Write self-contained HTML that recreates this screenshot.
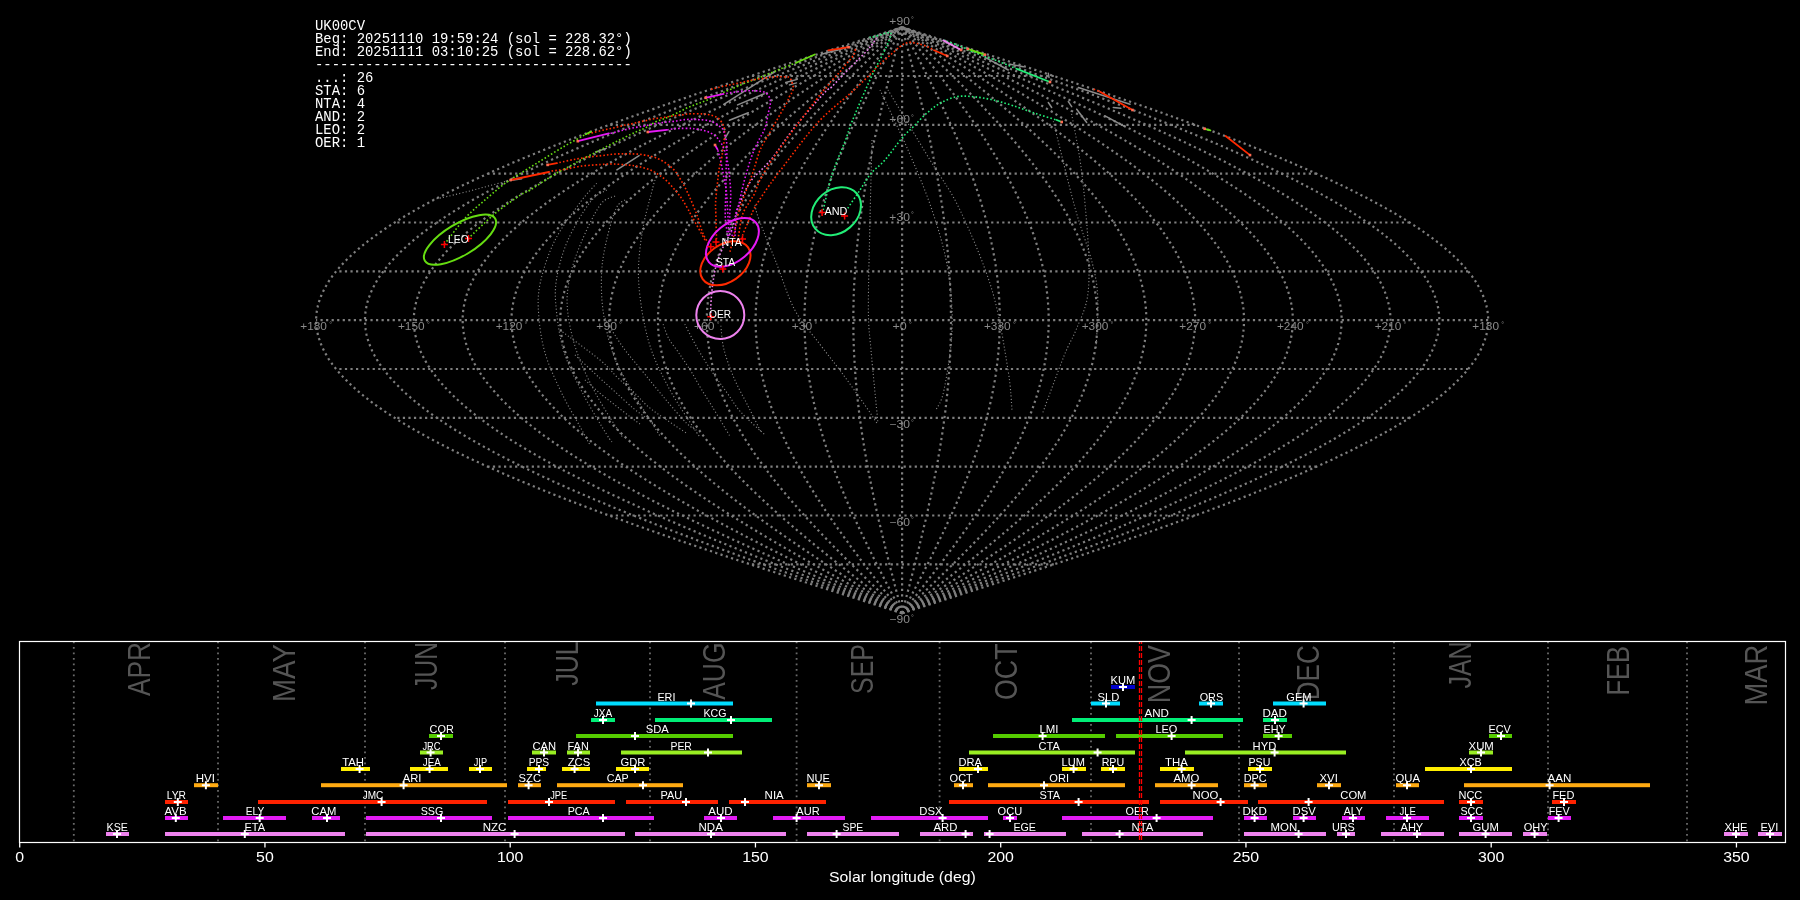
<!DOCTYPE html>
<html><head><meta charset="utf-8"><style>html,body{margin:0;padding:0;background:#000;overflow:hidden}svg{display:block;will-change:transform}</style></head>
<body><svg width="1800" height="900" viewBox="0 0 1800 900">
<rect width="1800" height="900" fill="#000"/>
<g fill="none" stroke="#7f7f7f" stroke-width="2.2" stroke-dasharray="2.2 3.35">
<path d="M902.1,613.2 L907.3,611.6 L912.4,609.9 L917.5,608.3 L922.6,606.7 L927.7,605.1 L932.8,603.4 L937.9,601.8 L943.0,600.2 L948.1,598.6 L953.2,596.9 L958.3,595.3 L963.4,593.7 L968.5,592.0 L973.6,590.4 L978.6,588.8 L983.7,587.2 L988.8,585.5 L993.8,583.9 L998.9,582.3 L1003.9,580.6 L1008.9,579.0 L1014.0,577.4 L1019.0,575.8 L1024.0,574.1 L1029.0,572.5 L1034.0,570.9 L1039.0,569.3 L1043.9,567.6 L1048.9,566.0 L1053.8,564.4 L1058.8,562.7 L1063.7,561.1 L1068.6,559.5 L1073.5,557.9 L1078.4,556.2 L1083.2,554.6 L1088.1,553.0 L1092.9,551.3 L1097.8,549.7 L1102.6,548.1 L1107.4,546.5 L1112.2,544.8 L1116.9,543.2 L1121.7,541.6 L1126.4,540.0 L1131.1,538.3 L1135.8,536.7 L1140.5,535.1 L1145.2,533.4 L1149.8,531.8 L1154.4,530.2 L1159.0,528.6 L1163.6,526.9 L1168.2,525.3 L1172.7,523.7 L1177.3,522.0 L1181.8,520.4 L1186.3,518.8 L1190.7,517.2 L1195.2,515.5 L1199.6,513.9 L1204.0,512.3 L1208.3,510.7 L1212.7,509.0 L1217.0,507.4 L1221.3,505.8 L1225.6,504.1 L1229.8,502.5 L1234.1,500.9 L1238.3,499.3 L1242.4,497.6 L1246.6,496.0 L1250.7,494.4 L1254.8,492.7 L1258.9,491.1 L1262.9,489.5 L1266.9,487.9 L1270.9,486.2 L1274.9,484.6 L1278.8,483.0 L1282.7,481.4 L1286.6,479.7 L1290.5,478.1 L1294.3,476.5 L1298.1,474.8 L1301.8,473.2 L1305.5,471.6 L1309.2,470.0 L1312.9,468.3 L1316.5,466.7 L1320.1,465.1 L1323.7,463.4 L1327.2,461.8 L1330.7,460.2 L1334.2,458.6 L1337.6,456.9 L1341.0,455.3 L1344.4,453.7 L1347.8,452.1 L1351.1,450.4 L1354.3,448.8 L1357.6,447.2 L1360.8,445.5 L1363.9,443.9 L1367.1,442.3 L1370.2,440.7 L1373.2,439.0 L1376.2,437.4 L1379.2,435.8 L1382.2,434.1 L1385.1,432.5 L1388.0,430.9 L1390.8,429.3 L1393.6,427.6 L1396.4,426.0 L1399.1,424.4 L1401.8,422.8 L1404.5,421.1 L1407.1,419.5 L1409.6,417.9 L1412.2,416.2 L1414.7,414.6 L1417.1,413.0 L1419.6,411.4 L1421.9,409.7 L1424.3,408.1 L1426.6,406.5 L1428.9,404.8 L1431.1,403.2 L1433.3,401.6 L1435.4,400.0 L1437.5,398.3 L1439.6,396.7 L1441.6,395.1 L1443.6,393.5 L1445.5,391.8 L1447.4,390.2 L1449.2,388.6 L1451.0,386.9 L1452.8,385.3 L1454.5,383.7 L1456.2,382.1 L1457.9,380.4 L1459.5,378.8 L1461.0,377.2 L1462.6,375.5 L1464.0,373.9 L1465.5,372.3 L1466.8,370.7 L1468.2,369.0 L1469.5,367.4 L1470.8,365.8 L1472.0,364.2 L1473.1,362.5 L1474.3,360.9 L1475.4,359.3 L1476.4,357.6 L1477.4,356.0 L1478.3,354.4 L1479.3,352.8 L1480.1,351.1 L1480.9,349.5 L1481.7,347.9 L1482.5,346.2 L1483.1,344.6 L1483.8,343.0 L1484.4,341.4 L1484.9,339.7 L1485.5,338.1 L1485.9,336.5 L1486.4,334.9 L1486.7,333.2 L1487.1,331.6 L1487.4,330.0 L1487.6,328.3 L1487.8,326.7 L1488.0,325.1 L1488.1,323.5 L1488.1,321.8 L1488.2,320.2 L1488.1,318.6 L1488.1,316.9 L1488.0,315.3 L1487.8,313.7 L1487.6,312.1 L1487.4,310.4 L1487.1,308.8 L1486.7,307.2 L1486.4,305.5 L1485.9,303.9 L1485.5,302.3 L1484.9,300.7 L1484.4,299.0 L1483.8,297.4 L1483.1,295.8 L1482.5,294.2 L1481.7,292.5 L1480.9,290.9 L1480.1,289.3 L1479.3,287.6 L1478.3,286.0 L1477.4,284.4 L1476.4,282.8 L1475.4,281.1 L1474.3,279.5 L1473.1,277.9 L1472.0,276.2 L1470.8,274.6 L1469.5,273.0 L1468.2,271.4 L1466.8,269.7 L1465.5,268.1 L1464.0,266.5 L1462.6,264.9 L1461.0,263.2 L1459.5,261.6 L1457.9,260.0 L1456.2,258.3 L1454.5,256.7 L1452.8,255.1 L1451.0,253.5 L1449.2,251.8 L1447.4,250.2 L1445.5,248.6 L1443.6,246.9 L1441.6,245.3 L1439.6,243.7 L1437.5,242.1 L1435.4,240.4 L1433.3,238.8 L1431.1,237.2 L1428.9,235.6 L1426.6,233.9 L1424.3,232.3 L1421.9,230.7 L1419.6,229.0 L1417.1,227.4 L1414.7,225.8 L1412.2,224.2 L1409.6,222.5 L1407.1,220.9 L1404.5,219.3 L1401.8,217.6 L1399.1,216.0 L1396.4,214.4 L1393.6,212.8 L1390.8,211.1 L1388.0,209.5 L1385.1,207.9 L1382.2,206.3 L1379.2,204.6 L1376.2,203.0 L1373.2,201.4 L1370.2,199.7 L1367.1,198.1 L1363.9,196.5 L1360.8,194.9 L1357.6,193.2 L1354.3,191.6 L1351.1,190.0 L1347.8,188.3 L1344.4,186.7 L1341.0,185.1 L1337.6,183.5 L1334.2,181.8 L1330.7,180.2 L1327.2,178.6 L1323.7,177.0 L1320.1,175.3 L1316.5,173.7 L1312.9,172.1 L1309.2,170.4 L1305.5,168.8 L1301.8,167.2 L1298.1,165.6 L1294.3,163.9 L1290.5,162.3 L1286.6,160.7 L1282.7,159.0 L1278.8,157.4 L1274.9,155.8 L1270.9,154.2 L1266.9,152.5 L1262.9,150.9 L1258.9,149.3 L1254.8,147.7 L1250.7,146.0 L1246.6,144.4 L1242.4,142.8 L1238.3,141.1 L1234.1,139.5 L1229.8,137.9 L1225.6,136.3 L1221.3,134.6 L1217.0,133.0 L1212.7,131.4 L1208.3,129.7 L1204.0,128.1 L1199.6,126.5 L1195.2,124.9 L1190.7,123.2 L1186.3,121.6 L1181.8,120.0 L1177.3,118.4 L1172.7,116.7 L1168.2,115.1 L1163.6,113.5 L1159.0,111.8 L1154.4,110.2 L1149.8,108.6 L1145.2,107.0 L1140.5,105.3 L1135.8,103.7 L1131.1,102.1 L1126.4,100.4 L1121.7,98.8 L1116.9,97.2 L1112.2,95.6 L1107.4,93.9 L1102.6,92.3 L1097.8,90.7 L1092.9,89.1 L1088.1,87.4 L1083.2,85.8 L1078.4,84.2 L1073.5,82.5 L1068.6,80.9 L1063.7,79.3 L1058.8,77.7 L1053.8,76.0 L1048.9,74.4 L1043.9,72.8 L1039.0,71.1 L1034.0,69.5 L1029.0,67.9 L1024.0,66.3 L1019.0,64.6 L1014.0,63.0 L1008.9,61.4 L1003.9,59.8 L998.9,58.1 L993.8,56.5 L988.8,54.9 L983.7,53.2 L978.6,51.6 L973.6,50.0 L968.5,48.4 L963.4,46.7 L958.3,45.1 L953.2,43.5 L948.1,41.8 L943.0,40.2 L937.9,38.6 L932.8,37.0 L927.7,35.3 L922.6,33.7 L917.5,32.1 L912.4,30.5 L907.3,28.8 L902.1,27.2"/>
<path d="M902.1,613.2 L906.8,611.6 L911.5,609.9 L916.2,608.3 L920.9,606.7 L925.6,605.1 L930.3,603.4 L934.9,601.8 L939.6,600.2 L944.3,598.6 L949.0,596.9 L953.6,595.3 L958.3,593.7 L963.0,592.0 L967.6,590.4 L972.3,588.8 L976.9,587.2 L981.5,585.5 L986.2,583.9 L990.8,582.3 L995.4,580.6 L1000.0,579.0 L1004.6,577.4 L1009.2,575.8 L1013.8,574.1 L1018.4,572.5 L1023.0,570.9 L1027.6,569.3 L1032.1,567.6 L1036.6,566.0 L1041.2,564.4 L1045.7,562.7 L1050.2,561.1 L1054.7,559.5 L1059.2,557.9 L1063.7,556.2 L1068.1,554.6 L1072.6,553.0 L1077.0,551.3 L1081.5,549.7 L1085.9,548.1 L1090.3,546.5 L1094.7,544.8 L1099.0,543.2 L1103.4,541.6 L1107.7,540.0 L1112.0,538.3 L1116.3,536.7 L1120.6,535.1 L1124.9,533.4 L1129.2,531.8 L1133.4,530.2 L1137.6,528.6 L1141.8,526.9 L1146.0,525.3 L1150.2,523.7 L1154.3,522.0 L1158.5,520.4 L1162.6,518.8 L1166.7,517.2 L1170.7,515.5 L1174.8,513.9 L1178.8,512.3 L1182.8,510.7 L1186.8,509.0 L1190.8,507.4 L1194.7,505.8 L1198.6,504.1 L1202.5,502.5 L1206.4,500.9 L1210.3,499.3 L1214.1,497.6 L1217.9,496.0 L1221.7,494.4 L1225.4,492.7 L1229.2,491.1 L1232.9,489.5 L1236.5,487.9 L1240.2,486.2 L1243.8,484.6 L1247.4,483.0 L1251.0,481.4 L1254.6,479.7 L1258.1,478.1 L1261.6,476.5 L1265.1,474.8 L1268.5,473.2 L1271.9,471.6 L1275.3,470.0 L1278.7,468.3 L1282.0,466.7 L1285.3,465.1 L1288.6,463.4 L1291.8,461.8 L1295.0,460.2 L1298.2,458.6 L1301.3,456.9 L1304.5,455.3 L1307.6,453.7 L1310.6,452.1 L1313.6,450.4 L1316.6,448.8 L1319.6,447.2 L1322.5,445.5 L1325.4,443.9 L1328.3,442.3 L1331.2,440.7 L1334.0,439.0 L1336.7,437.4 L1339.5,435.8 L1342.2,434.1 L1344.8,432.5 L1347.5,430.9 L1350.1,429.3 L1352.7,427.6 L1355.2,426.0 L1357.7,424.4 L1360.2,422.8 L1362.6,421.1 L1365.0,419.5 L1367.4,417.9 L1369.7,416.2 L1372.0,414.6 L1374.2,413.0 L1376.4,411.4 L1378.6,409.7 L1380.8,408.1 L1382.9,406.5 L1385.0,404.8 L1387.0,403.2 L1389.0,401.6 L1391.0,400.0 L1392.9,398.3 L1394.8,396.7 L1396.6,395.1 L1398.4,393.5 L1400.2,391.8 L1401.9,390.2 L1403.6,388.6 L1405.3,386.9 L1406.9,385.3 L1408.5,383.7 L1410.1,382.1 L1411.6,380.4 L1413.0,378.8 L1414.5,377.2 L1415.9,375.5 L1417.2,373.9 L1418.5,372.3 L1419.8,370.7 L1421.0,369.0 L1422.2,367.4 L1423.4,365.8 L1424.5,364.2 L1425.6,362.5 L1426.6,360.9 L1427.6,359.3 L1428.5,357.6 L1429.5,356.0 L1430.3,354.4 L1431.2,352.8 L1432.0,351.1 L1432.7,349.5 L1433.4,347.9 L1434.1,346.2 L1434.7,344.6 L1435.3,343.0 L1435.9,341.4 L1436.4,339.7 L1436.9,338.1 L1437.3,336.5 L1437.7,334.9 L1438.0,333.2 L1438.3,331.6 L1438.6,330.0 L1438.8,328.3 L1439.0,326.7 L1439.1,325.1 L1439.2,323.5 L1439.3,321.8 L1439.3,320.2 L1439.3,318.6 L1439.2,316.9 L1439.1,315.3 L1439.0,313.7 L1438.8,312.1 L1438.6,310.4 L1438.3,308.8 L1438.0,307.2 L1437.7,305.5 L1437.3,303.9 L1436.9,302.3 L1436.4,300.7 L1435.9,299.0 L1435.3,297.4 L1434.7,295.8 L1434.1,294.2 L1433.4,292.5 L1432.7,290.9 L1432.0,289.3 L1431.2,287.6 L1430.3,286.0 L1429.5,284.4 L1428.5,282.8 L1427.6,281.1 L1426.6,279.5 L1425.6,277.9 L1424.5,276.2 L1423.4,274.6 L1422.2,273.0 L1421.0,271.4 L1419.8,269.7 L1418.5,268.1 L1417.2,266.5 L1415.9,264.9 L1414.5,263.2 L1413.0,261.6 L1411.6,260.0 L1410.1,258.3 L1408.5,256.7 L1406.9,255.1 L1405.3,253.5 L1403.6,251.8 L1401.9,250.2 L1400.2,248.6 L1398.4,246.9 L1396.6,245.3 L1394.8,243.7 L1392.9,242.1 L1391.0,240.4 L1389.0,238.8 L1387.0,237.2 L1385.0,235.6 L1382.9,233.9 L1380.8,232.3 L1378.6,230.7 L1376.4,229.0 L1374.2,227.4 L1372.0,225.8 L1369.7,224.2 L1367.4,222.5 L1365.0,220.9 L1362.6,219.3 L1360.2,217.6 L1357.7,216.0 L1355.2,214.4 L1352.7,212.8 L1350.1,211.1 L1347.5,209.5 L1344.8,207.9 L1342.2,206.3 L1339.5,204.6 L1336.7,203.0 L1334.0,201.4 L1331.2,199.7 L1328.3,198.1 L1325.4,196.5 L1322.5,194.9 L1319.6,193.2 L1316.6,191.6 L1313.6,190.0 L1310.6,188.3 L1307.6,186.7 L1304.5,185.1 L1301.3,183.5 L1298.2,181.8 L1295.0,180.2 L1291.8,178.6 L1288.6,177.0 L1285.3,175.3 L1282.0,173.7 L1278.7,172.1 L1275.3,170.4 L1271.9,168.8 L1268.5,167.2 L1265.1,165.6 L1261.6,163.9 L1258.1,162.3 L1254.6,160.7 L1251.0,159.0 L1247.4,157.4 L1243.8,155.8 L1240.2,154.2 L1236.5,152.5 L1232.9,150.9 L1229.2,149.3 L1225.4,147.7 L1221.7,146.0 L1217.9,144.4 L1214.1,142.8 L1210.3,141.1 L1206.4,139.5 L1202.5,137.9 L1198.6,136.3 L1194.7,134.6 L1190.8,133.0 L1186.8,131.4 L1182.8,129.7 L1178.8,128.1 L1174.8,126.5 L1170.7,124.9 L1166.7,123.2 L1162.6,121.6 L1158.5,120.0 L1154.3,118.4 L1150.2,116.7 L1146.0,115.1 L1141.8,113.5 L1137.6,111.8 L1133.4,110.2 L1129.2,108.6 L1124.9,107.0 L1120.6,105.3 L1116.3,103.7 L1112.0,102.1 L1107.7,100.4 L1103.4,98.8 L1099.0,97.2 L1094.7,95.6 L1090.3,93.9 L1085.9,92.3 L1081.5,90.7 L1077.0,89.1 L1072.6,87.4 L1068.1,85.8 L1063.7,84.2 L1059.2,82.5 L1054.7,80.9 L1050.2,79.3 L1045.7,77.7 L1041.2,76.0 L1036.6,74.4 L1032.1,72.8 L1027.6,71.1 L1023.0,69.5 L1018.4,67.9 L1013.8,66.3 L1009.2,64.6 L1004.6,63.0 L1000.0,61.4 L995.4,59.8 L990.8,58.1 L986.2,56.5 L981.5,54.9 L976.9,53.2 L972.3,51.6 L967.6,50.0 L963.0,48.4 L958.3,46.7 L953.6,45.1 L949.0,43.5 L944.3,41.8 L939.6,40.2 L934.9,38.6 L930.3,37.0 L925.6,35.3 L920.9,33.7 L916.2,32.1 L911.5,30.5 L906.8,28.8 L902.1,27.2"/>
<path d="M902.1,613.2 L906.4,611.6 L910.7,609.9 L914.9,608.3 L919.2,606.7 L923.5,605.1 L927.7,603.4 L932.0,601.8 L936.2,600.2 L940.5,598.6 L944.7,596.9 L949.0,595.3 L953.2,593.7 L957.4,592.0 L961.7,590.4 L965.9,588.8 L970.1,587.2 L974.3,585.5 L978.5,583.9 L982.7,582.3 L986.9,580.6 L991.1,579.0 L995.3,577.4 L999.5,575.8 L1003.7,574.1 L1007.8,572.5 L1012.0,570.9 L1016.2,569.3 L1020.3,567.6 L1024.4,566.0 L1028.5,564.4 L1032.7,562.7 L1036.8,561.1 L1040.8,559.5 L1044.9,557.9 L1049.0,556.2 L1053.1,554.6 L1057.1,553.0 L1061.1,551.3 L1065.2,549.7 L1069.2,548.1 L1073.2,546.5 L1077.2,544.8 L1081.1,543.2 L1085.1,541.6 L1089.0,540.0 L1093.0,538.3 L1096.9,536.7 L1100.8,535.1 L1104.7,533.4 L1108.5,531.8 L1112.4,530.2 L1116.2,528.6 L1120.0,526.9 L1123.9,525.3 L1127.6,523.7 L1131.4,522.0 L1135.2,520.4 L1138.9,518.8 L1142.6,517.2 L1146.3,515.5 L1150.0,513.9 L1153.7,512.3 L1157.3,510.7 L1160.9,509.0 L1164.5,507.4 L1168.1,505.8 L1171.7,504.1 L1175.2,502.5 L1178.7,500.9 L1182.3,499.3 L1185.7,497.6 L1189.2,496.0 L1192.6,494.4 L1196.0,492.7 L1199.4,491.1 L1202.8,489.5 L1206.1,487.9 L1209.5,486.2 L1212.8,484.6 L1216.0,483.0 L1219.3,481.4 L1222.5,479.7 L1225.7,478.1 L1228.9,476.5 L1232.1,474.8 L1235.2,473.2 L1238.3,471.6 L1241.4,470.0 L1244.4,468.3 L1247.5,466.7 L1250.5,465.1 L1253.4,463.4 L1256.4,461.8 L1259.3,460.2 L1262.2,458.6 L1265.1,456.9 L1267.9,455.3 L1270.7,453.7 L1273.5,452.1 L1276.2,450.4 L1279.0,448.8 L1281.7,447.2 L1284.3,445.5 L1287.0,443.9 L1289.6,442.3 L1292.2,440.7 L1294.7,439.0 L1297.2,437.4 L1299.7,435.8 L1302.2,434.1 L1304.6,432.5 L1307.0,430.9 L1309.4,429.3 L1311.7,427.6 L1314.0,426.0 L1316.3,424.4 L1318.5,422.8 L1320.7,421.1 L1322.9,419.5 L1325.1,417.9 L1327.2,416.2 L1329.3,414.6 L1331.3,413.0 L1333.3,411.4 L1335.3,409.7 L1337.3,408.1 L1339.2,406.5 L1341.1,404.8 L1342.9,403.2 L1344.7,401.6 L1346.5,400.0 L1348.3,398.3 L1350.0,396.7 L1351.7,395.1 L1353.3,393.5 L1354.9,391.8 L1356.5,390.2 L1358.1,388.6 L1359.6,386.9 L1361.0,385.3 L1362.5,383.7 L1363.9,382.1 L1365.3,380.4 L1366.6,378.8 L1367.9,377.2 L1369.2,375.5 L1370.4,373.9 L1371.6,372.3 L1372.7,370.7 L1373.9,369.0 L1374.9,367.4 L1376.0,365.8 L1377.0,364.2 L1378.0,362.5 L1378.9,360.9 L1379.8,359.3 L1380.7,357.6 L1381.5,356.0 L1382.3,354.4 L1383.1,352.8 L1383.8,351.1 L1384.5,349.5 L1385.1,347.9 L1385.7,346.2 L1386.3,344.6 L1386.8,343.0 L1387.4,341.4 L1387.8,339.7 L1388.2,338.1 L1388.6,336.5 L1389.0,334.9 L1389.3,333.2 L1389.6,331.6 L1389.8,330.0 L1390.0,328.3 L1390.2,326.7 L1390.3,325.1 L1390.4,323.5 L1390.5,321.8 L1390.5,320.2 L1390.5,318.6 L1390.4,316.9 L1390.3,315.3 L1390.2,313.7 L1390.0,312.1 L1389.8,310.4 L1389.6,308.8 L1389.3,307.2 L1389.0,305.5 L1388.6,303.9 L1388.2,302.3 L1387.8,300.7 L1387.4,299.0 L1386.8,297.4 L1386.3,295.8 L1385.7,294.2 L1385.1,292.5 L1384.5,290.9 L1383.8,289.3 L1383.1,287.6 L1382.3,286.0 L1381.5,284.4 L1380.7,282.8 L1379.8,281.1 L1378.9,279.5 L1378.0,277.9 L1377.0,276.2 L1376.0,274.6 L1374.9,273.0 L1373.9,271.4 L1372.7,269.7 L1371.6,268.1 L1370.4,266.5 L1369.2,264.9 L1367.9,263.2 L1366.6,261.6 L1365.3,260.0 L1363.9,258.3 L1362.5,256.7 L1361.0,255.1 L1359.6,253.5 L1358.1,251.8 L1356.5,250.2 L1354.9,248.6 L1353.3,246.9 L1351.7,245.3 L1350.0,243.7 L1348.3,242.1 L1346.5,240.4 L1344.7,238.8 L1342.9,237.2 L1341.1,235.6 L1339.2,233.9 L1337.3,232.3 L1335.3,230.7 L1333.3,229.0 L1331.3,227.4 L1329.3,225.8 L1327.2,224.2 L1325.1,222.5 L1322.9,220.9 L1320.7,219.3 L1318.5,217.6 L1316.3,216.0 L1314.0,214.4 L1311.7,212.8 L1309.4,211.1 L1307.0,209.5 L1304.6,207.9 L1302.2,206.3 L1299.7,204.6 L1297.2,203.0 L1294.7,201.4 L1292.2,199.7 L1289.6,198.1 L1287.0,196.5 L1284.3,194.9 L1281.7,193.2 L1279.0,191.6 L1276.2,190.0 L1273.5,188.3 L1270.7,186.7 L1267.9,185.1 L1265.1,183.5 L1262.2,181.8 L1259.3,180.2 L1256.4,178.6 L1253.4,177.0 L1250.5,175.3 L1247.5,173.7 L1244.4,172.1 L1241.4,170.4 L1238.3,168.8 L1235.2,167.2 L1232.1,165.6 L1228.9,163.9 L1225.7,162.3 L1222.5,160.7 L1219.3,159.0 L1216.0,157.4 L1212.8,155.8 L1209.5,154.2 L1206.1,152.5 L1202.8,150.9 L1199.4,149.3 L1196.0,147.7 L1192.6,146.0 L1189.2,144.4 L1185.7,142.8 L1182.3,141.1 L1178.7,139.5 L1175.2,137.9 L1171.7,136.3 L1168.1,134.6 L1164.5,133.0 L1160.9,131.4 L1157.3,129.7 L1153.7,128.1 L1150.0,126.5 L1146.3,124.9 L1142.6,123.2 L1138.9,121.6 L1135.2,120.0 L1131.4,118.4 L1127.6,116.7 L1123.9,115.1 L1120.0,113.5 L1116.2,111.8 L1112.4,110.2 L1108.5,108.6 L1104.7,107.0 L1100.8,105.3 L1096.9,103.7 L1093.0,102.1 L1089.0,100.4 L1085.1,98.8 L1081.1,97.2 L1077.2,95.6 L1073.2,93.9 L1069.2,92.3 L1065.2,90.7 L1061.1,89.1 L1057.1,87.4 L1053.1,85.8 L1049.0,84.2 L1044.9,82.5 L1040.8,80.9 L1036.8,79.3 L1032.7,77.7 L1028.5,76.0 L1024.4,74.4 L1020.3,72.8 L1016.2,71.1 L1012.0,69.5 L1007.8,67.9 L1003.7,66.3 L999.5,64.6 L995.3,63.0 L991.1,61.4 L986.9,59.8 L982.7,58.1 L978.5,56.5 L974.3,54.9 L970.1,53.2 L965.9,51.6 L961.7,50.0 L957.4,48.4 L953.2,46.7 L949.0,45.1 L944.7,43.5 L940.5,41.8 L936.2,40.2 L932.0,38.6 L927.7,37.0 L923.5,35.3 L919.2,33.7 L914.9,32.1 L910.7,30.5 L906.4,28.8 L902.1,27.2"/>
<path d="M902.1,613.2 L906.0,611.6 L909.8,609.9 L913.7,608.3 L917.5,606.7 L921.3,605.1 L925.2,603.4 L929.0,601.8 L932.8,600.2 L936.6,598.6 L940.5,596.9 L944.3,595.3 L948.1,593.7 L951.9,592.0 L955.7,590.4 L959.5,588.8 L963.3,587.2 L967.1,585.5 L970.9,583.9 L974.7,582.3 L978.5,580.6 L982.2,579.0 L986.0,577.4 L989.8,575.8 L993.5,574.1 L997.3,572.5 L1001.0,570.9 L1004.8,569.3 L1008.5,567.6 L1012.2,566.0 L1015.9,564.4 L1019.6,562.7 L1023.3,561.1 L1027.0,559.5 L1030.6,557.9 L1034.3,556.2 L1038.0,554.6 L1041.6,553.0 L1045.2,551.3 L1048.9,549.7 L1052.5,548.1 L1056.1,546.5 L1059.7,544.8 L1063.2,543.2 L1066.8,541.6 L1070.3,540.0 L1073.9,538.3 L1077.4,536.7 L1080.9,535.1 L1084.4,533.4 L1087.9,531.8 L1091.4,530.2 L1094.8,528.6 L1098.3,526.9 L1101.7,525.3 L1105.1,523.7 L1108.5,522.0 L1111.9,520.4 L1115.2,518.8 L1118.6,517.2 L1121.9,515.5 L1125.2,513.9 L1128.5,512.3 L1131.8,510.7 L1135.1,509.0 L1138.3,507.4 L1141.5,505.8 L1144.7,504.1 L1147.9,502.5 L1151.1,500.9 L1154.2,499.3 L1157.4,497.6 L1160.5,496.0 L1163.6,494.4 L1166.7,492.7 L1169.7,491.1 L1172.7,489.5 L1175.7,487.9 L1178.7,486.2 L1181.7,484.6 L1184.7,483.0 L1187.6,481.4 L1190.5,479.7 L1193.4,478.1 L1196.2,476.5 L1199.1,474.8 L1201.9,473.2 L1204.7,471.6 L1207.5,470.0 L1210.2,468.3 L1212.9,466.7 L1215.6,465.1 L1218.3,463.4 L1221.0,461.8 L1223.6,460.2 L1226.2,458.6 L1228.8,456.9 L1231.3,455.3 L1233.8,453.7 L1236.4,452.1 L1238.8,450.4 L1241.3,448.8 L1243.7,447.2 L1246.1,445.5 L1248.5,443.9 L1250.8,442.3 L1253.2,440.7 L1255.4,439.0 L1257.7,437.4 L1260.0,435.8 L1262.2,434.1 L1264.4,432.5 L1266.5,430.9 L1268.6,429.3 L1270.8,427.6 L1272.8,426.0 L1274.9,424.4 L1276.9,422.8 L1278.9,421.1 L1280.8,419.5 L1282.8,417.9 L1284.7,416.2 L1286.6,414.6 L1288.4,413.0 L1290.2,411.4 L1292.0,409.7 L1293.8,408.1 L1295.5,406.5 L1297.2,404.8 L1298.8,403.2 L1300.5,401.6 L1302.1,400.0 L1303.7,398.3 L1305.2,396.7 L1306.7,395.1 L1308.2,393.5 L1309.7,391.8 L1311.1,390.2 L1312.5,388.6 L1313.8,386.9 L1315.2,385.3 L1316.4,383.7 L1317.7,382.1 L1318.9,380.4 L1320.1,378.8 L1321.3,377.2 L1322.5,375.5 L1323.6,373.9 L1324.6,372.3 L1325.7,370.7 L1326.7,369.0 L1327.7,367.4 L1328.6,365.8 L1329.5,364.2 L1330.4,362.5 L1331.2,360.9 L1332.1,359.3 L1332.8,357.6 L1333.6,356.0 L1334.3,354.4 L1335.0,352.8 L1335.6,351.1 L1336.2,349.5 L1336.8,347.9 L1337.4,346.2 L1337.9,344.6 L1338.4,343.0 L1338.8,341.4 L1339.2,339.7 L1339.6,338.1 L1340.0,336.5 L1340.3,334.9 L1340.6,333.2 L1340.8,331.6 L1341.1,330.0 L1341.2,328.3 L1341.4,326.7 L1341.5,325.1 L1341.6,323.5 L1341.6,321.8 L1341.7,320.2 L1341.6,318.6 L1341.6,316.9 L1341.5,315.3 L1341.4,313.7 L1341.2,312.1 L1341.1,310.4 L1340.8,308.8 L1340.6,307.2 L1340.3,305.5 L1340.0,303.9 L1339.6,302.3 L1339.2,300.7 L1338.8,299.0 L1338.4,297.4 L1337.9,295.8 L1337.4,294.2 L1336.8,292.5 L1336.2,290.9 L1335.6,289.3 L1335.0,287.6 L1334.3,286.0 L1333.6,284.4 L1332.8,282.8 L1332.1,281.1 L1331.2,279.5 L1330.4,277.9 L1329.5,276.2 L1328.6,274.6 L1327.7,273.0 L1326.7,271.4 L1325.7,269.7 L1324.6,268.1 L1323.6,266.5 L1322.5,264.9 L1321.3,263.2 L1320.1,261.6 L1318.9,260.0 L1317.7,258.3 L1316.4,256.7 L1315.2,255.1 L1313.8,253.5 L1312.5,251.8 L1311.1,250.2 L1309.7,248.6 L1308.2,246.9 L1306.7,245.3 L1305.2,243.7 L1303.7,242.1 L1302.1,240.4 L1300.5,238.8 L1298.8,237.2 L1297.2,235.6 L1295.5,233.9 L1293.8,232.3 L1292.0,230.7 L1290.2,229.0 L1288.4,227.4 L1286.6,225.8 L1284.7,224.2 L1282.8,222.5 L1280.8,220.9 L1278.9,219.3 L1276.9,217.6 L1274.9,216.0 L1272.8,214.4 L1270.8,212.8 L1268.6,211.1 L1266.5,209.5 L1264.4,207.9 L1262.2,206.3 L1260.0,204.6 L1257.7,203.0 L1255.4,201.4 L1253.2,199.7 L1250.8,198.1 L1248.5,196.5 L1246.1,194.9 L1243.7,193.2 L1241.3,191.6 L1238.8,190.0 L1236.4,188.3 L1233.8,186.7 L1231.3,185.1 L1228.8,183.5 L1226.2,181.8 L1223.6,180.2 L1221.0,178.6 L1218.3,177.0 L1215.6,175.3 L1212.9,173.7 L1210.2,172.1 L1207.5,170.4 L1204.7,168.8 L1201.9,167.2 L1199.1,165.6 L1196.2,163.9 L1193.4,162.3 L1190.5,160.7 L1187.6,159.0 L1184.7,157.4 L1181.7,155.8 L1178.7,154.2 L1175.7,152.5 L1172.7,150.9 L1169.7,149.3 L1166.7,147.7 L1163.6,146.0 L1160.5,144.4 L1157.4,142.8 L1154.2,141.1 L1151.1,139.5 L1147.9,137.9 L1144.7,136.3 L1141.5,134.6 L1138.3,133.0 L1135.1,131.4 L1131.8,129.7 L1128.5,128.1 L1125.2,126.5 L1121.9,124.9 L1118.6,123.2 L1115.2,121.6 L1111.9,120.0 L1108.5,118.4 L1105.1,116.7 L1101.7,115.1 L1098.3,113.5 L1094.8,111.8 L1091.4,110.2 L1087.9,108.6 L1084.4,107.0 L1080.9,105.3 L1077.4,103.7 L1073.9,102.1 L1070.3,100.4 L1066.8,98.8 L1063.2,97.2 L1059.7,95.6 L1056.1,93.9 L1052.5,92.3 L1048.9,90.7 L1045.2,89.1 L1041.6,87.4 L1038.0,85.8 L1034.3,84.2 L1030.6,82.5 L1027.0,80.9 L1023.3,79.3 L1019.6,77.7 L1015.9,76.0 L1012.2,74.4 L1008.5,72.8 L1004.8,71.1 L1001.0,69.5 L997.3,67.9 L993.5,66.3 L989.8,64.6 L986.0,63.0 L982.2,61.4 L978.5,59.8 L974.7,58.1 L970.9,56.5 L967.1,54.9 L963.3,53.2 L959.5,51.6 L955.7,50.0 L951.9,48.4 L948.1,46.7 L944.3,45.1 L940.5,43.5 L936.6,41.8 L932.8,40.2 L929.0,38.6 L925.2,37.0 L921.3,35.3 L917.5,33.7 L913.7,32.1 L909.8,30.5 L906.0,28.8 L902.1,27.2"/>
<path d="M902.1,613.2 L905.6,611.6 L909.0,609.9 L912.4,608.3 L915.8,606.7 L919.2,605.1 L922.6,603.4 L926.0,601.8 L929.4,600.2 L932.8,598.6 L936.2,596.9 L939.6,595.3 L943.0,593.7 L946.4,592.0 L949.8,590.4 L953.1,588.8 L956.5,587.2 L959.9,585.5 L963.3,583.9 L966.6,582.3 L970.0,580.6 L973.3,579.0 L976.7,577.4 L980.0,575.8 L983.4,574.1 L986.7,572.5 L990.0,570.9 L993.4,569.3 L996.7,567.6 L1000.0,566.0 L1003.3,564.4 L1006.6,562.7 L1009.8,561.1 L1013.1,559.5 L1016.4,557.9 L1019.6,556.2 L1022.9,554.6 L1026.1,553.0 L1029.3,551.3 L1032.6,549.7 L1035.8,548.1 L1039.0,546.5 L1042.2,544.8 L1045.3,543.2 L1048.5,541.6 L1051.7,540.0 L1054.8,538.3 L1057.9,536.7 L1061.1,535.1 L1064.2,533.4 L1067.3,531.8 L1070.3,530.2 L1073.4,528.6 L1076.5,526.9 L1079.5,525.3 L1082.5,523.7 L1085.6,522.0 L1088.6,520.4 L1091.6,518.8 L1094.5,517.2 L1097.5,515.5 L1100.4,513.9 L1103.4,512.3 L1106.3,510.7 L1109.2,509.0 L1112.1,507.4 L1114.9,505.8 L1117.8,504.1 L1120.6,502.5 L1123.4,500.9 L1126.2,499.3 L1129.0,497.6 L1131.8,496.0 L1134.5,494.4 L1137.3,492.7 L1140.0,491.1 L1142.7,489.5 L1145.3,487.9 L1148.0,486.2 L1150.6,484.6 L1153.3,483.0 L1155.9,481.4 L1158.5,479.7 L1161.0,478.1 L1163.6,476.5 L1166.1,474.8 L1168.6,473.2 L1171.1,471.6 L1173.5,470.0 L1176.0,468.3 L1178.4,466.7 L1180.8,465.1 L1183.2,463.4 L1185.5,461.8 L1187.9,460.2 L1190.2,458.6 L1192.5,456.9 L1194.7,455.3 L1197.0,453.7 L1199.2,452.1 L1201.4,450.4 L1203.6,448.8 L1205.8,447.2 L1207.9,445.5 L1210.0,443.9 L1212.1,442.3 L1214.2,440.7 L1216.2,439.0 L1218.2,437.4 L1220.2,435.8 L1222.2,434.1 L1224.1,432.5 L1226.0,430.9 L1227.9,429.3 L1229.8,427.6 L1231.6,426.0 L1233.5,424.4 L1235.3,422.8 L1237.0,421.1 L1238.8,419.5 L1240.5,417.9 L1242.2,416.2 L1243.8,414.6 L1245.5,413.0 L1247.1,411.4 L1248.7,409.7 L1250.2,408.1 L1251.8,406.5 L1253.3,404.8 L1254.8,403.2 L1256.2,401.6 L1257.6,400.0 L1259.0,398.3 L1260.4,396.7 L1261.8,395.1 L1263.1,393.5 L1264.4,391.8 L1265.6,390.2 L1266.9,388.6 L1268.1,386.9 L1269.3,385.3 L1270.4,383.7 L1271.5,382.1 L1272.6,380.4 L1273.7,378.8 L1274.7,377.2 L1275.8,375.5 L1276.7,373.9 L1277.7,372.3 L1278.6,370.7 L1279.5,369.0 L1280.4,367.4 L1281.2,365.8 L1282.0,364.2 L1282.8,362.5 L1283.6,360.9 L1284.3,359.3 L1285.0,357.6 L1285.6,356.0 L1286.3,354.4 L1286.9,352.8 L1287.5,351.1 L1288.0,349.5 L1288.5,347.9 L1289.0,346.2 L1289.5,344.6 L1289.9,343.0 L1290.3,341.4 L1290.7,339.7 L1291.0,338.1 L1291.3,336.5 L1291.6,334.9 L1291.9,333.2 L1292.1,331.6 L1292.3,330.0 L1292.5,328.3 L1292.6,326.7 L1292.7,325.1 L1292.8,323.5 L1292.8,321.8 L1292.8,320.2 L1292.8,318.6 L1292.8,316.9 L1292.7,315.3 L1292.6,313.7 L1292.5,312.1 L1292.3,310.4 L1292.1,308.8 L1291.9,307.2 L1291.6,305.5 L1291.3,303.9 L1291.0,302.3 L1290.7,300.7 L1290.3,299.0 L1289.9,297.4 L1289.5,295.8 L1289.0,294.2 L1288.5,292.5 L1288.0,290.9 L1287.5,289.3 L1286.9,287.6 L1286.3,286.0 L1285.6,284.4 L1285.0,282.8 L1284.3,281.1 L1283.6,279.5 L1282.8,277.9 L1282.0,276.2 L1281.2,274.6 L1280.4,273.0 L1279.5,271.4 L1278.6,269.7 L1277.7,268.1 L1276.7,266.5 L1275.8,264.9 L1274.7,263.2 L1273.7,261.6 L1272.6,260.0 L1271.5,258.3 L1270.4,256.7 L1269.3,255.1 L1268.1,253.5 L1266.9,251.8 L1265.6,250.2 L1264.4,248.6 L1263.1,246.9 L1261.8,245.3 L1260.4,243.7 L1259.0,242.1 L1257.6,240.4 L1256.2,238.8 L1254.8,237.2 L1253.3,235.6 L1251.8,233.9 L1250.2,232.3 L1248.7,230.7 L1247.1,229.0 L1245.5,227.4 L1243.8,225.8 L1242.2,224.2 L1240.5,222.5 L1238.8,220.9 L1237.0,219.3 L1235.3,217.6 L1233.5,216.0 L1231.6,214.4 L1229.8,212.8 L1227.9,211.1 L1226.0,209.5 L1224.1,207.9 L1222.2,206.3 L1220.2,204.6 L1218.2,203.0 L1216.2,201.4 L1214.2,199.7 L1212.1,198.1 L1210.0,196.5 L1207.9,194.9 L1205.8,193.2 L1203.6,191.6 L1201.4,190.0 L1199.2,188.3 L1197.0,186.7 L1194.7,185.1 L1192.5,183.5 L1190.2,181.8 L1187.9,180.2 L1185.5,178.6 L1183.2,177.0 L1180.8,175.3 L1178.4,173.7 L1176.0,172.1 L1173.5,170.4 L1171.1,168.8 L1168.6,167.2 L1166.1,165.6 L1163.6,163.9 L1161.0,162.3 L1158.5,160.7 L1155.9,159.0 L1153.3,157.4 L1150.6,155.8 L1148.0,154.2 L1145.3,152.5 L1142.7,150.9 L1140.0,149.3 L1137.3,147.7 L1134.5,146.0 L1131.8,144.4 L1129.0,142.8 L1126.2,141.1 L1123.4,139.5 L1120.6,137.9 L1117.8,136.3 L1114.9,134.6 L1112.1,133.0 L1109.2,131.4 L1106.3,129.7 L1103.4,128.1 L1100.4,126.5 L1097.5,124.9 L1094.5,123.2 L1091.6,121.6 L1088.6,120.0 L1085.6,118.4 L1082.5,116.7 L1079.5,115.1 L1076.5,113.5 L1073.4,111.8 L1070.3,110.2 L1067.3,108.6 L1064.2,107.0 L1061.1,105.3 L1057.9,103.7 L1054.8,102.1 L1051.7,100.4 L1048.5,98.8 L1045.3,97.2 L1042.2,95.6 L1039.0,93.9 L1035.8,92.3 L1032.6,90.7 L1029.3,89.1 L1026.1,87.4 L1022.9,85.8 L1019.6,84.2 L1016.4,82.5 L1013.1,80.9 L1009.8,79.3 L1006.6,77.7 L1003.3,76.0 L1000.0,74.4 L996.7,72.8 L993.4,71.1 L990.0,69.5 L986.7,67.9 L983.4,66.3 L980.0,64.6 L976.7,63.0 L973.3,61.4 L970.0,59.8 L966.6,58.1 L963.3,56.5 L959.9,54.9 L956.5,53.2 L953.1,51.6 L949.8,50.0 L946.4,48.4 L943.0,46.7 L939.6,45.1 L936.2,43.5 L932.8,41.8 L929.4,40.2 L926.0,38.6 L922.6,37.0 L919.2,35.3 L915.8,33.7 L912.4,32.1 L909.0,30.5 L905.6,28.8 L902.1,27.2"/>
<path d="M902.1,613.2 L905.1,611.6 L908.1,609.9 L911.1,608.3 L914.1,606.7 L917.1,605.1 L920.0,603.4 L923.0,601.8 L926.0,600.2 L929.0,598.6 L931.9,596.9 L934.9,595.3 L937.9,593.7 L940.8,592.0 L943.8,590.4 L946.8,588.8 L949.7,587.2 L952.7,585.5 L955.6,583.9 L958.6,582.3 L961.5,580.6 L964.4,579.0 L967.4,577.4 L970.3,575.8 L973.2,574.1 L976.1,572.5 L979.0,570.9 L982.0,569.3 L984.8,567.6 L987.7,566.0 L990.6,564.4 L993.5,562.7 L996.4,561.1 L999.2,559.5 L1002.1,557.9 L1004.9,556.2 L1007.8,554.6 L1010.6,553.0 L1013.4,551.3 L1016.3,549.7 L1019.1,548.1 L1021.9,546.5 L1024.7,544.8 L1027.4,543.2 L1030.2,541.6 L1033.0,540.0 L1035.7,538.3 L1038.5,536.7 L1041.2,535.1 L1043.9,533.4 L1046.6,531.8 L1049.3,530.2 L1052.0,528.6 L1054.7,526.9 L1057.3,525.3 L1060.0,523.7 L1062.6,522.0 L1065.3,520.4 L1067.9,518.8 L1070.5,517.2 L1073.1,515.5 L1075.6,513.9 L1078.2,512.3 L1080.8,510.7 L1083.3,509.0 L1085.8,507.4 L1088.3,505.8 L1090.8,504.1 L1093.3,502.5 L1095.8,500.9 L1098.2,499.3 L1100.7,497.6 L1103.1,496.0 L1105.5,494.4 L1107.9,492.7 L1110.2,491.1 L1112.6,489.5 L1114.9,487.9 L1117.3,486.2 L1119.6,484.6 L1121.9,483.0 L1124.2,481.4 L1126.4,479.7 L1128.7,478.1 L1130.9,476.5 L1133.1,474.8 L1135.3,473.2 L1137.5,471.6 L1139.6,470.0 L1141.7,468.3 L1143.9,466.7 L1146.0,465.1 L1148.0,463.4 L1150.1,461.8 L1152.2,460.2 L1154.2,458.6 L1156.2,456.9 L1158.2,455.3 L1160.1,453.7 L1162.1,452.1 L1164.0,450.4 L1165.9,448.8 L1167.8,447.2 L1169.7,445.5 L1171.5,443.9 L1173.3,442.3 L1175.2,440.7 L1176.9,439.0 L1178.7,437.4 L1180.4,435.8 L1182.2,434.1 L1183.9,432.5 L1185.5,430.9 L1187.2,429.3 L1188.8,427.6 L1190.5,426.0 L1192.0,424.4 L1193.6,422.8 L1195.2,421.1 L1196.7,419.5 L1198.2,417.9 L1199.7,416.2 L1201.1,414.6 L1202.6,413.0 L1204.0,411.4 L1205.4,409.7 L1206.7,408.1 L1208.1,406.5 L1209.4,404.8 L1210.7,403.2 L1212.0,401.6 L1213.2,400.0 L1214.4,398.3 L1215.6,396.7 L1216.8,395.1 L1218.0,393.5 L1219.1,391.8 L1220.2,390.2 L1221.3,388.6 L1222.3,386.9 L1223.4,385.3 L1224.4,383.7 L1225.4,382.1 L1226.3,380.4 L1227.3,378.8 L1228.2,377.2 L1229.1,375.5 L1229.9,373.9 L1230.7,372.3 L1231.6,370.7 L1232.3,369.0 L1233.1,367.4 L1233.8,365.8 L1234.5,364.2 L1235.2,362.5 L1235.9,360.9 L1236.5,359.3 L1237.1,357.6 L1237.7,356.0 L1238.3,354.4 L1238.8,352.8 L1239.3,351.1 L1239.8,349.5 L1240.2,347.9 L1240.7,346.2 L1241.1,344.6 L1241.4,343.0 L1241.8,341.4 L1242.1,339.7 L1242.4,338.1 L1242.7,336.5 L1242.9,334.9 L1243.2,333.2 L1243.4,331.6 L1243.5,330.0 L1243.7,328.3 L1243.8,326.7 L1243.9,325.1 L1243.9,323.5 L1244.0,321.8 L1244.0,320.2 L1244.0,318.6 L1243.9,316.9 L1243.9,315.3 L1243.8,313.7 L1243.7,312.1 L1243.5,310.4 L1243.4,308.8 L1243.2,307.2 L1242.9,305.5 L1242.7,303.9 L1242.4,302.3 L1242.1,300.7 L1241.8,299.0 L1241.4,297.4 L1241.1,295.8 L1240.7,294.2 L1240.2,292.5 L1239.8,290.9 L1239.3,289.3 L1238.8,287.6 L1238.3,286.0 L1237.7,284.4 L1237.1,282.8 L1236.5,281.1 L1235.9,279.5 L1235.2,277.9 L1234.5,276.2 L1233.8,274.6 L1233.1,273.0 L1232.3,271.4 L1231.6,269.7 L1230.7,268.1 L1229.9,266.5 L1229.1,264.9 L1228.2,263.2 L1227.3,261.6 L1226.3,260.0 L1225.4,258.3 L1224.4,256.7 L1223.4,255.1 L1222.3,253.5 L1221.3,251.8 L1220.2,250.2 L1219.1,248.6 L1218.0,246.9 L1216.8,245.3 L1215.6,243.7 L1214.4,242.1 L1213.2,240.4 L1212.0,238.8 L1210.7,237.2 L1209.4,235.6 L1208.1,233.9 L1206.7,232.3 L1205.4,230.7 L1204.0,229.0 L1202.6,227.4 L1201.1,225.8 L1199.7,224.2 L1198.2,222.5 L1196.7,220.9 L1195.2,219.3 L1193.6,217.6 L1192.0,216.0 L1190.5,214.4 L1188.8,212.8 L1187.2,211.1 L1185.5,209.5 L1183.9,207.9 L1182.2,206.3 L1180.4,204.6 L1178.7,203.0 L1176.9,201.4 L1175.2,199.7 L1173.3,198.1 L1171.5,196.5 L1169.7,194.9 L1167.8,193.2 L1165.9,191.6 L1164.0,190.0 L1162.1,188.3 L1160.1,186.7 L1158.2,185.1 L1156.2,183.5 L1154.2,181.8 L1152.2,180.2 L1150.1,178.6 L1148.0,177.0 L1146.0,175.3 L1143.9,173.7 L1141.7,172.1 L1139.6,170.4 L1137.5,168.8 L1135.3,167.2 L1133.1,165.6 L1130.9,163.9 L1128.7,162.3 L1126.4,160.7 L1124.2,159.0 L1121.9,157.4 L1119.6,155.8 L1117.3,154.2 L1114.9,152.5 L1112.6,150.9 L1110.2,149.3 L1107.9,147.7 L1105.5,146.0 L1103.1,144.4 L1100.7,142.8 L1098.2,141.1 L1095.8,139.5 L1093.3,137.9 L1090.8,136.3 L1088.3,134.6 L1085.8,133.0 L1083.3,131.4 L1080.8,129.7 L1078.2,128.1 L1075.6,126.5 L1073.1,124.9 L1070.5,123.2 L1067.9,121.6 L1065.3,120.0 L1062.6,118.4 L1060.0,116.7 L1057.3,115.1 L1054.7,113.5 L1052.0,111.8 L1049.3,110.2 L1046.6,108.6 L1043.9,107.0 L1041.2,105.3 L1038.5,103.7 L1035.7,102.1 L1033.0,100.4 L1030.2,98.8 L1027.4,97.2 L1024.7,95.6 L1021.9,93.9 L1019.1,92.3 L1016.3,90.7 L1013.4,89.1 L1010.6,87.4 L1007.8,85.8 L1004.9,84.2 L1002.1,82.5 L999.2,80.9 L996.4,79.3 L993.5,77.7 L990.6,76.0 L987.7,74.4 L984.8,72.8 L982.0,71.1 L979.0,69.5 L976.1,67.9 L973.2,66.3 L970.3,64.6 L967.4,63.0 L964.4,61.4 L961.5,59.8 L958.6,58.1 L955.6,56.5 L952.7,54.9 L949.7,53.2 L946.8,51.6 L943.8,50.0 L940.8,48.4 L937.9,46.7 L934.9,45.1 L931.9,43.5 L929.0,41.8 L926.0,40.2 L923.0,38.6 L920.0,37.0 L917.1,35.3 L914.1,33.7 L911.1,32.1 L908.1,30.5 L905.1,28.8 L902.1,27.2"/>
<path d="M902.1,613.2 L904.7,611.6 L907.3,609.9 L909.8,608.3 L912.4,606.7 L914.9,605.1 L917.5,603.4 L920.0,601.8 L922.6,600.2 L925.1,598.6 L927.7,596.9 L930.2,595.3 L932.8,593.7 L935.3,592.0 L937.9,590.4 L940.4,588.8 L942.9,587.2 L945.5,585.5 L948.0,583.9 L950.5,582.3 L953.0,580.6 L955.5,579.0 L958.1,577.4 L960.6,575.8 L963.1,574.1 L965.6,572.5 L968.1,570.9 L970.6,569.3 L973.0,567.6 L975.5,566.0 L978.0,564.4 L980.5,562.7 L982.9,561.1 L985.4,559.5 L987.8,557.9 L990.3,556.2 L992.7,554.6 L995.1,553.0 L997.5,551.3 L1000.0,549.7 L1002.4,548.1 L1004.8,546.5 L1007.2,544.8 L1009.5,543.2 L1011.9,541.6 L1014.3,540.0 L1016.6,538.3 L1019.0,536.7 L1021.3,535.1 L1023.7,533.4 L1026.0,531.8 L1028.3,530.2 L1030.6,528.6 L1032.9,526.9 L1035.2,525.3 L1037.4,523.7 L1039.7,522.0 L1042.0,520.4 L1044.2,518.8 L1046.4,517.2 L1048.7,515.5 L1050.9,513.9 L1053.1,512.3 L1055.2,510.7 L1057.4,509.0 L1059.6,507.4 L1061.7,505.8 L1063.9,504.1 L1066.0,502.5 L1068.1,500.9 L1070.2,499.3 L1072.3,497.6 L1074.4,496.0 L1076.4,494.4 L1078.5,492.7 L1080.5,491.1 L1082.5,489.5 L1084.5,487.9 L1086.5,486.2 L1088.5,484.6 L1090.5,483.0 L1092.4,481.4 L1094.4,479.7 L1096.3,478.1 L1098.2,476.5 L1100.1,474.8 L1102.0,473.2 L1103.8,471.6 L1105.7,470.0 L1107.5,468.3 L1109.3,466.7 L1111.1,465.1 L1112.9,463.4 L1114.7,461.8 L1116.4,460.2 L1118.2,458.6 L1119.9,456.9 L1121.6,455.3 L1123.3,453.7 L1125.0,452.1 L1126.6,450.4 L1128.2,448.8 L1129.9,447.2 L1131.5,445.5 L1133.0,443.9 L1134.6,442.3 L1136.2,440.7 L1137.7,439.0 L1139.2,437.4 L1140.7,435.8 L1142.2,434.1 L1143.6,432.5 L1145.1,430.9 L1146.5,429.3 L1147.9,427.6 L1149.3,426.0 L1150.6,424.4 L1152.0,422.8 L1153.3,421.1 L1154.6,419.5 L1155.9,417.9 L1157.2,416.2 L1158.4,414.6 L1159.6,413.0 L1160.9,411.4 L1162.0,409.7 L1163.2,408.1 L1164.4,406.5 L1165.5,404.8 L1166.6,403.2 L1167.7,401.6 L1168.8,400.0 L1169.8,398.3 L1170.9,396.7 L1171.9,395.1 L1172.9,393.5 L1173.8,391.8 L1174.8,390.2 L1175.7,388.6 L1176.6,386.9 L1177.5,385.3 L1178.3,383.7 L1179.2,382.1 L1180.0,380.4 L1180.8,378.8 L1181.6,377.2 L1182.4,375.5 L1183.1,373.9 L1183.8,372.3 L1184.5,370.7 L1185.2,369.0 L1185.8,367.4 L1186.5,365.8 L1187.1,364.2 L1187.6,362.5 L1188.2,360.9 L1188.8,359.3 L1189.3,357.6 L1189.8,356.0 L1190.2,354.4 L1190.7,352.8 L1191.1,351.1 L1191.5,349.5 L1191.9,347.9 L1192.3,346.2 L1192.6,344.6 L1193.0,343.0 L1193.3,341.4 L1193.5,339.7 L1193.8,338.1 L1194.0,336.5 L1194.3,334.9 L1194.4,333.2 L1194.6,331.6 L1194.8,330.0 L1194.9,328.3 L1195.0,326.7 L1195.1,325.1 L1195.1,323.5 L1195.1,321.8 L1195.2,320.2 L1195.1,318.6 L1195.1,316.9 L1195.1,315.3 L1195.0,313.7 L1194.9,312.1 L1194.8,310.4 L1194.6,308.8 L1194.4,307.2 L1194.3,305.5 L1194.0,303.9 L1193.8,302.3 L1193.5,300.7 L1193.3,299.0 L1193.0,297.4 L1192.6,295.8 L1192.3,294.2 L1191.9,292.5 L1191.5,290.9 L1191.1,289.3 L1190.7,287.6 L1190.2,286.0 L1189.8,284.4 L1189.3,282.8 L1188.8,281.1 L1188.2,279.5 L1187.6,277.9 L1187.1,276.2 L1186.5,274.6 L1185.8,273.0 L1185.2,271.4 L1184.5,269.7 L1183.8,268.1 L1183.1,266.5 L1182.4,264.9 L1181.6,263.2 L1180.8,261.6 L1180.0,260.0 L1179.2,258.3 L1178.3,256.7 L1177.5,255.1 L1176.6,253.5 L1175.7,251.8 L1174.8,250.2 L1173.8,248.6 L1172.9,246.9 L1171.9,245.3 L1170.9,243.7 L1169.8,242.1 L1168.8,240.4 L1167.7,238.8 L1166.6,237.2 L1165.5,235.6 L1164.4,233.9 L1163.2,232.3 L1162.0,230.7 L1160.9,229.0 L1159.6,227.4 L1158.4,225.8 L1157.2,224.2 L1155.9,222.5 L1154.6,220.9 L1153.3,219.3 L1152.0,217.6 L1150.6,216.0 L1149.3,214.4 L1147.9,212.8 L1146.5,211.1 L1145.1,209.5 L1143.6,207.9 L1142.2,206.3 L1140.7,204.6 L1139.2,203.0 L1137.7,201.4 L1136.2,199.7 L1134.6,198.1 L1133.0,196.5 L1131.5,194.9 L1129.9,193.2 L1128.2,191.6 L1126.6,190.0 L1125.0,188.3 L1123.3,186.7 L1121.6,185.1 L1119.9,183.5 L1118.2,181.8 L1116.4,180.2 L1114.7,178.6 L1112.9,177.0 L1111.1,175.3 L1109.3,173.7 L1107.5,172.1 L1105.7,170.4 L1103.8,168.8 L1102.0,167.2 L1100.1,165.6 L1098.2,163.9 L1096.3,162.3 L1094.4,160.7 L1092.4,159.0 L1090.5,157.4 L1088.5,155.8 L1086.5,154.2 L1084.5,152.5 L1082.5,150.9 L1080.5,149.3 L1078.5,147.7 L1076.4,146.0 L1074.4,144.4 L1072.3,142.8 L1070.2,141.1 L1068.1,139.5 L1066.0,137.9 L1063.9,136.3 L1061.7,134.6 L1059.6,133.0 L1057.4,131.4 L1055.2,129.7 L1053.1,128.1 L1050.9,126.5 L1048.7,124.9 L1046.4,123.2 L1044.2,121.6 L1042.0,120.0 L1039.7,118.4 L1037.4,116.7 L1035.2,115.1 L1032.9,113.5 L1030.6,111.8 L1028.3,110.2 L1026.0,108.6 L1023.7,107.0 L1021.3,105.3 L1019.0,103.7 L1016.6,102.1 L1014.3,100.4 L1011.9,98.8 L1009.5,97.2 L1007.2,95.6 L1004.8,93.9 L1002.4,92.3 L1000.0,90.7 L997.5,89.1 L995.1,87.4 L992.7,85.8 L990.3,84.2 L987.8,82.5 L985.4,80.9 L982.9,79.3 L980.5,77.7 L978.0,76.0 L975.5,74.4 L973.0,72.8 L970.6,71.1 L968.1,69.5 L965.6,67.9 L963.1,66.3 L960.6,64.6 L958.1,63.0 L955.5,61.4 L953.0,59.8 L950.5,58.1 L948.0,56.5 L945.5,54.9 L942.9,53.2 L940.4,51.6 L937.9,50.0 L935.3,48.4 L932.8,46.7 L930.2,45.1 L927.7,43.5 L925.1,41.8 L922.6,40.2 L920.0,38.6 L917.5,37.0 L914.9,35.3 L912.4,33.7 L909.8,32.1 L907.3,30.5 L904.7,28.8 L902.1,27.2"/>
<path d="M902.1,613.2 L904.3,611.6 L906.4,609.9 L908.5,608.3 L910.7,606.7 L912.8,605.1 L914.9,603.4 L917.1,601.8 L919.2,600.2 L921.3,598.6 L923.4,596.9 L925.6,595.3 L927.7,593.7 L929.8,592.0 L931.9,590.4 L934.0,588.8 L936.1,587.2 L938.2,585.5 L940.3,583.9 L942.4,582.3 L944.5,580.6 L946.6,579.0 L948.7,577.4 L950.8,575.8 L952.9,574.1 L955.0,572.5 L957.1,570.9 L959.2,569.3 L961.2,567.6 L963.3,566.0 L965.3,564.4 L967.4,562.7 L969.5,561.1 L971.5,559.5 L973.5,557.9 L975.6,556.2 L977.6,554.6 L979.6,553.0 L981.6,551.3 L983.7,549.7 L985.7,548.1 L987.7,546.5 L989.7,544.8 L991.6,543.2 L993.6,541.6 L995.6,540.0 L997.6,538.3 L999.5,536.7 L1001.5,535.1 L1003.4,533.4 L1005.3,531.8 L1007.3,530.2 L1009.2,528.6 L1011.1,526.9 L1013.0,525.3 L1014.9,523.7 L1016.8,522.0 L1018.7,520.4 L1020.5,518.8 L1022.4,517.2 L1024.2,515.5 L1026.1,513.9 L1027.9,512.3 L1029.7,510.7 L1031.5,509.0 L1033.3,507.4 L1035.1,505.8 L1036.9,504.1 L1038.7,502.5 L1040.4,500.9 L1042.2,499.3 L1043.9,497.6 L1045.7,496.0 L1047.4,494.4 L1049.1,492.7 L1050.8,491.1 L1052.5,489.5 L1054.1,487.9 L1055.8,486.2 L1057.5,484.6 L1059.1,483.0 L1060.7,481.4 L1062.3,479.7 L1063.9,478.1 L1065.5,476.5 L1067.1,474.8 L1068.7,473.2 L1070.2,471.6 L1071.8,470.0 L1073.3,468.3 L1074.8,466.7 L1076.3,465.1 L1077.8,463.4 L1079.3,461.8 L1080.7,460.2 L1082.2,458.6 L1083.6,456.9 L1085.0,455.3 L1086.4,453.7 L1087.8,452.1 L1089.2,450.4 L1090.6,448.8 L1091.9,447.2 L1093.2,445.5 L1094.6,443.9 L1095.9,442.3 L1097.2,440.7 L1098.4,439.0 L1099.7,437.4 L1100.9,435.8 L1102.2,434.1 L1103.4,432.5 L1104.6,430.9 L1105.8,429.3 L1106.9,427.6 L1108.1,426.0 L1109.2,424.4 L1110.3,422.8 L1111.4,421.1 L1112.5,419.5 L1113.6,417.9 L1114.7,416.2 L1115.7,414.6 L1116.7,413.0 L1117.7,411.4 L1118.7,409.7 L1119.7,408.1 L1120.7,406.5 L1121.6,404.8 L1122.5,403.2 L1123.4,401.6 L1124.3,400.0 L1125.2,398.3 L1126.1,396.7 L1126.9,395.1 L1127.7,393.5 L1128.5,391.8 L1129.3,390.2 L1130.1,388.6 L1130.9,386.9 L1131.6,385.3 L1132.3,383.7 L1133.0,382.1 L1133.7,380.4 L1134.4,378.8 L1135.0,377.2 L1135.7,375.5 L1136.3,373.9 L1136.9,372.3 L1137.4,370.7 L1138.0,369.0 L1138.5,367.4 L1139.1,365.8 L1139.6,364.2 L1140.1,362.5 L1140.5,360.9 L1141.0,359.3 L1141.4,357.6 L1141.8,356.0 L1142.2,354.4 L1142.6,352.8 L1143.0,351.1 L1143.3,349.5 L1143.6,347.9 L1143.9,346.2 L1144.2,344.6 L1144.5,343.0 L1144.8,341.4 L1145.0,339.7 L1145.2,338.1 L1145.4,336.5 L1145.6,334.9 L1145.7,333.2 L1145.9,331.6 L1146.0,330.0 L1146.1,328.3 L1146.2,326.7 L1146.2,325.1 L1146.3,323.5 L1146.3,321.8 L1146.3,320.2 L1146.3,318.6 L1146.3,316.9 L1146.2,315.3 L1146.2,313.7 L1146.1,312.1 L1146.0,310.4 L1145.9,308.8 L1145.7,307.2 L1145.6,305.5 L1145.4,303.9 L1145.2,302.3 L1145.0,300.7 L1144.8,299.0 L1144.5,297.4 L1144.2,295.8 L1143.9,294.2 L1143.6,292.5 L1143.3,290.9 L1143.0,289.3 L1142.6,287.6 L1142.2,286.0 L1141.8,284.4 L1141.4,282.8 L1141.0,281.1 L1140.5,279.5 L1140.1,277.9 L1139.6,276.2 L1139.1,274.6 L1138.5,273.0 L1138.0,271.4 L1137.4,269.7 L1136.9,268.1 L1136.3,266.5 L1135.7,264.9 L1135.0,263.2 L1134.4,261.6 L1133.7,260.0 L1133.0,258.3 L1132.3,256.7 L1131.6,255.1 L1130.9,253.5 L1130.1,251.8 L1129.3,250.2 L1128.5,248.6 L1127.7,246.9 L1126.9,245.3 L1126.1,243.7 L1125.2,242.1 L1124.3,240.4 L1123.4,238.8 L1122.5,237.2 L1121.6,235.6 L1120.7,233.9 L1119.7,232.3 L1118.7,230.7 L1117.7,229.0 L1116.7,227.4 L1115.7,225.8 L1114.7,224.2 L1113.6,222.5 L1112.5,220.9 L1111.4,219.3 L1110.3,217.6 L1109.2,216.0 L1108.1,214.4 L1106.9,212.8 L1105.8,211.1 L1104.6,209.5 L1103.4,207.9 L1102.2,206.3 L1100.9,204.6 L1099.7,203.0 L1098.4,201.4 L1097.2,199.7 L1095.9,198.1 L1094.6,196.5 L1093.2,194.9 L1091.9,193.2 L1090.6,191.6 L1089.2,190.0 L1087.8,188.3 L1086.4,186.7 L1085.0,185.1 L1083.6,183.5 L1082.2,181.8 L1080.7,180.2 L1079.3,178.6 L1077.8,177.0 L1076.3,175.3 L1074.8,173.7 L1073.3,172.1 L1071.8,170.4 L1070.2,168.8 L1068.7,167.2 L1067.1,165.6 L1065.5,163.9 L1063.9,162.3 L1062.3,160.7 L1060.7,159.0 L1059.1,157.4 L1057.5,155.8 L1055.8,154.2 L1054.1,152.5 L1052.5,150.9 L1050.8,149.3 L1049.1,147.7 L1047.4,146.0 L1045.7,144.4 L1043.9,142.8 L1042.2,141.1 L1040.4,139.5 L1038.7,137.9 L1036.9,136.3 L1035.1,134.6 L1033.3,133.0 L1031.5,131.4 L1029.7,129.7 L1027.9,128.1 L1026.1,126.5 L1024.2,124.9 L1022.4,123.2 L1020.5,121.6 L1018.7,120.0 L1016.8,118.4 L1014.9,116.7 L1013.0,115.1 L1011.1,113.5 L1009.2,111.8 L1007.3,110.2 L1005.3,108.6 L1003.4,107.0 L1001.5,105.3 L999.5,103.7 L997.6,102.1 L995.6,100.4 L993.6,98.8 L991.6,97.2 L989.7,95.6 L987.7,93.9 L985.7,92.3 L983.7,90.7 L981.6,89.1 L979.6,87.4 L977.6,85.8 L975.6,84.2 L973.5,82.5 L971.5,80.9 L969.5,79.3 L967.4,77.7 L965.3,76.0 L963.3,74.4 L961.2,72.8 L959.2,71.1 L957.1,69.5 L955.0,67.9 L952.9,66.3 L950.8,64.6 L948.7,63.0 L946.6,61.4 L944.5,59.8 L942.4,58.1 L940.3,56.5 L938.2,54.9 L936.1,53.2 L934.0,51.6 L931.9,50.0 L929.8,48.4 L927.7,46.7 L925.6,45.1 L923.4,43.5 L921.3,41.8 L919.2,40.2 L917.1,38.6 L914.9,37.0 L912.8,35.3 L910.7,33.7 L908.5,32.1 L906.4,30.5 L904.3,28.8 L902.1,27.2"/>
<path d="M902.1,613.2 L903.9,611.6 L905.6,609.9 L907.3,608.3 L909.0,606.7 L910.7,605.1 L912.4,603.4 L914.1,601.8 L915.8,600.2 L917.5,598.6 L919.2,596.9 L920.9,595.3 L922.6,593.7 L924.3,592.0 L926.0,590.4 L927.6,588.8 L929.3,587.2 L931.0,585.5 L932.7,583.9 L934.4,582.3 L936.1,580.6 L937.7,579.0 L939.4,577.4 L941.1,575.8 L942.8,574.1 L944.4,572.5 L946.1,570.9 L947.8,569.3 L949.4,567.6 L951.1,566.0 L952.7,564.4 L954.4,562.7 L956.0,561.1 L957.6,559.5 L959.3,557.9 L960.9,556.2 L962.5,554.6 L964.1,553.0 L965.7,551.3 L967.4,549.7 L969.0,548.1 L970.6,546.5 L972.2,544.8 L973.7,543.2 L975.3,541.6 L976.9,540.0 L978.5,538.3 L980.0,536.7 L981.6,535.1 L983.2,533.4 L984.7,531.8 L986.2,530.2 L987.8,528.6 L989.3,526.9 L990.8,525.3 L992.3,523.7 L993.9,522.0 L995.4,520.4 L996.9,518.8 L998.3,517.2 L999.8,515.5 L1001.3,513.9 L1002.8,512.3 L1004.2,510.7 L1005.7,509.0 L1007.1,507.4 L1008.5,505.8 L1010.0,504.1 L1011.4,502.5 L1012.8,500.9 L1014.2,499.3 L1015.6,497.6 L1017.0,496.0 L1018.3,494.4 L1019.7,492.7 L1021.1,491.1 L1022.4,489.5 L1023.7,487.9 L1025.1,486.2 L1026.4,484.6 L1027.7,483.0 L1029.0,481.4 L1030.3,479.7 L1031.6,478.1 L1032.9,476.5 L1034.1,474.8 L1035.4,473.2 L1036.6,471.6 L1037.8,470.0 L1039.1,468.3 L1040.3,466.7 L1041.5,465.1 L1042.7,463.4 L1043.8,461.8 L1045.0,460.2 L1046.2,458.6 L1047.3,456.9 L1048.4,455.3 L1049.6,453.7 L1050.7,452.1 L1051.8,450.4 L1052.9,448.8 L1054.0,447.2 L1055.0,445.5 L1056.1,443.9 L1057.1,442.3 L1058.2,440.7 L1059.2,439.0 L1060.2,437.4 L1061.2,435.8 L1062.2,434.1 L1063.1,432.5 L1064.1,430.9 L1065.0,429.3 L1066.0,427.6 L1066.9,426.0 L1067.8,424.4 L1068.7,422.8 L1069.6,421.1 L1070.5,419.5 L1071.3,417.9 L1072.2,416.2 L1073.0,414.6 L1073.8,413.0 L1074.6,411.4 L1075.4,409.7 L1076.2,408.1 L1077.0,406.5 L1077.7,404.8 L1078.5,403.2 L1079.2,401.6 L1079.9,400.0 L1080.6,398.3 L1081.3,396.7 L1082.0,395.1 L1082.6,393.5 L1083.3,391.8 L1083.9,390.2 L1084.5,388.6 L1085.1,386.9 L1085.7,385.3 L1086.3,383.7 L1086.8,382.1 L1087.4,380.4 L1087.9,378.8 L1088.4,377.2 L1089.0,375.5 L1089.4,373.9 L1089.9,372.3 L1090.4,370.7 L1090.8,369.0 L1091.3,367.4 L1091.7,365.8 L1092.1,364.2 L1092.5,362.5 L1092.9,360.9 L1093.2,359.3 L1093.6,357.6 L1093.9,356.0 L1094.2,354.4 L1094.5,352.8 L1094.8,351.1 L1095.1,349.5 L1095.3,347.9 L1095.6,346.2 L1095.8,344.6 L1096.0,343.0 L1096.2,341.4 L1096.4,339.7 L1096.6,338.1 L1096.7,336.5 L1096.9,334.9 L1097.0,333.2 L1097.1,331.6 L1097.2,330.0 L1097.3,328.3 L1097.4,326.7 L1097.4,325.1 L1097.5,323.5 L1097.5,321.8 L1097.5,320.2 L1097.5,318.6 L1097.5,316.9 L1097.4,315.3 L1097.4,313.7 L1097.3,312.1 L1097.2,310.4 L1097.1,308.8 L1097.0,307.2 L1096.9,305.5 L1096.7,303.9 L1096.6,302.3 L1096.4,300.7 L1096.2,299.0 L1096.0,297.4 L1095.8,295.8 L1095.6,294.2 L1095.3,292.5 L1095.1,290.9 L1094.8,289.3 L1094.5,287.6 L1094.2,286.0 L1093.9,284.4 L1093.6,282.8 L1093.2,281.1 L1092.9,279.5 L1092.5,277.9 L1092.1,276.2 L1091.7,274.6 L1091.3,273.0 L1090.8,271.4 L1090.4,269.7 L1089.9,268.1 L1089.4,266.5 L1089.0,264.9 L1088.4,263.2 L1087.9,261.6 L1087.4,260.0 L1086.8,258.3 L1086.3,256.7 L1085.7,255.1 L1085.1,253.5 L1084.5,251.8 L1083.9,250.2 L1083.3,248.6 L1082.6,246.9 L1082.0,245.3 L1081.3,243.7 L1080.6,242.1 L1079.9,240.4 L1079.2,238.8 L1078.5,237.2 L1077.7,235.6 L1077.0,233.9 L1076.2,232.3 L1075.4,230.7 L1074.6,229.0 L1073.8,227.4 L1073.0,225.8 L1072.2,224.2 L1071.3,222.5 L1070.5,220.9 L1069.6,219.3 L1068.7,217.6 L1067.8,216.0 L1066.9,214.4 L1066.0,212.8 L1065.0,211.1 L1064.1,209.5 L1063.1,207.9 L1062.2,206.3 L1061.2,204.6 L1060.2,203.0 L1059.2,201.4 L1058.2,199.7 L1057.1,198.1 L1056.1,196.5 L1055.0,194.9 L1054.0,193.2 L1052.9,191.6 L1051.8,190.0 L1050.7,188.3 L1049.6,186.7 L1048.4,185.1 L1047.3,183.5 L1046.2,181.8 L1045.0,180.2 L1043.8,178.6 L1042.7,177.0 L1041.5,175.3 L1040.3,173.7 L1039.1,172.1 L1037.8,170.4 L1036.6,168.8 L1035.4,167.2 L1034.1,165.6 L1032.9,163.9 L1031.6,162.3 L1030.3,160.7 L1029.0,159.0 L1027.7,157.4 L1026.4,155.8 L1025.1,154.2 L1023.7,152.5 L1022.4,150.9 L1021.1,149.3 L1019.7,147.7 L1018.3,146.0 L1017.0,144.4 L1015.6,142.8 L1014.2,141.1 L1012.8,139.5 L1011.4,137.9 L1010.0,136.3 L1008.5,134.6 L1007.1,133.0 L1005.7,131.4 L1004.2,129.7 L1002.8,128.1 L1001.3,126.5 L999.8,124.9 L998.3,123.2 L996.9,121.6 L995.4,120.0 L993.9,118.4 L992.3,116.7 L990.8,115.1 L989.3,113.5 L987.8,111.8 L986.2,110.2 L984.7,108.6 L983.2,107.0 L981.6,105.3 L980.0,103.7 L978.5,102.1 L976.9,100.4 L975.3,98.8 L973.7,97.2 L972.2,95.6 L970.6,93.9 L969.0,92.3 L967.4,90.7 L965.7,89.1 L964.1,87.4 L962.5,85.8 L960.9,84.2 L959.3,82.5 L957.6,80.9 L956.0,79.3 L954.4,77.7 L952.7,76.0 L951.1,74.4 L949.4,72.8 L947.8,71.1 L946.1,69.5 L944.4,67.9 L942.8,66.3 L941.1,64.6 L939.4,63.0 L937.7,61.4 L936.1,59.8 L934.4,58.1 L932.7,56.5 L931.0,54.9 L929.3,53.2 L927.6,51.6 L926.0,50.0 L924.3,48.4 L922.6,46.7 L920.9,45.1 L919.2,43.5 L917.5,41.8 L915.8,40.2 L914.1,38.6 L912.4,37.0 L910.7,35.3 L909.0,33.7 L907.3,32.1 L905.6,30.5 L903.9,28.8 L902.1,27.2"/>
<path d="M902.1,613.2 L903.4,611.6 L904.7,609.9 L906.0,608.3 L907.3,606.7 L908.5,605.1 L909.8,603.4 L911.1,601.8 L912.4,600.2 L913.6,598.6 L914.9,596.9 L916.2,595.3 L917.5,593.7 L918.7,592.0 L920.0,590.4 L921.3,588.8 L922.5,587.2 L923.8,585.5 L925.1,583.9 L926.3,582.3 L927.6,580.6 L928.8,579.0 L930.1,577.4 L931.4,575.8 L932.6,574.1 L933.9,572.5 L935.1,570.9 L936.4,569.3 L937.6,567.6 L938.8,566.0 L940.1,564.4 L941.3,562.7 L942.5,561.1 L943.8,559.5 L945.0,557.9 L946.2,556.2 L947.4,554.6 L948.6,553.0 L949.8,551.3 L951.1,549.7 L952.3,548.1 L953.5,546.5 L954.7,544.8 L955.8,543.2 L957.0,541.6 L958.2,540.0 L959.4,538.3 L960.6,536.7 L961.7,535.1 L962.9,533.4 L964.1,531.8 L965.2,530.2 L966.4,528.6 L967.5,526.9 L968.7,525.3 L969.8,523.7 L970.9,522.0 L972.1,520.4 L973.2,518.8 L974.3,517.2 L975.4,515.5 L976.5,513.9 L977.6,512.3 L978.7,510.7 L979.8,509.0 L980.9,507.4 L981.9,505.8 L983.0,504.1 L984.1,502.5 L985.1,500.9 L986.2,499.3 L987.2,497.6 L988.3,496.0 L989.3,494.4 L990.3,492.7 L991.3,491.1 L992.3,489.5 L993.3,487.9 L994.3,486.2 L995.3,484.6 L996.3,483.0 L997.3,481.4 L998.3,479.7 L999.2,478.1 L1000.2,476.5 L1001.1,474.8 L1002.1,473.2 L1003.0,471.6 L1003.9,470.0 L1004.8,468.3 L1005.7,466.7 L1006.6,465.1 L1007.5,463.4 L1008.4,461.8 L1009.3,460.2 L1010.2,458.6 L1011.0,456.9 L1011.9,455.3 L1012.7,453.7 L1013.6,452.1 L1014.4,450.4 L1015.2,448.8 L1016.0,447.2 L1016.8,445.5 L1017.6,443.9 L1018.4,442.3 L1019.2,440.7 L1019.9,439.0 L1020.7,437.4 L1021.4,435.8 L1022.2,434.1 L1022.9,432.5 L1023.6,430.9 L1024.3,429.3 L1025.0,427.6 L1025.7,426.0 L1026.4,424.4 L1027.1,422.8 L1027.7,421.1 L1028.4,419.5 L1029.0,417.9 L1029.7,416.2 L1030.3,414.6 L1030.9,413.0 L1031.5,411.4 L1032.1,409.7 L1032.7,408.1 L1033.3,406.5 L1033.8,404.8 L1034.4,403.2 L1034.9,401.6 L1035.5,400.0 L1036.0,398.3 L1036.5,396.7 L1037.0,395.1 L1037.5,393.5 L1038.0,391.8 L1038.5,390.2 L1038.9,388.6 L1039.4,386.9 L1039.8,385.3 L1040.2,383.7 L1040.7,382.1 L1041.1,380.4 L1041.5,378.8 L1041.9,377.2 L1042.3,375.5 L1042.6,373.9 L1043.0,372.3 L1043.3,370.7 L1043.7,369.0 L1044.0,367.4 L1044.3,365.8 L1044.6,364.2 L1044.9,362.5 L1045.2,360.9 L1045.5,359.3 L1045.7,357.6 L1046.0,356.0 L1046.2,354.4 L1046.4,352.8 L1046.6,351.1 L1046.8,349.5 L1047.0,347.9 L1047.2,346.2 L1047.4,344.6 L1047.6,343.0 L1047.7,341.4 L1047.8,339.7 L1048.0,338.1 L1048.1,336.5 L1048.2,334.9 L1048.3,333.2 L1048.4,331.6 L1048.5,330.0 L1048.5,328.3 L1048.6,326.7 L1048.6,325.1 L1048.6,323.5 L1048.6,321.8 L1048.7,320.2 L1048.6,318.6 L1048.6,316.9 L1048.6,315.3 L1048.6,313.7 L1048.5,312.1 L1048.5,310.4 L1048.4,308.8 L1048.3,307.2 L1048.2,305.5 L1048.1,303.9 L1048.0,302.3 L1047.8,300.7 L1047.7,299.0 L1047.6,297.4 L1047.4,295.8 L1047.2,294.2 L1047.0,292.5 L1046.8,290.9 L1046.6,289.3 L1046.4,287.6 L1046.2,286.0 L1046.0,284.4 L1045.7,282.8 L1045.5,281.1 L1045.2,279.5 L1044.9,277.9 L1044.6,276.2 L1044.3,274.6 L1044.0,273.0 L1043.7,271.4 L1043.3,269.7 L1043.0,268.1 L1042.6,266.5 L1042.3,264.9 L1041.9,263.2 L1041.5,261.6 L1041.1,260.0 L1040.7,258.3 L1040.2,256.7 L1039.8,255.1 L1039.4,253.5 L1038.9,251.8 L1038.5,250.2 L1038.0,248.6 L1037.5,246.9 L1037.0,245.3 L1036.5,243.7 L1036.0,242.1 L1035.5,240.4 L1034.9,238.8 L1034.4,237.2 L1033.8,235.6 L1033.3,233.9 L1032.7,232.3 L1032.1,230.7 L1031.5,229.0 L1030.9,227.4 L1030.3,225.8 L1029.7,224.2 L1029.0,222.5 L1028.4,220.9 L1027.7,219.3 L1027.1,217.6 L1026.4,216.0 L1025.7,214.4 L1025.0,212.8 L1024.3,211.1 L1023.6,209.5 L1022.9,207.9 L1022.2,206.3 L1021.4,204.6 L1020.7,203.0 L1019.9,201.4 L1019.2,199.7 L1018.4,198.1 L1017.6,196.5 L1016.8,194.9 L1016.0,193.2 L1015.2,191.6 L1014.4,190.0 L1013.6,188.3 L1012.7,186.7 L1011.9,185.1 L1011.0,183.5 L1010.2,181.8 L1009.3,180.2 L1008.4,178.6 L1007.5,177.0 L1006.6,175.3 L1005.7,173.7 L1004.8,172.1 L1003.9,170.4 L1003.0,168.8 L1002.1,167.2 L1001.1,165.6 L1000.2,163.9 L999.2,162.3 L998.3,160.7 L997.3,159.0 L996.3,157.4 L995.3,155.8 L994.3,154.2 L993.3,152.5 L992.3,150.9 L991.3,149.3 L990.3,147.7 L989.3,146.0 L988.3,144.4 L987.2,142.8 L986.2,141.1 L985.1,139.5 L984.1,137.9 L983.0,136.3 L981.9,134.6 L980.9,133.0 L979.8,131.4 L978.7,129.7 L977.6,128.1 L976.5,126.5 L975.4,124.9 L974.3,123.2 L973.2,121.6 L972.1,120.0 L970.9,118.4 L969.8,116.7 L968.7,115.1 L967.5,113.5 L966.4,111.8 L965.2,110.2 L964.1,108.6 L962.9,107.0 L961.7,105.3 L960.6,103.7 L959.4,102.1 L958.2,100.4 L957.0,98.8 L955.8,97.2 L954.7,95.6 L953.5,93.9 L952.3,92.3 L951.1,90.7 L949.8,89.1 L948.6,87.4 L947.4,85.8 L946.2,84.2 L945.0,82.5 L943.8,80.9 L942.5,79.3 L941.3,77.7 L940.1,76.0 L938.8,74.4 L937.6,72.8 L936.4,71.1 L935.1,69.5 L933.9,67.9 L932.6,66.3 L931.4,64.6 L930.1,63.0 L928.8,61.4 L927.6,59.8 L926.3,58.1 L925.1,56.5 L923.8,54.9 L922.5,53.2 L921.3,51.6 L920.0,50.0 L918.7,48.4 L917.5,46.7 L916.2,45.1 L914.9,43.5 L913.6,41.8 L912.4,40.2 L911.1,38.6 L909.8,37.0 L908.5,35.3 L907.3,33.7 L906.0,32.1 L904.7,30.5 L903.4,28.8 L902.1,27.2"/>
<path d="M902.1,613.2 L903.0,611.6 L903.9,609.9 L904.7,608.3 L905.6,606.7 L906.4,605.1 L907.3,603.4 L908.1,601.8 L909.0,600.2 L909.8,598.6 L910.7,596.9 L911.5,595.3 L912.4,593.7 L913.2,592.0 L914.1,590.4 L914.9,588.8 L915.7,587.2 L916.6,585.5 L917.4,583.9 L918.3,582.3 L919.1,580.6 L919.9,579.0 L920.8,577.4 L921.6,575.8 L922.5,574.1 L923.3,572.5 L924.1,570.9 L925.0,569.3 L925.8,567.6 L926.6,566.0 L927.4,564.4 L928.3,562.7 L929.1,561.1 L929.9,559.5 L930.7,557.9 L931.5,556.2 L932.3,554.6 L933.1,553.0 L933.9,551.3 L934.8,549.7 L935.6,548.1 L936.4,546.5 L937.2,544.8 L937.9,543.2 L938.7,541.6 L939.5,540.0 L940.3,538.3 L941.1,536.7 L941.9,535.1 L942.7,533.4 L943.4,531.8 L944.2,530.2 L945.0,528.6 L945.7,526.9 L946.5,525.3 L947.2,523.7 L948.0,522.0 L948.8,520.4 L949.5,518.8 L950.2,517.2 L951.0,515.5 L951.7,513.9 L952.5,512.3 L953.2,510.7 L953.9,509.0 L954.6,507.4 L955.3,505.8 L956.1,504.1 L956.8,502.5 L957.5,500.9 L958.2,499.3 L958.9,497.6 L959.6,496.0 L960.2,494.4 L960.9,492.7 L961.6,491.1 L962.3,489.5 L962.9,487.9 L963.6,486.2 L964.3,484.6 L964.9,483.0 L965.6,481.4 L966.2,479.7 L966.9,478.1 L967.5,476.5 L968.1,474.8 L968.8,473.2 L969.4,471.6 L970.0,470.0 L970.6,468.3 L971.2,466.7 L971.8,465.1 L972.4,463.4 L973.0,461.8 L973.6,460.2 L974.2,458.6 L974.7,456.9 L975.3,455.3 L975.9,453.7 L976.4,452.1 L977.0,450.4 L977.5,448.8 L978.1,447.2 L978.6,445.5 L979.1,443.9 L979.6,442.3 L980.2,440.7 L980.7,439.0 L981.2,437.4 L981.7,435.8 L982.2,434.1 L982.6,432.5 L983.1,430.9 L983.6,429.3 L984.1,427.6 L984.5,426.0 L985.0,424.4 L985.4,422.8 L985.9,421.1 L986.3,419.5 L986.7,417.9 L987.2,416.2 L987.6,414.6 L988.0,413.0 L988.4,411.4 L988.8,409.7 L989.2,408.1 L989.6,406.5 L989.9,404.8 L990.3,403.2 L990.7,401.6 L991.0,400.0 L991.4,398.3 L991.7,396.7 L992.1,395.1 L992.4,393.5 L992.7,391.8 L993.0,390.2 L993.3,388.6 L993.6,386.9 L993.9,385.3 L994.2,383.7 L994.5,382.1 L994.8,380.4 L995.0,378.8 L995.3,377.2 L995.6,375.5 L995.8,373.9 L996.0,372.3 L996.3,370.7 L996.5,369.0 L996.7,367.4 L996.9,365.8 L997.1,364.2 L997.3,362.5 L997.5,360.9 L997.7,359.3 L997.9,357.6 L998.0,356.0 L998.2,354.4 L998.3,352.8 L998.5,351.1 L998.6,349.5 L998.7,347.9 L998.9,346.2 L999.0,344.6 L999.1,343.0 L999.2,341.4 L999.3,339.7 L999.4,338.1 L999.4,336.5 L999.5,334.9 L999.6,333.2 L999.6,331.6 L999.7,330.0 L999.7,328.3 L999.8,326.7 L999.8,325.1 L999.8,323.5 L999.8,321.8 L999.8,320.2 L999.8,318.6 L999.8,316.9 L999.8,315.3 L999.8,313.7 L999.7,312.1 L999.7,310.4 L999.6,308.8 L999.6,307.2 L999.5,305.5 L999.4,303.9 L999.4,302.3 L999.3,300.7 L999.2,299.0 L999.1,297.4 L999.0,295.8 L998.9,294.2 L998.7,292.5 L998.6,290.9 L998.5,289.3 L998.3,287.6 L998.2,286.0 L998.0,284.4 L997.9,282.8 L997.7,281.1 L997.5,279.5 L997.3,277.9 L997.1,276.2 L996.9,274.6 L996.7,273.0 L996.5,271.4 L996.3,269.7 L996.0,268.1 L995.8,266.5 L995.6,264.9 L995.3,263.2 L995.0,261.6 L994.8,260.0 L994.5,258.3 L994.2,256.7 L993.9,255.1 L993.6,253.5 L993.3,251.8 L993.0,250.2 L992.7,248.6 L992.4,246.9 L992.1,245.3 L991.7,243.7 L991.4,242.1 L991.0,240.4 L990.7,238.8 L990.3,237.2 L989.9,235.6 L989.6,233.9 L989.2,232.3 L988.8,230.7 L988.4,229.0 L988.0,227.4 L987.6,225.8 L987.2,224.2 L986.7,222.5 L986.3,220.9 L985.9,219.3 L985.4,217.6 L985.0,216.0 L984.5,214.4 L984.1,212.8 L983.6,211.1 L983.1,209.5 L982.6,207.9 L982.2,206.3 L981.7,204.6 L981.2,203.0 L980.7,201.4 L980.2,199.7 L979.6,198.1 L979.1,196.5 L978.6,194.9 L978.1,193.2 L977.5,191.6 L977.0,190.0 L976.4,188.3 L975.9,186.7 L975.3,185.1 L974.7,183.5 L974.2,181.8 L973.6,180.2 L973.0,178.6 L972.4,177.0 L971.8,175.3 L971.2,173.7 L970.6,172.1 L970.0,170.4 L969.4,168.8 L968.8,167.2 L968.1,165.6 L967.5,163.9 L966.9,162.3 L966.2,160.7 L965.6,159.0 L964.9,157.4 L964.3,155.8 L963.6,154.2 L962.9,152.5 L962.3,150.9 L961.6,149.3 L960.9,147.7 L960.2,146.0 L959.6,144.4 L958.9,142.8 L958.2,141.1 L957.5,139.5 L956.8,137.9 L956.1,136.3 L955.3,134.6 L954.6,133.0 L953.9,131.4 L953.2,129.7 L952.5,128.1 L951.7,126.5 L951.0,124.9 L950.2,123.2 L949.5,121.6 L948.8,120.0 L948.0,118.4 L947.2,116.7 L946.5,115.1 L945.7,113.5 L945.0,111.8 L944.2,110.2 L943.4,108.6 L942.7,107.0 L941.9,105.3 L941.1,103.7 L940.3,102.1 L939.5,100.4 L938.7,98.8 L937.9,97.2 L937.2,95.6 L936.4,93.9 L935.6,92.3 L934.8,90.7 L933.9,89.1 L933.1,87.4 L932.3,85.8 L931.5,84.2 L930.7,82.5 L929.9,80.9 L929.1,79.3 L928.3,77.7 L927.4,76.0 L926.6,74.4 L925.8,72.8 L925.0,71.1 L924.1,69.5 L923.3,67.9 L922.5,66.3 L921.6,64.6 L920.8,63.0 L919.9,61.4 L919.1,59.8 L918.3,58.1 L917.4,56.5 L916.6,54.9 L915.7,53.2 L914.9,51.6 L914.1,50.0 L913.2,48.4 L912.4,46.7 L911.5,45.1 L910.7,43.5 L909.8,41.8 L909.0,40.2 L908.1,38.6 L907.3,37.0 L906.4,35.3 L905.6,33.7 L904.7,32.1 L903.9,30.5 L903.0,28.8 L902.1,27.2"/>
<path d="M902.1,613.2 L902.6,611.6 L903.0,609.9 L903.4,608.3 L903.9,606.7 L904.3,605.1 L904.7,603.4 L905.1,601.8 L905.6,600.2 L906.0,598.6 L906.4,596.9 L906.8,595.3 L907.3,593.7 L907.7,592.0 L908.1,590.4 L908.5,588.8 L908.9,587.2 L909.4,585.5 L909.8,583.9 L910.2,582.3 L910.6,580.6 L911.0,579.0 L911.5,577.4 L911.9,575.8 L912.3,574.1 L912.7,572.5 L913.1,570.9 L913.6,569.3 L914.0,567.6 L914.4,566.0 L914.8,564.4 L915.2,562.7 L915.6,561.1 L916.0,559.5 L916.4,557.9 L916.8,556.2 L917.2,554.6 L917.6,553.0 L918.0,551.3 L918.5,549.7 L918.9,548.1 L919.3,546.5 L919.7,544.8 L920.0,543.2 L920.4,541.6 L920.8,540.0 L921.2,538.3 L921.6,536.7 L922.0,535.1 L922.4,533.4 L922.8,531.8 L923.2,530.2 L923.6,528.6 L923.9,526.9 L924.3,525.3 L924.7,523.7 L925.1,522.0 L925.5,520.4 L925.8,518.8 L926.2,517.2 L926.6,515.5 L926.9,513.9 L927.3,512.3 L927.7,510.7 L928.0,509.0 L928.4,507.4 L928.7,505.8 L929.1,504.1 L929.5,502.5 L929.8,500.9 L930.2,499.3 L930.5,497.6 L930.9,496.0 L931.2,494.4 L931.5,492.7 L931.9,491.1 L932.2,489.5 L932.5,487.9 L932.9,486.2 L933.2,484.6 L933.5,483.0 L933.9,481.4 L934.2,479.7 L934.5,478.1 L934.8,476.5 L935.1,474.8 L935.5,473.2 L935.8,471.6 L936.1,470.0 L936.4,468.3 L936.7,466.7 L937.0,465.1 L937.3,463.4 L937.6,461.8 L937.9,460.2 L938.2,458.6 L938.4,456.9 L938.7,455.3 L939.0,453.7 L939.3,452.1 L939.6,450.4 L939.8,448.8 L940.1,447.2 L940.4,445.5 L940.6,443.9 L940.9,442.3 L941.2,440.7 L941.4,439.0 L941.7,437.4 L941.9,435.8 L942.2,434.1 L942.4,432.5 L942.6,430.9 L942.9,429.3 L943.1,427.6 L943.3,426.0 L943.6,424.4 L943.8,422.8 L944.0,421.1 L944.2,419.5 L944.4,417.9 L944.7,416.2 L944.9,414.6 L945.1,413.0 L945.3,411.4 L945.5,409.7 L945.7,408.1 L945.9,406.5 L946.0,404.8 L946.2,403.2 L946.4,401.6 L946.6,400.0 L946.8,398.3 L946.9,396.7 L947.1,395.1 L947.3,393.5 L947.4,391.8 L947.6,390.2 L947.7,388.6 L947.9,386.9 L948.0,385.3 L948.2,383.7 L948.3,382.1 L948.5,380.4 L948.6,378.8 L948.7,377.2 L948.9,375.5 L949.0,373.9 L949.1,372.3 L949.2,370.7 L949.3,369.0 L949.4,367.4 L949.5,365.8 L949.6,364.2 L949.7,362.5 L949.8,360.9 L949.9,359.3 L950.0,357.6 L950.1,356.0 L950.2,354.4 L950.2,352.8 L950.3,351.1 L950.4,349.5 L950.4,347.9 L950.5,346.2 L950.6,344.6 L950.6,343.0 L950.7,341.4 L950.7,339.7 L950.8,338.1 L950.8,336.5 L950.8,334.9 L950.9,333.2 L950.9,331.6 L950.9,330.0 L950.9,328.3 L951.0,326.7 L951.0,325.1 L951.0,323.5 L951.0,321.8 L951.0,320.2 L951.0,318.6 L951.0,316.9 L951.0,315.3 L951.0,313.7 L950.9,312.1 L950.9,310.4 L950.9,308.8 L950.9,307.2 L950.8,305.5 L950.8,303.9 L950.8,302.3 L950.7,300.7 L950.7,299.0 L950.6,297.4 L950.6,295.8 L950.5,294.2 L950.4,292.5 L950.4,290.9 L950.3,289.3 L950.2,287.6 L950.2,286.0 L950.1,284.4 L950.0,282.8 L949.9,281.1 L949.8,279.5 L949.7,277.9 L949.6,276.2 L949.5,274.6 L949.4,273.0 L949.3,271.4 L949.2,269.7 L949.1,268.1 L949.0,266.5 L948.9,264.9 L948.7,263.2 L948.6,261.6 L948.5,260.0 L948.3,258.3 L948.2,256.7 L948.0,255.1 L947.9,253.5 L947.7,251.8 L947.6,250.2 L947.4,248.6 L947.3,246.9 L947.1,245.3 L946.9,243.7 L946.8,242.1 L946.6,240.4 L946.4,238.8 L946.2,237.2 L946.0,235.6 L945.9,233.9 L945.7,232.3 L945.5,230.7 L945.3,229.0 L945.1,227.4 L944.9,225.8 L944.7,224.2 L944.4,222.5 L944.2,220.9 L944.0,219.3 L943.8,217.6 L943.6,216.0 L943.3,214.4 L943.1,212.8 L942.9,211.1 L942.6,209.5 L942.4,207.9 L942.2,206.3 L941.9,204.6 L941.7,203.0 L941.4,201.4 L941.2,199.7 L940.9,198.1 L940.6,196.5 L940.4,194.9 L940.1,193.2 L939.8,191.6 L939.6,190.0 L939.3,188.3 L939.0,186.7 L938.7,185.1 L938.4,183.5 L938.2,181.8 L937.9,180.2 L937.6,178.6 L937.3,177.0 L937.0,175.3 L936.7,173.7 L936.4,172.1 L936.1,170.4 L935.8,168.8 L935.5,167.2 L935.1,165.6 L934.8,163.9 L934.5,162.3 L934.2,160.7 L933.9,159.0 L933.5,157.4 L933.2,155.8 L932.9,154.2 L932.5,152.5 L932.2,150.9 L931.9,149.3 L931.5,147.7 L931.2,146.0 L930.9,144.4 L930.5,142.8 L930.2,141.1 L929.8,139.5 L929.5,137.9 L929.1,136.3 L928.7,134.6 L928.4,133.0 L928.0,131.4 L927.7,129.7 L927.3,128.1 L926.9,126.5 L926.6,124.9 L926.2,123.2 L925.8,121.6 L925.5,120.0 L925.1,118.4 L924.7,116.7 L924.3,115.1 L923.9,113.5 L923.6,111.8 L923.2,110.2 L922.8,108.6 L922.4,107.0 L922.0,105.3 L921.6,103.7 L921.2,102.1 L920.8,100.4 L920.4,98.8 L920.0,97.2 L919.7,95.6 L919.3,93.9 L918.9,92.3 L918.5,90.7 L918.0,89.1 L917.6,87.4 L917.2,85.8 L916.8,84.2 L916.4,82.5 L916.0,80.9 L915.6,79.3 L915.2,77.7 L914.8,76.0 L914.4,74.4 L914.0,72.8 L913.6,71.1 L913.1,69.5 L912.7,67.9 L912.3,66.3 L911.9,64.6 L911.5,63.0 L911.0,61.4 L910.6,59.8 L910.2,58.1 L909.8,56.5 L909.4,54.9 L908.9,53.2 L908.5,51.6 L908.1,50.0 L907.7,48.4 L907.3,46.7 L906.8,45.1 L906.4,43.5 L906.0,41.8 L905.6,40.2 L905.1,38.6 L904.7,37.0 L904.3,35.3 L903.9,33.7 L903.4,32.1 L903.0,30.5 L902.6,28.8 L902.1,27.2"/>
<path d="M902.1,613.2 L902.1,611.6 L902.1,609.9 L902.1,608.3 L902.1,606.7 L902.1,605.1 L902.1,603.4 L902.1,601.8 L902.1,600.2 L902.1,598.6 L902.1,596.9 L902.1,595.3 L902.1,593.7 L902.1,592.0 L902.1,590.4 L902.1,588.8 L902.1,587.2 L902.1,585.5 L902.1,583.9 L902.1,582.3 L902.1,580.6 L902.1,579.0 L902.1,577.4 L902.1,575.8 L902.1,574.1 L902.1,572.5 L902.1,570.9 L902.1,569.3 L902.1,567.6 L902.1,566.0 L902.1,564.4 L902.1,562.7 L902.1,561.1 L902.1,559.5 L902.1,557.9 L902.1,556.2 L902.1,554.6 L902.1,553.0 L902.1,551.3 L902.1,549.7 L902.1,548.1 L902.1,546.5 L902.1,544.8 L902.1,543.2 L902.1,541.6 L902.1,540.0 L902.1,538.3 L902.1,536.7 L902.1,535.1 L902.1,533.4 L902.1,531.8 L902.1,530.2 L902.1,528.6 L902.1,526.9 L902.1,525.3 L902.1,523.7 L902.1,522.0 L902.1,520.4 L902.1,518.8 L902.1,517.2 L902.1,515.5 L902.1,513.9 L902.1,512.3 L902.1,510.7 L902.1,509.0 L902.1,507.4 L902.1,505.8 L902.1,504.1 L902.1,502.5 L902.1,500.9 L902.1,499.3 L902.1,497.6 L902.1,496.0 L902.1,494.4 L902.1,492.7 L902.1,491.1 L902.1,489.5 L902.1,487.9 L902.1,486.2 L902.1,484.6 L902.1,483.0 L902.1,481.4 L902.1,479.7 L902.1,478.1 L902.1,476.5 L902.1,474.8 L902.1,473.2 L902.1,471.6 L902.1,470.0 L902.1,468.3 L902.1,466.7 L902.1,465.1 L902.1,463.4 L902.1,461.8 L902.1,460.2 L902.1,458.6 L902.1,456.9 L902.1,455.3 L902.1,453.7 L902.1,452.1 L902.1,450.4 L902.1,448.8 L902.1,447.2 L902.1,445.5 L902.1,443.9 L902.1,442.3 L902.1,440.7 L902.1,439.0 L902.1,437.4 L902.1,435.8 L902.1,434.1 L902.1,432.5 L902.1,430.9 L902.1,429.3 L902.1,427.6 L902.1,426.0 L902.1,424.4 L902.1,422.8 L902.1,421.1 L902.1,419.5 L902.1,417.9 L902.1,416.2 L902.1,414.6 L902.1,413.0 L902.1,411.4 L902.1,409.7 L902.1,408.1 L902.1,406.5 L902.1,404.8 L902.1,403.2 L902.1,401.6 L902.1,400.0 L902.1,398.3 L902.1,396.7 L902.1,395.1 L902.1,393.5 L902.1,391.8 L902.1,390.2 L902.1,388.6 L902.1,386.9 L902.1,385.3 L902.1,383.7 L902.1,382.1 L902.1,380.4 L902.1,378.8 L902.1,377.2 L902.1,375.5 L902.1,373.9 L902.1,372.3 L902.1,370.7 L902.1,369.0 L902.1,367.4 L902.1,365.8 L902.1,364.2 L902.1,362.5 L902.1,360.9 L902.1,359.3 L902.1,357.6 L902.1,356.0 L902.1,354.4 L902.1,352.8 L902.1,351.1 L902.1,349.5 L902.1,347.9 L902.1,346.2 L902.1,344.6 L902.1,343.0 L902.1,341.4 L902.1,339.7 L902.1,338.1 L902.1,336.5 L902.1,334.9 L902.1,333.2 L902.1,331.6 L902.1,330.0 L902.1,328.3 L902.1,326.7 L902.1,325.1 L902.1,323.5 L902.1,321.8 L902.1,320.2 L902.1,318.6 L902.1,316.9 L902.1,315.3 L902.1,313.7 L902.1,312.1 L902.1,310.4 L902.1,308.8 L902.1,307.2 L902.1,305.5 L902.1,303.9 L902.1,302.3 L902.1,300.7 L902.1,299.0 L902.1,297.4 L902.1,295.8 L902.1,294.2 L902.1,292.5 L902.1,290.9 L902.1,289.3 L902.1,287.6 L902.1,286.0 L902.1,284.4 L902.1,282.8 L902.1,281.1 L902.1,279.5 L902.1,277.9 L902.1,276.2 L902.1,274.6 L902.1,273.0 L902.1,271.4 L902.1,269.7 L902.1,268.1 L902.1,266.5 L902.1,264.9 L902.1,263.2 L902.1,261.6 L902.1,260.0 L902.1,258.3 L902.1,256.7 L902.1,255.1 L902.1,253.5 L902.1,251.8 L902.1,250.2 L902.1,248.6 L902.1,246.9 L902.1,245.3 L902.1,243.7 L902.1,242.1 L902.1,240.4 L902.1,238.8 L902.1,237.2 L902.1,235.6 L902.1,233.9 L902.1,232.3 L902.1,230.7 L902.1,229.0 L902.1,227.4 L902.1,225.8 L902.1,224.2 L902.1,222.5 L902.1,220.9 L902.1,219.3 L902.1,217.6 L902.1,216.0 L902.1,214.4 L902.1,212.8 L902.1,211.1 L902.1,209.5 L902.1,207.9 L902.1,206.3 L902.1,204.6 L902.1,203.0 L902.1,201.4 L902.1,199.7 L902.1,198.1 L902.1,196.5 L902.1,194.9 L902.1,193.2 L902.1,191.6 L902.1,190.0 L902.1,188.3 L902.1,186.7 L902.1,185.1 L902.1,183.5 L902.1,181.8 L902.1,180.2 L902.1,178.6 L902.1,177.0 L902.1,175.3 L902.1,173.7 L902.1,172.1 L902.1,170.4 L902.1,168.8 L902.1,167.2 L902.1,165.6 L902.1,163.9 L902.1,162.3 L902.1,160.7 L902.1,159.0 L902.1,157.4 L902.1,155.8 L902.1,154.2 L902.1,152.5 L902.1,150.9 L902.1,149.3 L902.1,147.7 L902.1,146.0 L902.1,144.4 L902.1,142.8 L902.1,141.1 L902.1,139.5 L902.1,137.9 L902.1,136.3 L902.1,134.6 L902.1,133.0 L902.1,131.4 L902.1,129.7 L902.1,128.1 L902.1,126.5 L902.1,124.9 L902.1,123.2 L902.1,121.6 L902.1,120.0 L902.1,118.4 L902.1,116.7 L902.1,115.1 L902.1,113.5 L902.1,111.8 L902.1,110.2 L902.1,108.6 L902.1,107.0 L902.1,105.3 L902.1,103.7 L902.1,102.1 L902.1,100.4 L902.1,98.8 L902.1,97.2 L902.1,95.6 L902.1,93.9 L902.1,92.3 L902.1,90.7 L902.1,89.1 L902.1,87.4 L902.1,85.8 L902.1,84.2 L902.1,82.5 L902.1,80.9 L902.1,79.3 L902.1,77.7 L902.1,76.0 L902.1,74.4 L902.1,72.8 L902.1,71.1 L902.1,69.5 L902.1,67.9 L902.1,66.3 L902.1,64.6 L902.1,63.0 L902.1,61.4 L902.1,59.8 L902.1,58.1 L902.1,56.5 L902.1,54.9 L902.1,53.2 L902.1,51.6 L902.1,50.0 L902.1,48.4 L902.1,46.7 L902.1,45.1 L902.1,43.5 L902.1,41.8 L902.1,40.2 L902.1,38.6 L902.1,37.0 L902.1,35.3 L902.1,33.7 L902.1,32.1 L902.1,30.5 L902.1,28.8 L902.1,27.2"/>
<path d="M902.1,613.2 L901.7,611.6 L901.3,609.9 L900.9,608.3 L900.4,606.7 L900.0,605.1 L899.6,603.4 L899.2,601.8 L898.7,600.2 L898.3,598.6 L897.9,596.9 L897.5,595.3 L897.0,593.7 L896.6,592.0 L896.2,590.4 L895.8,588.8 L895.4,587.2 L894.9,585.5 L894.5,583.9 L894.1,582.3 L893.7,580.6 L893.3,579.0 L892.8,577.4 L892.4,575.8 L892.0,574.1 L891.6,572.5 L891.2,570.9 L890.7,569.3 L890.3,567.6 L889.9,566.0 L889.5,564.4 L889.1,562.7 L888.7,561.1 L888.3,559.5 L887.9,557.9 L887.5,556.2 L887.1,554.6 L886.7,553.0 L886.3,551.3 L885.8,549.7 L885.4,548.1 L885.0,546.5 L884.6,544.8 L884.3,543.2 L883.9,541.6 L883.5,540.0 L883.1,538.3 L882.7,536.7 L882.3,535.1 L881.9,533.4 L881.5,531.8 L881.1,530.2 L880.7,528.6 L880.4,526.9 L880.0,525.3 L879.6,523.7 L879.2,522.0 L878.8,520.4 L878.5,518.8 L878.1,517.2 L877.7,515.5 L877.4,513.9 L877.0,512.3 L876.6,510.7 L876.3,509.0 L875.9,507.4 L875.6,505.8 L875.2,504.1 L874.8,502.5 L874.5,500.9 L874.1,499.3 L873.8,497.6 L873.4,496.0 L873.1,494.4 L872.8,492.7 L872.4,491.1 L872.1,489.5 L871.8,487.9 L871.4,486.2 L871.1,484.6 L870.8,483.0 L870.4,481.4 L870.1,479.7 L869.8,478.1 L869.5,476.5 L869.2,474.8 L868.8,473.2 L868.5,471.6 L868.2,470.0 L867.9,468.3 L867.6,466.7 L867.3,465.1 L867.0,463.4 L866.7,461.8 L866.4,460.2 L866.1,458.6 L865.9,456.9 L865.6,455.3 L865.3,453.7 L865.0,452.1 L864.7,450.4 L864.5,448.8 L864.2,447.2 L863.9,445.5 L863.7,443.9 L863.4,442.3 L863.1,440.7 L862.9,439.0 L862.6,437.4 L862.4,435.8 L862.1,434.1 L861.9,432.5 L861.7,430.9 L861.4,429.3 L861.2,427.6 L861.0,426.0 L860.7,424.4 L860.5,422.8 L860.3,421.1 L860.1,419.5 L859.9,417.9 L859.6,416.2 L859.4,414.6 L859.2,413.0 L859.0,411.4 L858.8,409.7 L858.6,408.1 L858.4,406.5 L858.3,404.8 L858.1,403.2 L857.9,401.6 L857.7,400.0 L857.5,398.3 L857.4,396.7 L857.2,395.1 L857.0,393.5 L856.9,391.8 L856.7,390.2 L856.6,388.6 L856.4,386.9 L856.3,385.3 L856.1,383.7 L856.0,382.1 L855.8,380.4 L855.7,378.8 L855.6,377.2 L855.4,375.5 L855.3,373.9 L855.2,372.3 L855.1,370.7 L855.0,369.0 L854.9,367.4 L854.8,365.8 L854.7,364.2 L854.6,362.5 L854.5,360.9 L854.4,359.3 L854.3,357.6 L854.2,356.0 L854.1,354.4 L854.1,352.8 L854.0,351.1 L853.9,349.5 L853.9,347.9 L853.8,346.2 L853.7,344.6 L853.7,343.0 L853.6,341.4 L853.6,339.7 L853.5,338.1 L853.5,336.5 L853.5,334.9 L853.4,333.2 L853.4,331.6 L853.4,330.0 L853.4,328.3 L853.3,326.7 L853.3,325.1 L853.3,323.5 L853.3,321.8 L853.3,320.2 L853.3,318.6 L853.3,316.9 L853.3,315.3 L853.3,313.7 L853.4,312.1 L853.4,310.4 L853.4,308.8 L853.4,307.2 L853.5,305.5 L853.5,303.9 L853.5,302.3 L853.6,300.7 L853.6,299.0 L853.7,297.4 L853.7,295.8 L853.8,294.2 L853.9,292.5 L853.9,290.9 L854.0,289.3 L854.1,287.6 L854.1,286.0 L854.2,284.4 L854.3,282.8 L854.4,281.1 L854.5,279.5 L854.6,277.9 L854.7,276.2 L854.8,274.6 L854.9,273.0 L855.0,271.4 L855.1,269.7 L855.2,268.1 L855.3,266.5 L855.4,264.9 L855.6,263.2 L855.7,261.6 L855.8,260.0 L856.0,258.3 L856.1,256.7 L856.3,255.1 L856.4,253.5 L856.6,251.8 L856.7,250.2 L856.9,248.6 L857.0,246.9 L857.2,245.3 L857.4,243.7 L857.5,242.1 L857.7,240.4 L857.9,238.8 L858.1,237.2 L858.3,235.6 L858.4,233.9 L858.6,232.3 L858.8,230.7 L859.0,229.0 L859.2,227.4 L859.4,225.8 L859.6,224.2 L859.9,222.5 L860.1,220.9 L860.3,219.3 L860.5,217.6 L860.7,216.0 L861.0,214.4 L861.2,212.8 L861.4,211.1 L861.7,209.5 L861.9,207.9 L862.1,206.3 L862.4,204.6 L862.6,203.0 L862.9,201.4 L863.1,199.7 L863.4,198.1 L863.7,196.5 L863.9,194.9 L864.2,193.2 L864.5,191.6 L864.7,190.0 L865.0,188.3 L865.3,186.7 L865.6,185.1 L865.9,183.5 L866.1,181.8 L866.4,180.2 L866.7,178.6 L867.0,177.0 L867.3,175.3 L867.6,173.7 L867.9,172.1 L868.2,170.4 L868.5,168.8 L868.8,167.2 L869.2,165.6 L869.5,163.9 L869.8,162.3 L870.1,160.7 L870.4,159.0 L870.8,157.4 L871.1,155.8 L871.4,154.2 L871.8,152.5 L872.1,150.9 L872.4,149.3 L872.8,147.7 L873.1,146.0 L873.4,144.4 L873.8,142.8 L874.1,141.1 L874.5,139.5 L874.8,137.9 L875.2,136.3 L875.6,134.6 L875.9,133.0 L876.3,131.4 L876.6,129.7 L877.0,128.1 L877.4,126.5 L877.7,124.9 L878.1,123.2 L878.5,121.6 L878.8,120.0 L879.2,118.4 L879.6,116.7 L880.0,115.1 L880.4,113.5 L880.7,111.8 L881.1,110.2 L881.5,108.6 L881.9,107.0 L882.3,105.3 L882.7,103.7 L883.1,102.1 L883.5,100.4 L883.9,98.8 L884.3,97.2 L884.6,95.6 L885.0,93.9 L885.4,92.3 L885.8,90.7 L886.3,89.1 L886.7,87.4 L887.1,85.8 L887.5,84.2 L887.9,82.5 L888.3,80.9 L888.7,79.3 L889.1,77.7 L889.5,76.0 L889.9,74.4 L890.3,72.8 L890.7,71.1 L891.2,69.5 L891.6,67.9 L892.0,66.3 L892.4,64.6 L892.8,63.0 L893.3,61.4 L893.7,59.8 L894.1,58.1 L894.5,56.5 L894.9,54.9 L895.4,53.2 L895.8,51.6 L896.2,50.0 L896.6,48.4 L897.0,46.7 L897.5,45.1 L897.9,43.5 L898.3,41.8 L898.7,40.2 L899.2,38.6 L899.6,37.0 L900.0,35.3 L900.4,33.7 L900.9,32.1 L901.3,30.5 L901.7,28.8 L902.1,27.2"/>
<path d="M902.1,613.2 L901.3,611.6 L900.4,609.9 L899.6,608.3 L898.7,606.7 L897.9,605.1 L897.0,603.4 L896.2,601.8 L895.3,600.2 L894.5,598.6 L893.6,596.9 L892.8,595.3 L891.9,593.7 L891.1,592.0 L890.2,590.4 L889.4,588.8 L888.6,587.2 L887.7,585.5 L886.9,583.9 L886.0,582.3 L885.2,580.6 L884.4,579.0 L883.5,577.4 L882.7,575.8 L881.8,574.1 L881.0,572.5 L880.2,570.9 L879.3,569.3 L878.5,567.6 L877.7,566.0 L876.9,564.4 L876.0,562.7 L875.2,561.1 L874.4,559.5 L873.6,557.9 L872.8,556.2 L872.0,554.6 L871.2,553.0 L870.4,551.3 L869.5,549.7 L868.7,548.1 L867.9,546.5 L867.1,544.8 L866.4,543.2 L865.6,541.6 L864.8,540.0 L864.0,538.3 L863.2,536.7 L862.4,535.1 L861.6,533.4 L860.9,531.8 L860.1,530.2 L859.3,528.6 L858.6,526.9 L857.8,525.3 L857.1,523.7 L856.3,522.0 L855.5,520.4 L854.8,518.8 L854.1,517.2 L853.3,515.5 L852.6,513.9 L851.8,512.3 L851.1,510.7 L850.4,509.0 L849.7,507.4 L849.0,505.8 L848.2,504.1 L847.5,502.5 L846.8,500.9 L846.1,499.3 L845.4,497.6 L844.7,496.0 L844.1,494.4 L843.4,492.7 L842.7,491.1 L842.0,489.5 L841.4,487.9 L840.7,486.2 L840.0,484.6 L839.4,483.0 L838.7,481.4 L838.1,479.7 L837.4,478.1 L836.8,476.5 L836.2,474.8 L835.5,473.2 L834.9,471.6 L834.3,470.0 L833.7,468.3 L833.1,466.7 L832.5,465.1 L831.9,463.4 L831.3,461.8 L830.7,460.2 L830.1,458.6 L829.6,456.9 L829.0,455.3 L828.4,453.7 L827.9,452.1 L827.3,450.4 L826.8,448.8 L826.2,447.2 L825.7,445.5 L825.2,443.9 L824.7,442.3 L824.1,440.7 L823.6,439.0 L823.1,437.4 L822.6,435.8 L822.1,434.1 L821.7,432.5 L821.2,430.9 L820.7,429.3 L820.2,427.6 L819.8,426.0 L819.3,424.4 L818.9,422.8 L818.4,421.1 L818.0,419.5 L817.6,417.9 L817.1,416.2 L816.7,414.6 L816.3,413.0 L815.9,411.4 L815.5,409.7 L815.1,408.1 L814.7,406.5 L814.4,404.8 L814.0,403.2 L813.6,401.6 L813.3,400.0 L812.9,398.3 L812.6,396.7 L812.2,395.1 L811.9,393.5 L811.6,391.8 L811.3,390.2 L811.0,388.6 L810.7,386.9 L810.4,385.3 L810.1,383.7 L809.8,382.1 L809.5,380.4 L809.3,378.8 L809.0,377.2 L808.7,375.5 L808.5,373.9 L808.3,372.3 L808.0,370.7 L807.8,369.0 L807.6,367.4 L807.4,365.8 L807.2,364.2 L807.0,362.5 L806.8,360.9 L806.6,359.3 L806.4,357.6 L806.3,356.0 L806.1,354.4 L806.0,352.8 L805.8,351.1 L805.7,349.5 L805.6,347.9 L805.4,346.2 L805.3,344.6 L805.2,343.0 L805.1,341.4 L805.0,339.7 L804.9,338.1 L804.9,336.5 L804.8,334.9 L804.7,333.2 L804.7,331.6 L804.6,330.0 L804.6,328.3 L804.5,326.7 L804.5,325.1 L804.5,323.5 L804.5,321.8 L804.5,320.2 L804.5,318.6 L804.5,316.9 L804.5,315.3 L804.5,313.7 L804.6,312.1 L804.6,310.4 L804.7,308.8 L804.7,307.2 L804.8,305.5 L804.9,303.9 L804.9,302.3 L805.0,300.7 L805.1,299.0 L805.2,297.4 L805.3,295.8 L805.4,294.2 L805.6,292.5 L805.7,290.9 L805.8,289.3 L806.0,287.6 L806.1,286.0 L806.3,284.4 L806.4,282.8 L806.6,281.1 L806.8,279.5 L807.0,277.9 L807.2,276.2 L807.4,274.6 L807.6,273.0 L807.8,271.4 L808.0,269.7 L808.3,268.1 L808.5,266.5 L808.7,264.9 L809.0,263.2 L809.3,261.6 L809.5,260.0 L809.8,258.3 L810.1,256.7 L810.4,255.1 L810.7,253.5 L811.0,251.8 L811.3,250.2 L811.6,248.6 L811.9,246.9 L812.2,245.3 L812.6,243.7 L812.9,242.1 L813.3,240.4 L813.6,238.8 L814.0,237.2 L814.4,235.6 L814.7,233.9 L815.1,232.3 L815.5,230.7 L815.9,229.0 L816.3,227.4 L816.7,225.8 L817.1,224.2 L817.6,222.5 L818.0,220.9 L818.4,219.3 L818.9,217.6 L819.3,216.0 L819.8,214.4 L820.2,212.8 L820.7,211.1 L821.2,209.5 L821.7,207.9 L822.1,206.3 L822.6,204.6 L823.1,203.0 L823.6,201.4 L824.1,199.7 L824.7,198.1 L825.2,196.5 L825.7,194.9 L826.2,193.2 L826.8,191.6 L827.3,190.0 L827.9,188.3 L828.4,186.7 L829.0,185.1 L829.6,183.5 L830.1,181.8 L830.7,180.2 L831.3,178.6 L831.9,177.0 L832.5,175.3 L833.1,173.7 L833.7,172.1 L834.3,170.4 L834.9,168.8 L835.5,167.2 L836.2,165.6 L836.8,163.9 L837.4,162.3 L838.1,160.7 L838.7,159.0 L839.4,157.4 L840.0,155.8 L840.7,154.2 L841.4,152.5 L842.0,150.9 L842.7,149.3 L843.4,147.7 L844.1,146.0 L844.7,144.4 L845.4,142.8 L846.1,141.1 L846.8,139.5 L847.5,137.9 L848.2,136.3 L849.0,134.6 L849.7,133.0 L850.4,131.4 L851.1,129.7 L851.8,128.1 L852.6,126.5 L853.3,124.9 L854.1,123.2 L854.8,121.6 L855.5,120.0 L856.3,118.4 L857.1,116.7 L857.8,115.1 L858.6,113.5 L859.3,111.8 L860.1,110.2 L860.9,108.6 L861.6,107.0 L862.4,105.3 L863.2,103.7 L864.0,102.1 L864.8,100.4 L865.6,98.8 L866.4,97.2 L867.1,95.6 L867.9,93.9 L868.7,92.3 L869.5,90.7 L870.4,89.1 L871.2,87.4 L872.0,85.8 L872.8,84.2 L873.6,82.5 L874.4,80.9 L875.2,79.3 L876.0,77.7 L876.9,76.0 L877.7,74.4 L878.5,72.8 L879.3,71.1 L880.2,69.5 L881.0,67.9 L881.8,66.3 L882.7,64.6 L883.5,63.0 L884.4,61.4 L885.2,59.8 L886.0,58.1 L886.9,56.5 L887.7,54.9 L888.6,53.2 L889.4,51.6 L890.2,50.0 L891.1,48.4 L891.9,46.7 L892.8,45.1 L893.6,43.5 L894.5,41.8 L895.3,40.2 L896.2,38.6 L897.0,37.0 L897.9,35.3 L898.7,33.7 L899.6,32.1 L900.4,30.5 L901.3,28.8 L902.1,27.2"/>
<path d="M902.1,613.2 L900.9,611.6 L899.6,609.9 L898.3,608.3 L897.0,606.7 L895.8,605.1 L894.5,603.4 L893.2,601.8 L891.9,600.2 L890.7,598.6 L889.4,596.9 L888.1,595.3 L886.8,593.7 L885.6,592.0 L884.3,590.4 L883.0,588.8 L881.8,587.2 L880.5,585.5 L879.2,583.9 L878.0,582.3 L876.7,580.6 L875.5,579.0 L874.2,577.4 L872.9,575.8 L871.7,574.1 L870.4,572.5 L869.2,570.9 L867.9,569.3 L866.7,567.6 L865.5,566.0 L864.2,564.4 L863.0,562.7 L861.8,561.1 L860.5,559.5 L859.3,557.9 L858.1,556.2 L856.9,554.6 L855.7,553.0 L854.5,551.3 L853.2,549.7 L852.0,548.1 L850.8,546.5 L849.6,544.8 L848.5,543.2 L847.3,541.6 L846.1,540.0 L844.9,538.3 L843.7,536.7 L842.6,535.1 L841.4,533.4 L840.2,531.8 L839.1,530.2 L837.9,528.6 L836.8,526.9 L835.6,525.3 L834.5,523.7 L833.4,522.0 L832.2,520.4 L831.1,518.8 L830.0,517.2 L828.9,515.5 L827.8,513.9 L826.7,512.3 L825.6,510.7 L824.5,509.0 L823.4,507.4 L822.4,505.8 L821.3,504.1 L820.2,502.5 L819.2,500.9 L818.1,499.3 L817.1,497.6 L816.0,496.0 L815.0,494.4 L814.0,492.7 L813.0,491.1 L812.0,489.5 L811.0,487.9 L810.0,486.2 L809.0,484.6 L808.0,483.0 L807.0,481.4 L806.0,479.7 L805.1,478.1 L804.1,476.5 L803.2,474.8 L802.2,473.2 L801.3,471.6 L800.4,470.0 L799.5,468.3 L798.6,466.7 L797.7,465.1 L796.8,463.4 L795.9,461.8 L795.0,460.2 L794.1,458.6 L793.3,456.9 L792.4,455.3 L791.6,453.7 L790.7,452.1 L789.9,450.4 L789.1,448.8 L788.3,447.2 L787.5,445.5 L786.7,443.9 L785.9,442.3 L785.1,440.7 L784.4,439.0 L783.6,437.4 L782.9,435.8 L782.1,434.1 L781.4,432.5 L780.7,430.9 L780.0,429.3 L779.3,427.6 L778.6,426.0 L777.9,424.4 L777.2,422.8 L776.6,421.1 L775.9,419.5 L775.3,417.9 L774.6,416.2 L774.0,414.6 L773.4,413.0 L772.8,411.4 L772.2,409.7 L771.6,408.1 L771.0,406.5 L770.5,404.8 L769.9,403.2 L769.4,401.6 L768.8,400.0 L768.3,398.3 L767.8,396.7 L767.3,395.1 L766.8,393.5 L766.3,391.8 L765.8,390.2 L765.4,388.6 L764.9,386.9 L764.5,385.3 L764.1,383.7 L763.6,382.1 L763.2,380.4 L762.8,378.8 L762.4,377.2 L762.0,375.5 L761.7,373.9 L761.3,372.3 L761.0,370.7 L760.6,369.0 L760.3,367.4 L760.0,365.8 L759.7,364.2 L759.4,362.5 L759.1,360.9 L758.8,359.3 L758.6,357.6 L758.3,356.0 L758.1,354.4 L757.9,352.8 L757.7,351.1 L757.5,349.5 L757.3,347.9 L757.1,346.2 L756.9,344.6 L756.7,343.0 L756.6,341.4 L756.5,339.7 L756.3,338.1 L756.2,336.5 L756.1,334.9 L756.0,333.2 L755.9,331.6 L755.8,330.0 L755.8,328.3 L755.7,326.7 L755.7,325.1 L755.7,323.5 L755.7,321.8 L755.6,320.2 L755.7,318.6 L755.7,316.9 L755.7,315.3 L755.7,313.7 L755.8,312.1 L755.8,310.4 L755.9,308.8 L756.0,307.2 L756.1,305.5 L756.2,303.9 L756.3,302.3 L756.5,300.7 L756.6,299.0 L756.7,297.4 L756.9,295.8 L757.1,294.2 L757.3,292.5 L757.5,290.9 L757.7,289.3 L757.9,287.6 L758.1,286.0 L758.3,284.4 L758.6,282.8 L758.8,281.1 L759.1,279.5 L759.4,277.9 L759.7,276.2 L760.0,274.6 L760.3,273.0 L760.6,271.4 L761.0,269.7 L761.3,268.1 L761.7,266.5 L762.0,264.9 L762.4,263.2 L762.8,261.6 L763.2,260.0 L763.6,258.3 L764.1,256.7 L764.5,255.1 L764.9,253.5 L765.4,251.8 L765.8,250.2 L766.3,248.6 L766.8,246.9 L767.3,245.3 L767.8,243.7 L768.3,242.1 L768.8,240.4 L769.4,238.8 L769.9,237.2 L770.5,235.6 L771.0,233.9 L771.6,232.3 L772.2,230.7 L772.8,229.0 L773.4,227.4 L774.0,225.8 L774.6,224.2 L775.3,222.5 L775.9,220.9 L776.6,219.3 L777.2,217.6 L777.9,216.0 L778.6,214.4 L779.3,212.8 L780.0,211.1 L780.7,209.5 L781.4,207.9 L782.1,206.3 L782.9,204.6 L783.6,203.0 L784.4,201.4 L785.1,199.7 L785.9,198.1 L786.7,196.5 L787.5,194.9 L788.3,193.2 L789.1,191.6 L789.9,190.0 L790.7,188.3 L791.6,186.7 L792.4,185.1 L793.3,183.5 L794.1,181.8 L795.0,180.2 L795.9,178.6 L796.8,177.0 L797.7,175.3 L798.6,173.7 L799.5,172.1 L800.4,170.4 L801.3,168.8 L802.2,167.2 L803.2,165.6 L804.1,163.9 L805.1,162.3 L806.0,160.7 L807.0,159.0 L808.0,157.4 L809.0,155.8 L810.0,154.2 L811.0,152.5 L812.0,150.9 L813.0,149.3 L814.0,147.7 L815.0,146.0 L816.0,144.4 L817.1,142.8 L818.1,141.1 L819.2,139.5 L820.2,137.9 L821.3,136.3 L822.4,134.6 L823.4,133.0 L824.5,131.4 L825.6,129.7 L826.7,128.1 L827.8,126.5 L828.9,124.9 L830.0,123.2 L831.1,121.6 L832.2,120.0 L833.4,118.4 L834.5,116.7 L835.6,115.1 L836.8,113.5 L837.9,111.8 L839.1,110.2 L840.2,108.6 L841.4,107.0 L842.6,105.3 L843.7,103.7 L844.9,102.1 L846.1,100.4 L847.3,98.8 L848.5,97.2 L849.6,95.6 L850.8,93.9 L852.0,92.3 L853.2,90.7 L854.5,89.1 L855.7,87.4 L856.9,85.8 L858.1,84.2 L859.3,82.5 L860.5,80.9 L861.8,79.3 L863.0,77.7 L864.2,76.0 L865.5,74.4 L866.7,72.8 L867.9,71.1 L869.2,69.5 L870.4,67.9 L871.7,66.3 L872.9,64.6 L874.2,63.0 L875.5,61.4 L876.7,59.8 L878.0,58.1 L879.2,56.5 L880.5,54.9 L881.8,53.2 L883.0,51.6 L884.3,50.0 L885.6,48.4 L886.8,46.7 L888.1,45.1 L889.4,43.5 L890.7,41.8 L891.9,40.2 L893.2,38.6 L894.5,37.0 L895.8,35.3 L897.0,33.7 L898.3,32.1 L899.6,30.5 L900.9,28.8 L902.1,27.2"/>
<path d="M902.1,613.2 L900.4,611.6 L898.7,609.9 L897.0,608.3 L895.3,606.7 L893.6,605.1 L891.9,603.4 L890.2,601.8 L888.5,600.2 L886.8,598.6 L885.1,596.9 L883.4,595.3 L881.7,593.7 L880.0,592.0 L878.3,590.4 L876.7,588.8 L875.0,587.2 L873.3,585.5 L871.6,583.9 L869.9,582.3 L868.2,580.6 L866.6,579.0 L864.9,577.4 L863.2,575.8 L861.5,574.1 L859.9,572.5 L858.2,570.9 L856.5,569.3 L854.9,567.6 L853.2,566.0 L851.6,564.4 L849.9,562.7 L848.3,561.1 L846.7,559.5 L845.0,557.9 L843.4,556.2 L841.8,554.6 L840.2,553.0 L838.6,551.3 L836.9,549.7 L835.3,548.1 L833.7,546.5 L832.1,544.8 L830.6,543.2 L829.0,541.6 L827.4,540.0 L825.8,538.3 L824.3,536.7 L822.7,535.1 L821.1,533.4 L819.6,531.8 L818.1,530.2 L816.5,528.6 L815.0,526.9 L813.5,525.3 L812.0,523.7 L810.4,522.0 L808.9,520.4 L807.4,518.8 L806.0,517.2 L804.5,515.5 L803.0,513.9 L801.5,512.3 L800.1,510.7 L798.6,509.0 L797.2,507.4 L795.8,505.8 L794.3,504.1 L792.9,502.5 L791.5,500.9 L790.1,499.3 L788.7,497.6 L787.3,496.0 L786.0,494.4 L784.6,492.7 L783.2,491.1 L781.9,489.5 L780.6,487.9 L779.2,486.2 L777.9,484.6 L776.6,483.0 L775.3,481.4 L774.0,479.7 L772.7,478.1 L771.4,476.5 L770.2,474.8 L768.9,473.2 L767.7,471.6 L766.5,470.0 L765.2,468.3 L764.0,466.7 L762.8,465.1 L761.6,463.4 L760.5,461.8 L759.3,460.2 L758.1,458.6 L757.0,456.9 L755.9,455.3 L754.7,453.7 L753.6,452.1 L752.5,450.4 L751.4,448.8 L750.3,447.2 L749.3,445.5 L748.2,443.9 L747.2,442.3 L746.1,440.7 L745.1,439.0 L744.1,437.4 L743.1,435.8 L742.1,434.1 L741.2,432.5 L740.2,430.9 L739.3,429.3 L738.3,427.6 L737.4,426.0 L736.5,424.4 L735.6,422.8 L734.7,421.1 L733.8,419.5 L733.0,417.9 L732.1,416.2 L731.3,414.6 L730.5,413.0 L729.7,411.4 L728.9,409.7 L728.1,408.1 L727.3,406.5 L726.6,404.8 L725.8,403.2 L725.1,401.6 L724.4,400.0 L723.7,398.3 L723.0,396.7 L722.3,395.1 L721.7,393.5 L721.0,391.8 L720.4,390.2 L719.8,388.6 L719.2,386.9 L718.6,385.3 L718.0,383.7 L717.5,382.1 L716.9,380.4 L716.4,378.8 L715.9,377.2 L715.3,375.5 L714.9,373.9 L714.4,372.3 L713.9,370.7 L713.5,369.0 L713.0,367.4 L712.6,365.8 L712.2,364.2 L711.8,362.5 L711.4,360.9 L711.1,359.3 L710.7,357.6 L710.4,356.0 L710.1,354.4 L709.8,352.8 L709.5,351.1 L709.2,349.5 L709.0,347.9 L708.7,346.2 L708.5,344.6 L708.3,343.0 L708.1,341.4 L707.9,339.7 L707.7,338.1 L707.6,336.5 L707.4,334.9 L707.3,333.2 L707.2,331.6 L707.1,330.0 L707.0,328.3 L706.9,326.7 L706.9,325.1 L706.8,323.5 L706.8,321.8 L706.8,320.2 L706.8,318.6 L706.8,316.9 L706.9,315.3 L706.9,313.7 L707.0,312.1 L707.1,310.4 L707.2,308.8 L707.3,307.2 L707.4,305.5 L707.6,303.9 L707.7,302.3 L707.9,300.7 L708.1,299.0 L708.3,297.4 L708.5,295.8 L708.7,294.2 L709.0,292.5 L709.2,290.9 L709.5,289.3 L709.8,287.6 L710.1,286.0 L710.4,284.4 L710.7,282.8 L711.1,281.1 L711.4,279.5 L711.8,277.9 L712.2,276.2 L712.6,274.6 L713.0,273.0 L713.5,271.4 L713.9,269.7 L714.4,268.1 L714.9,266.5 L715.3,264.9 L715.9,263.2 L716.4,261.6 L716.9,260.0 L717.5,258.3 L718.0,256.7 L718.6,255.1 L719.2,253.5 L719.8,251.8 L720.4,250.2 L721.0,248.6 L721.7,246.9 L722.3,245.3 L723.0,243.7 L723.7,242.1 L724.4,240.4 L725.1,238.8 L725.8,237.2 L726.6,235.6 L727.3,233.9 L728.1,232.3 L728.9,230.7 L729.7,229.0 L730.5,227.4 L731.3,225.8 L732.1,224.2 L733.0,222.5 L733.8,220.9 L734.7,219.3 L735.6,217.6 L736.5,216.0 L737.4,214.4 L738.3,212.8 L739.3,211.1 L740.2,209.5 L741.2,207.9 L742.1,206.3 L743.1,204.6 L744.1,203.0 L745.1,201.4 L746.1,199.7 L747.2,198.1 L748.2,196.5 L749.3,194.9 L750.3,193.2 L751.4,191.6 L752.5,190.0 L753.6,188.3 L754.7,186.7 L755.9,185.1 L757.0,183.5 L758.1,181.8 L759.3,180.2 L760.5,178.6 L761.6,177.0 L762.8,175.3 L764.0,173.7 L765.2,172.1 L766.5,170.4 L767.7,168.8 L768.9,167.2 L770.2,165.6 L771.4,163.9 L772.7,162.3 L774.0,160.7 L775.3,159.0 L776.6,157.4 L777.9,155.8 L779.2,154.2 L780.6,152.5 L781.9,150.9 L783.2,149.3 L784.6,147.7 L786.0,146.0 L787.3,144.4 L788.7,142.8 L790.1,141.1 L791.5,139.5 L792.9,137.9 L794.3,136.3 L795.8,134.6 L797.2,133.0 L798.6,131.4 L800.1,129.7 L801.5,128.1 L803.0,126.5 L804.5,124.9 L806.0,123.2 L807.4,121.6 L808.9,120.0 L810.4,118.4 L812.0,116.7 L813.5,115.1 L815.0,113.5 L816.5,111.8 L818.1,110.2 L819.6,108.6 L821.1,107.0 L822.7,105.3 L824.3,103.7 L825.8,102.1 L827.4,100.4 L829.0,98.8 L830.6,97.2 L832.1,95.6 L833.7,93.9 L835.3,92.3 L836.9,90.7 L838.6,89.1 L840.2,87.4 L841.8,85.8 L843.4,84.2 L845.0,82.5 L846.7,80.9 L848.3,79.3 L849.9,77.7 L851.6,76.0 L853.2,74.4 L854.9,72.8 L856.5,71.1 L858.2,69.5 L859.9,67.9 L861.5,66.3 L863.2,64.6 L864.9,63.0 L866.6,61.4 L868.2,59.8 L869.9,58.1 L871.6,56.5 L873.3,54.9 L875.0,53.2 L876.7,51.6 L878.3,50.0 L880.0,48.4 L881.7,46.7 L883.4,45.1 L885.1,43.5 L886.8,41.8 L888.5,40.2 L890.2,38.6 L891.9,37.0 L893.6,35.3 L895.3,33.7 L897.0,32.1 L898.7,30.5 L900.4,28.8 L902.1,27.2"/>
<path d="M902.1,613.2 L900.0,611.6 L897.9,609.9 L895.8,608.3 L893.6,606.7 L891.5,605.1 L889.4,603.4 L887.2,601.8 L885.1,600.2 L883.0,598.6 L880.9,596.9 L878.7,595.3 L876.6,593.7 L874.5,592.0 L872.4,590.4 L870.3,588.8 L868.2,587.2 L866.1,585.5 L864.0,583.9 L861.9,582.3 L859.8,580.6 L857.7,579.0 L855.6,577.4 L853.5,575.8 L851.4,574.1 L849.3,572.5 L847.2,570.9 L845.1,569.3 L843.1,567.6 L841.0,566.0 L839.0,564.4 L836.9,562.7 L834.8,561.1 L832.8,559.5 L830.8,557.9 L828.7,556.2 L826.7,554.6 L824.7,553.0 L822.7,551.3 L820.6,549.7 L818.6,548.1 L816.6,546.5 L814.6,544.8 L812.7,543.2 L810.7,541.6 L808.7,540.0 L806.7,538.3 L804.8,536.7 L802.8,535.1 L800.9,533.4 L799.0,531.8 L797.0,530.2 L795.1,528.6 L793.2,526.9 L791.3,525.3 L789.4,523.7 L787.5,522.0 L785.6,520.4 L783.8,518.8 L781.9,517.2 L780.1,515.5 L778.2,513.9 L776.4,512.3 L774.6,510.7 L772.8,509.0 L771.0,507.4 L769.2,505.8 L767.4,504.1 L765.6,502.5 L763.9,500.9 L762.1,499.3 L760.4,497.6 L758.6,496.0 L756.9,494.4 L755.2,492.7 L753.5,491.1 L751.8,489.5 L750.2,487.9 L748.5,486.2 L746.8,484.6 L745.2,483.0 L743.6,481.4 L742.0,479.7 L740.4,478.1 L738.8,476.5 L737.2,474.8 L735.6,473.2 L734.1,471.6 L732.5,470.0 L731.0,468.3 L729.5,466.7 L728.0,465.1 L726.5,463.4 L725.0,461.8 L723.6,460.2 L722.1,458.6 L720.7,456.9 L719.3,455.3 L717.9,453.7 L716.5,452.1 L715.1,450.4 L713.7,448.8 L712.4,447.2 L711.1,445.5 L709.7,443.9 L708.4,442.3 L707.1,440.7 L705.9,439.0 L704.6,437.4 L703.4,435.8 L702.1,434.1 L700.9,432.5 L699.7,430.9 L698.5,429.3 L697.4,427.6 L696.2,426.0 L695.1,424.4 L694.0,422.8 L692.9,421.1 L691.8,419.5 L690.7,417.9 L689.6,416.2 L688.6,414.6 L687.6,413.0 L686.6,411.4 L685.6,409.7 L684.6,408.1 L683.6,406.5 L682.7,404.8 L681.8,403.2 L680.9,401.6 L680.0,400.0 L679.1,398.3 L678.2,396.7 L677.4,395.1 L676.6,393.5 L675.8,391.8 L675.0,390.2 L674.2,388.6 L673.4,386.9 L672.7,385.3 L672.0,383.7 L671.3,382.1 L670.6,380.4 L669.9,378.8 L669.3,377.2 L668.6,375.5 L668.0,373.9 L667.4,372.3 L666.9,370.7 L666.3,369.0 L665.8,367.4 L665.2,365.8 L664.7,364.2 L664.2,362.5 L663.8,360.9 L663.3,359.3 L662.9,357.6 L662.5,356.0 L662.1,354.4 L661.7,352.8 L661.3,351.1 L661.0,349.5 L660.7,347.9 L660.4,346.2 L660.1,344.6 L659.8,343.0 L659.5,341.4 L659.3,339.7 L659.1,338.1 L658.9,336.5 L658.7,334.9 L658.6,333.2 L658.4,331.6 L658.3,330.0 L658.2,328.3 L658.1,326.7 L658.1,325.1 L658.0,323.5 L658.0,321.8 L658.0,320.2 L658.0,318.6 L658.0,316.9 L658.1,315.3 L658.1,313.7 L658.2,312.1 L658.3,310.4 L658.4,308.8 L658.6,307.2 L658.7,305.5 L658.9,303.9 L659.1,302.3 L659.3,300.7 L659.5,299.0 L659.8,297.4 L660.1,295.8 L660.4,294.2 L660.7,292.5 L661.0,290.9 L661.3,289.3 L661.7,287.6 L662.1,286.0 L662.5,284.4 L662.9,282.8 L663.3,281.1 L663.8,279.5 L664.2,277.9 L664.7,276.2 L665.2,274.6 L665.8,273.0 L666.3,271.4 L666.9,269.7 L667.4,268.1 L668.0,266.5 L668.6,264.9 L669.3,263.2 L669.9,261.6 L670.6,260.0 L671.3,258.3 L672.0,256.7 L672.7,255.1 L673.4,253.5 L674.2,251.8 L675.0,250.2 L675.8,248.6 L676.6,246.9 L677.4,245.3 L678.2,243.7 L679.1,242.1 L680.0,240.4 L680.9,238.8 L681.8,237.2 L682.7,235.6 L683.6,233.9 L684.6,232.3 L685.6,230.7 L686.6,229.0 L687.6,227.4 L688.6,225.8 L689.6,224.2 L690.7,222.5 L691.8,220.9 L692.9,219.3 L694.0,217.6 L695.1,216.0 L696.2,214.4 L697.4,212.8 L698.5,211.1 L699.7,209.5 L700.9,207.9 L702.1,206.3 L703.4,204.6 L704.6,203.0 L705.9,201.4 L707.1,199.7 L708.4,198.1 L709.7,196.5 L711.1,194.9 L712.4,193.2 L713.7,191.6 L715.1,190.0 L716.5,188.3 L717.9,186.7 L719.3,185.1 L720.7,183.5 L722.1,181.8 L723.6,180.2 L725.0,178.6 L726.5,177.0 L728.0,175.3 L729.5,173.7 L731.0,172.1 L732.5,170.4 L734.1,168.8 L735.6,167.2 L737.2,165.6 L738.8,163.9 L740.4,162.3 L742.0,160.7 L743.6,159.0 L745.2,157.4 L746.8,155.8 L748.5,154.2 L750.2,152.5 L751.8,150.9 L753.5,149.3 L755.2,147.7 L756.9,146.0 L758.6,144.4 L760.4,142.8 L762.1,141.1 L763.9,139.5 L765.6,137.9 L767.4,136.3 L769.2,134.6 L771.0,133.0 L772.8,131.4 L774.6,129.7 L776.4,128.1 L778.2,126.5 L780.1,124.9 L781.9,123.2 L783.8,121.6 L785.6,120.0 L787.5,118.4 L789.4,116.7 L791.3,115.1 L793.2,113.5 L795.1,111.8 L797.0,110.2 L799.0,108.6 L800.9,107.0 L802.8,105.3 L804.8,103.7 L806.7,102.1 L808.7,100.4 L810.7,98.8 L812.7,97.2 L814.6,95.6 L816.6,93.9 L818.6,92.3 L820.6,90.7 L822.7,89.1 L824.7,87.4 L826.7,85.8 L828.7,84.2 L830.8,82.5 L832.8,80.9 L834.8,79.3 L836.9,77.7 L839.0,76.0 L841.0,74.4 L843.1,72.8 L845.1,71.1 L847.2,69.5 L849.3,67.9 L851.4,66.3 L853.5,64.6 L855.6,63.0 L857.7,61.4 L859.8,59.8 L861.9,58.1 L864.0,56.5 L866.1,54.9 L868.2,53.2 L870.3,51.6 L872.4,50.0 L874.5,48.4 L876.6,46.7 L878.7,45.1 L880.9,43.5 L883.0,41.8 L885.1,40.2 L887.2,38.6 L889.4,37.0 L891.5,35.3 L893.6,33.7 L895.8,32.1 L897.9,30.5 L900.0,28.8 L902.1,27.2"/>
<path d="M902.1,613.2 L899.6,611.6 L897.0,609.9 L894.5,608.3 L891.9,606.7 L889.4,605.1 L886.8,603.4 L884.3,601.8 L881.7,600.2 L879.2,598.6 L876.6,596.9 L874.1,595.3 L871.5,593.7 L869.0,592.0 L866.4,590.4 L863.9,588.8 L861.4,587.2 L858.8,585.5 L856.3,583.9 L853.8,582.3 L851.3,580.6 L848.8,579.0 L846.2,577.4 L843.7,575.8 L841.2,574.1 L838.7,572.5 L836.2,570.9 L833.7,569.3 L831.3,567.6 L828.8,566.0 L826.3,564.4 L823.8,562.7 L821.4,561.1 L818.9,559.5 L816.5,557.9 L814.0,556.2 L811.6,554.6 L809.2,553.0 L806.8,551.3 L804.3,549.7 L801.9,548.1 L799.5,546.5 L797.1,544.8 L794.8,543.2 L792.4,541.6 L790.0,540.0 L787.7,538.3 L785.3,536.7 L783.0,535.1 L780.6,533.4 L778.3,531.8 L776.0,530.2 L773.7,528.6 L771.4,526.9 L769.1,525.3 L766.9,523.7 L764.6,522.0 L762.3,520.4 L760.1,518.8 L757.9,517.2 L755.6,515.5 L753.4,513.9 L751.2,512.3 L749.1,510.7 L746.9,509.0 L744.7,507.4 L742.6,505.8 L740.4,504.1 L738.3,502.5 L736.2,500.9 L734.1,499.3 L732.0,497.6 L729.9,496.0 L727.9,494.4 L725.8,492.7 L723.8,491.1 L721.8,489.5 L719.8,487.9 L717.8,486.2 L715.8,484.6 L713.8,483.0 L711.9,481.4 L709.9,479.7 L708.0,478.1 L706.1,476.5 L704.2,474.8 L702.3,473.2 L700.5,471.6 L698.6,470.0 L696.8,468.3 L695.0,466.7 L693.2,465.1 L691.4,463.4 L689.6,461.8 L687.9,460.2 L686.1,458.6 L684.4,456.9 L682.7,455.3 L681.0,453.7 L679.3,452.1 L677.7,450.4 L676.1,448.8 L674.4,447.2 L672.8,445.5 L671.3,443.9 L669.7,442.3 L668.1,440.7 L666.6,439.0 L665.1,437.4 L663.6,435.8 L662.1,434.1 L660.7,432.5 L659.2,430.9 L657.8,429.3 L656.4,427.6 L655.0,426.0 L653.7,424.4 L652.3,422.8 L651.0,421.1 L649.7,419.5 L648.4,417.9 L647.1,416.2 L645.9,414.6 L644.7,413.0 L643.4,411.4 L642.3,409.7 L641.1,408.1 L639.9,406.5 L638.8,404.8 L637.7,403.2 L636.6,401.6 L635.5,400.0 L634.5,398.3 L633.4,396.7 L632.4,395.1 L631.4,393.5 L630.5,391.8 L629.5,390.2 L628.6,388.6 L627.7,386.9 L626.8,385.3 L626.0,383.7 L625.1,382.1 L624.3,380.4 L623.5,378.8 L622.7,377.2 L621.9,375.5 L621.2,373.9 L620.5,372.3 L619.8,370.7 L619.1,369.0 L618.5,367.4 L617.8,365.8 L617.2,364.2 L616.7,362.5 L616.1,360.9 L615.5,359.3 L615.0,357.6 L614.5,356.0 L614.1,354.4 L613.6,352.8 L613.2,351.1 L612.8,349.5 L612.4,347.9 L612.0,346.2 L611.7,344.6 L611.3,343.0 L611.0,341.4 L610.8,339.7 L610.5,338.1 L610.3,336.5 L610.0,334.9 L609.9,333.2 L609.7,331.6 L609.5,330.0 L609.4,328.3 L609.3,326.7 L609.2,325.1 L609.2,323.5 L609.2,321.8 L609.1,320.2 L609.2,318.6 L609.2,316.9 L609.2,315.3 L609.3,313.7 L609.4,312.1 L609.5,310.4 L609.7,308.8 L609.9,307.2 L610.0,305.5 L610.3,303.9 L610.5,302.3 L610.8,300.7 L611.0,299.0 L611.3,297.4 L611.7,295.8 L612.0,294.2 L612.4,292.5 L612.8,290.9 L613.2,289.3 L613.6,287.6 L614.1,286.0 L614.5,284.4 L615.0,282.8 L615.5,281.1 L616.1,279.5 L616.7,277.9 L617.2,276.2 L617.8,274.6 L618.5,273.0 L619.1,271.4 L619.8,269.7 L620.5,268.1 L621.2,266.5 L621.9,264.9 L622.7,263.2 L623.5,261.6 L624.3,260.0 L625.1,258.3 L626.0,256.7 L626.8,255.1 L627.7,253.5 L628.6,251.8 L629.5,250.2 L630.5,248.6 L631.4,246.9 L632.4,245.3 L633.4,243.7 L634.5,242.1 L635.5,240.4 L636.6,238.8 L637.7,237.2 L638.8,235.6 L639.9,233.9 L641.1,232.3 L642.3,230.7 L643.4,229.0 L644.7,227.4 L645.9,225.8 L647.1,224.2 L648.4,222.5 L649.7,220.9 L651.0,219.3 L652.3,217.6 L653.7,216.0 L655.0,214.4 L656.4,212.8 L657.8,211.1 L659.2,209.5 L660.7,207.9 L662.1,206.3 L663.6,204.6 L665.1,203.0 L666.6,201.4 L668.1,199.7 L669.7,198.1 L671.3,196.5 L672.8,194.9 L674.4,193.2 L676.1,191.6 L677.7,190.0 L679.3,188.3 L681.0,186.7 L682.7,185.1 L684.4,183.5 L686.1,181.8 L687.9,180.2 L689.6,178.6 L691.4,177.0 L693.2,175.3 L695.0,173.7 L696.8,172.1 L698.6,170.4 L700.5,168.8 L702.3,167.2 L704.2,165.6 L706.1,163.9 L708.0,162.3 L709.9,160.7 L711.9,159.0 L713.8,157.4 L715.8,155.8 L717.8,154.2 L719.8,152.5 L721.8,150.9 L723.8,149.3 L725.8,147.7 L727.9,146.0 L729.9,144.4 L732.0,142.8 L734.1,141.1 L736.2,139.5 L738.3,137.9 L740.4,136.3 L742.6,134.6 L744.7,133.0 L746.9,131.4 L749.1,129.7 L751.2,128.1 L753.4,126.5 L755.6,124.9 L757.9,123.2 L760.1,121.6 L762.3,120.0 L764.6,118.4 L766.9,116.7 L769.1,115.1 L771.4,113.5 L773.7,111.8 L776.0,110.2 L778.3,108.6 L780.6,107.0 L783.0,105.3 L785.3,103.7 L787.7,102.1 L790.0,100.4 L792.4,98.8 L794.8,97.2 L797.1,95.6 L799.5,93.9 L801.9,92.3 L804.3,90.7 L806.8,89.1 L809.2,87.4 L811.6,85.8 L814.0,84.2 L816.5,82.5 L818.9,80.9 L821.4,79.3 L823.8,77.7 L826.3,76.0 L828.8,74.4 L831.3,72.8 L833.7,71.1 L836.2,69.5 L838.7,67.9 L841.2,66.3 L843.7,64.6 L846.2,63.0 L848.8,61.4 L851.3,59.8 L853.8,58.1 L856.3,56.5 L858.8,54.9 L861.4,53.2 L863.9,51.6 L866.4,50.0 L869.0,48.4 L871.5,46.7 L874.1,45.1 L876.6,43.5 L879.2,41.8 L881.7,40.2 L884.3,38.6 L886.8,37.0 L889.4,35.3 L891.9,33.7 L894.5,32.1 L897.0,30.5 L899.6,28.8 L902.1,27.2"/>
<path d="M902.1,613.2 L899.2,611.6 L896.2,609.9 L893.2,608.3 L890.2,606.7 L887.2,605.1 L884.3,603.4 L881.3,601.8 L878.3,600.2 L875.3,598.6 L872.4,596.9 L869.4,595.3 L866.4,593.7 L863.5,592.0 L860.5,590.4 L857.5,588.8 L854.6,587.2 L851.6,585.5 L848.7,583.9 L845.7,582.3 L842.8,580.6 L839.9,579.0 L836.9,577.4 L834.0,575.8 L831.1,574.1 L828.2,572.5 L825.3,570.9 L822.3,569.3 L819.5,567.6 L816.6,566.0 L813.7,564.4 L810.8,562.7 L807.9,561.1 L805.1,559.5 L802.2,557.9 L799.4,556.2 L796.5,554.6 L793.7,553.0 L790.9,551.3 L788.0,549.7 L785.2,548.1 L782.4,546.5 L779.6,544.8 L776.9,543.2 L774.1,541.6 L771.3,540.0 L768.6,538.3 L765.8,536.7 L763.1,535.1 L760.4,533.4 L757.7,531.8 L755.0,530.2 L752.3,528.6 L749.6,526.9 L747.0,525.3 L744.3,523.7 L741.7,522.0 L739.0,520.4 L736.4,518.8 L733.8,517.2 L731.2,515.5 L728.7,513.9 L726.1,512.3 L723.5,510.7 L721.0,509.0 L718.5,507.4 L716.0,505.8 L713.5,504.1 L711.0,502.5 L708.5,500.9 L706.1,499.3 L703.6,497.6 L701.2,496.0 L698.8,494.4 L696.4,492.7 L694.1,491.1 L691.7,489.5 L689.4,487.9 L687.0,486.2 L684.7,484.6 L682.4,483.0 L680.1,481.4 L677.9,479.7 L675.6,478.1 L673.4,476.5 L671.2,474.8 L669.0,473.2 L666.8,471.6 L664.7,470.0 L662.6,468.3 L660.4,466.7 L658.3,465.1 L656.3,463.4 L654.2,461.8 L652.1,460.2 L650.1,458.6 L648.1,456.9 L646.1,455.3 L644.2,453.7 L642.2,452.1 L640.3,450.4 L638.4,448.8 L636.5,447.2 L634.6,445.5 L632.8,443.9 L631.0,442.3 L629.1,440.7 L627.4,439.0 L625.6,437.4 L623.9,435.8 L622.1,434.1 L620.4,432.5 L618.8,430.9 L617.1,429.3 L615.5,427.6 L613.8,426.0 L612.3,424.4 L610.7,422.8 L609.1,421.1 L607.6,419.5 L606.1,417.9 L604.6,416.2 L603.2,414.6 L601.7,413.0 L600.3,411.4 L598.9,409.7 L597.6,408.1 L596.2,406.5 L594.9,404.8 L593.6,403.2 L592.3,401.6 L591.1,400.0 L589.9,398.3 L588.7,396.7 L587.5,395.1 L586.3,393.5 L585.2,391.8 L584.1,390.2 L583.0,388.6 L582.0,386.9 L580.9,385.3 L579.9,383.7 L578.9,382.1 L578.0,380.4 L577.0,378.8 L576.1,377.2 L575.2,375.5 L574.4,373.9 L573.6,372.3 L572.7,370.7 L572.0,369.0 L571.2,367.4 L570.5,365.8 L569.8,364.2 L569.1,362.5 L568.4,360.9 L567.8,359.3 L567.2,357.6 L566.6,356.0 L566.0,354.4 L565.5,352.8 L565.0,351.1 L564.5,349.5 L564.1,347.9 L563.6,346.2 L563.2,344.6 L562.9,343.0 L562.5,341.4 L562.2,339.7 L561.9,338.1 L561.6,336.5 L561.4,334.9 L561.1,333.2 L560.9,331.6 L560.8,330.0 L560.6,328.3 L560.5,326.7 L560.4,325.1 L560.4,323.5 L560.3,321.8 L560.3,320.2 L560.3,318.6 L560.4,316.9 L560.4,315.3 L560.5,313.7 L560.6,312.1 L560.8,310.4 L560.9,308.8 L561.1,307.2 L561.4,305.5 L561.6,303.9 L561.9,302.3 L562.2,300.7 L562.5,299.0 L562.9,297.4 L563.2,295.8 L563.6,294.2 L564.1,292.5 L564.5,290.9 L565.0,289.3 L565.5,287.6 L566.0,286.0 L566.6,284.4 L567.2,282.8 L567.8,281.1 L568.4,279.5 L569.1,277.9 L569.8,276.2 L570.5,274.6 L571.2,273.0 L572.0,271.4 L572.7,269.7 L573.6,268.1 L574.4,266.5 L575.2,264.9 L576.1,263.2 L577.0,261.6 L578.0,260.0 L578.9,258.3 L579.9,256.7 L580.9,255.1 L582.0,253.5 L583.0,251.8 L584.1,250.2 L585.2,248.6 L586.3,246.9 L587.5,245.3 L588.7,243.7 L589.9,242.1 L591.1,240.4 L592.3,238.8 L593.6,237.2 L594.9,235.6 L596.2,233.9 L597.6,232.3 L598.9,230.7 L600.3,229.0 L601.7,227.4 L603.2,225.8 L604.6,224.2 L606.1,222.5 L607.6,220.9 L609.1,219.3 L610.7,217.6 L612.3,216.0 L613.8,214.4 L615.5,212.8 L617.1,211.1 L618.8,209.5 L620.4,207.9 L622.1,206.3 L623.9,204.6 L625.6,203.0 L627.4,201.4 L629.1,199.7 L631.0,198.1 L632.8,196.5 L634.6,194.9 L636.5,193.2 L638.4,191.6 L640.3,190.0 L642.2,188.3 L644.2,186.7 L646.1,185.1 L648.1,183.5 L650.1,181.8 L652.1,180.2 L654.2,178.6 L656.3,177.0 L658.3,175.3 L660.4,173.7 L662.6,172.1 L664.7,170.4 L666.8,168.8 L669.0,167.2 L671.2,165.6 L673.4,163.9 L675.6,162.3 L677.9,160.7 L680.1,159.0 L682.4,157.4 L684.7,155.8 L687.0,154.2 L689.4,152.5 L691.7,150.9 L694.1,149.3 L696.4,147.7 L698.8,146.0 L701.2,144.4 L703.6,142.8 L706.1,141.1 L708.5,139.5 L711.0,137.9 L713.5,136.3 L716.0,134.6 L718.5,133.0 L721.0,131.4 L723.5,129.7 L726.1,128.1 L728.7,126.5 L731.2,124.9 L733.8,123.2 L736.4,121.6 L739.0,120.0 L741.7,118.4 L744.3,116.7 L747.0,115.1 L749.6,113.5 L752.3,111.8 L755.0,110.2 L757.7,108.6 L760.4,107.0 L763.1,105.3 L765.8,103.7 L768.6,102.1 L771.3,100.4 L774.1,98.8 L776.9,97.2 L779.6,95.6 L782.4,93.9 L785.2,92.3 L788.0,90.7 L790.9,89.1 L793.7,87.4 L796.5,85.8 L799.4,84.2 L802.2,82.5 L805.1,80.9 L807.9,79.3 L810.8,77.7 L813.7,76.0 L816.6,74.4 L819.5,72.8 L822.3,71.1 L825.3,69.5 L828.2,67.9 L831.1,66.3 L834.0,64.6 L836.9,63.0 L839.9,61.4 L842.8,59.8 L845.7,58.1 L848.7,56.5 L851.6,54.9 L854.6,53.2 L857.5,51.6 L860.5,50.0 L863.5,48.4 L866.4,46.7 L869.4,45.1 L872.4,43.5 L875.3,41.8 L878.3,40.2 L881.3,38.6 L884.3,37.0 L887.2,35.3 L890.2,33.7 L893.2,32.1 L896.2,30.5 L899.2,28.8 L902.1,27.2"/>
<path d="M902.1,613.2 L898.7,611.6 L895.3,609.9 L891.9,608.3 L888.5,606.7 L885.1,605.1 L881.7,603.4 L878.3,601.8 L874.9,600.2 L871.5,598.6 L868.1,596.9 L864.7,595.3 L861.3,593.7 L857.9,592.0 L854.5,590.4 L851.2,588.8 L847.8,587.2 L844.4,585.5 L841.0,583.9 L837.7,582.3 L834.3,580.6 L831.0,579.0 L827.6,577.4 L824.3,575.8 L820.9,574.1 L817.6,572.5 L814.3,570.9 L810.9,569.3 L807.6,567.6 L804.3,566.0 L801.0,564.4 L797.7,562.7 L794.5,561.1 L791.2,559.5 L787.9,557.9 L784.7,556.2 L781.4,554.6 L778.2,553.0 L775.0,551.3 L771.7,549.7 L768.5,548.1 L765.3,546.5 L762.1,544.8 L759.0,543.2 L755.8,541.6 L752.6,540.0 L749.5,538.3 L746.4,536.7 L743.2,535.1 L740.1,533.4 L737.0,531.8 L734.0,530.2 L730.9,528.6 L727.8,526.9 L724.8,525.3 L721.8,523.7 L718.7,522.0 L715.7,520.4 L712.7,518.8 L709.8,517.2 L706.8,515.5 L703.9,513.9 L700.9,512.3 L698.0,510.7 L695.1,509.0 L692.2,507.4 L689.4,505.8 L686.5,504.1 L683.7,502.5 L680.9,500.9 L678.1,499.3 L675.3,497.6 L672.5,496.0 L669.8,494.4 L667.0,492.7 L664.3,491.1 L661.6,489.5 L659.0,487.9 L656.3,486.2 L653.7,484.6 L651.0,483.0 L648.4,481.4 L645.8,479.7 L643.3,478.1 L640.7,476.5 L638.2,474.8 L635.7,473.2 L633.2,471.6 L630.8,470.0 L628.3,468.3 L625.9,466.7 L623.5,465.1 L621.1,463.4 L618.8,461.8 L616.4,460.2 L614.1,458.6 L611.8,456.9 L609.6,455.3 L607.3,453.7 L605.1,452.1 L602.9,450.4 L600.7,448.8 L598.5,447.2 L596.4,445.5 L594.3,443.9 L592.2,442.3 L590.1,440.7 L588.1,439.0 L586.1,437.4 L584.1,435.8 L582.1,434.1 L580.2,432.5 L578.3,430.9 L576.4,429.3 L574.5,427.6 L572.7,426.0 L570.8,424.4 L569.0,422.8 L567.3,421.1 L565.5,419.5 L563.8,417.9 L562.1,416.2 L560.5,414.6 L558.8,413.0 L557.2,411.4 L555.6,409.7 L554.1,408.1 L552.5,406.5 L551.0,404.8 L549.5,403.2 L548.1,401.6 L546.7,400.0 L545.3,398.3 L543.9,396.7 L542.5,395.1 L541.2,393.5 L539.9,391.8 L538.7,390.2 L537.4,388.6 L536.2,386.9 L535.0,385.3 L533.9,383.7 L532.8,382.1 L531.7,380.4 L530.6,378.8 L529.6,377.2 L528.5,375.5 L527.6,373.9 L526.6,372.3 L525.7,370.7 L524.8,369.0 L523.9,367.4 L523.1,365.8 L522.3,364.2 L521.5,362.5 L520.7,360.9 L520.0,359.3 L519.3,357.6 L518.7,356.0 L518.0,354.4 L517.4,352.8 L516.8,351.1 L516.3,349.5 L515.8,347.9 L515.3,346.2 L514.8,344.6 L514.4,343.0 L514.0,341.4 L513.6,339.7 L513.3,338.1 L513.0,336.5 L512.7,334.9 L512.4,333.2 L512.2,331.6 L512.0,330.0 L511.8,328.3 L511.7,326.7 L511.6,325.1 L511.5,323.5 L511.5,321.8 L511.5,320.2 L511.5,318.6 L511.5,316.9 L511.6,315.3 L511.7,313.7 L511.8,312.1 L512.0,310.4 L512.2,308.8 L512.4,307.2 L512.7,305.5 L513.0,303.9 L513.3,302.3 L513.6,300.7 L514.0,299.0 L514.4,297.4 L514.8,295.8 L515.3,294.2 L515.8,292.5 L516.3,290.9 L516.8,289.3 L517.4,287.6 L518.0,286.0 L518.7,284.4 L519.3,282.8 L520.0,281.1 L520.7,279.5 L521.5,277.9 L522.3,276.2 L523.1,274.6 L523.9,273.0 L524.8,271.4 L525.7,269.7 L526.6,268.1 L527.6,266.5 L528.5,264.9 L529.6,263.2 L530.6,261.6 L531.7,260.0 L532.8,258.3 L533.9,256.7 L535.0,255.1 L536.2,253.5 L537.4,251.8 L538.7,250.2 L539.9,248.6 L541.2,246.9 L542.5,245.3 L543.9,243.7 L545.3,242.1 L546.7,240.4 L548.1,238.8 L549.5,237.2 L551.0,235.6 L552.5,233.9 L554.1,232.3 L555.6,230.7 L557.2,229.0 L558.8,227.4 L560.5,225.8 L562.1,224.2 L563.8,222.5 L565.5,220.9 L567.3,219.3 L569.0,217.6 L570.8,216.0 L572.7,214.4 L574.5,212.8 L576.4,211.1 L578.3,209.5 L580.2,207.9 L582.1,206.3 L584.1,204.6 L586.1,203.0 L588.1,201.4 L590.1,199.7 L592.2,198.1 L594.3,196.5 L596.4,194.9 L598.5,193.2 L600.7,191.6 L602.9,190.0 L605.1,188.3 L607.3,186.7 L609.6,185.1 L611.8,183.5 L614.1,181.8 L616.4,180.2 L618.8,178.6 L621.1,177.0 L623.5,175.3 L625.9,173.7 L628.3,172.1 L630.8,170.4 L633.2,168.8 L635.7,167.2 L638.2,165.6 L640.7,163.9 L643.3,162.3 L645.8,160.7 L648.4,159.0 L651.0,157.4 L653.7,155.8 L656.3,154.2 L659.0,152.5 L661.6,150.9 L664.3,149.3 L667.0,147.7 L669.8,146.0 L672.5,144.4 L675.3,142.8 L678.1,141.1 L680.9,139.5 L683.7,137.9 L686.5,136.3 L689.4,134.6 L692.2,133.0 L695.1,131.4 L698.0,129.7 L700.9,128.1 L703.9,126.5 L706.8,124.9 L709.8,123.2 L712.7,121.6 L715.7,120.0 L718.7,118.4 L721.8,116.7 L724.8,115.1 L727.8,113.5 L730.9,111.8 L734.0,110.2 L737.0,108.6 L740.1,107.0 L743.2,105.3 L746.4,103.7 L749.5,102.1 L752.6,100.4 L755.8,98.8 L759.0,97.2 L762.1,95.6 L765.3,93.9 L768.5,92.3 L771.7,90.7 L775.0,89.1 L778.2,87.4 L781.4,85.8 L784.7,84.2 L787.9,82.5 L791.2,80.9 L794.5,79.3 L797.7,77.7 L801.0,76.0 L804.3,74.4 L807.6,72.8 L810.9,71.1 L814.3,69.5 L817.6,67.9 L820.9,66.3 L824.3,64.6 L827.6,63.0 L831.0,61.4 L834.3,59.8 L837.7,58.1 L841.0,56.5 L844.4,54.9 L847.8,53.2 L851.2,51.6 L854.5,50.0 L857.9,48.4 L861.3,46.7 L864.7,45.1 L868.1,43.5 L871.5,41.8 L874.9,40.2 L878.3,38.6 L881.7,37.0 L885.1,35.3 L888.5,33.7 L891.9,32.1 L895.3,30.5 L898.7,28.8 L902.1,27.2"/>
<path d="M902.1,613.2 L898.3,611.6 L894.5,609.9 L890.6,608.3 L886.8,606.7 L883.0,605.1 L879.1,603.4 L875.3,601.8 L871.5,600.2 L867.7,598.6 L863.8,596.9 L860.0,595.3 L856.2,593.7 L852.4,592.0 L848.6,590.4 L844.8,588.8 L841.0,587.2 L837.2,585.5 L833.4,583.9 L829.6,582.3 L825.8,580.6 L822.1,579.0 L818.3,577.4 L814.5,575.8 L810.8,574.1 L807.0,572.5 L803.3,570.9 L799.5,569.3 L795.8,567.6 L792.1,566.0 L788.4,564.4 L784.7,562.7 L781.0,561.1 L777.3,559.5 L773.7,557.9 L770.0,556.2 L766.3,554.6 L762.7,553.0 L759.1,551.3 L755.4,549.7 L751.8,548.1 L748.2,546.5 L744.6,544.8 L741.1,543.2 L737.5,541.6 L734.0,540.0 L730.4,538.3 L726.9,536.7 L723.4,535.1 L719.9,533.4 L716.4,531.8 L712.9,530.2 L709.5,528.6 L706.0,526.9 L702.6,525.3 L699.2,523.7 L695.8,522.0 L692.4,520.4 L689.1,518.8 L685.7,517.2 L682.4,515.5 L679.1,513.9 L675.8,512.3 L672.5,510.7 L669.2,509.0 L666.0,507.4 L662.8,505.8 L659.6,504.1 L656.4,502.5 L653.2,500.9 L650.1,499.3 L646.9,497.6 L643.8,496.0 L640.7,494.4 L637.6,492.7 L634.6,491.1 L631.6,489.5 L628.6,487.9 L625.6,486.2 L622.6,484.6 L619.6,483.0 L616.7,481.4 L613.8,479.7 L610.9,478.1 L608.1,476.5 L605.2,474.8 L602.4,473.2 L599.6,471.6 L596.8,470.0 L594.1,468.3 L591.4,466.7 L588.7,465.1 L586.0,463.4 L583.3,461.8 L580.7,460.2 L578.1,458.6 L575.5,456.9 L573.0,455.3 L570.5,453.7 L567.9,452.1 L565.5,450.4 L563.0,448.8 L560.6,447.2 L558.2,445.5 L555.8,443.9 L553.5,442.3 L551.1,440.7 L548.9,439.0 L546.6,437.4 L544.3,435.8 L542.1,434.1 L539.9,432.5 L537.8,430.9 L535.7,429.3 L533.5,427.6 L531.5,426.0 L529.4,424.4 L527.4,422.8 L525.4,421.1 L523.5,419.5 L521.5,417.9 L519.6,416.2 L517.7,414.6 L515.9,413.0 L514.1,411.4 L512.3,409.7 L510.5,408.1 L508.8,406.5 L507.1,404.8 L505.5,403.2 L503.8,401.6 L502.2,400.0 L500.6,398.3 L499.1,396.7 L497.6,395.1 L496.1,393.5 L494.6,391.8 L493.2,390.2 L491.8,388.6 L490.5,386.9 L489.1,385.3 L487.9,383.7 L486.6,382.1 L485.4,380.4 L484.2,378.8 L483.0,377.2 L481.8,375.5 L480.7,373.9 L479.7,372.3 L478.6,370.7 L477.6,369.0 L476.6,367.4 L475.7,365.8 L474.8,364.2 L473.9,362.5 L473.1,360.9 L472.2,359.3 L471.5,357.6 L470.7,356.0 L470.0,354.4 L469.3,352.8 L468.7,351.1 L468.1,349.5 L467.5,347.9 L466.9,346.2 L466.4,344.6 L465.9,343.0 L465.5,341.4 L465.1,339.7 L464.7,338.1 L464.3,336.5 L464.0,334.9 L463.7,333.2 L463.5,331.6 L463.2,330.0 L463.1,328.3 L462.9,326.7 L462.8,325.1 L462.7,323.5 L462.7,321.8 L462.6,320.2 L462.7,318.6 L462.7,316.9 L462.8,315.3 L462.9,313.7 L463.1,312.1 L463.2,310.4 L463.5,308.8 L463.7,307.2 L464.0,305.5 L464.3,303.9 L464.7,302.3 L465.1,300.7 L465.5,299.0 L465.9,297.4 L466.4,295.8 L466.9,294.2 L467.5,292.5 L468.1,290.9 L468.7,289.3 L469.3,287.6 L470.0,286.0 L470.7,284.4 L471.5,282.8 L472.2,281.1 L473.1,279.5 L473.9,277.9 L474.8,276.2 L475.7,274.6 L476.6,273.0 L477.6,271.4 L478.6,269.7 L479.7,268.1 L480.7,266.5 L481.8,264.9 L483.0,263.2 L484.2,261.6 L485.4,260.0 L486.6,258.3 L487.9,256.7 L489.1,255.1 L490.5,253.5 L491.8,251.8 L493.2,250.2 L494.6,248.6 L496.1,246.9 L497.6,245.3 L499.1,243.7 L500.6,242.1 L502.2,240.4 L503.8,238.8 L505.5,237.2 L507.1,235.6 L508.8,233.9 L510.5,232.3 L512.3,230.7 L514.1,229.0 L515.9,227.4 L517.7,225.8 L519.6,224.2 L521.5,222.5 L523.5,220.9 L525.4,219.3 L527.4,217.6 L529.4,216.0 L531.5,214.4 L533.5,212.8 L535.7,211.1 L537.8,209.5 L539.9,207.9 L542.1,206.3 L544.3,204.6 L546.6,203.0 L548.9,201.4 L551.1,199.7 L553.5,198.1 L555.8,196.5 L558.2,194.9 L560.6,193.2 L563.0,191.6 L565.5,190.0 L567.9,188.3 L570.5,186.7 L573.0,185.1 L575.5,183.5 L578.1,181.8 L580.7,180.2 L583.3,178.6 L586.0,177.0 L588.7,175.3 L591.4,173.7 L594.1,172.1 L596.8,170.4 L599.6,168.8 L602.4,167.2 L605.2,165.6 L608.1,163.9 L610.9,162.3 L613.8,160.7 L616.7,159.0 L619.6,157.4 L622.6,155.8 L625.6,154.2 L628.6,152.5 L631.6,150.9 L634.6,149.3 L637.6,147.7 L640.7,146.0 L643.8,144.4 L646.9,142.8 L650.1,141.1 L653.2,139.5 L656.4,137.9 L659.6,136.3 L662.8,134.6 L666.0,133.0 L669.2,131.4 L672.5,129.7 L675.8,128.1 L679.1,126.5 L682.4,124.9 L685.7,123.2 L689.1,121.6 L692.4,120.0 L695.8,118.4 L699.2,116.7 L702.6,115.1 L706.0,113.5 L709.5,111.8 L712.9,110.2 L716.4,108.6 L719.9,107.0 L723.4,105.3 L726.9,103.7 L730.4,102.1 L734.0,100.4 L737.5,98.8 L741.1,97.2 L744.6,95.6 L748.2,93.9 L751.8,92.3 L755.4,90.7 L759.1,89.1 L762.7,87.4 L766.3,85.8 L770.0,84.2 L773.7,82.5 L777.3,80.9 L781.0,79.3 L784.7,77.7 L788.4,76.0 L792.1,74.4 L795.8,72.8 L799.5,71.1 L803.3,69.5 L807.0,67.9 L810.8,66.3 L814.5,64.6 L818.3,63.0 L822.1,61.4 L825.8,59.8 L829.6,58.1 L833.4,56.5 L837.2,54.9 L841.0,53.2 L844.8,51.6 L848.6,50.0 L852.4,48.4 L856.2,46.7 L860.0,45.1 L863.8,43.5 L867.7,41.8 L871.5,40.2 L875.3,38.6 L879.1,37.0 L883.0,35.3 L886.8,33.7 L890.6,32.1 L894.5,30.5 L898.3,28.8 L902.1,27.2"/>
<path d="M902.1,613.2 L897.9,611.6 L893.6,609.9 L889.4,608.3 L885.1,606.7 L880.8,605.1 L876.6,603.4 L872.3,601.8 L868.1,600.2 L863.8,598.6 L859.6,596.9 L855.3,595.3 L851.1,593.7 L846.9,592.0 L842.6,590.4 L838.4,588.8 L834.2,587.2 L830.0,585.5 L825.8,583.9 L821.6,582.3 L817.4,580.6 L813.2,579.0 L809.0,577.4 L804.8,575.8 L800.6,574.1 L796.5,572.5 L792.3,570.9 L788.1,569.3 L784.0,567.6 L779.9,566.0 L775.8,564.4 L771.6,562.7 L767.5,561.1 L763.5,559.5 L759.4,557.9 L755.3,556.2 L751.2,554.6 L747.2,553.0 L743.2,551.3 L739.1,549.7 L735.1,548.1 L731.1,546.5 L727.1,544.8 L723.2,543.2 L719.2,541.6 L715.3,540.0 L711.3,538.3 L707.4,536.7 L703.5,535.1 L699.6,533.4 L695.8,531.8 L691.9,530.2 L688.1,528.6 L684.3,526.9 L680.4,525.3 L676.7,523.7 L672.9,522.0 L669.1,520.4 L665.4,518.8 L661.7,517.2 L658.0,515.5 L654.3,513.9 L650.6,512.3 L647.0,510.7 L643.4,509.0 L639.8,507.4 L636.2,505.8 L632.6,504.1 L629.1,502.5 L625.6,500.9 L622.0,499.3 L618.6,497.6 L615.1,496.0 L611.7,494.4 L608.3,492.7 L604.9,491.1 L601.5,489.5 L598.2,487.9 L594.8,486.2 L591.5,484.6 L588.3,483.0 L585.0,481.4 L581.8,479.7 L578.6,478.1 L575.4,476.5 L572.2,474.8 L569.1,473.2 L566.0,471.6 L562.9,470.0 L559.9,468.3 L556.8,466.7 L553.8,465.1 L550.9,463.4 L547.9,461.8 L545.0,460.2 L542.1,458.6 L539.2,456.9 L536.4,455.3 L533.6,453.7 L530.8,452.1 L528.1,450.4 L525.3,448.8 L522.6,447.2 L520.0,445.5 L517.3,443.9 L514.7,442.3 L512.1,440.7 L509.6,439.0 L507.1,437.4 L504.6,435.8 L502.1,434.1 L499.7,432.5 L497.3,430.9 L494.9,429.3 L492.6,427.6 L490.3,426.0 L488.0,424.4 L485.8,422.8 L483.6,421.1 L481.4,419.5 L479.2,417.9 L477.1,416.2 L475.0,414.6 L473.0,413.0 L471.0,411.4 L469.0,409.7 L467.0,408.1 L465.1,406.5 L463.2,404.8 L461.4,403.2 L459.6,401.6 L457.8,400.0 L456.0,398.3 L454.3,396.7 L452.6,395.1 L451.0,393.5 L449.4,391.8 L447.8,390.2 L446.2,388.6 L444.7,386.9 L443.3,385.3 L441.8,383.7 L440.4,382.1 L439.0,380.4 L437.7,378.8 L436.4,377.2 L435.1,375.5 L433.9,373.9 L432.7,372.3 L431.6,370.7 L430.4,369.0 L429.4,367.4 L428.3,365.8 L427.3,364.2 L426.3,362.5 L425.4,360.9 L424.5,359.3 L423.6,357.6 L422.8,356.0 L422.0,354.4 L421.2,352.8 L420.5,351.1 L419.8,349.5 L419.2,347.9 L418.6,346.2 L418.0,344.6 L417.5,343.0 L416.9,341.4 L416.5,339.7 L416.1,338.1 L415.7,336.5 L415.3,334.9 L415.0,333.2 L414.7,331.6 L414.5,330.0 L414.3,328.3 L414.1,326.7 L414.0,325.1 L413.9,323.5 L413.8,321.8 L413.8,320.2 L413.8,318.6 L413.9,316.9 L414.0,315.3 L414.1,313.7 L414.3,312.1 L414.5,310.4 L414.7,308.8 L415.0,307.2 L415.3,305.5 L415.7,303.9 L416.1,302.3 L416.5,300.7 L416.9,299.0 L417.5,297.4 L418.0,295.8 L418.6,294.2 L419.2,292.5 L419.8,290.9 L420.5,289.3 L421.2,287.6 L422.0,286.0 L422.8,284.4 L423.6,282.8 L424.5,281.1 L425.4,279.5 L426.3,277.9 L427.3,276.2 L428.3,274.6 L429.4,273.0 L430.4,271.4 L431.6,269.7 L432.7,268.1 L433.9,266.5 L435.1,264.9 L436.4,263.2 L437.7,261.6 L439.0,260.0 L440.4,258.3 L441.8,256.7 L443.3,255.1 L444.7,253.5 L446.2,251.8 L447.8,250.2 L449.4,248.6 L451.0,246.9 L452.6,245.3 L454.3,243.7 L456.0,242.1 L457.8,240.4 L459.6,238.8 L461.4,237.2 L463.2,235.6 L465.1,233.9 L467.0,232.3 L469.0,230.7 L471.0,229.0 L473.0,227.4 L475.0,225.8 L477.1,224.2 L479.2,222.5 L481.4,220.9 L483.6,219.3 L485.8,217.6 L488.0,216.0 L490.3,214.4 L492.6,212.8 L494.9,211.1 L497.3,209.5 L499.7,207.9 L502.1,206.3 L504.6,204.6 L507.1,203.0 L509.6,201.4 L512.1,199.7 L514.7,198.1 L517.3,196.5 L520.0,194.9 L522.6,193.2 L525.3,191.6 L528.1,190.0 L530.8,188.3 L533.6,186.7 L536.4,185.1 L539.2,183.5 L542.1,181.8 L545.0,180.2 L547.9,178.6 L550.9,177.0 L553.8,175.3 L556.8,173.7 L559.9,172.1 L562.9,170.4 L566.0,168.8 L569.1,167.2 L572.2,165.6 L575.4,163.9 L578.6,162.3 L581.8,160.7 L585.0,159.0 L588.3,157.4 L591.5,155.8 L594.8,154.2 L598.2,152.5 L601.5,150.9 L604.9,149.3 L608.3,147.7 L611.7,146.0 L615.1,144.4 L618.6,142.8 L622.0,141.1 L625.6,139.5 L629.1,137.9 L632.6,136.3 L636.2,134.6 L639.8,133.0 L643.4,131.4 L647.0,129.7 L650.6,128.1 L654.3,126.5 L658.0,124.9 L661.7,123.2 L665.4,121.6 L669.1,120.0 L672.9,118.4 L676.7,116.7 L680.4,115.1 L684.3,113.5 L688.1,111.8 L691.9,110.2 L695.8,108.6 L699.6,107.0 L703.5,105.3 L707.4,103.7 L711.3,102.1 L715.3,100.4 L719.2,98.8 L723.2,97.2 L727.1,95.6 L731.1,93.9 L735.1,92.3 L739.1,90.7 L743.2,89.1 L747.2,87.4 L751.2,85.8 L755.3,84.2 L759.4,82.5 L763.5,80.9 L767.5,79.3 L771.6,77.7 L775.8,76.0 L779.9,74.4 L784.0,72.8 L788.1,71.1 L792.3,69.5 L796.5,67.9 L800.6,66.3 L804.8,64.6 L809.0,63.0 L813.2,61.4 L817.4,59.8 L821.6,58.1 L825.8,56.5 L830.0,54.9 L834.2,53.2 L838.4,51.6 L842.6,50.0 L846.9,48.4 L851.1,46.7 L855.3,45.1 L859.6,43.5 L863.8,41.8 L868.1,40.2 L872.3,38.6 L876.6,37.0 L880.8,35.3 L885.1,33.7 L889.4,32.1 L893.6,30.5 L897.9,28.8 L902.1,27.2"/>
<path d="M902.1,613.2 L897.5,611.6 L892.8,609.9 L888.1,608.3 L883.4,606.7 L878.7,605.1 L874.0,603.4 L869.4,601.8 L864.7,600.2 L860.0,598.6 L855.3,596.9 L850.7,595.3 L846.0,593.7 L841.3,592.0 L836.7,590.4 L832.0,588.8 L827.4,587.2 L822.8,585.5 L818.1,583.9 L813.5,582.3 L808.9,580.6 L804.3,579.0 L799.7,577.4 L795.1,575.8 L790.5,574.1 L785.9,572.5 L781.3,570.9 L776.7,569.3 L772.2,567.6 L767.7,566.0 L763.1,564.4 L758.6,562.7 L754.1,561.1 L749.6,559.5 L745.1,557.9 L740.6,556.2 L736.2,554.6 L731.7,553.0 L727.3,551.3 L722.8,549.7 L718.4,548.1 L714.0,546.5 L709.6,544.8 L705.3,543.2 L700.9,541.6 L696.6,540.0 L692.3,538.3 L688.0,536.7 L683.7,535.1 L679.4,533.4 L675.1,531.8 L670.9,530.2 L666.7,528.6 L662.5,526.9 L658.3,525.3 L654.1,523.7 L650.0,522.0 L645.8,520.4 L641.7,518.8 L637.6,517.2 L633.6,515.5 L629.5,513.9 L625.5,512.3 L621.5,510.7 L617.5,509.0 L613.5,507.4 L609.6,505.8 L605.7,504.1 L601.8,502.5 L597.9,500.9 L594.0,499.3 L590.2,497.6 L586.4,496.0 L582.6,494.4 L578.9,492.7 L575.1,491.1 L571.4,489.5 L567.8,487.9 L564.1,486.2 L560.5,484.6 L556.9,483.0 L553.3,481.4 L549.7,479.7 L546.2,478.1 L542.7,476.5 L539.2,474.8 L535.8,473.2 L532.4,471.6 L529.0,470.0 L525.6,468.3 L522.3,466.7 L519.0,465.1 L515.7,463.4 L512.5,461.8 L509.3,460.2 L506.1,458.6 L503.0,456.9 L499.8,455.3 L496.7,453.7 L493.7,452.1 L490.7,450.4 L487.7,448.8 L484.7,447.2 L481.8,445.5 L478.9,443.9 L476.0,442.3 L473.1,440.7 L470.3,439.0 L467.6,437.4 L464.8,435.8 L462.1,434.1 L459.5,432.5 L456.8,430.9 L454.2,429.3 L451.6,427.6 L449.1,426.0 L446.6,424.4 L444.1,422.8 L441.7,421.1 L439.3,419.5 L436.9,417.9 L434.6,416.2 L432.3,414.6 L430.1,413.0 L427.9,411.4 L425.7,409.7 L423.5,408.1 L421.4,406.5 L419.3,404.8 L417.3,403.2 L415.3,401.6 L413.3,400.0 L411.4,398.3 L409.5,396.7 L407.7,395.1 L405.9,393.5 L404.1,391.8 L402.4,390.2 L400.7,388.6 L399.0,386.9 L397.4,385.3 L395.8,383.7 L394.2,382.1 L392.7,380.4 L391.3,378.8 L389.8,377.2 L388.4,375.5 L387.1,373.9 L385.8,372.3 L384.5,370.7 L383.3,369.0 L382.1,367.4 L380.9,365.8 L379.8,364.2 L378.7,362.5 L377.7,360.9 L376.7,359.3 L375.8,357.6 L374.8,356.0 L374.0,354.4 L373.1,352.8 L372.3,351.1 L371.6,349.5 L370.9,347.9 L370.2,346.2 L369.6,344.6 L369.0,343.0 L368.4,341.4 L367.9,339.7 L367.4,338.1 L367.0,336.5 L366.6,334.9 L366.3,333.2 L366.0,331.6 L365.7,330.0 L365.5,328.3 L365.3,326.7 L365.2,325.1 L365.1,323.5 L365.0,321.8 L365.0,320.2 L365.0,318.6 L365.1,316.9 L365.2,315.3 L365.3,313.7 L365.5,312.1 L365.7,310.4 L366.0,308.8 L366.3,307.2 L366.6,305.5 L367.0,303.9 L367.4,302.3 L367.9,300.7 L368.4,299.0 L369.0,297.4 L369.6,295.8 L370.2,294.2 L370.9,292.5 L371.6,290.9 L372.3,289.3 L373.1,287.6 L374.0,286.0 L374.8,284.4 L375.8,282.8 L376.7,281.1 L377.7,279.5 L378.7,277.9 L379.8,276.2 L380.9,274.6 L382.1,273.0 L383.3,271.4 L384.5,269.7 L385.8,268.1 L387.1,266.5 L388.4,264.9 L389.8,263.2 L391.3,261.6 L392.7,260.0 L394.2,258.3 L395.8,256.7 L397.4,255.1 L399.0,253.5 L400.7,251.8 L402.4,250.2 L404.1,248.6 L405.9,246.9 L407.7,245.3 L409.5,243.7 L411.4,242.1 L413.3,240.4 L415.3,238.8 L417.3,237.2 L419.3,235.6 L421.4,233.9 L423.5,232.3 L425.7,230.7 L427.9,229.0 L430.1,227.4 L432.3,225.8 L434.6,224.2 L436.9,222.5 L439.3,220.9 L441.7,219.3 L444.1,217.6 L446.6,216.0 L449.1,214.4 L451.6,212.8 L454.2,211.1 L456.8,209.5 L459.5,207.9 L462.1,206.3 L464.8,204.6 L467.6,203.0 L470.3,201.4 L473.1,199.7 L476.0,198.1 L478.9,196.5 L481.8,194.9 L484.7,193.2 L487.7,191.6 L490.7,190.0 L493.7,188.3 L496.7,186.7 L499.8,185.1 L503.0,183.5 L506.1,181.8 L509.3,180.2 L512.5,178.6 L515.7,177.0 L519.0,175.3 L522.3,173.7 L525.6,172.1 L529.0,170.4 L532.4,168.8 L535.8,167.2 L539.2,165.6 L542.7,163.9 L546.2,162.3 L549.7,160.7 L553.3,159.0 L556.9,157.4 L560.5,155.8 L564.1,154.2 L567.8,152.5 L571.4,150.9 L575.1,149.3 L578.9,147.7 L582.6,146.0 L586.4,144.4 L590.2,142.8 L594.0,141.1 L597.9,139.5 L601.8,137.9 L605.7,136.3 L609.6,134.6 L613.5,133.0 L617.5,131.4 L621.5,129.7 L625.5,128.1 L629.5,126.5 L633.6,124.9 L637.6,123.2 L641.7,121.6 L645.8,120.0 L650.0,118.4 L654.1,116.7 L658.3,115.1 L662.5,113.5 L666.7,111.8 L670.9,110.2 L675.1,108.6 L679.4,107.0 L683.7,105.3 L688.0,103.7 L692.3,102.1 L696.6,100.4 L700.9,98.8 L705.3,97.2 L709.6,95.6 L714.0,93.9 L718.4,92.3 L722.8,90.7 L727.3,89.1 L731.7,87.4 L736.2,85.8 L740.6,84.2 L745.1,82.5 L749.6,80.9 L754.1,79.3 L758.6,77.7 L763.1,76.0 L767.7,74.4 L772.2,72.8 L776.7,71.1 L781.3,69.5 L785.9,67.9 L790.5,66.3 L795.1,64.6 L799.7,63.0 L804.3,61.4 L808.9,59.8 L813.5,58.1 L818.1,56.5 L822.8,54.9 L827.4,53.2 L832.0,51.6 L836.7,50.0 L841.3,48.4 L846.0,46.7 L850.7,45.1 L855.3,43.5 L860.0,41.8 L864.7,40.2 L869.4,38.6 L874.0,37.0 L878.7,35.3 L883.4,33.7 L888.1,32.1 L892.8,30.5 L897.5,28.8 L902.1,27.2"/>
<path d="M902.1,613.2 L897.0,611.6 L891.9,609.9 L886.8,608.3 L881.7,606.7 L876.6,605.1 L871.5,603.4 L866.4,601.8 L861.3,600.2 L856.2,598.6 L851.1,596.9 L846.0,595.3 L840.9,593.7 L835.8,592.0 L830.7,590.4 L825.7,588.8 L820.6,587.2 L815.5,585.5 L810.5,583.9 L805.4,582.3 L800.4,580.6 L795.4,579.0 L790.3,577.4 L785.3,575.8 L780.3,574.1 L775.3,572.5 L770.3,570.9 L765.3,569.3 L760.4,567.6 L755.4,566.0 L750.5,564.4 L745.5,562.7 L740.6,561.1 L735.7,559.5 L730.8,557.9 L725.9,556.2 L721.1,554.6 L716.2,553.0 L711.4,551.3 L706.5,549.7 L701.7,548.1 L696.9,546.5 L692.1,544.8 L687.4,543.2 L682.6,541.6 L677.9,540.0 L673.2,538.3 L668.5,536.7 L663.8,535.1 L659.1,533.4 L654.5,531.8 L649.9,530.2 L645.3,528.6 L640.7,526.9 L636.1,525.3 L631.6,523.7 L627.0,522.0 L622.5,520.4 L618.0,518.8 L613.6,517.2 L609.1,515.5 L604.7,513.9 L600.3,512.3 L596.0,510.7 L591.6,509.0 L587.3,507.4 L583.0,505.8 L578.7,504.1 L574.5,502.5 L570.2,500.9 L566.0,499.3 L561.9,497.6 L557.7,496.0 L553.6,494.4 L549.5,492.7 L545.4,491.1 L541.4,489.5 L537.4,487.9 L533.4,486.2 L529.4,484.6 L525.5,483.0 L521.6,481.4 L517.7,479.7 L513.8,478.1 L510.0,476.5 L506.2,474.8 L502.5,473.2 L498.8,471.6 L495.1,470.0 L491.4,468.3 L487.8,466.7 L484.2,465.1 L480.6,463.4 L477.1,461.8 L473.6,460.2 L470.1,458.6 L466.7,456.9 L463.3,455.3 L459.9,453.7 L456.5,452.1 L453.2,450.4 L450.0,448.8 L446.7,447.2 L443.5,445.5 L440.4,443.9 L437.2,442.3 L434.1,440.7 L431.1,439.0 L428.1,437.4 L425.1,435.8 L422.1,434.1 L419.2,432.5 L416.3,430.9 L413.5,429.3 L410.7,427.6 L407.9,426.0 L405.2,424.4 L402.5,422.8 L399.8,421.1 L397.2,419.5 L394.7,417.9 L392.1,416.2 L389.6,414.6 L387.2,413.0 L384.7,411.4 L382.4,409.7 L380.0,408.1 L377.7,406.5 L375.4,404.8 L373.2,403.2 L371.0,401.6 L368.9,400.0 L366.8,398.3 L364.7,396.7 L362.7,395.1 L360.7,393.5 L358.8,391.8 L356.9,390.2 L355.1,388.6 L353.3,386.9 L351.5,385.3 L349.8,383.7 L348.1,382.1 L346.4,380.4 L344.8,378.8 L343.3,377.2 L341.7,375.5 L340.3,373.9 L338.8,372.3 L337.5,370.7 L336.1,369.0 L334.8,367.4 L333.5,365.8 L332.3,364.2 L331.2,362.5 L330.0,360.9 L328.9,359.3 L327.9,357.6 L326.9,356.0 L326.0,354.4 L325.0,352.8 L324.2,351.1 L323.4,349.5 L322.6,347.9 L321.8,346.2 L321.2,344.6 L320.5,343.0 L319.9,341.4 L319.4,339.7 L318.8,338.1 L318.4,336.5 L317.9,334.9 L317.6,333.2 L317.2,331.6 L316.9,330.0 L316.7,328.3 L316.5,326.7 L316.3,325.1 L316.2,323.5 L316.2,321.8 L316.1,320.2 L316.2,318.6 L316.2,316.9 L316.3,315.3 L316.5,313.7 L316.7,312.1 L316.9,310.4 L317.2,308.8 L317.6,307.2 L317.9,305.5 L318.4,303.9 L318.8,302.3 L319.4,300.7 L319.9,299.0 L320.5,297.4 L321.2,295.8 L321.8,294.2 L322.6,292.5 L323.4,290.9 L324.2,289.3 L325.0,287.6 L326.0,286.0 L326.9,284.4 L327.9,282.8 L328.9,281.1 L330.0,279.5 L331.2,277.9 L332.3,276.2 L333.5,274.6 L334.8,273.0 L336.1,271.4 L337.5,269.7 L338.8,268.1 L340.3,266.5 L341.7,264.9 L343.3,263.2 L344.8,261.6 L346.4,260.0 L348.1,258.3 L349.8,256.7 L351.5,255.1 L353.3,253.5 L355.1,251.8 L356.9,250.2 L358.8,248.6 L360.7,246.9 L362.7,245.3 L364.7,243.7 L366.8,242.1 L368.9,240.4 L371.0,238.8 L373.2,237.2 L375.4,235.6 L377.7,233.9 L380.0,232.3 L382.4,230.7 L384.7,229.0 L387.2,227.4 L389.6,225.8 L392.1,224.2 L394.7,222.5 L397.2,220.9 L399.8,219.3 L402.5,217.6 L405.2,216.0 L407.9,214.4 L410.7,212.8 L413.5,211.1 L416.3,209.5 L419.2,207.9 L422.1,206.3 L425.1,204.6 L428.1,203.0 L431.1,201.4 L434.1,199.7 L437.2,198.1 L440.4,196.5 L443.5,194.9 L446.7,193.2 L450.0,191.6 L453.2,190.0 L456.5,188.3 L459.9,186.7 L463.3,185.1 L466.7,183.5 L470.1,181.8 L473.6,180.2 L477.1,178.6 L480.6,177.0 L484.2,175.3 L487.8,173.7 L491.4,172.1 L495.1,170.4 L498.8,168.8 L502.5,167.2 L506.2,165.6 L510.0,163.9 L513.8,162.3 L517.7,160.7 L521.6,159.0 L525.5,157.4 L529.4,155.8 L533.4,154.2 L537.4,152.5 L541.4,150.9 L545.4,149.3 L549.5,147.7 L553.6,146.0 L557.7,144.4 L561.9,142.8 L566.0,141.1 L570.2,139.5 L574.5,137.9 L578.7,136.3 L583.0,134.6 L587.3,133.0 L591.6,131.4 L596.0,129.7 L600.3,128.1 L604.7,126.5 L609.1,124.9 L613.6,123.2 L618.0,121.6 L622.5,120.0 L627.0,118.4 L631.6,116.7 L636.1,115.1 L640.7,113.5 L645.3,111.8 L649.9,110.2 L654.5,108.6 L659.1,107.0 L663.8,105.3 L668.5,103.7 L673.2,102.1 L677.9,100.4 L682.6,98.8 L687.4,97.2 L692.1,95.6 L696.9,93.9 L701.7,92.3 L706.5,90.7 L711.4,89.1 L716.2,87.4 L721.1,85.8 L725.9,84.2 L730.8,82.5 L735.7,80.9 L740.6,79.3 L745.5,77.7 L750.5,76.0 L755.4,74.4 L760.4,72.8 L765.3,71.1 L770.3,69.5 L775.3,67.9 L780.3,66.3 L785.3,64.6 L790.3,63.0 L795.4,61.4 L800.4,59.8 L805.4,58.1 L810.5,56.5 L815.5,54.9 L820.6,53.2 L825.7,51.6 L830.7,50.0 L835.8,48.4 L840.9,46.7 L846.0,45.1 L851.1,43.5 L856.2,41.8 L861.3,40.2 L866.4,38.6 L871.5,37.0 L876.6,35.3 L881.7,33.7 L886.8,32.1 L891.9,30.5 L897.0,28.8 L902.1,27.2"/>
<path d="M1053.8,564.4 L1053.4,564.4 L1053.0,564.4 L1052.6,564.4 L1052.1,564.4 L1051.7,564.4 L1051.3,564.4 L1050.9,564.4 L1050.4,564.4 L1050.0,564.4 L1049.6,564.4 L1049.2,564.4 L1048.8,564.4 L1048.3,564.4 L1047.9,564.4 L1047.5,564.4 L1047.1,564.4 L1046.7,564.4 L1046.2,564.4 L1045.8,564.4 L1045.4,564.4 L1045.0,564.4 L1044.6,564.4 L1044.1,564.4 L1043.7,564.4 L1043.3,564.4 L1042.9,564.4 L1042.4,564.4 L1042.0,564.4 L1041.6,564.4 L1041.2,564.4 L1040.8,564.4 L1040.3,564.4 L1039.9,564.4 L1039.5,564.4 L1039.1,564.4 L1038.7,564.4 L1038.2,564.4 L1037.8,564.4 L1037.4,564.4 L1037.0,564.4 L1036.5,564.4 L1036.1,564.4 L1035.7,564.4 L1035.3,564.4 L1034.9,564.4 L1034.4,564.4 L1034.0,564.4 L1033.6,564.4 L1033.2,564.4 L1032.8,564.4 L1032.3,564.4 L1031.9,564.4 L1031.5,564.4 L1031.1,564.4 L1030.6,564.4 L1030.2,564.4 L1029.8,564.4 L1029.4,564.4 L1029.0,564.4 L1028.5,564.4 L1028.1,564.4 L1027.7,564.4 L1027.3,564.4 L1026.9,564.4 L1026.4,564.4 L1026.0,564.4 L1025.6,564.4 L1025.2,564.4 L1024.7,564.4 L1024.3,564.4 L1023.9,564.4 L1023.5,564.4 L1023.1,564.4 L1022.6,564.4 L1022.2,564.4 L1021.8,564.4 L1021.4,564.4 L1021.0,564.4 L1020.5,564.4 L1020.1,564.4 L1019.7,564.4 L1019.3,564.4 L1018.9,564.4 L1018.4,564.4 L1018.0,564.4 L1017.6,564.4 L1017.2,564.4 L1016.7,564.4 L1016.3,564.4 L1015.9,564.4 L1015.5,564.4 L1015.1,564.4 L1014.6,564.4 L1014.2,564.4 L1013.8,564.4 L1013.4,564.4 L1013.0,564.4 L1012.5,564.4 L1012.1,564.4 L1011.7,564.4 L1011.3,564.4 L1010.8,564.4 L1010.4,564.4 L1010.0,564.4 L1009.6,564.4 L1009.2,564.4 L1008.7,564.4 L1008.3,564.4 L1007.9,564.4 L1007.5,564.4 L1007.1,564.4 L1006.6,564.4 L1006.2,564.4 L1005.8,564.4 L1005.4,564.4 L1004.9,564.4 L1004.5,564.4 L1004.1,564.4 L1003.7,564.4 L1003.3,564.4 L1002.8,564.4 L1002.4,564.4 L1002.0,564.4 L1001.6,564.4 L1001.2,564.4 L1000.7,564.4 L1000.3,564.4 L999.9,564.4 L999.5,564.4 L999.1,564.4 L998.6,564.4 L998.2,564.4 L997.8,564.4 L997.4,564.4 L996.9,564.4 L996.5,564.4 L996.1,564.4 L995.7,564.4 L995.3,564.4 L994.8,564.4 L994.4,564.4 L994.0,564.4 L993.6,564.4 L993.2,564.4 L992.7,564.4 L992.3,564.4 L991.9,564.4 L991.5,564.4 L991.0,564.4 L990.6,564.4 L990.2,564.4 L989.8,564.4 L989.4,564.4 L988.9,564.4 L988.5,564.4 L988.1,564.4 L987.7,564.4 L987.3,564.4 L986.8,564.4 L986.4,564.4 L986.0,564.4 L985.6,564.4 L985.1,564.4 L984.7,564.4 L984.3,564.4 L983.9,564.4 L983.5,564.4 L983.0,564.4 L982.6,564.4 L982.2,564.4 L981.8,564.4 L981.4,564.4 L980.9,564.4 L980.5,564.4 L980.1,564.4 L979.7,564.4 L979.2,564.4 L978.8,564.4 L978.4,564.4 L978.0,564.4 L977.6,564.4 L977.1,564.4 L976.7,564.4 L976.3,564.4 L975.9,564.4 L975.5,564.4 L975.0,564.4 L974.6,564.4 L974.2,564.4 L973.8,564.4 L973.4,564.4 L972.9,564.4 L972.5,564.4 L972.1,564.4 L971.7,564.4 L971.2,564.4 L970.8,564.4 L970.4,564.4 L970.0,564.4 L969.6,564.4 L969.1,564.4 L968.7,564.4 L968.3,564.4 L967.9,564.4 L967.5,564.4 L967.0,564.4 L966.6,564.4 L966.2,564.4 L965.8,564.4 L965.3,564.4 L964.9,564.4 L964.5,564.4 L964.1,564.4 L963.7,564.4 L963.2,564.4 L962.8,564.4 L962.4,564.4 L962.0,564.4 L961.6,564.4 L961.1,564.4 L960.7,564.4 L960.3,564.4 L959.9,564.4 L959.4,564.4 L959.0,564.4 L958.6,564.4 L958.2,564.4 L957.8,564.4 L957.3,564.4 L956.9,564.4 L956.5,564.4 L956.1,564.4 L955.7,564.4 L955.2,564.4 L954.8,564.4 L954.4,564.4 L954.0,564.4 L953.5,564.4 L953.1,564.4 L952.7,564.4 L952.3,564.4 L951.9,564.4 L951.4,564.4 L951.0,564.4 L950.6,564.4 L950.2,564.4 L949.8,564.4 L949.3,564.4 L948.9,564.4 L948.5,564.4 L948.1,564.4 L947.7,564.4 L947.2,564.4 L946.8,564.4 L946.4,564.4 L946.0,564.4 L945.5,564.4 L945.1,564.4 L944.7,564.4 L944.3,564.4 L943.9,564.4 L943.4,564.4 L943.0,564.4 L942.6,564.4 L942.2,564.4 L941.8,564.4 L941.3,564.4 L940.9,564.4 L940.5,564.4 L940.1,564.4 L939.6,564.4 L939.2,564.4 L938.8,564.4 L938.4,564.4 L938.0,564.4 L937.5,564.4 L937.1,564.4 L936.7,564.4 L936.3,564.4 L935.9,564.4 L935.4,564.4 L935.0,564.4 L934.6,564.4 L934.2,564.4 L933.7,564.4 L933.3,564.4 L932.9,564.4 L932.5,564.4 L932.1,564.4 L931.6,564.4 L931.2,564.4 L930.8,564.4 L930.4,564.4 L930.0,564.4 L929.5,564.4 L929.1,564.4 L928.7,564.4 L928.3,564.4 L927.8,564.4 L927.4,564.4 L927.0,564.4 L926.6,564.4 L926.2,564.4 L925.7,564.4 L925.3,564.4 L924.9,564.4 L924.5,564.4 L924.1,564.4 L923.6,564.4 L923.2,564.4 L922.8,564.4 L922.4,564.4 L922.0,564.4 L921.5,564.4 L921.1,564.4 L920.7,564.4 L920.3,564.4 L919.8,564.4 L919.4,564.4 L919.0,564.4 L918.6,564.4 L918.2,564.4 L917.7,564.4 L917.3,564.4 L916.9,564.4 L916.5,564.4 L916.1,564.4 L915.6,564.4 L915.2,564.4 L914.8,564.4 L914.4,564.4 L913.9,564.4 L913.5,564.4 L913.1,564.4 L912.7,564.4 L912.3,564.4 L911.8,564.4 L911.4,564.4 L911.0,564.4 L910.6,564.4 L910.2,564.4 L909.7,564.4 L909.3,564.4 L908.9,564.4 L908.5,564.4 L908.0,564.4 L907.6,564.4 L907.2,564.4 L906.8,564.4 L906.4,564.4 L905.9,564.4 L905.5,564.4 L905.1,564.4 L904.7,564.4 L904.3,564.4 L903.8,564.4 L903.4,564.4 L903.0,564.4 L902.6,564.4 L902.1,564.4 L901.7,564.4 L901.3,564.4 L900.9,564.4 L900.5,564.4 L900.0,564.4 L899.6,564.4 L899.2,564.4 L898.8,564.4 L898.4,564.4 L897.9,564.4 L897.5,564.4 L897.1,564.4 L896.7,564.4 L896.3,564.4 L895.8,564.4 L895.4,564.4 L895.0,564.4 L894.6,564.4 L894.1,564.4 L893.7,564.4 L893.3,564.4 L892.9,564.4 L892.5,564.4 L892.0,564.4 L891.6,564.4 L891.2,564.4 L890.8,564.4 L890.4,564.4 L889.9,564.4 L889.5,564.4 L889.1,564.4 L888.7,564.4 L888.2,564.4 L887.8,564.4 L887.4,564.4 L887.0,564.4 L886.6,564.4 L886.1,564.4 L885.7,564.4 L885.3,564.4 L884.9,564.4 L884.5,564.4 L884.0,564.4 L883.6,564.4 L883.2,564.4 L882.8,564.4 L882.3,564.4 L881.9,564.4 L881.5,564.4 L881.1,564.4 L880.7,564.4 L880.2,564.4 L879.8,564.4 L879.4,564.4 L879.0,564.4 L878.6,564.4 L878.1,564.4 L877.7,564.4 L877.3,564.4 L876.9,564.4 L876.5,564.4 L876.0,564.4 L875.6,564.4 L875.2,564.4 L874.8,564.4 L874.3,564.4 L873.9,564.4 L873.5,564.4 L873.1,564.4 L872.7,564.4 L872.2,564.4 L871.8,564.4 L871.4,564.4 L871.0,564.4 L870.6,564.4 L870.1,564.4 L869.7,564.4 L869.3,564.4 L868.9,564.4 L868.4,564.4 L868.0,564.4 L867.6,564.4 L867.2,564.4 L866.8,564.4 L866.3,564.4 L865.9,564.4 L865.5,564.4 L865.1,564.4 L864.7,564.4 L864.2,564.4 L863.8,564.4 L863.4,564.4 L863.0,564.4 L862.5,564.4 L862.1,564.4 L861.7,564.4 L861.3,564.4 L860.9,564.4 L860.4,564.4 L860.0,564.4 L859.6,564.4 L859.2,564.4 L858.8,564.4 L858.3,564.4 L857.9,564.4 L857.5,564.4 L857.1,564.4 L856.6,564.4 L856.2,564.4 L855.8,564.4 L855.4,564.4 L855.0,564.4 L854.5,564.4 L854.1,564.4 L853.7,564.4 L853.3,564.4 L852.9,564.4 L852.4,564.4 L852.0,564.4 L851.6,564.4 L851.2,564.4 L850.8,564.4 L850.3,564.4 L849.9,564.4 L849.5,564.4 L849.1,564.4 L848.6,564.4 L848.2,564.4 L847.8,564.4 L847.4,564.4 L847.0,564.4 L846.5,564.4 L846.1,564.4 L845.7,564.4 L845.3,564.4 L844.9,564.4 L844.4,564.4 L844.0,564.4 L843.6,564.4 L843.2,564.4 L842.7,564.4 L842.3,564.4 L841.9,564.4 L841.5,564.4 L841.1,564.4 L840.6,564.4 L840.2,564.4 L839.8,564.4 L839.4,564.4 L839.0,564.4 L838.5,564.4 L838.1,564.4 L837.7,564.4 L837.3,564.4 L836.8,564.4 L836.4,564.4 L836.0,564.4 L835.6,564.4 L835.2,564.4 L834.7,564.4 L834.3,564.4 L833.9,564.4 L833.5,564.4 L833.1,564.4 L832.6,564.4 L832.2,564.4 L831.8,564.4 L831.4,564.4 L830.9,564.4 L830.5,564.4 L830.1,564.4 L829.7,564.4 L829.3,564.4 L828.8,564.4 L828.4,564.4 L828.0,564.4 L827.6,564.4 L827.2,564.4 L826.7,564.4 L826.3,564.4 L825.9,564.4 L825.5,564.4 L825.1,564.4 L824.6,564.4 L824.2,564.4 L823.8,564.4 L823.4,564.4 L822.9,564.4 L822.5,564.4 L822.1,564.4 L821.7,564.4 L821.3,564.4 L820.8,564.4 L820.4,564.4 L820.0,564.4 L819.6,564.4 L819.2,564.4 L818.7,564.4 L818.3,564.4 L817.9,564.4 L817.5,564.4 L817.0,564.4 L816.6,564.4 L816.2,564.4 L815.8,564.4 L815.4,564.4 L814.9,564.4 L814.5,564.4 L814.1,564.4 L813.7,564.4 L813.3,564.4 L812.8,564.4 L812.4,564.4 L812.0,564.4 L811.6,564.4 L811.1,564.4 L810.7,564.4 L810.3,564.4 L809.9,564.4 L809.5,564.4 L809.0,564.4 L808.6,564.4 L808.2,564.4 L807.8,564.4 L807.4,564.4 L806.9,564.4 L806.5,564.4 L806.1,564.4 L805.7,564.4 L805.2,564.4 L804.8,564.4 L804.4,564.4 L804.0,564.4 L803.6,564.4 L803.1,564.4 L802.7,564.4 L802.3,564.4 L801.9,564.4 L801.5,564.4 L801.0,564.4 L800.6,564.4 L800.2,564.4 L799.8,564.4 L799.4,564.4 L798.9,564.4 L798.5,564.4 L798.1,564.4 L797.7,564.4 L797.2,564.4 L796.8,564.4 L796.4,564.4 L796.0,564.4 L795.6,564.4 L795.1,564.4 L794.7,564.4 L794.3,564.4 L793.9,564.4 L793.5,564.4 L793.0,564.4 L792.6,564.4 L792.2,564.4 L791.8,564.4 L791.3,564.4 L790.9,564.4 L790.5,564.4 L790.1,564.4 L789.7,564.4 L789.2,564.4 L788.8,564.4 L788.4,564.4 L788.0,564.4 L787.6,564.4 L787.1,564.4 L786.7,564.4 L786.3,564.4 L785.9,564.4 L785.4,564.4 L785.0,564.4 L784.6,564.4 L784.2,564.4 L783.8,564.4 L783.3,564.4 L782.9,564.4 L782.5,564.4 L782.1,564.4 L781.7,564.4 L781.2,564.4 L780.8,564.4 L780.4,564.4 L780.0,564.4 L779.6,564.4 L779.1,564.4 L778.7,564.4 L778.3,564.4 L777.9,564.4 L777.4,564.4 L777.0,564.4 L776.6,564.4 L776.2,564.4 L775.8,564.4 L775.3,564.4 L774.9,564.4 L774.5,564.4 L774.1,564.4 L773.7,564.4 L773.2,564.4 L772.8,564.4 L772.4,564.4 L772.0,564.4 L771.5,564.4 L771.1,564.4 L770.7,564.4 L770.3,564.4 L769.9,564.4 L769.4,564.4 L769.0,564.4 L768.6,564.4 L768.2,564.4 L767.8,564.4 L767.3,564.4 L766.9,564.4 L766.5,564.4 L766.1,564.4 L765.6,564.4 L765.2,564.4 L764.8,564.4 L764.4,564.4 L764.0,564.4 L763.5,564.4 L763.1,564.4 L762.7,564.4 L762.3,564.4 L761.9,564.4 L761.4,564.4 L761.0,564.4 L760.6,564.4 L760.2,564.4 L759.7,564.4 L759.3,564.4 L758.9,564.4 L758.5,564.4 L758.1,564.4 L757.6,564.4 L757.2,564.4 L756.8,564.4 L756.4,564.4 L756.0,564.4 L755.5,564.4 L755.1,564.4 L754.7,564.4 L754.3,564.4 L753.9,564.4 L753.4,564.4 L753.0,564.4 L752.6,564.4 L752.2,564.4 L751.7,564.4 L751.3,564.4 L750.9,564.4 L750.5,564.4"/>
<path d="M1195.2,515.5 L1194.3,515.5 L1193.5,515.5 L1192.7,515.5 L1191.9,515.5 L1191.1,515.5 L1190.3,515.5 L1189.5,515.5 L1188.6,515.5 L1187.8,515.5 L1187.0,515.5 L1186.2,515.5 L1185.4,515.5 L1184.6,515.5 L1183.8,515.5 L1182.9,515.5 L1182.1,515.5 L1181.3,515.5 L1180.5,515.5 L1179.7,515.5 L1178.9,515.5 L1178.1,515.5 L1177.2,515.5 L1176.4,515.5 L1175.6,515.5 L1174.8,515.5 L1174.0,515.5 L1173.2,515.5 L1172.4,515.5 L1171.6,515.5 L1170.7,515.5 L1169.9,515.5 L1169.1,515.5 L1168.3,515.5 L1167.5,515.5 L1166.7,515.5 L1165.9,515.5 L1165.0,515.5 L1164.2,515.5 L1163.4,515.5 L1162.6,515.5 L1161.8,515.5 L1161.0,515.5 L1160.2,515.5 L1159.3,515.5 L1158.5,515.5 L1157.7,515.5 L1156.9,515.5 L1156.1,515.5 L1155.3,515.5 L1154.5,515.5 L1153.6,515.5 L1152.8,515.5 L1152.0,515.5 L1151.2,515.5 L1150.4,515.5 L1149.6,515.5 L1148.8,515.5 L1147.9,515.5 L1147.1,515.5 L1146.3,515.5 L1145.5,515.5 L1144.7,515.5 L1143.9,515.5 L1143.1,515.5 L1142.3,515.5 L1141.4,515.5 L1140.6,515.5 L1139.8,515.5 L1139.0,515.5 L1138.2,515.5 L1137.4,515.5 L1136.6,515.5 L1135.7,515.5 L1134.9,515.5 L1134.1,515.5 L1133.3,515.5 L1132.5,515.5 L1131.7,515.5 L1130.9,515.5 L1130.0,515.5 L1129.2,515.5 L1128.4,515.5 L1127.6,515.5 L1126.8,515.5 L1126.0,515.5 L1125.2,515.5 L1124.3,515.5 L1123.5,515.5 L1122.7,515.5 L1121.9,515.5 L1121.1,515.5 L1120.3,515.5 L1119.5,515.5 L1118.6,515.5 L1117.8,515.5 L1117.0,515.5 L1116.2,515.5 L1115.4,515.5 L1114.6,515.5 L1113.8,515.5 L1113.0,515.5 L1112.1,515.5 L1111.3,515.5 L1110.5,515.5 L1109.7,515.5 L1108.9,515.5 L1108.1,515.5 L1107.3,515.5 L1106.4,515.5 L1105.6,515.5 L1104.8,515.5 L1104.0,515.5 L1103.2,515.5 L1102.4,515.5 L1101.6,515.5 L1100.7,515.5 L1099.9,515.5 L1099.1,515.5 L1098.3,515.5 L1097.5,515.5 L1096.7,515.5 L1095.9,515.5 L1095.0,515.5 L1094.2,515.5 L1093.4,515.5 L1092.6,515.5 L1091.8,515.5 L1091.0,515.5 L1090.2,515.5 L1089.3,515.5 L1088.5,515.5 L1087.7,515.5 L1086.9,515.5 L1086.1,515.5 L1085.3,515.5 L1084.5,515.5 L1083.6,515.5 L1082.8,515.5 L1082.0,515.5 L1081.2,515.5 L1080.4,515.5 L1079.6,515.5 L1078.8,515.5 L1078.0,515.5 L1077.1,515.5 L1076.3,515.5 L1075.5,515.5 L1074.7,515.5 L1073.9,515.5 L1073.1,515.5 L1072.3,515.5 L1071.4,515.5 L1070.6,515.5 L1069.8,515.5 L1069.0,515.5 L1068.2,515.5 L1067.4,515.5 L1066.6,515.5 L1065.7,515.5 L1064.9,515.5 L1064.1,515.5 L1063.3,515.5 L1062.5,515.5 L1061.7,515.5 L1060.9,515.5 L1060.0,515.5 L1059.2,515.5 L1058.4,515.5 L1057.6,515.5 L1056.8,515.5 L1056.0,515.5 L1055.2,515.5 L1054.3,515.5 L1053.5,515.5 L1052.7,515.5 L1051.9,515.5 L1051.1,515.5 L1050.3,515.5 L1049.5,515.5 L1048.7,515.5 L1047.8,515.5 L1047.0,515.5 L1046.2,515.5 L1045.4,515.5 L1044.6,515.5 L1043.8,515.5 L1043.0,515.5 L1042.1,515.5 L1041.3,515.5 L1040.5,515.5 L1039.7,515.5 L1038.9,515.5 L1038.1,515.5 L1037.3,515.5 L1036.4,515.5 L1035.6,515.5 L1034.8,515.5 L1034.0,515.5 L1033.2,515.5 L1032.4,515.5 L1031.6,515.5 L1030.7,515.5 L1029.9,515.5 L1029.1,515.5 L1028.3,515.5 L1027.5,515.5 L1026.7,515.5 L1025.9,515.5 L1025.0,515.5 L1024.2,515.5 L1023.4,515.5 L1022.6,515.5 L1021.8,515.5 L1021.0,515.5 L1020.2,515.5 L1019.4,515.5 L1018.5,515.5 L1017.7,515.5 L1016.9,515.5 L1016.1,515.5 L1015.3,515.5 L1014.5,515.5 L1013.7,515.5 L1012.8,515.5 L1012.0,515.5 L1011.2,515.5 L1010.4,515.5 L1009.6,515.5 L1008.8,515.5 L1008.0,515.5 L1007.1,515.5 L1006.3,515.5 L1005.5,515.5 L1004.7,515.5 L1003.9,515.5 L1003.1,515.5 L1002.3,515.5 L1001.4,515.5 L1000.6,515.5 L999.8,515.5 L999.0,515.5 L998.2,515.5 L997.4,515.5 L996.6,515.5 L995.7,515.5 L994.9,515.5 L994.1,515.5 L993.3,515.5 L992.5,515.5 L991.7,515.5 L990.9,515.5 L990.1,515.5 L989.2,515.5 L988.4,515.5 L987.6,515.5 L986.8,515.5 L986.0,515.5 L985.2,515.5 L984.4,515.5 L983.5,515.5 L982.7,515.5 L981.9,515.5 L981.1,515.5 L980.3,515.5 L979.5,515.5 L978.7,515.5 L977.8,515.5 L977.0,515.5 L976.2,515.5 L975.4,515.5 L974.6,515.5 L973.8,515.5 L973.0,515.5 L972.1,515.5 L971.3,515.5 L970.5,515.5 L969.7,515.5 L968.9,515.5 L968.1,515.5 L967.3,515.5 L966.4,515.5 L965.6,515.5 L964.8,515.5 L964.0,515.5 L963.2,515.5 L962.4,515.5 L961.6,515.5 L960.8,515.5 L959.9,515.5 L959.1,515.5 L958.3,515.5 L957.5,515.5 L956.7,515.5 L955.9,515.5 L955.1,515.5 L954.2,515.5 L953.4,515.5 L952.6,515.5 L951.8,515.5 L951.0,515.5 L950.2,515.5 L949.4,515.5 L948.5,515.5 L947.7,515.5 L946.9,515.5 L946.1,515.5 L945.3,515.5 L944.5,515.5 L943.7,515.5 L942.8,515.5 L942.0,515.5 L941.2,515.5 L940.4,515.5 L939.6,515.5 L938.8,515.5 L938.0,515.5 L937.1,515.5 L936.3,515.5 L935.5,515.5 L934.7,515.5 L933.9,515.5 L933.1,515.5 L932.3,515.5 L931.5,515.5 L930.6,515.5 L929.8,515.5 L929.0,515.5 L928.2,515.5 L927.4,515.5 L926.6,515.5 L925.8,515.5 L924.9,515.5 L924.1,515.5 L923.3,515.5 L922.5,515.5 L921.7,515.5 L920.9,515.5 L920.1,515.5 L919.2,515.5 L918.4,515.5 L917.6,515.5 L916.8,515.5 L916.0,515.5 L915.2,515.5 L914.4,515.5 L913.5,515.5 L912.7,515.5 L911.9,515.5 L911.1,515.5 L910.3,515.5 L909.5,515.5 L908.7,515.5 L907.8,515.5 L907.0,515.5 L906.2,515.5 L905.4,515.5 L904.6,515.5 L903.8,515.5 L903.0,515.5 L902.1,515.5 L901.3,515.5 L900.5,515.5 L899.7,515.5 L898.9,515.5 L898.1,515.5 L897.3,515.5 L896.5,515.5 L895.6,515.5 L894.8,515.5 L894.0,515.5 L893.2,515.5 L892.4,515.5 L891.6,515.5 L890.8,515.5 L889.9,515.5 L889.1,515.5 L888.3,515.5 L887.5,515.5 L886.7,515.5 L885.9,515.5 L885.1,515.5 L884.2,515.5 L883.4,515.5 L882.6,515.5 L881.8,515.5 L881.0,515.5 L880.2,515.5 L879.4,515.5 L878.5,515.5 L877.7,515.5 L876.9,515.5 L876.1,515.5 L875.3,515.5 L874.5,515.5 L873.7,515.5 L872.8,515.5 L872.0,515.5 L871.2,515.5 L870.4,515.5 L869.6,515.5 L868.8,515.5 L868.0,515.5 L867.2,515.5 L866.3,515.5 L865.5,515.5 L864.7,515.5 L863.9,515.5 L863.1,515.5 L862.3,515.5 L861.5,515.5 L860.6,515.5 L859.8,515.5 L859.0,515.5 L858.2,515.5 L857.4,515.5 L856.6,515.5 L855.8,515.5 L854.9,515.5 L854.1,515.5 L853.3,515.5 L852.5,515.5 L851.7,515.5 L850.9,515.5 L850.1,515.5 L849.2,515.5 L848.4,515.5 L847.6,515.5 L846.8,515.5 L846.0,515.5 L845.2,515.5 L844.4,515.5 L843.5,515.5 L842.7,515.5 L841.9,515.5 L841.1,515.5 L840.3,515.5 L839.5,515.5 L838.7,515.5 L837.9,515.5 L837.0,515.5 L836.2,515.5 L835.4,515.5 L834.6,515.5 L833.8,515.5 L833.0,515.5 L832.2,515.5 L831.3,515.5 L830.5,515.5 L829.7,515.5 L828.9,515.5 L828.1,515.5 L827.3,515.5 L826.5,515.5 L825.6,515.5 L824.8,515.5 L824.0,515.5 L823.2,515.5 L822.4,515.5 L821.6,515.5 L820.8,515.5 L819.9,515.5 L819.1,515.5 L818.3,515.5 L817.5,515.5 L816.7,515.5 L815.9,515.5 L815.1,515.5 L814.2,515.5 L813.4,515.5 L812.6,515.5 L811.8,515.5 L811.0,515.5 L810.2,515.5 L809.4,515.5 L808.6,515.5 L807.7,515.5 L806.9,515.5 L806.1,515.5 L805.3,515.5 L804.5,515.5 L803.7,515.5 L802.9,515.5 L802.0,515.5 L801.2,515.5 L800.4,515.5 L799.6,515.5 L798.8,515.5 L798.0,515.5 L797.2,515.5 L796.3,515.5 L795.5,515.5 L794.7,515.5 L793.9,515.5 L793.1,515.5 L792.3,515.5 L791.5,515.5 L790.6,515.5 L789.8,515.5 L789.0,515.5 L788.2,515.5 L787.4,515.5 L786.6,515.5 L785.8,515.5 L784.9,515.5 L784.1,515.5 L783.3,515.5 L782.5,515.5 L781.7,515.5 L780.9,515.5 L780.1,515.5 L779.3,515.5 L778.4,515.5 L777.6,515.5 L776.8,515.5 L776.0,515.5 L775.2,515.5 L774.4,515.5 L773.6,515.5 L772.7,515.5 L771.9,515.5 L771.1,515.5 L770.3,515.5 L769.5,515.5 L768.7,515.5 L767.9,515.5 L767.0,515.5 L766.2,515.5 L765.4,515.5 L764.6,515.5 L763.8,515.5 L763.0,515.5 L762.2,515.5 L761.3,515.5 L760.5,515.5 L759.7,515.5 L758.9,515.5 L758.1,515.5 L757.3,515.5 L756.5,515.5 L755.6,515.5 L754.8,515.5 L754.0,515.5 L753.2,515.5 L752.4,515.5 L751.6,515.5 L750.8,515.5 L750.0,515.5 L749.1,515.5 L748.3,515.5 L747.5,515.5 L746.7,515.5 L745.9,515.5 L745.1,515.5 L744.3,515.5 L743.4,515.5 L742.6,515.5 L741.8,515.5 L741.0,515.5 L740.2,515.5 L739.4,515.5 L738.6,515.5 L737.7,515.5 L736.9,515.5 L736.1,515.5 L735.3,515.5 L734.5,515.5 L733.7,515.5 L732.9,515.5 L732.0,515.5 L731.2,515.5 L730.4,515.5 L729.6,515.5 L728.8,515.5 L728.0,515.5 L727.2,515.5 L726.3,515.5 L725.5,515.5 L724.7,515.5 L723.9,515.5 L723.1,515.5 L722.3,515.5 L721.5,515.5 L720.7,515.5 L719.8,515.5 L719.0,515.5 L718.2,515.5 L717.4,515.5 L716.6,515.5 L715.8,515.5 L715.0,515.5 L714.1,515.5 L713.3,515.5 L712.5,515.5 L711.7,515.5 L710.9,515.5 L710.1,515.5 L709.3,515.5 L708.4,515.5 L707.6,515.5 L706.8,515.5 L706.0,515.5 L705.2,515.5 L704.4,515.5 L703.6,515.5 L702.7,515.5 L701.9,515.5 L701.1,515.5 L700.3,515.5 L699.5,515.5 L698.7,515.5 L697.9,515.5 L697.0,515.5 L696.2,515.5 L695.4,515.5 L694.6,515.5 L693.8,515.5 L693.0,515.5 L692.2,515.5 L691.3,515.5 L690.5,515.5 L689.7,515.5 L688.9,515.5 L688.1,515.5 L687.3,515.5 L686.5,515.5 L685.7,515.5 L684.8,515.5 L684.0,515.5 L683.2,515.5 L682.4,515.5 L681.6,515.5 L680.8,515.5 L680.0,515.5 L679.1,515.5 L678.3,515.5 L677.5,515.5 L676.7,515.5 L675.9,515.5 L675.1,515.5 L674.3,515.5 L673.4,515.5 L672.6,515.5 L671.8,515.5 L671.0,515.5 L670.2,515.5 L669.4,515.5 L668.6,515.5 L667.7,515.5 L666.9,515.5 L666.1,515.5 L665.3,515.5 L664.5,515.5 L663.7,515.5 L662.9,515.5 L662.0,515.5 L661.2,515.5 L660.4,515.5 L659.6,515.5 L658.8,515.5 L658.0,515.5 L657.2,515.5 L656.4,515.5 L655.5,515.5 L654.7,515.5 L653.9,515.5 L653.1,515.5 L652.3,515.5 L651.5,515.5 L650.7,515.5 L649.8,515.5 L649.0,515.5 L648.2,515.5 L647.4,515.5 L646.6,515.5 L645.8,515.5 L645.0,515.5 L644.1,515.5 L643.3,515.5 L642.5,515.5 L641.7,515.5 L640.9,515.5 L640.1,515.5 L639.3,515.5 L638.4,515.5 L637.6,515.5 L636.8,515.5 L636.0,515.5 L635.2,515.5 L634.4,515.5 L633.6,515.5 L632.7,515.5 L631.9,515.5 L631.1,515.5 L630.3,515.5 L629.5,515.5 L628.7,515.5 L627.9,515.5 L627.1,515.5 L626.2,515.5 L625.4,515.5 L624.6,515.5 L623.8,515.5 L623.0,515.5 L622.2,515.5 L621.4,515.5 L620.5,515.5 L619.7,515.5 L618.9,515.5 L618.1,515.5 L617.3,515.5 L616.5,515.5 L615.7,515.5 L614.8,515.5 L614.0,515.5 L613.2,515.5 L612.4,515.5 L611.6,515.5 L610.8,515.5 L610.0,515.5 L609.1,515.5"/>
<path d="M1316.5,466.7 L1315.4,466.7 L1314.2,466.7 L1313.1,466.7 L1311.9,466.7 L1310.8,466.7 L1309.6,466.7 L1308.5,466.7 L1307.3,466.7 L1306.2,466.7 L1305.0,466.7 L1303.9,466.7 L1302.7,466.7 L1301.6,466.7 L1300.4,466.7 L1299.3,466.7 L1298.1,466.7 L1297.0,466.7 L1295.8,466.7 L1294.7,466.7 L1293.5,466.7 L1292.3,466.7 L1291.2,466.7 L1290.0,466.7 L1288.9,466.7 L1287.7,466.7 L1286.6,466.7 L1285.4,466.7 L1284.3,466.7 L1283.1,466.7 L1282.0,466.7 L1280.8,466.7 L1279.7,466.7 L1278.5,466.7 L1277.4,466.7 L1276.2,466.7 L1275.1,466.7 L1273.9,466.7 L1272.8,466.7 L1271.6,466.7 L1270.5,466.7 L1269.3,466.7 L1268.2,466.7 L1267.0,466.7 L1265.9,466.7 L1264.7,466.7 L1263.6,466.7 L1262.4,466.7 L1261.3,466.7 L1260.1,466.7 L1259.0,466.7 L1257.8,466.7 L1256.7,466.7 L1255.5,466.7 L1254.4,466.7 L1253.2,466.7 L1252.1,466.7 L1250.9,466.7 L1249.8,466.7 L1248.6,466.7 L1247.5,466.7 L1246.3,466.7 L1245.2,466.7 L1244.0,466.7 L1242.9,466.7 L1241.7,466.7 L1240.6,466.7 L1239.4,466.7 L1238.3,466.7 L1237.1,466.7 L1235.9,466.7 L1234.8,466.7 L1233.6,466.7 L1232.5,466.7 L1231.3,466.7 L1230.2,466.7 L1229.0,466.7 L1227.9,466.7 L1226.7,466.7 L1225.6,466.7 L1224.4,466.7 L1223.3,466.7 L1222.1,466.7 L1221.0,466.7 L1219.8,466.7 L1218.7,466.7 L1217.5,466.7 L1216.4,466.7 L1215.2,466.7 L1214.1,466.7 L1212.9,466.7 L1211.8,466.7 L1210.6,466.7 L1209.5,466.7 L1208.3,466.7 L1207.2,466.7 L1206.0,466.7 L1204.9,466.7 L1203.7,466.7 L1202.6,466.7 L1201.4,466.7 L1200.3,466.7 L1199.1,466.7 L1198.0,466.7 L1196.8,466.7 L1195.7,466.7 L1194.5,466.7 L1193.4,466.7 L1192.2,466.7 L1191.1,466.7 L1189.9,466.7 L1188.8,466.7 L1187.6,466.7 L1186.5,466.7 L1185.3,466.7 L1184.2,466.7 L1183.0,466.7 L1181.8,466.7 L1180.7,466.7 L1179.5,466.7 L1178.4,466.7 L1177.2,466.7 L1176.1,466.7 L1174.9,466.7 L1173.8,466.7 L1172.6,466.7 L1171.5,466.7 L1170.3,466.7 L1169.2,466.7 L1168.0,466.7 L1166.9,466.7 L1165.7,466.7 L1164.6,466.7 L1163.4,466.7 L1162.3,466.7 L1161.1,466.7 L1160.0,466.7 L1158.8,466.7 L1157.7,466.7 L1156.5,466.7 L1155.4,466.7 L1154.2,466.7 L1153.1,466.7 L1151.9,466.7 L1150.8,466.7 L1149.6,466.7 L1148.5,466.7 L1147.3,466.7 L1146.2,466.7 L1145.0,466.7 L1143.9,466.7 L1142.7,466.7 L1141.6,466.7 L1140.4,466.7 L1139.3,466.7 L1138.1,466.7 L1137.0,466.7 L1135.8,466.7 L1134.7,466.7 L1133.5,466.7 L1132.4,466.7 L1131.2,466.7 L1130.1,466.7 L1128.9,466.7 L1127.8,466.7 L1126.6,466.7 L1125.4,466.7 L1124.3,466.7 L1123.1,466.7 L1122.0,466.7 L1120.8,466.7 L1119.7,466.7 L1118.5,466.7 L1117.4,466.7 L1116.2,466.7 L1115.1,466.7 L1113.9,466.7 L1112.8,466.7 L1111.6,466.7 L1110.5,466.7 L1109.3,466.7 L1108.2,466.7 L1107.0,466.7 L1105.9,466.7 L1104.7,466.7 L1103.6,466.7 L1102.4,466.7 L1101.3,466.7 L1100.1,466.7 L1099.0,466.7 L1097.8,466.7 L1096.7,466.7 L1095.5,466.7 L1094.4,466.7 L1093.2,466.7 L1092.1,466.7 L1090.9,466.7 L1089.8,466.7 L1088.6,466.7 L1087.5,466.7 L1086.3,466.7 L1085.2,466.7 L1084.0,466.7 L1082.9,466.7 L1081.7,466.7 L1080.6,466.7 L1079.4,466.7 L1078.3,466.7 L1077.1,466.7 L1076.0,466.7 L1074.8,466.7 L1073.7,466.7 L1072.5,466.7 L1071.4,466.7 L1070.2,466.7 L1069.0,466.7 L1067.9,466.7 L1066.7,466.7 L1065.6,466.7 L1064.4,466.7 L1063.3,466.7 L1062.1,466.7 L1061.0,466.7 L1059.8,466.7 L1058.7,466.7 L1057.5,466.7 L1056.4,466.7 L1055.2,466.7 L1054.1,466.7 L1052.9,466.7 L1051.8,466.7 L1050.6,466.7 L1049.5,466.7 L1048.3,466.7 L1047.2,466.7 L1046.0,466.7 L1044.9,466.7 L1043.7,466.7 L1042.6,466.7 L1041.4,466.7 L1040.3,466.7 L1039.1,466.7 L1038.0,466.7 L1036.8,466.7 L1035.7,466.7 L1034.5,466.7 L1033.4,466.7 L1032.2,466.7 L1031.1,466.7 L1029.9,466.7 L1028.8,466.7 L1027.6,466.7 L1026.5,466.7 L1025.3,466.7 L1024.2,466.7 L1023.0,466.7 L1021.9,466.7 L1020.7,466.7 L1019.6,466.7 L1018.4,466.7 L1017.3,466.7 L1016.1,466.7 L1015.0,466.7 L1013.8,466.7 L1012.6,466.7 L1011.5,466.7 L1010.3,466.7 L1009.2,466.7 L1008.0,466.7 L1006.9,466.7 L1005.7,466.7 L1004.6,466.7 L1003.4,466.7 L1002.3,466.7 L1001.1,466.7 L1000.0,466.7 L998.8,466.7 L997.7,466.7 L996.5,466.7 L995.4,466.7 L994.2,466.7 L993.1,466.7 L991.9,466.7 L990.8,466.7 L989.6,466.7 L988.5,466.7 L987.3,466.7 L986.2,466.7 L985.0,466.7 L983.9,466.7 L982.7,466.7 L981.6,466.7 L980.4,466.7 L979.3,466.7 L978.1,466.7 L977.0,466.7 L975.8,466.7 L974.7,466.7 L973.5,466.7 L972.4,466.7 L971.2,466.7 L970.1,466.7 L968.9,466.7 L967.8,466.7 L966.6,466.7 L965.5,466.7 L964.3,466.7 L963.2,466.7 L962.0,466.7 L960.9,466.7 L959.7,466.7 L958.6,466.7 L957.4,466.7 L956.2,466.7 L955.1,466.7 L953.9,466.7 L952.8,466.7 L951.6,466.7 L950.5,466.7 L949.3,466.7 L948.2,466.7 L947.0,466.7 L945.9,466.7 L944.7,466.7 L943.6,466.7 L942.4,466.7 L941.3,466.7 L940.1,466.7 L939.0,466.7 L937.8,466.7 L936.7,466.7 L935.5,466.7 L934.4,466.7 L933.2,466.7 L932.1,466.7 L930.9,466.7 L929.8,466.7 L928.6,466.7 L927.5,466.7 L926.3,466.7 L925.2,466.7 L924.0,466.7 L922.9,466.7 L921.7,466.7 L920.6,466.7 L919.4,466.7 L918.3,466.7 L917.1,466.7 L916.0,466.7 L914.8,466.7 L913.7,466.7 L912.5,466.7 L911.4,466.7 L910.2,466.7 L909.1,466.7 L907.9,466.7 L906.8,466.7 L905.6,466.7 L904.5,466.7 L903.3,466.7 L902.1,466.7 L901.0,466.7 L899.8,466.7 L898.7,466.7 L897.5,466.7 L896.4,466.7 L895.2,466.7 L894.1,466.7 L892.9,466.7 L891.8,466.7 L890.6,466.7 L889.5,466.7 L888.3,466.7 L887.2,466.7 L886.0,466.7 L884.9,466.7 L883.7,466.7 L882.6,466.7 L881.4,466.7 L880.3,466.7 L879.1,466.7 L878.0,466.7 L876.8,466.7 L875.7,466.7 L874.5,466.7 L873.4,466.7 L872.2,466.7 L871.1,466.7 L869.9,466.7 L868.8,466.7 L867.6,466.7 L866.5,466.7 L865.3,466.7 L864.2,466.7 L863.0,466.7 L861.9,466.7 L860.7,466.7 L859.6,466.7 L858.4,466.7 L857.3,466.7 L856.1,466.7 L855.0,466.7 L853.8,466.7 L852.7,466.7 L851.5,466.7 L850.4,466.7 L849.2,466.7 L848.1,466.7 L846.9,466.7 L845.7,466.7 L844.6,466.7 L843.4,466.7 L842.3,466.7 L841.1,466.7 L840.0,466.7 L838.8,466.7 L837.7,466.7 L836.5,466.7 L835.4,466.7 L834.2,466.7 L833.1,466.7 L831.9,466.7 L830.8,466.7 L829.6,466.7 L828.5,466.7 L827.3,466.7 L826.2,466.7 L825.0,466.7 L823.9,466.7 L822.7,466.7 L821.6,466.7 L820.4,466.7 L819.3,466.7 L818.1,466.7 L817.0,466.7 L815.8,466.7 L814.7,466.7 L813.5,466.7 L812.4,466.7 L811.2,466.7 L810.1,466.7 L808.9,466.7 L807.8,466.7 L806.6,466.7 L805.5,466.7 L804.3,466.7 L803.2,466.7 L802.0,466.7 L800.9,466.7 L799.7,466.7 L798.6,466.7 L797.4,466.7 L796.3,466.7 L795.1,466.7 L794.0,466.7 L792.8,466.7 L791.7,466.7 L790.5,466.7 L789.3,466.7 L788.2,466.7 L787.0,466.7 L785.9,466.7 L784.7,466.7 L783.6,466.7 L782.4,466.7 L781.3,466.7 L780.1,466.7 L779.0,466.7 L777.8,466.7 L776.7,466.7 L775.5,466.7 L774.4,466.7 L773.2,466.7 L772.1,466.7 L770.9,466.7 L769.8,466.7 L768.6,466.7 L767.5,466.7 L766.3,466.7 L765.2,466.7 L764.0,466.7 L762.9,466.7 L761.7,466.7 L760.6,466.7 L759.4,466.7 L758.3,466.7 L757.1,466.7 L756.0,466.7 L754.8,466.7 L753.7,466.7 L752.5,466.7 L751.4,466.7 L750.2,466.7 L749.1,466.7 L747.9,466.7 L746.8,466.7 L745.6,466.7 L744.5,466.7 L743.3,466.7 L742.2,466.7 L741.0,466.7 L739.9,466.7 L738.7,466.7 L737.6,466.7 L736.4,466.7 L735.3,466.7 L734.1,466.7 L732.9,466.7 L731.8,466.7 L730.6,466.7 L729.5,466.7 L728.3,466.7 L727.2,466.7 L726.0,466.7 L724.9,466.7 L723.7,466.7 L722.6,466.7 L721.4,466.7 L720.3,466.7 L719.1,466.7 L718.0,466.7 L716.8,466.7 L715.7,466.7 L714.5,466.7 L713.4,466.7 L712.2,466.7 L711.1,466.7 L709.9,466.7 L708.8,466.7 L707.6,466.7 L706.5,466.7 L705.3,466.7 L704.2,466.7 L703.0,466.7 L701.9,466.7 L700.7,466.7 L699.6,466.7 L698.4,466.7 L697.3,466.7 L696.1,466.7 L695.0,466.7 L693.8,466.7 L692.7,466.7 L691.5,466.7 L690.4,466.7 L689.2,466.7 L688.1,466.7 L686.9,466.7 L685.8,466.7 L684.6,466.7 L683.5,466.7 L682.3,466.7 L681.2,466.7 L680.0,466.7 L678.9,466.7 L677.7,466.7 L676.5,466.7 L675.4,466.7 L674.2,466.7 L673.1,466.7 L671.9,466.7 L670.8,466.7 L669.6,466.7 L668.5,466.7 L667.3,466.7 L666.2,466.7 L665.0,466.7 L663.9,466.7 L662.7,466.7 L661.6,466.7 L660.4,466.7 L659.3,466.7 L658.1,466.7 L657.0,466.7 L655.8,466.7 L654.7,466.7 L653.5,466.7 L652.4,466.7 L651.2,466.7 L650.1,466.7 L648.9,466.7 L647.8,466.7 L646.6,466.7 L645.5,466.7 L644.3,466.7 L643.2,466.7 L642.0,466.7 L640.9,466.7 L639.7,466.7 L638.6,466.7 L637.4,466.7 L636.3,466.7 L635.1,466.7 L634.0,466.7 L632.8,466.7 L631.7,466.7 L630.5,466.7 L629.4,466.7 L628.2,466.7 L627.1,466.7 L625.9,466.7 L624.8,466.7 L623.6,466.7 L622.5,466.7 L621.3,466.7 L620.1,466.7 L619.0,466.7 L617.8,466.7 L616.7,466.7 L615.5,466.7 L614.4,466.7 L613.2,466.7 L612.1,466.7 L610.9,466.7 L609.8,466.7 L608.6,466.7 L607.5,466.7 L606.3,466.7 L605.2,466.7 L604.0,466.7 L602.9,466.7 L601.7,466.7 L600.6,466.7 L599.4,466.7 L598.3,466.7 L597.1,466.7 L596.0,466.7 L594.8,466.7 L593.7,466.7 L592.5,466.7 L591.4,466.7 L590.2,466.7 L589.1,466.7 L587.9,466.7 L586.8,466.7 L585.6,466.7 L584.5,466.7 L583.3,466.7 L582.2,466.7 L581.0,466.7 L579.9,466.7 L578.7,466.7 L577.6,466.7 L576.4,466.7 L575.3,466.7 L574.1,466.7 L573.0,466.7 L571.8,466.7 L570.7,466.7 L569.5,466.7 L568.4,466.7 L567.2,466.7 L566.0,466.7 L564.9,466.7 L563.7,466.7 L562.6,466.7 L561.4,466.7 L560.3,466.7 L559.1,466.7 L558.0,466.7 L556.8,466.7 L555.7,466.7 L554.5,466.7 L553.4,466.7 L552.2,466.7 L551.1,466.7 L549.9,466.7 L548.8,466.7 L547.6,466.7 L546.5,466.7 L545.3,466.7 L544.2,466.7 L543.0,466.7 L541.9,466.7 L540.7,466.7 L539.6,466.7 L538.4,466.7 L537.3,466.7 L536.1,466.7 L535.0,466.7 L533.8,466.7 L532.7,466.7 L531.5,466.7 L530.4,466.7 L529.2,466.7 L528.1,466.7 L526.9,466.7 L525.8,466.7 L524.6,466.7 L523.5,466.7 L522.3,466.7 L521.2,466.7 L520.0,466.7 L518.9,466.7 L517.7,466.7 L516.6,466.7 L515.4,466.7 L514.3,466.7 L513.1,466.7 L512.0,466.7 L510.8,466.7 L509.6,466.7 L508.5,466.7 L507.3,466.7 L506.2,466.7 L505.0,466.7 L503.9,466.7 L502.7,466.7 L501.6,466.7 L500.4,466.7 L499.3,466.7 L498.1,466.7 L497.0,466.7 L495.8,466.7 L494.7,466.7 L493.5,466.7 L492.4,466.7 L491.2,466.7 L490.1,466.7 L488.9,466.7 L487.8,466.7"/>
<path d="M1409.6,417.9 L1408.2,417.9 L1406.8,417.9 L1405.4,417.9 L1404.0,417.9 L1402.6,417.9 L1401.2,417.9 L1399.8,417.9 L1398.4,417.9 L1397.0,417.9 L1395.6,417.9 L1394.1,417.9 L1392.7,417.9 L1391.3,417.9 L1389.9,417.9 L1388.5,417.9 L1387.1,417.9 L1385.7,417.9 L1384.3,417.9 L1382.9,417.9 L1381.5,417.9 L1380.0,417.9 L1378.6,417.9 L1377.2,417.9 L1375.8,417.9 L1374.4,417.9 L1373.0,417.9 L1371.6,417.9 L1370.2,417.9 L1368.8,417.9 L1367.4,417.9 L1365.9,417.9 L1364.5,417.9 L1363.1,417.9 L1361.7,417.9 L1360.3,417.9 L1358.9,417.9 L1357.5,417.9 L1356.1,417.9 L1354.7,417.9 L1353.3,417.9 L1351.8,417.9 L1350.4,417.9 L1349.0,417.9 L1347.6,417.9 L1346.2,417.9 L1344.8,417.9 L1343.4,417.9 L1342.0,417.9 L1340.6,417.9 L1339.2,417.9 L1337.8,417.9 L1336.3,417.9 L1334.9,417.9 L1333.5,417.9 L1332.1,417.9 L1330.7,417.9 L1329.3,417.9 L1327.9,417.9 L1326.5,417.9 L1325.1,417.9 L1323.7,417.9 L1322.2,417.9 L1320.8,417.9 L1319.4,417.9 L1318.0,417.9 L1316.6,417.9 L1315.2,417.9 L1313.8,417.9 L1312.4,417.9 L1311.0,417.9 L1309.6,417.9 L1308.1,417.9 L1306.7,417.9 L1305.3,417.9 L1303.9,417.9 L1302.5,417.9 L1301.1,417.9 L1299.7,417.9 L1298.3,417.9 L1296.9,417.9 L1295.5,417.9 L1294.1,417.9 L1292.6,417.9 L1291.2,417.9 L1289.8,417.9 L1288.4,417.9 L1287.0,417.9 L1285.6,417.9 L1284.2,417.9 L1282.8,417.9 L1281.4,417.9 L1280.0,417.9 L1278.5,417.9 L1277.1,417.9 L1275.7,417.9 L1274.3,417.9 L1272.9,417.9 L1271.5,417.9 L1270.1,417.9 L1268.7,417.9 L1267.3,417.9 L1265.9,417.9 L1264.4,417.9 L1263.0,417.9 L1261.6,417.9 L1260.2,417.9 L1258.8,417.9 L1257.4,417.9 L1256.0,417.9 L1254.6,417.9 L1253.2,417.9 L1251.8,417.9 L1250.3,417.9 L1248.9,417.9 L1247.5,417.9 L1246.1,417.9 L1244.7,417.9 L1243.3,417.9 L1241.9,417.9 L1240.5,417.9 L1239.1,417.9 L1237.7,417.9 L1236.3,417.9 L1234.8,417.9 L1233.4,417.9 L1232.0,417.9 L1230.6,417.9 L1229.2,417.9 L1227.8,417.9 L1226.4,417.9 L1225.0,417.9 L1223.6,417.9 L1222.2,417.9 L1220.7,417.9 L1219.3,417.9 L1217.9,417.9 L1216.5,417.9 L1215.1,417.9 L1213.7,417.9 L1212.3,417.9 L1210.9,417.9 L1209.5,417.9 L1208.1,417.9 L1206.6,417.9 L1205.2,417.9 L1203.8,417.9 L1202.4,417.9 L1201.0,417.9 L1199.6,417.9 L1198.2,417.9 L1196.8,417.9 L1195.4,417.9 L1194.0,417.9 L1192.6,417.9 L1191.1,417.9 L1189.7,417.9 L1188.3,417.9 L1186.9,417.9 L1185.5,417.9 L1184.1,417.9 L1182.7,417.9 L1181.3,417.9 L1179.9,417.9 L1178.5,417.9 L1177.0,417.9 L1175.6,417.9 L1174.2,417.9 L1172.8,417.9 L1171.4,417.9 L1170.0,417.9 L1168.6,417.9 L1167.2,417.9 L1165.8,417.9 L1164.4,417.9 L1162.9,417.9 L1161.5,417.9 L1160.1,417.9 L1158.7,417.9 L1157.3,417.9 L1155.9,417.9 L1154.5,417.9 L1153.1,417.9 L1151.7,417.9 L1150.3,417.9 L1148.9,417.9 L1147.4,417.9 L1146.0,417.9 L1144.6,417.9 L1143.2,417.9 L1141.8,417.9 L1140.4,417.9 L1139.0,417.9 L1137.6,417.9 L1136.2,417.9 L1134.8,417.9 L1133.3,417.9 L1131.9,417.9 L1130.5,417.9 L1129.1,417.9 L1127.7,417.9 L1126.3,417.9 L1124.9,417.9 L1123.5,417.9 L1122.1,417.9 L1120.7,417.9 L1119.2,417.9 L1117.8,417.9 L1116.4,417.9 L1115.0,417.9 L1113.6,417.9 L1112.2,417.9 L1110.8,417.9 L1109.4,417.9 L1108.0,417.9 L1106.6,417.9 L1105.1,417.9 L1103.7,417.9 L1102.3,417.9 L1100.9,417.9 L1099.5,417.9 L1098.1,417.9 L1096.7,417.9 L1095.3,417.9 L1093.9,417.9 L1092.5,417.9 L1091.1,417.9 L1089.6,417.9 L1088.2,417.9 L1086.8,417.9 L1085.4,417.9 L1084.0,417.9 L1082.6,417.9 L1081.2,417.9 L1079.8,417.9 L1078.4,417.9 L1077.0,417.9 L1075.5,417.9 L1074.1,417.9 L1072.7,417.9 L1071.3,417.9 L1069.9,417.9 L1068.5,417.9 L1067.1,417.9 L1065.7,417.9 L1064.3,417.9 L1062.9,417.9 L1061.4,417.9 L1060.0,417.9 L1058.6,417.9 L1057.2,417.9 L1055.8,417.9 L1054.4,417.9 L1053.0,417.9 L1051.6,417.9 L1050.2,417.9 L1048.8,417.9 L1047.4,417.9 L1045.9,417.9 L1044.5,417.9 L1043.1,417.9 L1041.7,417.9 L1040.3,417.9 L1038.9,417.9 L1037.5,417.9 L1036.1,417.9 L1034.7,417.9 L1033.3,417.9 L1031.8,417.9 L1030.4,417.9 L1029.0,417.9 L1027.6,417.9 L1026.2,417.9 L1024.8,417.9 L1023.4,417.9 L1022.0,417.9 L1020.6,417.9 L1019.2,417.9 L1017.7,417.9 L1016.3,417.9 L1014.9,417.9 L1013.5,417.9 L1012.1,417.9 L1010.7,417.9 L1009.3,417.9 L1007.9,417.9 L1006.5,417.9 L1005.1,417.9 L1003.6,417.9 L1002.2,417.9 L1000.8,417.9 L999.4,417.9 L998.0,417.9 L996.6,417.9 L995.2,417.9 L993.8,417.9 L992.4,417.9 L991.0,417.9 L989.6,417.9 L988.1,417.9 L986.7,417.9 L985.3,417.9 L983.9,417.9 L982.5,417.9 L981.1,417.9 L979.7,417.9 L978.3,417.9 L976.9,417.9 L975.5,417.9 L974.0,417.9 L972.6,417.9 L971.2,417.9 L969.8,417.9 L968.4,417.9 L967.0,417.9 L965.6,417.9 L964.2,417.9 L962.8,417.9 L961.4,417.9 L959.9,417.9 L958.5,417.9 L957.1,417.9 L955.7,417.9 L954.3,417.9 L952.9,417.9 L951.5,417.9 L950.1,417.9 L948.7,417.9 L947.3,417.9 L945.9,417.9 L944.4,417.9 L943.0,417.9 L941.6,417.9 L940.2,417.9 L938.8,417.9 L937.4,417.9 L936.0,417.9 L934.6,417.9 L933.2,417.9 L931.8,417.9 L930.3,417.9 L928.9,417.9 L927.5,417.9 L926.1,417.9 L924.7,417.9 L923.3,417.9 L921.9,417.9 L920.5,417.9 L919.1,417.9 L917.7,417.9 L916.2,417.9 L914.8,417.9 L913.4,417.9 L912.0,417.9 L910.6,417.9 L909.2,417.9 L907.8,417.9 L906.4,417.9 L905.0,417.9 L903.6,417.9 L902.1,417.9 L900.7,417.9 L899.3,417.9 L897.9,417.9 L896.5,417.9 L895.1,417.9 L893.7,417.9 L892.3,417.9 L890.9,417.9 L889.5,417.9 L888.1,417.9 L886.6,417.9 L885.2,417.9 L883.8,417.9 L882.4,417.9 L881.0,417.9 L879.6,417.9 L878.2,417.9 L876.8,417.9 L875.4,417.9 L874.0,417.9 L872.5,417.9 L871.1,417.9 L869.7,417.9 L868.3,417.9 L866.9,417.9 L865.5,417.9 L864.1,417.9 L862.7,417.9 L861.3,417.9 L859.9,417.9 L858.4,417.9 L857.0,417.9 L855.6,417.9 L854.2,417.9 L852.8,417.9 L851.4,417.9 L850.0,417.9 L848.6,417.9 L847.2,417.9 L845.8,417.9 L844.4,417.9 L842.9,417.9 L841.5,417.9 L840.1,417.9 L838.7,417.9 L837.3,417.9 L835.9,417.9 L834.5,417.9 L833.1,417.9 L831.7,417.9 L830.3,417.9 L828.8,417.9 L827.4,417.9 L826.0,417.9 L824.6,417.9 L823.2,417.9 L821.8,417.9 L820.4,417.9 L819.0,417.9 L817.6,417.9 L816.2,417.9 L814.7,417.9 L813.3,417.9 L811.9,417.9 L810.5,417.9 L809.1,417.9 L807.7,417.9 L806.3,417.9 L804.9,417.9 L803.5,417.9 L802.1,417.9 L800.7,417.9 L799.2,417.9 L797.8,417.9 L796.4,417.9 L795.0,417.9 L793.6,417.9 L792.2,417.9 L790.8,417.9 L789.4,417.9 L788.0,417.9 L786.6,417.9 L785.1,417.9 L783.7,417.9 L782.3,417.9 L780.9,417.9 L779.5,417.9 L778.1,417.9 L776.7,417.9 L775.3,417.9 L773.9,417.9 L772.5,417.9 L771.0,417.9 L769.6,417.9 L768.2,417.9 L766.8,417.9 L765.4,417.9 L764.0,417.9 L762.6,417.9 L761.2,417.9 L759.8,417.9 L758.4,417.9 L756.9,417.9 L755.5,417.9 L754.1,417.9 L752.7,417.9 L751.3,417.9 L749.9,417.9 L748.5,417.9 L747.1,417.9 L745.7,417.9 L744.3,417.9 L742.9,417.9 L741.4,417.9 L740.0,417.9 L738.6,417.9 L737.2,417.9 L735.8,417.9 L734.4,417.9 L733.0,417.9 L731.6,417.9 L730.2,417.9 L728.8,417.9 L727.3,417.9 L725.9,417.9 L724.5,417.9 L723.1,417.9 L721.7,417.9 L720.3,417.9 L718.9,417.9 L717.5,417.9 L716.1,417.9 L714.7,417.9 L713.2,417.9 L711.8,417.9 L710.4,417.9 L709.0,417.9 L707.6,417.9 L706.2,417.9 L704.8,417.9 L703.4,417.9 L702.0,417.9 L700.6,417.9 L699.2,417.9 L697.7,417.9 L696.3,417.9 L694.9,417.9 L693.5,417.9 L692.1,417.9 L690.7,417.9 L689.3,417.9 L687.9,417.9 L686.5,417.9 L685.1,417.9 L683.6,417.9 L682.2,417.9 L680.8,417.9 L679.4,417.9 L678.0,417.9 L676.6,417.9 L675.2,417.9 L673.8,417.9 L672.4,417.9 L671.0,417.9 L669.5,417.9 L668.1,417.9 L666.7,417.9 L665.3,417.9 L663.9,417.9 L662.5,417.9 L661.1,417.9 L659.7,417.9 L658.3,417.9 L656.9,417.9 L655.4,417.9 L654.0,417.9 L652.6,417.9 L651.2,417.9 L649.8,417.9 L648.4,417.9 L647.0,417.9 L645.6,417.9 L644.2,417.9 L642.8,417.9 L641.4,417.9 L639.9,417.9 L638.5,417.9 L637.1,417.9 L635.7,417.9 L634.3,417.9 L632.9,417.9 L631.5,417.9 L630.1,417.9 L628.7,417.9 L627.3,417.9 L625.8,417.9 L624.4,417.9 L623.0,417.9 L621.6,417.9 L620.2,417.9 L618.8,417.9 L617.4,417.9 L616.0,417.9 L614.6,417.9 L613.2,417.9 L611.7,417.9 L610.3,417.9 L608.9,417.9 L607.5,417.9 L606.1,417.9 L604.7,417.9 L603.3,417.9 L601.9,417.9 L600.5,417.9 L599.1,417.9 L597.7,417.9 L596.2,417.9 L594.8,417.9 L593.4,417.9 L592.0,417.9 L590.6,417.9 L589.2,417.9 L587.8,417.9 L586.4,417.9 L585.0,417.9 L583.6,417.9 L582.1,417.9 L580.7,417.9 L579.3,417.9 L577.9,417.9 L576.5,417.9 L575.1,417.9 L573.7,417.9 L572.3,417.9 L570.9,417.9 L569.5,417.9 L568.0,417.9 L566.6,417.9 L565.2,417.9 L563.8,417.9 L562.4,417.9 L561.0,417.9 L559.6,417.9 L558.2,417.9 L556.8,417.9 L555.4,417.9 L554.0,417.9 L552.5,417.9 L551.1,417.9 L549.7,417.9 L548.3,417.9 L546.9,417.9 L545.5,417.9 L544.1,417.9 L542.7,417.9 L541.3,417.9 L539.9,417.9 L538.4,417.9 L537.0,417.9 L535.6,417.9 L534.2,417.9 L532.8,417.9 L531.4,417.9 L530.0,417.9 L528.6,417.9 L527.2,417.9 L525.8,417.9 L524.3,417.9 L522.9,417.9 L521.5,417.9 L520.1,417.9 L518.7,417.9 L517.3,417.9 L515.9,417.9 L514.5,417.9 L513.1,417.9 L511.7,417.9 L510.2,417.9 L508.8,417.9 L507.4,417.9 L506.0,417.9 L504.6,417.9 L503.2,417.9 L501.8,417.9 L500.4,417.9 L499.0,417.9 L497.6,417.9 L496.2,417.9 L494.7,417.9 L493.3,417.9 L491.9,417.9 L490.5,417.9 L489.1,417.9 L487.7,417.9 L486.3,417.9 L484.9,417.9 L483.5,417.9 L482.1,417.9 L480.6,417.9 L479.2,417.9 L477.8,417.9 L476.4,417.9 L475.0,417.9 L473.6,417.9 L472.2,417.9 L470.8,417.9 L469.4,417.9 L468.0,417.9 L466.5,417.9 L465.1,417.9 L463.7,417.9 L462.3,417.9 L460.9,417.9 L459.5,417.9 L458.1,417.9 L456.7,417.9 L455.3,417.9 L453.9,417.9 L452.5,417.9 L451.0,417.9 L449.6,417.9 L448.2,417.9 L446.8,417.9 L445.4,417.9 L444.0,417.9 L442.6,417.9 L441.2,417.9 L439.8,417.9 L438.4,417.9 L436.9,417.9 L435.5,417.9 L434.1,417.9 L432.7,417.9 L431.3,417.9 L429.9,417.9 L428.5,417.9 L427.1,417.9 L425.7,417.9 L424.3,417.9 L422.8,417.9 L421.4,417.9 L420.0,417.9 L418.6,417.9 L417.2,417.9 L415.8,417.9 L414.4,417.9 L413.0,417.9 L411.6,417.9 L410.2,417.9 L408.7,417.9 L407.3,417.9 L405.9,417.9 L404.5,417.9 L403.1,417.9 L401.7,417.9 L400.3,417.9 L398.9,417.9 L397.5,417.9 L396.1,417.9 L394.7,417.9"/>
<path d="M1468.2,369.0 L1466.6,369.0 L1465.0,369.0 L1463.5,369.0 L1461.9,369.0 L1460.3,369.0 L1458.8,369.0 L1457.2,369.0 L1455.6,369.0 L1454.0,369.0 L1452.5,369.0 L1450.9,369.0 L1449.3,369.0 L1447.7,369.0 L1446.2,369.0 L1444.6,369.0 L1443.0,369.0 L1441.5,369.0 L1439.9,369.0 L1438.3,369.0 L1436.7,369.0 L1435.2,369.0 L1433.6,369.0 L1432.0,369.0 L1430.5,369.0 L1428.9,369.0 L1427.3,369.0 L1425.7,369.0 L1424.2,369.0 L1422.6,369.0 L1421.0,369.0 L1419.4,369.0 L1417.9,369.0 L1416.3,369.0 L1414.7,369.0 L1413.2,369.0 L1411.6,369.0 L1410.0,369.0 L1408.4,369.0 L1406.9,369.0 L1405.3,369.0 L1403.7,369.0 L1402.2,369.0 L1400.6,369.0 L1399.0,369.0 L1397.4,369.0 L1395.9,369.0 L1394.3,369.0 L1392.7,369.0 L1391.1,369.0 L1389.6,369.0 L1388.0,369.0 L1386.4,369.0 L1384.9,369.0 L1383.3,369.0 L1381.7,369.0 L1380.1,369.0 L1378.6,369.0 L1377.0,369.0 L1375.4,369.0 L1373.9,369.0 L1372.3,369.0 L1370.7,369.0 L1369.1,369.0 L1367.6,369.0 L1366.0,369.0 L1364.4,369.0 L1362.8,369.0 L1361.3,369.0 L1359.7,369.0 L1358.1,369.0 L1356.6,369.0 L1355.0,369.0 L1353.4,369.0 L1351.8,369.0 L1350.3,369.0 L1348.7,369.0 L1347.1,369.0 L1345.5,369.0 L1344.0,369.0 L1342.4,369.0 L1340.8,369.0 L1339.3,369.0 L1337.7,369.0 L1336.1,369.0 L1334.5,369.0 L1333.0,369.0 L1331.4,369.0 L1329.8,369.0 L1328.3,369.0 L1326.7,369.0 L1325.1,369.0 L1323.5,369.0 L1322.0,369.0 L1320.4,369.0 L1318.8,369.0 L1317.2,369.0 L1315.7,369.0 L1314.1,369.0 L1312.5,369.0 L1311.0,369.0 L1309.4,369.0 L1307.8,369.0 L1306.2,369.0 L1304.7,369.0 L1303.1,369.0 L1301.5,369.0 L1300.0,369.0 L1298.4,369.0 L1296.8,369.0 L1295.2,369.0 L1293.7,369.0 L1292.1,369.0 L1290.5,369.0 L1288.9,369.0 L1287.4,369.0 L1285.8,369.0 L1284.2,369.0 L1282.7,369.0 L1281.1,369.0 L1279.5,369.0 L1277.9,369.0 L1276.4,369.0 L1274.8,369.0 L1273.2,369.0 L1271.6,369.0 L1270.1,369.0 L1268.5,369.0 L1266.9,369.0 L1265.4,369.0 L1263.8,369.0 L1262.2,369.0 L1260.6,369.0 L1259.1,369.0 L1257.5,369.0 L1255.9,369.0 L1254.4,369.0 L1252.8,369.0 L1251.2,369.0 L1249.6,369.0 L1248.1,369.0 L1246.5,369.0 L1244.9,369.0 L1243.3,369.0 L1241.8,369.0 L1240.2,369.0 L1238.6,369.0 L1237.1,369.0 L1235.5,369.0 L1233.9,369.0 L1232.3,369.0 L1230.8,369.0 L1229.2,369.0 L1227.6,369.0 L1226.1,369.0 L1224.5,369.0 L1222.9,369.0 L1221.3,369.0 L1219.8,369.0 L1218.2,369.0 L1216.6,369.0 L1215.0,369.0 L1213.5,369.0 L1211.9,369.0 L1210.3,369.0 L1208.8,369.0 L1207.2,369.0 L1205.6,369.0 L1204.0,369.0 L1202.5,369.0 L1200.9,369.0 L1199.3,369.0 L1197.7,369.0 L1196.2,369.0 L1194.6,369.0 L1193.0,369.0 L1191.5,369.0 L1189.9,369.0 L1188.3,369.0 L1186.7,369.0 L1185.2,369.0 L1183.6,369.0 L1182.0,369.0 L1180.5,369.0 L1178.9,369.0 L1177.3,369.0 L1175.7,369.0 L1174.2,369.0 L1172.6,369.0 L1171.0,369.0 L1169.4,369.0 L1167.9,369.0 L1166.3,369.0 L1164.7,369.0 L1163.2,369.0 L1161.6,369.0 L1160.0,369.0 L1158.4,369.0 L1156.9,369.0 L1155.3,369.0 L1153.7,369.0 L1152.2,369.0 L1150.6,369.0 L1149.0,369.0 L1147.4,369.0 L1145.9,369.0 L1144.3,369.0 L1142.7,369.0 L1141.1,369.0 L1139.6,369.0 L1138.0,369.0 L1136.4,369.0 L1134.9,369.0 L1133.3,369.0 L1131.7,369.0 L1130.1,369.0 L1128.6,369.0 L1127.0,369.0 L1125.4,369.0 L1123.8,369.0 L1122.3,369.0 L1120.7,369.0 L1119.1,369.0 L1117.6,369.0 L1116.0,369.0 L1114.4,369.0 L1112.8,369.0 L1111.3,369.0 L1109.7,369.0 L1108.1,369.0 L1106.6,369.0 L1105.0,369.0 L1103.4,369.0 L1101.8,369.0 L1100.3,369.0 L1098.7,369.0 L1097.1,369.0 L1095.5,369.0 L1094.0,369.0 L1092.4,369.0 L1090.8,369.0 L1089.3,369.0 L1087.7,369.0 L1086.1,369.0 L1084.5,369.0 L1083.0,369.0 L1081.4,369.0 L1079.8,369.0 L1078.3,369.0 L1076.7,369.0 L1075.1,369.0 L1073.5,369.0 L1072.0,369.0 L1070.4,369.0 L1068.8,369.0 L1067.2,369.0 L1065.7,369.0 L1064.1,369.0 L1062.5,369.0 L1061.0,369.0 L1059.4,369.0 L1057.8,369.0 L1056.2,369.0 L1054.7,369.0 L1053.1,369.0 L1051.5,369.0 L1049.9,369.0 L1048.4,369.0 L1046.8,369.0 L1045.2,369.0 L1043.7,369.0 L1042.1,369.0 L1040.5,369.0 L1038.9,369.0 L1037.4,369.0 L1035.8,369.0 L1034.2,369.0 L1032.7,369.0 L1031.1,369.0 L1029.5,369.0 L1027.9,369.0 L1026.4,369.0 L1024.8,369.0 L1023.2,369.0 L1021.6,369.0 L1020.1,369.0 L1018.5,369.0 L1016.9,369.0 L1015.4,369.0 L1013.8,369.0 L1012.2,369.0 L1010.6,369.0 L1009.1,369.0 L1007.5,369.0 L1005.9,369.0 L1004.4,369.0 L1002.8,369.0 L1001.2,369.0 L999.6,369.0 L998.1,369.0 L996.5,369.0 L994.9,369.0 L993.3,369.0 L991.8,369.0 L990.2,369.0 L988.6,369.0 L987.1,369.0 L985.5,369.0 L983.9,369.0 L982.3,369.0 L980.8,369.0 L979.2,369.0 L977.6,369.0 L976.0,369.0 L974.5,369.0 L972.9,369.0 L971.3,369.0 L969.8,369.0 L968.2,369.0 L966.6,369.0 L965.0,369.0 L963.5,369.0 L961.9,369.0 L960.3,369.0 L958.8,369.0 L957.2,369.0 L955.6,369.0 L954.0,369.0 L952.5,369.0 L950.9,369.0 L949.3,369.0 L947.7,369.0 L946.2,369.0 L944.6,369.0 L943.0,369.0 L941.5,369.0 L939.9,369.0 L938.3,369.0 L936.7,369.0 L935.2,369.0 L933.6,369.0 L932.0,369.0 L930.5,369.0 L928.9,369.0 L927.3,369.0 L925.7,369.0 L924.2,369.0 L922.6,369.0 L921.0,369.0 L919.4,369.0 L917.9,369.0 L916.3,369.0 L914.7,369.0 L913.2,369.0 L911.6,369.0 L910.0,369.0 L908.4,369.0 L906.9,369.0 L905.3,369.0 L903.7,369.0 L902.1,369.0 L900.6,369.0 L899.0,369.0 L897.4,369.0 L895.9,369.0 L894.3,369.0 L892.7,369.0 L891.1,369.0 L889.6,369.0 L888.0,369.0 L886.4,369.0 L884.9,369.0 L883.3,369.0 L881.7,369.0 L880.1,369.0 L878.6,369.0 L877.0,369.0 L875.4,369.0 L873.8,369.0 L872.3,369.0 L870.7,369.0 L869.1,369.0 L867.6,369.0 L866.0,369.0 L864.4,369.0 L862.8,369.0 L861.3,369.0 L859.7,369.0 L858.1,369.0 L856.6,369.0 L855.0,369.0 L853.4,369.0 L851.8,369.0 L850.3,369.0 L848.7,369.0 L847.1,369.0 L845.5,369.0 L844.0,369.0 L842.4,369.0 L840.8,369.0 L839.3,369.0 L837.7,369.0 L836.1,369.0 L834.5,369.0 L833.0,369.0 L831.4,369.0 L829.8,369.0 L828.3,369.0 L826.7,369.0 L825.1,369.0 L823.5,369.0 L822.0,369.0 L820.4,369.0 L818.8,369.0 L817.2,369.0 L815.7,369.0 L814.1,369.0 L812.5,369.0 L811.0,369.0 L809.4,369.0 L807.8,369.0 L806.2,369.0 L804.7,369.0 L803.1,369.0 L801.5,369.0 L799.9,369.0 L798.4,369.0 L796.8,369.0 L795.2,369.0 L793.7,369.0 L792.1,369.0 L790.5,369.0 L788.9,369.0 L787.4,369.0 L785.8,369.0 L784.2,369.0 L782.7,369.0 L781.1,369.0 L779.5,369.0 L777.9,369.0 L776.4,369.0 L774.8,369.0 L773.2,369.0 L771.6,369.0 L770.1,369.0 L768.5,369.0 L766.9,369.0 L765.4,369.0 L763.8,369.0 L762.2,369.0 L760.6,369.0 L759.1,369.0 L757.5,369.0 L755.9,369.0 L754.4,369.0 L752.8,369.0 L751.2,369.0 L749.6,369.0 L748.1,369.0 L746.5,369.0 L744.9,369.0 L743.3,369.0 L741.8,369.0 L740.2,369.0 L738.6,369.0 L737.1,369.0 L735.5,369.0 L733.9,369.0 L732.3,369.0 L730.8,369.0 L729.2,369.0 L727.6,369.0 L726.0,369.0 L724.5,369.0 L722.9,369.0 L721.3,369.0 L719.8,369.0 L718.2,369.0 L716.6,369.0 L715.0,369.0 L713.5,369.0 L711.9,369.0 L710.3,369.0 L708.8,369.0 L707.2,369.0 L705.6,369.0 L704.0,369.0 L702.5,369.0 L700.9,369.0 L699.3,369.0 L697.7,369.0 L696.2,369.0 L694.6,369.0 L693.0,369.0 L691.5,369.0 L689.9,369.0 L688.3,369.0 L686.7,369.0 L685.2,369.0 L683.6,369.0 L682.0,369.0 L680.5,369.0 L678.9,369.0 L677.3,369.0 L675.7,369.0 L674.2,369.0 L672.6,369.0 L671.0,369.0 L669.4,369.0 L667.9,369.0 L666.3,369.0 L664.7,369.0 L663.2,369.0 L661.6,369.0 L660.0,369.0 L658.4,369.0 L656.9,369.0 L655.3,369.0 L653.7,369.0 L652.1,369.0 L650.6,369.0 L649.0,369.0 L647.4,369.0 L645.9,369.0 L644.3,369.0 L642.7,369.0 L641.1,369.0 L639.6,369.0 L638.0,369.0 L636.4,369.0 L634.9,369.0 L633.3,369.0 L631.7,369.0 L630.1,369.0 L628.6,369.0 L627.0,369.0 L625.4,369.0 L623.8,369.0 L622.3,369.0 L620.7,369.0 L619.1,369.0 L617.6,369.0 L616.0,369.0 L614.4,369.0 L612.8,369.0 L611.3,369.0 L609.7,369.0 L608.1,369.0 L606.6,369.0 L605.0,369.0 L603.4,369.0 L601.8,369.0 L600.3,369.0 L598.7,369.0 L597.1,369.0 L595.5,369.0 L594.0,369.0 L592.4,369.0 L590.8,369.0 L589.3,369.0 L587.7,369.0 L586.1,369.0 L584.5,369.0 L583.0,369.0 L581.4,369.0 L579.8,369.0 L578.2,369.0 L576.7,369.0 L575.1,369.0 L573.5,369.0 L572.0,369.0 L570.4,369.0 L568.8,369.0 L567.2,369.0 L565.7,369.0 L564.1,369.0 L562.5,369.0 L561.0,369.0 L559.4,369.0 L557.8,369.0 L556.2,369.0 L554.7,369.0 L553.1,369.0 L551.5,369.0 L549.9,369.0 L548.4,369.0 L546.8,369.0 L545.2,369.0 L543.7,369.0 L542.1,369.0 L540.5,369.0 L538.9,369.0 L537.4,369.0 L535.8,369.0 L534.2,369.0 L532.7,369.0 L531.1,369.0 L529.5,369.0 L527.9,369.0 L526.4,369.0 L524.8,369.0 L523.2,369.0 L521.6,369.0 L520.1,369.0 L518.5,369.0 L516.9,369.0 L515.4,369.0 L513.8,369.0 L512.2,369.0 L510.6,369.0 L509.1,369.0 L507.5,369.0 L505.9,369.0 L504.3,369.0 L502.8,369.0 L501.2,369.0 L499.6,369.0 L498.1,369.0 L496.5,369.0 L494.9,369.0 L493.3,369.0 L491.8,369.0 L490.2,369.0 L488.6,369.0 L487.1,369.0 L485.5,369.0 L483.9,369.0 L482.3,369.0 L480.8,369.0 L479.2,369.0 L477.6,369.0 L476.0,369.0 L474.5,369.0 L472.9,369.0 L471.3,369.0 L469.8,369.0 L468.2,369.0 L466.6,369.0 L465.0,369.0 L463.5,369.0 L461.9,369.0 L460.3,369.0 L458.8,369.0 L457.2,369.0 L455.6,369.0 L454.0,369.0 L452.5,369.0 L450.9,369.0 L449.3,369.0 L447.7,369.0 L446.2,369.0 L444.6,369.0 L443.0,369.0 L441.5,369.0 L439.9,369.0 L438.3,369.0 L436.7,369.0 L435.2,369.0 L433.6,369.0 L432.0,369.0 L430.4,369.0 L428.9,369.0 L427.3,369.0 L425.7,369.0 L424.2,369.0 L422.6,369.0 L421.0,369.0 L419.4,369.0 L417.9,369.0 L416.3,369.0 L414.7,369.0 L413.2,369.0 L411.6,369.0 L410.0,369.0 L408.4,369.0 L406.9,369.0 L405.3,369.0 L403.7,369.0 L402.1,369.0 L400.6,369.0 L399.0,369.0 L397.4,369.0 L395.9,369.0 L394.3,369.0 L392.7,369.0 L391.1,369.0 L389.6,369.0 L388.0,369.0 L386.4,369.0 L384.9,369.0 L383.3,369.0 L381.7,369.0 L380.1,369.0 L378.6,369.0 L377.0,369.0 L375.4,369.0 L373.8,369.0 L372.3,369.0 L370.7,369.0 L369.1,369.0 L367.6,369.0 L366.0,369.0 L364.4,369.0 L362.8,369.0 L361.3,369.0 L359.7,369.0 L358.1,369.0 L356.6,369.0 L355.0,369.0 L353.4,369.0 L351.8,369.0 L350.3,369.0 L348.7,369.0 L347.1,369.0 L345.5,369.0 L344.0,369.0 L342.4,369.0 L340.8,369.0 L339.3,369.0 L337.7,369.0 L336.1,369.0"/>
<path d="M1488.2,320.2 L1486.5,320.2 L1484.9,320.2 L1483.3,320.2 L1481.6,320.2 L1480.0,320.2 L1478.4,320.2 L1476.8,320.2 L1475.1,320.2 L1473.5,320.2 L1471.9,320.2 L1470.3,320.2 L1468.6,320.2 L1467.0,320.2 L1465.4,320.2 L1463.7,320.2 L1462.1,320.2 L1460.5,320.2 L1458.9,320.2 L1457.2,320.2 L1455.6,320.2 L1454.0,320.2 L1452.3,320.2 L1450.7,320.2 L1449.1,320.2 L1447.5,320.2 L1445.8,320.2 L1444.2,320.2 L1442.6,320.2 L1441.0,320.2 L1439.3,320.2 L1437.7,320.2 L1436.1,320.2 L1434.4,320.2 L1432.8,320.2 L1431.2,320.2 L1429.6,320.2 L1427.9,320.2 L1426.3,320.2 L1424.7,320.2 L1423.0,320.2 L1421.4,320.2 L1419.8,320.2 L1418.2,320.2 L1416.5,320.2 L1414.9,320.2 L1413.3,320.2 L1411.7,320.2 L1410.0,320.2 L1408.4,320.2 L1406.8,320.2 L1405.1,320.2 L1403.5,320.2 L1401.9,320.2 L1400.3,320.2 L1398.6,320.2 L1397.0,320.2 L1395.4,320.2 L1393.7,320.2 L1392.1,320.2 L1390.5,320.2 L1388.9,320.2 L1387.2,320.2 L1385.6,320.2 L1384.0,320.2 L1382.4,320.2 L1380.7,320.2 L1379.1,320.2 L1377.5,320.2 L1375.8,320.2 L1374.2,320.2 L1372.6,320.2 L1371.0,320.2 L1369.3,320.2 L1367.7,320.2 L1366.1,320.2 L1364.4,320.2 L1362.8,320.2 L1361.2,320.2 L1359.6,320.2 L1357.9,320.2 L1356.3,320.2 L1354.7,320.2 L1353.1,320.2 L1351.4,320.2 L1349.8,320.2 L1348.2,320.2 L1346.5,320.2 L1344.9,320.2 L1343.3,320.2 L1341.7,320.2 L1340.0,320.2 L1338.4,320.2 L1336.8,320.2 L1335.1,320.2 L1333.5,320.2 L1331.9,320.2 L1330.3,320.2 L1328.6,320.2 L1327.0,320.2 L1325.4,320.2 L1323.8,320.2 L1322.1,320.2 L1320.5,320.2 L1318.9,320.2 L1317.2,320.2 L1315.6,320.2 L1314.0,320.2 L1312.4,320.2 L1310.7,320.2 L1309.1,320.2 L1307.5,320.2 L1305.8,320.2 L1304.2,320.2 L1302.6,320.2 L1301.0,320.2 L1299.3,320.2 L1297.7,320.2 L1296.1,320.2 L1294.4,320.2 L1292.8,320.2 L1291.2,320.2 L1289.6,320.2 L1287.9,320.2 L1286.3,320.2 L1284.7,320.2 L1283.1,320.2 L1281.4,320.2 L1279.8,320.2 L1278.2,320.2 L1276.5,320.2 L1274.9,320.2 L1273.3,320.2 L1271.7,320.2 L1270.0,320.2 L1268.4,320.2 L1266.8,320.2 L1265.1,320.2 L1263.5,320.2 L1261.9,320.2 L1260.3,320.2 L1258.6,320.2 L1257.0,320.2 L1255.4,320.2 L1253.8,320.2 L1252.1,320.2 L1250.5,320.2 L1248.9,320.2 L1247.2,320.2 L1245.6,320.2 L1244.0,320.2 L1242.4,320.2 L1240.7,320.2 L1239.1,320.2 L1237.5,320.2 L1235.8,320.2 L1234.2,320.2 L1232.6,320.2 L1231.0,320.2 L1229.3,320.2 L1227.7,320.2 L1226.1,320.2 L1224.5,320.2 L1222.8,320.2 L1221.2,320.2 L1219.6,320.2 L1217.9,320.2 L1216.3,320.2 L1214.7,320.2 L1213.1,320.2 L1211.4,320.2 L1209.8,320.2 L1208.2,320.2 L1206.5,320.2 L1204.9,320.2 L1203.3,320.2 L1201.7,320.2 L1200.0,320.2 L1198.4,320.2 L1196.8,320.2 L1195.2,320.2 L1193.5,320.2 L1191.9,320.2 L1190.3,320.2 L1188.6,320.2 L1187.0,320.2 L1185.4,320.2 L1183.8,320.2 L1182.1,320.2 L1180.5,320.2 L1178.9,320.2 L1177.2,320.2 L1175.6,320.2 L1174.0,320.2 L1172.4,320.2 L1170.7,320.2 L1169.1,320.2 L1167.5,320.2 L1165.9,320.2 L1164.2,320.2 L1162.6,320.2 L1161.0,320.2 L1159.3,320.2 L1157.7,320.2 L1156.1,320.2 L1154.5,320.2 L1152.8,320.2 L1151.2,320.2 L1149.6,320.2 L1147.9,320.2 L1146.3,320.2 L1144.7,320.2 L1143.1,320.2 L1141.4,320.2 L1139.8,320.2 L1138.2,320.2 L1136.6,320.2 L1134.9,320.2 L1133.3,320.2 L1131.7,320.2 L1130.0,320.2 L1128.4,320.2 L1126.8,320.2 L1125.2,320.2 L1123.5,320.2 L1121.9,320.2 L1120.3,320.2 L1118.6,320.2 L1117.0,320.2 L1115.4,320.2 L1113.8,320.2 L1112.1,320.2 L1110.5,320.2 L1108.9,320.2 L1107.3,320.2 L1105.6,320.2 L1104.0,320.2 L1102.4,320.2 L1100.7,320.2 L1099.1,320.2 L1097.5,320.2 L1095.9,320.2 L1094.2,320.2 L1092.6,320.2 L1091.0,320.2 L1089.3,320.2 L1087.7,320.2 L1086.1,320.2 L1084.5,320.2 L1082.8,320.2 L1081.2,320.2 L1079.6,320.2 L1078.0,320.2 L1076.3,320.2 L1074.7,320.2 L1073.1,320.2 L1071.4,320.2 L1069.8,320.2 L1068.2,320.2 L1066.6,320.2 L1064.9,320.2 L1063.3,320.2 L1061.7,320.2 L1060.0,320.2 L1058.4,320.2 L1056.8,320.2 L1055.2,320.2 L1053.5,320.2 L1051.9,320.2 L1050.3,320.2 L1048.7,320.2 L1047.0,320.2 L1045.4,320.2 L1043.8,320.2 L1042.1,320.2 L1040.5,320.2 L1038.9,320.2 L1037.3,320.2 L1035.6,320.2 L1034.0,320.2 L1032.4,320.2 L1030.7,320.2 L1029.1,320.2 L1027.5,320.2 L1025.9,320.2 L1024.2,320.2 L1022.6,320.2 L1021.0,320.2 L1019.4,320.2 L1017.7,320.2 L1016.1,320.2 L1014.5,320.2 L1012.8,320.2 L1011.2,320.2 L1009.6,320.2 L1008.0,320.2 L1006.3,320.2 L1004.7,320.2 L1003.1,320.2 L1001.4,320.2 L999.8,320.2 L998.2,320.2 L996.6,320.2 L994.9,320.2 L993.3,320.2 L991.7,320.2 L990.1,320.2 L988.4,320.2 L986.8,320.2 L985.2,320.2 L983.5,320.2 L981.9,320.2 L980.3,320.2 L978.7,320.2 L977.0,320.2 L975.4,320.2 L973.8,320.2 L972.1,320.2 L970.5,320.2 L968.9,320.2 L967.3,320.2 L965.6,320.2 L964.0,320.2 L962.4,320.2 L960.8,320.2 L959.1,320.2 L957.5,320.2 L955.9,320.2 L954.2,320.2 L952.6,320.2 L951.0,320.2 L949.4,320.2 L947.7,320.2 L946.1,320.2 L944.5,320.2 L942.8,320.2 L941.2,320.2 L939.6,320.2 L938.0,320.2 L936.3,320.2 L934.7,320.2 L933.1,320.2 L931.5,320.2 L929.8,320.2 L928.2,320.2 L926.6,320.2 L924.9,320.2 L923.3,320.2 L921.7,320.2 L920.1,320.2 L918.4,320.2 L916.8,320.2 L915.2,320.2 L913.5,320.2 L911.9,320.2 L910.3,320.2 L908.7,320.2 L907.0,320.2 L905.4,320.2 L903.8,320.2 L902.1,320.2 L900.5,320.2 L898.9,320.2 L897.3,320.2 L895.6,320.2 L894.0,320.2 L892.4,320.2 L890.8,320.2 L889.1,320.2 L887.5,320.2 L885.9,320.2 L884.2,320.2 L882.6,320.2 L881.0,320.2 L879.4,320.2 L877.7,320.2 L876.1,320.2 L874.5,320.2 L872.8,320.2 L871.2,320.2 L869.6,320.2 L868.0,320.2 L866.3,320.2 L864.7,320.2 L863.1,320.2 L861.5,320.2 L859.8,320.2 L858.2,320.2 L856.6,320.2 L854.9,320.2 L853.3,320.2 L851.7,320.2 L850.1,320.2 L848.4,320.2 L846.8,320.2 L845.2,320.2 L843.5,320.2 L841.9,320.2 L840.3,320.2 L838.7,320.2 L837.0,320.2 L835.4,320.2 L833.8,320.2 L832.2,320.2 L830.5,320.2 L828.9,320.2 L827.3,320.2 L825.6,320.2 L824.0,320.2 L822.4,320.2 L820.8,320.2 L819.1,320.2 L817.5,320.2 L815.9,320.2 L814.2,320.2 L812.6,320.2 L811.0,320.2 L809.4,320.2 L807.7,320.2 L806.1,320.2 L804.5,320.2 L802.9,320.2 L801.2,320.2 L799.6,320.2 L798.0,320.2 L796.3,320.2 L794.7,320.2 L793.1,320.2 L791.5,320.2 L789.8,320.2 L788.2,320.2 L786.6,320.2 L784.9,320.2 L783.3,320.2 L781.7,320.2 L780.1,320.2 L778.4,320.2 L776.8,320.2 L775.2,320.2 L773.6,320.2 L771.9,320.2 L770.3,320.2 L768.7,320.2 L767.0,320.2 L765.4,320.2 L763.8,320.2 L762.2,320.2 L760.5,320.2 L758.9,320.2 L757.3,320.2 L755.6,320.2 L754.0,320.2 L752.4,320.2 L750.8,320.2 L749.1,320.2 L747.5,320.2 L745.9,320.2 L744.3,320.2 L742.6,320.2 L741.0,320.2 L739.4,320.2 L737.7,320.2 L736.1,320.2 L734.5,320.2 L732.9,320.2 L731.2,320.2 L729.6,320.2 L728.0,320.2 L726.3,320.2 L724.7,320.2 L723.1,320.2 L721.5,320.2 L719.8,320.2 L718.2,320.2 L716.6,320.2 L715.0,320.2 L713.3,320.2 L711.7,320.2 L710.1,320.2 L708.4,320.2 L706.8,320.2 L705.2,320.2 L703.6,320.2 L701.9,320.2 L700.3,320.2 L698.7,320.2 L697.0,320.2 L695.4,320.2 L693.8,320.2 L692.2,320.2 L690.5,320.2 L688.9,320.2 L687.3,320.2 L685.7,320.2 L684.0,320.2 L682.4,320.2 L680.8,320.2 L679.1,320.2 L677.5,320.2 L675.9,320.2 L674.3,320.2 L672.6,320.2 L671.0,320.2 L669.4,320.2 L667.7,320.2 L666.1,320.2 L664.5,320.2 L662.9,320.2 L661.2,320.2 L659.6,320.2 L658.0,320.2 L656.4,320.2 L654.7,320.2 L653.1,320.2 L651.5,320.2 L649.8,320.2 L648.2,320.2 L646.6,320.2 L645.0,320.2 L643.3,320.2 L641.7,320.2 L640.1,320.2 L638.4,320.2 L636.8,320.2 L635.2,320.2 L633.6,320.2 L631.9,320.2 L630.3,320.2 L628.7,320.2 L627.1,320.2 L625.4,320.2 L623.8,320.2 L622.2,320.2 L620.5,320.2 L618.9,320.2 L617.3,320.2 L615.7,320.2 L614.0,320.2 L612.4,320.2 L610.8,320.2 L609.1,320.2 L607.5,320.2 L605.9,320.2 L604.3,320.2 L602.6,320.2 L601.0,320.2 L599.4,320.2 L597.8,320.2 L596.1,320.2 L594.5,320.2 L592.9,320.2 L591.2,320.2 L589.6,320.2 L588.0,320.2 L586.4,320.2 L584.7,320.2 L583.1,320.2 L581.5,320.2 L579.8,320.2 L578.2,320.2 L576.6,320.2 L575.0,320.2 L573.3,320.2 L571.7,320.2 L570.1,320.2 L568.5,320.2 L566.8,320.2 L565.2,320.2 L563.6,320.2 L561.9,320.2 L560.3,320.2 L558.7,320.2 L557.1,320.2 L555.4,320.2 L553.8,320.2 L552.2,320.2 L550.5,320.2 L548.9,320.2 L547.3,320.2 L545.7,320.2 L544.0,320.2 L542.4,320.2 L540.8,320.2 L539.2,320.2 L537.5,320.2 L535.9,320.2 L534.3,320.2 L532.6,320.2 L531.0,320.2 L529.4,320.2 L527.8,320.2 L526.1,320.2 L524.5,320.2 L522.9,320.2 L521.2,320.2 L519.6,320.2 L518.0,320.2 L516.4,320.2 L514.7,320.2 L513.1,320.2 L511.5,320.2 L509.9,320.2 L508.2,320.2 L506.6,320.2 L505.0,320.2 L503.3,320.2 L501.7,320.2 L500.1,320.2 L498.5,320.2 L496.8,320.2 L495.2,320.2 L493.6,320.2 L491.9,320.2 L490.3,320.2 L488.7,320.2 L487.1,320.2 L485.4,320.2 L483.8,320.2 L482.2,320.2 L480.5,320.2 L478.9,320.2 L477.3,320.2 L475.7,320.2 L474.0,320.2 L472.4,320.2 L470.8,320.2 L469.2,320.2 L467.5,320.2 L465.9,320.2 L464.3,320.2 L462.6,320.2 L461.0,320.2 L459.4,320.2 L457.8,320.2 L456.1,320.2 L454.5,320.2 L452.9,320.2 L451.2,320.2 L449.6,320.2 L448.0,320.2 L446.4,320.2 L444.7,320.2 L443.1,320.2 L441.5,320.2 L439.9,320.2 L438.2,320.2 L436.6,320.2 L435.0,320.2 L433.3,320.2 L431.7,320.2 L430.1,320.2 L428.5,320.2 L426.8,320.2 L425.2,320.2 L423.6,320.2 L421.9,320.2 L420.3,320.2 L418.7,320.2 L417.1,320.2 L415.4,320.2 L413.8,320.2 L412.2,320.2 L410.6,320.2 L408.9,320.2 L407.3,320.2 L405.7,320.2 L404.0,320.2 L402.4,320.2 L400.8,320.2 L399.2,320.2 L397.5,320.2 L395.9,320.2 L394.3,320.2 L392.6,320.2 L391.0,320.2 L389.4,320.2 L387.8,320.2 L386.1,320.2 L384.5,320.2 L382.9,320.2 L381.3,320.2 L379.6,320.2 L378.0,320.2 L376.4,320.2 L374.7,320.2 L373.1,320.2 L371.5,320.2 L369.9,320.2 L368.2,320.2 L366.6,320.2 L365.0,320.2 L363.3,320.2 L361.7,320.2 L360.1,320.2 L358.5,320.2 L356.8,320.2 L355.2,320.2 L353.6,320.2 L352.0,320.2 L350.3,320.2 L348.7,320.2 L347.1,320.2 L345.4,320.2 L343.8,320.2 L342.2,320.2 L340.6,320.2 L338.9,320.2 L337.3,320.2 L335.7,320.2 L334.0,320.2 L332.4,320.2 L330.8,320.2 L329.2,320.2 L327.5,320.2 L325.9,320.2 L324.3,320.2 L322.7,320.2 L321.0,320.2 L319.4,320.2 L317.8,320.2 L316.1,320.2"/>
<path d="M1468.2,271.4 L1466.6,271.4 L1465.0,271.4 L1463.5,271.4 L1461.9,271.4 L1460.3,271.4 L1458.8,271.4 L1457.2,271.4 L1455.6,271.4 L1454.0,271.4 L1452.5,271.4 L1450.9,271.4 L1449.3,271.4 L1447.7,271.4 L1446.2,271.4 L1444.6,271.4 L1443.0,271.4 L1441.5,271.4 L1439.9,271.4 L1438.3,271.4 L1436.7,271.4 L1435.2,271.4 L1433.6,271.4 L1432.0,271.4 L1430.5,271.4 L1428.9,271.4 L1427.3,271.4 L1425.7,271.4 L1424.2,271.4 L1422.6,271.4 L1421.0,271.4 L1419.4,271.4 L1417.9,271.4 L1416.3,271.4 L1414.7,271.4 L1413.2,271.4 L1411.6,271.4 L1410.0,271.4 L1408.4,271.4 L1406.9,271.4 L1405.3,271.4 L1403.7,271.4 L1402.2,271.4 L1400.6,271.4 L1399.0,271.4 L1397.4,271.4 L1395.9,271.4 L1394.3,271.4 L1392.7,271.4 L1391.1,271.4 L1389.6,271.4 L1388.0,271.4 L1386.4,271.4 L1384.9,271.4 L1383.3,271.4 L1381.7,271.4 L1380.1,271.4 L1378.6,271.4 L1377.0,271.4 L1375.4,271.4 L1373.9,271.4 L1372.3,271.4 L1370.7,271.4 L1369.1,271.4 L1367.6,271.4 L1366.0,271.4 L1364.4,271.4 L1362.8,271.4 L1361.3,271.4 L1359.7,271.4 L1358.1,271.4 L1356.6,271.4 L1355.0,271.4 L1353.4,271.4 L1351.8,271.4 L1350.3,271.4 L1348.7,271.4 L1347.1,271.4 L1345.5,271.4 L1344.0,271.4 L1342.4,271.4 L1340.8,271.4 L1339.3,271.4 L1337.7,271.4 L1336.1,271.4 L1334.5,271.4 L1333.0,271.4 L1331.4,271.4 L1329.8,271.4 L1328.3,271.4 L1326.7,271.4 L1325.1,271.4 L1323.5,271.4 L1322.0,271.4 L1320.4,271.4 L1318.8,271.4 L1317.2,271.4 L1315.7,271.4 L1314.1,271.4 L1312.5,271.4 L1311.0,271.4 L1309.4,271.4 L1307.8,271.4 L1306.2,271.4 L1304.7,271.4 L1303.1,271.4 L1301.5,271.4 L1300.0,271.4 L1298.4,271.4 L1296.8,271.4 L1295.2,271.4 L1293.7,271.4 L1292.1,271.4 L1290.5,271.4 L1288.9,271.4 L1287.4,271.4 L1285.8,271.4 L1284.2,271.4 L1282.7,271.4 L1281.1,271.4 L1279.5,271.4 L1277.9,271.4 L1276.4,271.4 L1274.8,271.4 L1273.2,271.4 L1271.6,271.4 L1270.1,271.4 L1268.5,271.4 L1266.9,271.4 L1265.4,271.4 L1263.8,271.4 L1262.2,271.4 L1260.6,271.4 L1259.1,271.4 L1257.5,271.4 L1255.9,271.4 L1254.4,271.4 L1252.8,271.4 L1251.2,271.4 L1249.6,271.4 L1248.1,271.4 L1246.5,271.4 L1244.9,271.4 L1243.3,271.4 L1241.8,271.4 L1240.2,271.4 L1238.6,271.4 L1237.1,271.4 L1235.5,271.4 L1233.9,271.4 L1232.3,271.4 L1230.8,271.4 L1229.2,271.4 L1227.6,271.4 L1226.1,271.4 L1224.5,271.4 L1222.9,271.4 L1221.3,271.4 L1219.8,271.4 L1218.2,271.4 L1216.6,271.4 L1215.0,271.4 L1213.5,271.4 L1211.9,271.4 L1210.3,271.4 L1208.8,271.4 L1207.2,271.4 L1205.6,271.4 L1204.0,271.4 L1202.5,271.4 L1200.9,271.4 L1199.3,271.4 L1197.7,271.4 L1196.2,271.4 L1194.6,271.4 L1193.0,271.4 L1191.5,271.4 L1189.9,271.4 L1188.3,271.4 L1186.7,271.4 L1185.2,271.4 L1183.6,271.4 L1182.0,271.4 L1180.5,271.4 L1178.9,271.4 L1177.3,271.4 L1175.7,271.4 L1174.2,271.4 L1172.6,271.4 L1171.0,271.4 L1169.4,271.4 L1167.9,271.4 L1166.3,271.4 L1164.7,271.4 L1163.2,271.4 L1161.6,271.4 L1160.0,271.4 L1158.4,271.4 L1156.9,271.4 L1155.3,271.4 L1153.7,271.4 L1152.2,271.4 L1150.6,271.4 L1149.0,271.4 L1147.4,271.4 L1145.9,271.4 L1144.3,271.4 L1142.7,271.4 L1141.1,271.4 L1139.6,271.4 L1138.0,271.4 L1136.4,271.4 L1134.9,271.4 L1133.3,271.4 L1131.7,271.4 L1130.1,271.4 L1128.6,271.4 L1127.0,271.4 L1125.4,271.4 L1123.8,271.4 L1122.3,271.4 L1120.7,271.4 L1119.1,271.4 L1117.6,271.4 L1116.0,271.4 L1114.4,271.4 L1112.8,271.4 L1111.3,271.4 L1109.7,271.4 L1108.1,271.4 L1106.6,271.4 L1105.0,271.4 L1103.4,271.4 L1101.8,271.4 L1100.3,271.4 L1098.7,271.4 L1097.1,271.4 L1095.5,271.4 L1094.0,271.4 L1092.4,271.4 L1090.8,271.4 L1089.3,271.4 L1087.7,271.4 L1086.1,271.4 L1084.5,271.4 L1083.0,271.4 L1081.4,271.4 L1079.8,271.4 L1078.3,271.4 L1076.7,271.4 L1075.1,271.4 L1073.5,271.4 L1072.0,271.4 L1070.4,271.4 L1068.8,271.4 L1067.2,271.4 L1065.7,271.4 L1064.1,271.4 L1062.5,271.4 L1061.0,271.4 L1059.4,271.4 L1057.8,271.4 L1056.2,271.4 L1054.7,271.4 L1053.1,271.4 L1051.5,271.4 L1049.9,271.4 L1048.4,271.4 L1046.8,271.4 L1045.2,271.4 L1043.7,271.4 L1042.1,271.4 L1040.5,271.4 L1038.9,271.4 L1037.4,271.4 L1035.8,271.4 L1034.2,271.4 L1032.7,271.4 L1031.1,271.4 L1029.5,271.4 L1027.9,271.4 L1026.4,271.4 L1024.8,271.4 L1023.2,271.4 L1021.6,271.4 L1020.1,271.4 L1018.5,271.4 L1016.9,271.4 L1015.4,271.4 L1013.8,271.4 L1012.2,271.4 L1010.6,271.4 L1009.1,271.4 L1007.5,271.4 L1005.9,271.4 L1004.4,271.4 L1002.8,271.4 L1001.2,271.4 L999.6,271.4 L998.1,271.4 L996.5,271.4 L994.9,271.4 L993.3,271.4 L991.8,271.4 L990.2,271.4 L988.6,271.4 L987.1,271.4 L985.5,271.4 L983.9,271.4 L982.3,271.4 L980.8,271.4 L979.2,271.4 L977.6,271.4 L976.0,271.4 L974.5,271.4 L972.9,271.4 L971.3,271.4 L969.8,271.4 L968.2,271.4 L966.6,271.4 L965.0,271.4 L963.5,271.4 L961.9,271.4 L960.3,271.4 L958.8,271.4 L957.2,271.4 L955.6,271.4 L954.0,271.4 L952.5,271.4 L950.9,271.4 L949.3,271.4 L947.7,271.4 L946.2,271.4 L944.6,271.4 L943.0,271.4 L941.5,271.4 L939.9,271.4 L938.3,271.4 L936.7,271.4 L935.2,271.4 L933.6,271.4 L932.0,271.4 L930.5,271.4 L928.9,271.4 L927.3,271.4 L925.7,271.4 L924.2,271.4 L922.6,271.4 L921.0,271.4 L919.4,271.4 L917.9,271.4 L916.3,271.4 L914.7,271.4 L913.2,271.4 L911.6,271.4 L910.0,271.4 L908.4,271.4 L906.9,271.4 L905.3,271.4 L903.7,271.4 L902.1,271.4 L900.6,271.4 L899.0,271.4 L897.4,271.4 L895.9,271.4 L894.3,271.4 L892.7,271.4 L891.1,271.4 L889.6,271.4 L888.0,271.4 L886.4,271.4 L884.9,271.4 L883.3,271.4 L881.7,271.4 L880.1,271.4 L878.6,271.4 L877.0,271.4 L875.4,271.4 L873.8,271.4 L872.3,271.4 L870.7,271.4 L869.1,271.4 L867.6,271.4 L866.0,271.4 L864.4,271.4 L862.8,271.4 L861.3,271.4 L859.7,271.4 L858.1,271.4 L856.6,271.4 L855.0,271.4 L853.4,271.4 L851.8,271.4 L850.3,271.4 L848.7,271.4 L847.1,271.4 L845.5,271.4 L844.0,271.4 L842.4,271.4 L840.8,271.4 L839.3,271.4 L837.7,271.4 L836.1,271.4 L834.5,271.4 L833.0,271.4 L831.4,271.4 L829.8,271.4 L828.3,271.4 L826.7,271.4 L825.1,271.4 L823.5,271.4 L822.0,271.4 L820.4,271.4 L818.8,271.4 L817.2,271.4 L815.7,271.4 L814.1,271.4 L812.5,271.4 L811.0,271.4 L809.4,271.4 L807.8,271.4 L806.2,271.4 L804.7,271.4 L803.1,271.4 L801.5,271.4 L799.9,271.4 L798.4,271.4 L796.8,271.4 L795.2,271.4 L793.7,271.4 L792.1,271.4 L790.5,271.4 L788.9,271.4 L787.4,271.4 L785.8,271.4 L784.2,271.4 L782.7,271.4 L781.1,271.4 L779.5,271.4 L777.9,271.4 L776.4,271.4 L774.8,271.4 L773.2,271.4 L771.6,271.4 L770.1,271.4 L768.5,271.4 L766.9,271.4 L765.4,271.4 L763.8,271.4 L762.2,271.4 L760.6,271.4 L759.1,271.4 L757.5,271.4 L755.9,271.4 L754.4,271.4 L752.8,271.4 L751.2,271.4 L749.6,271.4 L748.1,271.4 L746.5,271.4 L744.9,271.4 L743.3,271.4 L741.8,271.4 L740.2,271.4 L738.6,271.4 L737.1,271.4 L735.5,271.4 L733.9,271.4 L732.3,271.4 L730.8,271.4 L729.2,271.4 L727.6,271.4 L726.0,271.4 L724.5,271.4 L722.9,271.4 L721.3,271.4 L719.8,271.4 L718.2,271.4 L716.6,271.4 L715.0,271.4 L713.5,271.4 L711.9,271.4 L710.3,271.4 L708.8,271.4 L707.2,271.4 L705.6,271.4 L704.0,271.4 L702.5,271.4 L700.9,271.4 L699.3,271.4 L697.7,271.4 L696.2,271.4 L694.6,271.4 L693.0,271.4 L691.5,271.4 L689.9,271.4 L688.3,271.4 L686.7,271.4 L685.2,271.4 L683.6,271.4 L682.0,271.4 L680.5,271.4 L678.9,271.4 L677.3,271.4 L675.7,271.4 L674.2,271.4 L672.6,271.4 L671.0,271.4 L669.4,271.4 L667.9,271.4 L666.3,271.4 L664.7,271.4 L663.2,271.4 L661.6,271.4 L660.0,271.4 L658.4,271.4 L656.9,271.4 L655.3,271.4 L653.7,271.4 L652.1,271.4 L650.6,271.4 L649.0,271.4 L647.4,271.4 L645.9,271.4 L644.3,271.4 L642.7,271.4 L641.1,271.4 L639.6,271.4 L638.0,271.4 L636.4,271.4 L634.9,271.4 L633.3,271.4 L631.7,271.4 L630.1,271.4 L628.6,271.4 L627.0,271.4 L625.4,271.4 L623.8,271.4 L622.3,271.4 L620.7,271.4 L619.1,271.4 L617.6,271.4 L616.0,271.4 L614.4,271.4 L612.8,271.4 L611.3,271.4 L609.7,271.4 L608.1,271.4 L606.6,271.4 L605.0,271.4 L603.4,271.4 L601.8,271.4 L600.3,271.4 L598.7,271.4 L597.1,271.4 L595.5,271.4 L594.0,271.4 L592.4,271.4 L590.8,271.4 L589.3,271.4 L587.7,271.4 L586.1,271.4 L584.5,271.4 L583.0,271.4 L581.4,271.4 L579.8,271.4 L578.2,271.4 L576.7,271.4 L575.1,271.4 L573.5,271.4 L572.0,271.4 L570.4,271.4 L568.8,271.4 L567.2,271.4 L565.7,271.4 L564.1,271.4 L562.5,271.4 L561.0,271.4 L559.4,271.4 L557.8,271.4 L556.2,271.4 L554.7,271.4 L553.1,271.4 L551.5,271.4 L549.9,271.4 L548.4,271.4 L546.8,271.4 L545.2,271.4 L543.7,271.4 L542.1,271.4 L540.5,271.4 L538.9,271.4 L537.4,271.4 L535.8,271.4 L534.2,271.4 L532.7,271.4 L531.1,271.4 L529.5,271.4 L527.9,271.4 L526.4,271.4 L524.8,271.4 L523.2,271.4 L521.6,271.4 L520.1,271.4 L518.5,271.4 L516.9,271.4 L515.4,271.4 L513.8,271.4 L512.2,271.4 L510.6,271.4 L509.1,271.4 L507.5,271.4 L505.9,271.4 L504.3,271.4 L502.8,271.4 L501.2,271.4 L499.6,271.4 L498.1,271.4 L496.5,271.4 L494.9,271.4 L493.3,271.4 L491.8,271.4 L490.2,271.4 L488.6,271.4 L487.1,271.4 L485.5,271.4 L483.9,271.4 L482.3,271.4 L480.8,271.4 L479.2,271.4 L477.6,271.4 L476.0,271.4 L474.5,271.4 L472.9,271.4 L471.3,271.4 L469.8,271.4 L468.2,271.4 L466.6,271.4 L465.0,271.4 L463.5,271.4 L461.9,271.4 L460.3,271.4 L458.8,271.4 L457.2,271.4 L455.6,271.4 L454.0,271.4 L452.5,271.4 L450.9,271.4 L449.3,271.4 L447.7,271.4 L446.2,271.4 L444.6,271.4 L443.0,271.4 L441.5,271.4 L439.9,271.4 L438.3,271.4 L436.7,271.4 L435.2,271.4 L433.6,271.4 L432.0,271.4 L430.4,271.4 L428.9,271.4 L427.3,271.4 L425.7,271.4 L424.2,271.4 L422.6,271.4 L421.0,271.4 L419.4,271.4 L417.9,271.4 L416.3,271.4 L414.7,271.4 L413.2,271.4 L411.6,271.4 L410.0,271.4 L408.4,271.4 L406.9,271.4 L405.3,271.4 L403.7,271.4 L402.1,271.4 L400.6,271.4 L399.0,271.4 L397.4,271.4 L395.9,271.4 L394.3,271.4 L392.7,271.4 L391.1,271.4 L389.6,271.4 L388.0,271.4 L386.4,271.4 L384.9,271.4 L383.3,271.4 L381.7,271.4 L380.1,271.4 L378.6,271.4 L377.0,271.4 L375.4,271.4 L373.8,271.4 L372.3,271.4 L370.7,271.4 L369.1,271.4 L367.6,271.4 L366.0,271.4 L364.4,271.4 L362.8,271.4 L361.3,271.4 L359.7,271.4 L358.1,271.4 L356.6,271.4 L355.0,271.4 L353.4,271.4 L351.8,271.4 L350.3,271.4 L348.7,271.4 L347.1,271.4 L345.5,271.4 L344.0,271.4 L342.4,271.4 L340.8,271.4 L339.3,271.4 L337.7,271.4 L336.1,271.4"/>
<path d="M1409.6,222.5 L1408.2,222.5 L1406.8,222.5 L1405.4,222.5 L1404.0,222.5 L1402.6,222.5 L1401.2,222.5 L1399.8,222.5 L1398.4,222.5 L1397.0,222.5 L1395.6,222.5 L1394.1,222.5 L1392.7,222.5 L1391.3,222.5 L1389.9,222.5 L1388.5,222.5 L1387.1,222.5 L1385.7,222.5 L1384.3,222.5 L1382.9,222.5 L1381.5,222.5 L1380.0,222.5 L1378.6,222.5 L1377.2,222.5 L1375.8,222.5 L1374.4,222.5 L1373.0,222.5 L1371.6,222.5 L1370.2,222.5 L1368.8,222.5 L1367.4,222.5 L1365.9,222.5 L1364.5,222.5 L1363.1,222.5 L1361.7,222.5 L1360.3,222.5 L1358.9,222.5 L1357.5,222.5 L1356.1,222.5 L1354.7,222.5 L1353.3,222.5 L1351.8,222.5 L1350.4,222.5 L1349.0,222.5 L1347.6,222.5 L1346.2,222.5 L1344.8,222.5 L1343.4,222.5 L1342.0,222.5 L1340.6,222.5 L1339.2,222.5 L1337.8,222.5 L1336.3,222.5 L1334.9,222.5 L1333.5,222.5 L1332.1,222.5 L1330.7,222.5 L1329.3,222.5 L1327.9,222.5 L1326.5,222.5 L1325.1,222.5 L1323.7,222.5 L1322.2,222.5 L1320.8,222.5 L1319.4,222.5 L1318.0,222.5 L1316.6,222.5 L1315.2,222.5 L1313.8,222.5 L1312.4,222.5 L1311.0,222.5 L1309.6,222.5 L1308.1,222.5 L1306.7,222.5 L1305.3,222.5 L1303.9,222.5 L1302.5,222.5 L1301.1,222.5 L1299.7,222.5 L1298.3,222.5 L1296.9,222.5 L1295.5,222.5 L1294.1,222.5 L1292.6,222.5 L1291.2,222.5 L1289.8,222.5 L1288.4,222.5 L1287.0,222.5 L1285.6,222.5 L1284.2,222.5 L1282.8,222.5 L1281.4,222.5 L1280.0,222.5 L1278.5,222.5 L1277.1,222.5 L1275.7,222.5 L1274.3,222.5 L1272.9,222.5 L1271.5,222.5 L1270.1,222.5 L1268.7,222.5 L1267.3,222.5 L1265.9,222.5 L1264.4,222.5 L1263.0,222.5 L1261.6,222.5 L1260.2,222.5 L1258.8,222.5 L1257.4,222.5 L1256.0,222.5 L1254.6,222.5 L1253.2,222.5 L1251.8,222.5 L1250.3,222.5 L1248.9,222.5 L1247.5,222.5 L1246.1,222.5 L1244.7,222.5 L1243.3,222.5 L1241.9,222.5 L1240.5,222.5 L1239.1,222.5 L1237.7,222.5 L1236.3,222.5 L1234.8,222.5 L1233.4,222.5 L1232.0,222.5 L1230.6,222.5 L1229.2,222.5 L1227.8,222.5 L1226.4,222.5 L1225.0,222.5 L1223.6,222.5 L1222.2,222.5 L1220.7,222.5 L1219.3,222.5 L1217.9,222.5 L1216.5,222.5 L1215.1,222.5 L1213.7,222.5 L1212.3,222.5 L1210.9,222.5 L1209.5,222.5 L1208.1,222.5 L1206.6,222.5 L1205.2,222.5 L1203.8,222.5 L1202.4,222.5 L1201.0,222.5 L1199.6,222.5 L1198.2,222.5 L1196.8,222.5 L1195.4,222.5 L1194.0,222.5 L1192.6,222.5 L1191.1,222.5 L1189.7,222.5 L1188.3,222.5 L1186.9,222.5 L1185.5,222.5 L1184.1,222.5 L1182.7,222.5 L1181.3,222.5 L1179.9,222.5 L1178.5,222.5 L1177.0,222.5 L1175.6,222.5 L1174.2,222.5 L1172.8,222.5 L1171.4,222.5 L1170.0,222.5 L1168.6,222.5 L1167.2,222.5 L1165.8,222.5 L1164.4,222.5 L1162.9,222.5 L1161.5,222.5 L1160.1,222.5 L1158.7,222.5 L1157.3,222.5 L1155.9,222.5 L1154.5,222.5 L1153.1,222.5 L1151.7,222.5 L1150.3,222.5 L1148.9,222.5 L1147.4,222.5 L1146.0,222.5 L1144.6,222.5 L1143.2,222.5 L1141.8,222.5 L1140.4,222.5 L1139.0,222.5 L1137.6,222.5 L1136.2,222.5 L1134.8,222.5 L1133.3,222.5 L1131.9,222.5 L1130.5,222.5 L1129.1,222.5 L1127.7,222.5 L1126.3,222.5 L1124.9,222.5 L1123.5,222.5 L1122.1,222.5 L1120.7,222.5 L1119.2,222.5 L1117.8,222.5 L1116.4,222.5 L1115.0,222.5 L1113.6,222.5 L1112.2,222.5 L1110.8,222.5 L1109.4,222.5 L1108.0,222.5 L1106.6,222.5 L1105.1,222.5 L1103.7,222.5 L1102.3,222.5 L1100.9,222.5 L1099.5,222.5 L1098.1,222.5 L1096.7,222.5 L1095.3,222.5 L1093.9,222.5 L1092.5,222.5 L1091.1,222.5 L1089.6,222.5 L1088.2,222.5 L1086.8,222.5 L1085.4,222.5 L1084.0,222.5 L1082.6,222.5 L1081.2,222.5 L1079.8,222.5 L1078.4,222.5 L1077.0,222.5 L1075.5,222.5 L1074.1,222.5 L1072.7,222.5 L1071.3,222.5 L1069.9,222.5 L1068.5,222.5 L1067.1,222.5 L1065.7,222.5 L1064.3,222.5 L1062.9,222.5 L1061.4,222.5 L1060.0,222.5 L1058.6,222.5 L1057.2,222.5 L1055.8,222.5 L1054.4,222.5 L1053.0,222.5 L1051.6,222.5 L1050.2,222.5 L1048.8,222.5 L1047.4,222.5 L1045.9,222.5 L1044.5,222.5 L1043.1,222.5 L1041.7,222.5 L1040.3,222.5 L1038.9,222.5 L1037.5,222.5 L1036.1,222.5 L1034.7,222.5 L1033.3,222.5 L1031.8,222.5 L1030.4,222.5 L1029.0,222.5 L1027.6,222.5 L1026.2,222.5 L1024.8,222.5 L1023.4,222.5 L1022.0,222.5 L1020.6,222.5 L1019.2,222.5 L1017.7,222.5 L1016.3,222.5 L1014.9,222.5 L1013.5,222.5 L1012.1,222.5 L1010.7,222.5 L1009.3,222.5 L1007.9,222.5 L1006.5,222.5 L1005.1,222.5 L1003.6,222.5 L1002.2,222.5 L1000.8,222.5 L999.4,222.5 L998.0,222.5 L996.6,222.5 L995.2,222.5 L993.8,222.5 L992.4,222.5 L991.0,222.5 L989.6,222.5 L988.1,222.5 L986.7,222.5 L985.3,222.5 L983.9,222.5 L982.5,222.5 L981.1,222.5 L979.7,222.5 L978.3,222.5 L976.9,222.5 L975.5,222.5 L974.0,222.5 L972.6,222.5 L971.2,222.5 L969.8,222.5 L968.4,222.5 L967.0,222.5 L965.6,222.5 L964.2,222.5 L962.8,222.5 L961.4,222.5 L959.9,222.5 L958.5,222.5 L957.1,222.5 L955.7,222.5 L954.3,222.5 L952.9,222.5 L951.5,222.5 L950.1,222.5 L948.7,222.5 L947.3,222.5 L945.9,222.5 L944.4,222.5 L943.0,222.5 L941.6,222.5 L940.2,222.5 L938.8,222.5 L937.4,222.5 L936.0,222.5 L934.6,222.5 L933.2,222.5 L931.8,222.5 L930.3,222.5 L928.9,222.5 L927.5,222.5 L926.1,222.5 L924.7,222.5 L923.3,222.5 L921.9,222.5 L920.5,222.5 L919.1,222.5 L917.7,222.5 L916.2,222.5 L914.8,222.5 L913.4,222.5 L912.0,222.5 L910.6,222.5 L909.2,222.5 L907.8,222.5 L906.4,222.5 L905.0,222.5 L903.6,222.5 L902.1,222.5 L900.7,222.5 L899.3,222.5 L897.9,222.5 L896.5,222.5 L895.1,222.5 L893.7,222.5 L892.3,222.5 L890.9,222.5 L889.5,222.5 L888.1,222.5 L886.6,222.5 L885.2,222.5 L883.8,222.5 L882.4,222.5 L881.0,222.5 L879.6,222.5 L878.2,222.5 L876.8,222.5 L875.4,222.5 L874.0,222.5 L872.5,222.5 L871.1,222.5 L869.7,222.5 L868.3,222.5 L866.9,222.5 L865.5,222.5 L864.1,222.5 L862.7,222.5 L861.3,222.5 L859.9,222.5 L858.4,222.5 L857.0,222.5 L855.6,222.5 L854.2,222.5 L852.8,222.5 L851.4,222.5 L850.0,222.5 L848.6,222.5 L847.2,222.5 L845.8,222.5 L844.4,222.5 L842.9,222.5 L841.5,222.5 L840.1,222.5 L838.7,222.5 L837.3,222.5 L835.9,222.5 L834.5,222.5 L833.1,222.5 L831.7,222.5 L830.3,222.5 L828.8,222.5 L827.4,222.5 L826.0,222.5 L824.6,222.5 L823.2,222.5 L821.8,222.5 L820.4,222.5 L819.0,222.5 L817.6,222.5 L816.2,222.5 L814.7,222.5 L813.3,222.5 L811.9,222.5 L810.5,222.5 L809.1,222.5 L807.7,222.5 L806.3,222.5 L804.9,222.5 L803.5,222.5 L802.1,222.5 L800.7,222.5 L799.2,222.5 L797.8,222.5 L796.4,222.5 L795.0,222.5 L793.6,222.5 L792.2,222.5 L790.8,222.5 L789.4,222.5 L788.0,222.5 L786.6,222.5 L785.1,222.5 L783.7,222.5 L782.3,222.5 L780.9,222.5 L779.5,222.5 L778.1,222.5 L776.7,222.5 L775.3,222.5 L773.9,222.5 L772.5,222.5 L771.0,222.5 L769.6,222.5 L768.2,222.5 L766.8,222.5 L765.4,222.5 L764.0,222.5 L762.6,222.5 L761.2,222.5 L759.8,222.5 L758.4,222.5 L756.9,222.5 L755.5,222.5 L754.1,222.5 L752.7,222.5 L751.3,222.5 L749.9,222.5 L748.5,222.5 L747.1,222.5 L745.7,222.5 L744.3,222.5 L742.9,222.5 L741.4,222.5 L740.0,222.5 L738.6,222.5 L737.2,222.5 L735.8,222.5 L734.4,222.5 L733.0,222.5 L731.6,222.5 L730.2,222.5 L728.8,222.5 L727.3,222.5 L725.9,222.5 L724.5,222.5 L723.1,222.5 L721.7,222.5 L720.3,222.5 L718.9,222.5 L717.5,222.5 L716.1,222.5 L714.7,222.5 L713.2,222.5 L711.8,222.5 L710.4,222.5 L709.0,222.5 L707.6,222.5 L706.2,222.5 L704.8,222.5 L703.4,222.5 L702.0,222.5 L700.6,222.5 L699.2,222.5 L697.7,222.5 L696.3,222.5 L694.9,222.5 L693.5,222.5 L692.1,222.5 L690.7,222.5 L689.3,222.5 L687.9,222.5 L686.5,222.5 L685.1,222.5 L683.6,222.5 L682.2,222.5 L680.8,222.5 L679.4,222.5 L678.0,222.5 L676.6,222.5 L675.2,222.5 L673.8,222.5 L672.4,222.5 L671.0,222.5 L669.5,222.5 L668.1,222.5 L666.7,222.5 L665.3,222.5 L663.9,222.5 L662.5,222.5 L661.1,222.5 L659.7,222.5 L658.3,222.5 L656.9,222.5 L655.4,222.5 L654.0,222.5 L652.6,222.5 L651.2,222.5 L649.8,222.5 L648.4,222.5 L647.0,222.5 L645.6,222.5 L644.2,222.5 L642.8,222.5 L641.4,222.5 L639.9,222.5 L638.5,222.5 L637.1,222.5 L635.7,222.5 L634.3,222.5 L632.9,222.5 L631.5,222.5 L630.1,222.5 L628.7,222.5 L627.3,222.5 L625.8,222.5 L624.4,222.5 L623.0,222.5 L621.6,222.5 L620.2,222.5 L618.8,222.5 L617.4,222.5 L616.0,222.5 L614.6,222.5 L613.2,222.5 L611.7,222.5 L610.3,222.5 L608.9,222.5 L607.5,222.5 L606.1,222.5 L604.7,222.5 L603.3,222.5 L601.9,222.5 L600.5,222.5 L599.1,222.5 L597.7,222.5 L596.2,222.5 L594.8,222.5 L593.4,222.5 L592.0,222.5 L590.6,222.5 L589.2,222.5 L587.8,222.5 L586.4,222.5 L585.0,222.5 L583.6,222.5 L582.1,222.5 L580.7,222.5 L579.3,222.5 L577.9,222.5 L576.5,222.5 L575.1,222.5 L573.7,222.5 L572.3,222.5 L570.9,222.5 L569.5,222.5 L568.0,222.5 L566.6,222.5 L565.2,222.5 L563.8,222.5 L562.4,222.5 L561.0,222.5 L559.6,222.5 L558.2,222.5 L556.8,222.5 L555.4,222.5 L554.0,222.5 L552.5,222.5 L551.1,222.5 L549.7,222.5 L548.3,222.5 L546.9,222.5 L545.5,222.5 L544.1,222.5 L542.7,222.5 L541.3,222.5 L539.9,222.5 L538.4,222.5 L537.0,222.5 L535.6,222.5 L534.2,222.5 L532.8,222.5 L531.4,222.5 L530.0,222.5 L528.6,222.5 L527.2,222.5 L525.8,222.5 L524.3,222.5 L522.9,222.5 L521.5,222.5 L520.1,222.5 L518.7,222.5 L517.3,222.5 L515.9,222.5 L514.5,222.5 L513.1,222.5 L511.7,222.5 L510.2,222.5 L508.8,222.5 L507.4,222.5 L506.0,222.5 L504.6,222.5 L503.2,222.5 L501.8,222.5 L500.4,222.5 L499.0,222.5 L497.6,222.5 L496.2,222.5 L494.7,222.5 L493.3,222.5 L491.9,222.5 L490.5,222.5 L489.1,222.5 L487.7,222.5 L486.3,222.5 L484.9,222.5 L483.5,222.5 L482.1,222.5 L480.6,222.5 L479.2,222.5 L477.8,222.5 L476.4,222.5 L475.0,222.5 L473.6,222.5 L472.2,222.5 L470.8,222.5 L469.4,222.5 L468.0,222.5 L466.5,222.5 L465.1,222.5 L463.7,222.5 L462.3,222.5 L460.9,222.5 L459.5,222.5 L458.1,222.5 L456.7,222.5 L455.3,222.5 L453.9,222.5 L452.5,222.5 L451.0,222.5 L449.6,222.5 L448.2,222.5 L446.8,222.5 L445.4,222.5 L444.0,222.5 L442.6,222.5 L441.2,222.5 L439.8,222.5 L438.4,222.5 L436.9,222.5 L435.5,222.5 L434.1,222.5 L432.7,222.5 L431.3,222.5 L429.9,222.5 L428.5,222.5 L427.1,222.5 L425.7,222.5 L424.3,222.5 L422.8,222.5 L421.4,222.5 L420.0,222.5 L418.6,222.5 L417.2,222.5 L415.8,222.5 L414.4,222.5 L413.0,222.5 L411.6,222.5 L410.2,222.5 L408.7,222.5 L407.3,222.5 L405.9,222.5 L404.5,222.5 L403.1,222.5 L401.7,222.5 L400.3,222.5 L398.9,222.5 L397.5,222.5 L396.1,222.5 L394.7,222.5"/>
<path d="M1316.5,173.7 L1315.4,173.7 L1314.2,173.7 L1313.1,173.7 L1311.9,173.7 L1310.8,173.7 L1309.6,173.7 L1308.5,173.7 L1307.3,173.7 L1306.2,173.7 L1305.0,173.7 L1303.9,173.7 L1302.7,173.7 L1301.6,173.7 L1300.4,173.7 L1299.3,173.7 L1298.1,173.7 L1297.0,173.7 L1295.8,173.7 L1294.7,173.7 L1293.5,173.7 L1292.3,173.7 L1291.2,173.7 L1290.0,173.7 L1288.9,173.7 L1287.7,173.7 L1286.6,173.7 L1285.4,173.7 L1284.3,173.7 L1283.1,173.7 L1282.0,173.7 L1280.8,173.7 L1279.7,173.7 L1278.5,173.7 L1277.4,173.7 L1276.2,173.7 L1275.1,173.7 L1273.9,173.7 L1272.8,173.7 L1271.6,173.7 L1270.5,173.7 L1269.3,173.7 L1268.2,173.7 L1267.0,173.7 L1265.9,173.7 L1264.7,173.7 L1263.6,173.7 L1262.4,173.7 L1261.3,173.7 L1260.1,173.7 L1259.0,173.7 L1257.8,173.7 L1256.7,173.7 L1255.5,173.7 L1254.4,173.7 L1253.2,173.7 L1252.1,173.7 L1250.9,173.7 L1249.8,173.7 L1248.6,173.7 L1247.5,173.7 L1246.3,173.7 L1245.2,173.7 L1244.0,173.7 L1242.9,173.7 L1241.7,173.7 L1240.6,173.7 L1239.4,173.7 L1238.3,173.7 L1237.1,173.7 L1235.9,173.7 L1234.8,173.7 L1233.6,173.7 L1232.5,173.7 L1231.3,173.7 L1230.2,173.7 L1229.0,173.7 L1227.9,173.7 L1226.7,173.7 L1225.6,173.7 L1224.4,173.7 L1223.3,173.7 L1222.1,173.7 L1221.0,173.7 L1219.8,173.7 L1218.7,173.7 L1217.5,173.7 L1216.4,173.7 L1215.2,173.7 L1214.1,173.7 L1212.9,173.7 L1211.8,173.7 L1210.6,173.7 L1209.5,173.7 L1208.3,173.7 L1207.2,173.7 L1206.0,173.7 L1204.9,173.7 L1203.7,173.7 L1202.6,173.7 L1201.4,173.7 L1200.3,173.7 L1199.1,173.7 L1198.0,173.7 L1196.8,173.7 L1195.7,173.7 L1194.5,173.7 L1193.4,173.7 L1192.2,173.7 L1191.1,173.7 L1189.9,173.7 L1188.8,173.7 L1187.6,173.7 L1186.5,173.7 L1185.3,173.7 L1184.2,173.7 L1183.0,173.7 L1181.8,173.7 L1180.7,173.7 L1179.5,173.7 L1178.4,173.7 L1177.2,173.7 L1176.1,173.7 L1174.9,173.7 L1173.8,173.7 L1172.6,173.7 L1171.5,173.7 L1170.3,173.7 L1169.2,173.7 L1168.0,173.7 L1166.9,173.7 L1165.7,173.7 L1164.6,173.7 L1163.4,173.7 L1162.3,173.7 L1161.1,173.7 L1160.0,173.7 L1158.8,173.7 L1157.7,173.7 L1156.5,173.7 L1155.4,173.7 L1154.2,173.7 L1153.1,173.7 L1151.9,173.7 L1150.8,173.7 L1149.6,173.7 L1148.5,173.7 L1147.3,173.7 L1146.2,173.7 L1145.0,173.7 L1143.9,173.7 L1142.7,173.7 L1141.6,173.7 L1140.4,173.7 L1139.3,173.7 L1138.1,173.7 L1137.0,173.7 L1135.8,173.7 L1134.7,173.7 L1133.5,173.7 L1132.4,173.7 L1131.2,173.7 L1130.1,173.7 L1128.9,173.7 L1127.8,173.7 L1126.6,173.7 L1125.4,173.7 L1124.3,173.7 L1123.1,173.7 L1122.0,173.7 L1120.8,173.7 L1119.7,173.7 L1118.5,173.7 L1117.4,173.7 L1116.2,173.7 L1115.1,173.7 L1113.9,173.7 L1112.8,173.7 L1111.6,173.7 L1110.5,173.7 L1109.3,173.7 L1108.2,173.7 L1107.0,173.7 L1105.9,173.7 L1104.7,173.7 L1103.6,173.7 L1102.4,173.7 L1101.3,173.7 L1100.1,173.7 L1099.0,173.7 L1097.8,173.7 L1096.7,173.7 L1095.5,173.7 L1094.4,173.7 L1093.2,173.7 L1092.1,173.7 L1090.9,173.7 L1089.8,173.7 L1088.6,173.7 L1087.5,173.7 L1086.3,173.7 L1085.2,173.7 L1084.0,173.7 L1082.9,173.7 L1081.7,173.7 L1080.6,173.7 L1079.4,173.7 L1078.3,173.7 L1077.1,173.7 L1076.0,173.7 L1074.8,173.7 L1073.7,173.7 L1072.5,173.7 L1071.4,173.7 L1070.2,173.7 L1069.0,173.7 L1067.9,173.7 L1066.7,173.7 L1065.6,173.7 L1064.4,173.7 L1063.3,173.7 L1062.1,173.7 L1061.0,173.7 L1059.8,173.7 L1058.7,173.7 L1057.5,173.7 L1056.4,173.7 L1055.2,173.7 L1054.1,173.7 L1052.9,173.7 L1051.8,173.7 L1050.6,173.7 L1049.5,173.7 L1048.3,173.7 L1047.2,173.7 L1046.0,173.7 L1044.9,173.7 L1043.7,173.7 L1042.6,173.7 L1041.4,173.7 L1040.3,173.7 L1039.1,173.7 L1038.0,173.7 L1036.8,173.7 L1035.7,173.7 L1034.5,173.7 L1033.4,173.7 L1032.2,173.7 L1031.1,173.7 L1029.9,173.7 L1028.8,173.7 L1027.6,173.7 L1026.5,173.7 L1025.3,173.7 L1024.2,173.7 L1023.0,173.7 L1021.9,173.7 L1020.7,173.7 L1019.6,173.7 L1018.4,173.7 L1017.3,173.7 L1016.1,173.7 L1015.0,173.7 L1013.8,173.7 L1012.6,173.7 L1011.5,173.7 L1010.3,173.7 L1009.2,173.7 L1008.0,173.7 L1006.9,173.7 L1005.7,173.7 L1004.6,173.7 L1003.4,173.7 L1002.3,173.7 L1001.1,173.7 L1000.0,173.7 L998.8,173.7 L997.7,173.7 L996.5,173.7 L995.4,173.7 L994.2,173.7 L993.1,173.7 L991.9,173.7 L990.8,173.7 L989.6,173.7 L988.5,173.7 L987.3,173.7 L986.2,173.7 L985.0,173.7 L983.9,173.7 L982.7,173.7 L981.6,173.7 L980.4,173.7 L979.3,173.7 L978.1,173.7 L977.0,173.7 L975.8,173.7 L974.7,173.7 L973.5,173.7 L972.4,173.7 L971.2,173.7 L970.1,173.7 L968.9,173.7 L967.8,173.7 L966.6,173.7 L965.5,173.7 L964.3,173.7 L963.2,173.7 L962.0,173.7 L960.9,173.7 L959.7,173.7 L958.6,173.7 L957.4,173.7 L956.2,173.7 L955.1,173.7 L953.9,173.7 L952.8,173.7 L951.6,173.7 L950.5,173.7 L949.3,173.7 L948.2,173.7 L947.0,173.7 L945.9,173.7 L944.7,173.7 L943.6,173.7 L942.4,173.7 L941.3,173.7 L940.1,173.7 L939.0,173.7 L937.8,173.7 L936.7,173.7 L935.5,173.7 L934.4,173.7 L933.2,173.7 L932.1,173.7 L930.9,173.7 L929.8,173.7 L928.6,173.7 L927.5,173.7 L926.3,173.7 L925.2,173.7 L924.0,173.7 L922.9,173.7 L921.7,173.7 L920.6,173.7 L919.4,173.7 L918.3,173.7 L917.1,173.7 L916.0,173.7 L914.8,173.7 L913.7,173.7 L912.5,173.7 L911.4,173.7 L910.2,173.7 L909.1,173.7 L907.9,173.7 L906.8,173.7 L905.6,173.7 L904.5,173.7 L903.3,173.7 L902.1,173.7 L901.0,173.7 L899.8,173.7 L898.7,173.7 L897.5,173.7 L896.4,173.7 L895.2,173.7 L894.1,173.7 L892.9,173.7 L891.8,173.7 L890.6,173.7 L889.5,173.7 L888.3,173.7 L887.2,173.7 L886.0,173.7 L884.9,173.7 L883.7,173.7 L882.6,173.7 L881.4,173.7 L880.3,173.7 L879.1,173.7 L878.0,173.7 L876.8,173.7 L875.7,173.7 L874.5,173.7 L873.4,173.7 L872.2,173.7 L871.1,173.7 L869.9,173.7 L868.8,173.7 L867.6,173.7 L866.5,173.7 L865.3,173.7 L864.2,173.7 L863.0,173.7 L861.9,173.7 L860.7,173.7 L859.6,173.7 L858.4,173.7 L857.3,173.7 L856.1,173.7 L855.0,173.7 L853.8,173.7 L852.7,173.7 L851.5,173.7 L850.4,173.7 L849.2,173.7 L848.1,173.7 L846.9,173.7 L845.7,173.7 L844.6,173.7 L843.4,173.7 L842.3,173.7 L841.1,173.7 L840.0,173.7 L838.8,173.7 L837.7,173.7 L836.5,173.7 L835.4,173.7 L834.2,173.7 L833.1,173.7 L831.9,173.7 L830.8,173.7 L829.6,173.7 L828.5,173.7 L827.3,173.7 L826.2,173.7 L825.0,173.7 L823.9,173.7 L822.7,173.7 L821.6,173.7 L820.4,173.7 L819.3,173.7 L818.1,173.7 L817.0,173.7 L815.8,173.7 L814.7,173.7 L813.5,173.7 L812.4,173.7 L811.2,173.7 L810.1,173.7 L808.9,173.7 L807.8,173.7 L806.6,173.7 L805.5,173.7 L804.3,173.7 L803.2,173.7 L802.0,173.7 L800.9,173.7 L799.7,173.7 L798.6,173.7 L797.4,173.7 L796.3,173.7 L795.1,173.7 L794.0,173.7 L792.8,173.7 L791.7,173.7 L790.5,173.7 L789.3,173.7 L788.2,173.7 L787.0,173.7 L785.9,173.7 L784.7,173.7 L783.6,173.7 L782.4,173.7 L781.3,173.7 L780.1,173.7 L779.0,173.7 L777.8,173.7 L776.7,173.7 L775.5,173.7 L774.4,173.7 L773.2,173.7 L772.1,173.7 L770.9,173.7 L769.8,173.7 L768.6,173.7 L767.5,173.7 L766.3,173.7 L765.2,173.7 L764.0,173.7 L762.9,173.7 L761.7,173.7 L760.6,173.7 L759.4,173.7 L758.3,173.7 L757.1,173.7 L756.0,173.7 L754.8,173.7 L753.7,173.7 L752.5,173.7 L751.4,173.7 L750.2,173.7 L749.1,173.7 L747.9,173.7 L746.8,173.7 L745.6,173.7 L744.5,173.7 L743.3,173.7 L742.2,173.7 L741.0,173.7 L739.9,173.7 L738.7,173.7 L737.6,173.7 L736.4,173.7 L735.3,173.7 L734.1,173.7 L732.9,173.7 L731.8,173.7 L730.6,173.7 L729.5,173.7 L728.3,173.7 L727.2,173.7 L726.0,173.7 L724.9,173.7 L723.7,173.7 L722.6,173.7 L721.4,173.7 L720.3,173.7 L719.1,173.7 L718.0,173.7 L716.8,173.7 L715.7,173.7 L714.5,173.7 L713.4,173.7 L712.2,173.7 L711.1,173.7 L709.9,173.7 L708.8,173.7 L707.6,173.7 L706.5,173.7 L705.3,173.7 L704.2,173.7 L703.0,173.7 L701.9,173.7 L700.7,173.7 L699.6,173.7 L698.4,173.7 L697.3,173.7 L696.1,173.7 L695.0,173.7 L693.8,173.7 L692.7,173.7 L691.5,173.7 L690.4,173.7 L689.2,173.7 L688.1,173.7 L686.9,173.7 L685.8,173.7 L684.6,173.7 L683.5,173.7 L682.3,173.7 L681.2,173.7 L680.0,173.7 L678.9,173.7 L677.7,173.7 L676.5,173.7 L675.4,173.7 L674.2,173.7 L673.1,173.7 L671.9,173.7 L670.8,173.7 L669.6,173.7 L668.5,173.7 L667.3,173.7 L666.2,173.7 L665.0,173.7 L663.9,173.7 L662.7,173.7 L661.6,173.7 L660.4,173.7 L659.3,173.7 L658.1,173.7 L657.0,173.7 L655.8,173.7 L654.7,173.7 L653.5,173.7 L652.4,173.7 L651.2,173.7 L650.1,173.7 L648.9,173.7 L647.8,173.7 L646.6,173.7 L645.5,173.7 L644.3,173.7 L643.2,173.7 L642.0,173.7 L640.9,173.7 L639.7,173.7 L638.6,173.7 L637.4,173.7 L636.3,173.7 L635.1,173.7 L634.0,173.7 L632.8,173.7 L631.7,173.7 L630.5,173.7 L629.4,173.7 L628.2,173.7 L627.1,173.7 L625.9,173.7 L624.8,173.7 L623.6,173.7 L622.5,173.7 L621.3,173.7 L620.1,173.7 L619.0,173.7 L617.8,173.7 L616.7,173.7 L615.5,173.7 L614.4,173.7 L613.2,173.7 L612.1,173.7 L610.9,173.7 L609.8,173.7 L608.6,173.7 L607.5,173.7 L606.3,173.7 L605.2,173.7 L604.0,173.7 L602.9,173.7 L601.7,173.7 L600.6,173.7 L599.4,173.7 L598.3,173.7 L597.1,173.7 L596.0,173.7 L594.8,173.7 L593.7,173.7 L592.5,173.7 L591.4,173.7 L590.2,173.7 L589.1,173.7 L587.9,173.7 L586.8,173.7 L585.6,173.7 L584.5,173.7 L583.3,173.7 L582.2,173.7 L581.0,173.7 L579.9,173.7 L578.7,173.7 L577.6,173.7 L576.4,173.7 L575.3,173.7 L574.1,173.7 L573.0,173.7 L571.8,173.7 L570.7,173.7 L569.5,173.7 L568.4,173.7 L567.2,173.7 L566.0,173.7 L564.9,173.7 L563.7,173.7 L562.6,173.7 L561.4,173.7 L560.3,173.7 L559.1,173.7 L558.0,173.7 L556.8,173.7 L555.7,173.7 L554.5,173.7 L553.4,173.7 L552.2,173.7 L551.1,173.7 L549.9,173.7 L548.8,173.7 L547.6,173.7 L546.5,173.7 L545.3,173.7 L544.2,173.7 L543.0,173.7 L541.9,173.7 L540.7,173.7 L539.6,173.7 L538.4,173.7 L537.3,173.7 L536.1,173.7 L535.0,173.7 L533.8,173.7 L532.7,173.7 L531.5,173.7 L530.4,173.7 L529.2,173.7 L528.1,173.7 L526.9,173.7 L525.8,173.7 L524.6,173.7 L523.5,173.7 L522.3,173.7 L521.2,173.7 L520.0,173.7 L518.9,173.7 L517.7,173.7 L516.6,173.7 L515.4,173.7 L514.3,173.7 L513.1,173.7 L512.0,173.7 L510.8,173.7 L509.6,173.7 L508.5,173.7 L507.3,173.7 L506.2,173.7 L505.0,173.7 L503.9,173.7 L502.7,173.7 L501.6,173.7 L500.4,173.7 L499.3,173.7 L498.1,173.7 L497.0,173.7 L495.8,173.7 L494.7,173.7 L493.5,173.7 L492.4,173.7 L491.2,173.7 L490.1,173.7 L488.9,173.7 L487.8,173.7"/>
<path d="M1195.2,124.9 L1194.3,124.9 L1193.5,124.9 L1192.7,124.9 L1191.9,124.9 L1191.1,124.9 L1190.3,124.9 L1189.5,124.9 L1188.6,124.9 L1187.8,124.9 L1187.0,124.9 L1186.2,124.9 L1185.4,124.9 L1184.6,124.9 L1183.8,124.9 L1182.9,124.9 L1182.1,124.9 L1181.3,124.9 L1180.5,124.9 L1179.7,124.9 L1178.9,124.9 L1178.1,124.9 L1177.2,124.9 L1176.4,124.9 L1175.6,124.9 L1174.8,124.9 L1174.0,124.9 L1173.2,124.9 L1172.4,124.9 L1171.6,124.9 L1170.7,124.9 L1169.9,124.9 L1169.1,124.9 L1168.3,124.9 L1167.5,124.9 L1166.7,124.9 L1165.9,124.9 L1165.0,124.9 L1164.2,124.9 L1163.4,124.9 L1162.6,124.9 L1161.8,124.9 L1161.0,124.9 L1160.2,124.9 L1159.3,124.9 L1158.5,124.9 L1157.7,124.9 L1156.9,124.9 L1156.1,124.9 L1155.3,124.9 L1154.5,124.9 L1153.6,124.9 L1152.8,124.9 L1152.0,124.9 L1151.2,124.9 L1150.4,124.9 L1149.6,124.9 L1148.8,124.9 L1147.9,124.9 L1147.1,124.9 L1146.3,124.9 L1145.5,124.9 L1144.7,124.9 L1143.9,124.9 L1143.1,124.9 L1142.3,124.9 L1141.4,124.9 L1140.6,124.9 L1139.8,124.9 L1139.0,124.9 L1138.2,124.9 L1137.4,124.9 L1136.6,124.9 L1135.7,124.9 L1134.9,124.9 L1134.1,124.9 L1133.3,124.9 L1132.5,124.9 L1131.7,124.9 L1130.9,124.9 L1130.0,124.9 L1129.2,124.9 L1128.4,124.9 L1127.6,124.9 L1126.8,124.9 L1126.0,124.9 L1125.2,124.9 L1124.3,124.9 L1123.5,124.9 L1122.7,124.9 L1121.9,124.9 L1121.1,124.9 L1120.3,124.9 L1119.5,124.9 L1118.6,124.9 L1117.8,124.9 L1117.0,124.9 L1116.2,124.9 L1115.4,124.9 L1114.6,124.9 L1113.8,124.9 L1113.0,124.9 L1112.1,124.9 L1111.3,124.9 L1110.5,124.9 L1109.7,124.9 L1108.9,124.9 L1108.1,124.9 L1107.3,124.9 L1106.4,124.9 L1105.6,124.9 L1104.8,124.9 L1104.0,124.9 L1103.2,124.9 L1102.4,124.9 L1101.6,124.9 L1100.7,124.9 L1099.9,124.9 L1099.1,124.9 L1098.3,124.9 L1097.5,124.9 L1096.7,124.9 L1095.9,124.9 L1095.0,124.9 L1094.2,124.9 L1093.4,124.9 L1092.6,124.9 L1091.8,124.9 L1091.0,124.9 L1090.2,124.9 L1089.3,124.9 L1088.5,124.9 L1087.7,124.9 L1086.9,124.9 L1086.1,124.9 L1085.3,124.9 L1084.5,124.9 L1083.6,124.9 L1082.8,124.9 L1082.0,124.9 L1081.2,124.9 L1080.4,124.9 L1079.6,124.9 L1078.8,124.9 L1078.0,124.9 L1077.1,124.9 L1076.3,124.9 L1075.5,124.9 L1074.7,124.9 L1073.9,124.9 L1073.1,124.9 L1072.3,124.9 L1071.4,124.9 L1070.6,124.9 L1069.8,124.9 L1069.0,124.9 L1068.2,124.9 L1067.4,124.9 L1066.6,124.9 L1065.7,124.9 L1064.9,124.9 L1064.1,124.9 L1063.3,124.9 L1062.5,124.9 L1061.7,124.9 L1060.9,124.9 L1060.0,124.9 L1059.2,124.9 L1058.4,124.9 L1057.6,124.9 L1056.8,124.9 L1056.0,124.9 L1055.2,124.9 L1054.3,124.9 L1053.5,124.9 L1052.7,124.9 L1051.9,124.9 L1051.1,124.9 L1050.3,124.9 L1049.5,124.9 L1048.7,124.9 L1047.8,124.9 L1047.0,124.9 L1046.2,124.9 L1045.4,124.9 L1044.6,124.9 L1043.8,124.9 L1043.0,124.9 L1042.1,124.9 L1041.3,124.9 L1040.5,124.9 L1039.7,124.9 L1038.9,124.9 L1038.1,124.9 L1037.3,124.9 L1036.4,124.9 L1035.6,124.9 L1034.8,124.9 L1034.0,124.9 L1033.2,124.9 L1032.4,124.9 L1031.6,124.9 L1030.7,124.9 L1029.9,124.9 L1029.1,124.9 L1028.3,124.9 L1027.5,124.9 L1026.7,124.9 L1025.9,124.9 L1025.0,124.9 L1024.2,124.9 L1023.4,124.9 L1022.6,124.9 L1021.8,124.9 L1021.0,124.9 L1020.2,124.9 L1019.4,124.9 L1018.5,124.9 L1017.7,124.9 L1016.9,124.9 L1016.1,124.9 L1015.3,124.9 L1014.5,124.9 L1013.7,124.9 L1012.8,124.9 L1012.0,124.9 L1011.2,124.9 L1010.4,124.9 L1009.6,124.9 L1008.8,124.9 L1008.0,124.9 L1007.1,124.9 L1006.3,124.9 L1005.5,124.9 L1004.7,124.9 L1003.9,124.9 L1003.1,124.9 L1002.3,124.9 L1001.4,124.9 L1000.6,124.9 L999.8,124.9 L999.0,124.9 L998.2,124.9 L997.4,124.9 L996.6,124.9 L995.7,124.9 L994.9,124.9 L994.1,124.9 L993.3,124.9 L992.5,124.9 L991.7,124.9 L990.9,124.9 L990.1,124.9 L989.2,124.9 L988.4,124.9 L987.6,124.9 L986.8,124.9 L986.0,124.9 L985.2,124.9 L984.4,124.9 L983.5,124.9 L982.7,124.9 L981.9,124.9 L981.1,124.9 L980.3,124.9 L979.5,124.9 L978.7,124.9 L977.8,124.9 L977.0,124.9 L976.2,124.9 L975.4,124.9 L974.6,124.9 L973.8,124.9 L973.0,124.9 L972.1,124.9 L971.3,124.9 L970.5,124.9 L969.7,124.9 L968.9,124.9 L968.1,124.9 L967.3,124.9 L966.4,124.9 L965.6,124.9 L964.8,124.9 L964.0,124.9 L963.2,124.9 L962.4,124.9 L961.6,124.9 L960.8,124.9 L959.9,124.9 L959.1,124.9 L958.3,124.9 L957.5,124.9 L956.7,124.9 L955.9,124.9 L955.1,124.9 L954.2,124.9 L953.4,124.9 L952.6,124.9 L951.8,124.9 L951.0,124.9 L950.2,124.9 L949.4,124.9 L948.5,124.9 L947.7,124.9 L946.9,124.9 L946.1,124.9 L945.3,124.9 L944.5,124.9 L943.7,124.9 L942.8,124.9 L942.0,124.9 L941.2,124.9 L940.4,124.9 L939.6,124.9 L938.8,124.9 L938.0,124.9 L937.1,124.9 L936.3,124.9 L935.5,124.9 L934.7,124.9 L933.9,124.9 L933.1,124.9 L932.3,124.9 L931.5,124.9 L930.6,124.9 L929.8,124.9 L929.0,124.9 L928.2,124.9 L927.4,124.9 L926.6,124.9 L925.8,124.9 L924.9,124.9 L924.1,124.9 L923.3,124.9 L922.5,124.9 L921.7,124.9 L920.9,124.9 L920.1,124.9 L919.2,124.9 L918.4,124.9 L917.6,124.9 L916.8,124.9 L916.0,124.9 L915.2,124.9 L914.4,124.9 L913.5,124.9 L912.7,124.9 L911.9,124.9 L911.1,124.9 L910.3,124.9 L909.5,124.9 L908.7,124.9 L907.8,124.9 L907.0,124.9 L906.2,124.9 L905.4,124.9 L904.6,124.9 L903.8,124.9 L903.0,124.9 L902.1,124.9 L901.3,124.9 L900.5,124.9 L899.7,124.9 L898.9,124.9 L898.1,124.9 L897.3,124.9 L896.5,124.9 L895.6,124.9 L894.8,124.9 L894.0,124.9 L893.2,124.9 L892.4,124.9 L891.6,124.9 L890.8,124.9 L889.9,124.9 L889.1,124.9 L888.3,124.9 L887.5,124.9 L886.7,124.9 L885.9,124.9 L885.1,124.9 L884.2,124.9 L883.4,124.9 L882.6,124.9 L881.8,124.9 L881.0,124.9 L880.2,124.9 L879.4,124.9 L878.5,124.9 L877.7,124.9 L876.9,124.9 L876.1,124.9 L875.3,124.9 L874.5,124.9 L873.7,124.9 L872.8,124.9 L872.0,124.9 L871.2,124.9 L870.4,124.9 L869.6,124.9 L868.8,124.9 L868.0,124.9 L867.2,124.9 L866.3,124.9 L865.5,124.9 L864.7,124.9 L863.9,124.9 L863.1,124.9 L862.3,124.9 L861.5,124.9 L860.6,124.9 L859.8,124.9 L859.0,124.9 L858.2,124.9 L857.4,124.9 L856.6,124.9 L855.8,124.9 L854.9,124.9 L854.1,124.9 L853.3,124.9 L852.5,124.9 L851.7,124.9 L850.9,124.9 L850.1,124.9 L849.2,124.9 L848.4,124.9 L847.6,124.9 L846.8,124.9 L846.0,124.9 L845.2,124.9 L844.4,124.9 L843.5,124.9 L842.7,124.9 L841.9,124.9 L841.1,124.9 L840.3,124.9 L839.5,124.9 L838.7,124.9 L837.9,124.9 L837.0,124.9 L836.2,124.9 L835.4,124.9 L834.6,124.9 L833.8,124.9 L833.0,124.9 L832.2,124.9 L831.3,124.9 L830.5,124.9 L829.7,124.9 L828.9,124.9 L828.1,124.9 L827.3,124.9 L826.5,124.9 L825.6,124.9 L824.8,124.9 L824.0,124.9 L823.2,124.9 L822.4,124.9 L821.6,124.9 L820.8,124.9 L819.9,124.9 L819.1,124.9 L818.3,124.9 L817.5,124.9 L816.7,124.9 L815.9,124.9 L815.1,124.9 L814.2,124.9 L813.4,124.9 L812.6,124.9 L811.8,124.9 L811.0,124.9 L810.2,124.9 L809.4,124.9 L808.6,124.9 L807.7,124.9 L806.9,124.9 L806.1,124.9 L805.3,124.9 L804.5,124.9 L803.7,124.9 L802.9,124.9 L802.0,124.9 L801.2,124.9 L800.4,124.9 L799.6,124.9 L798.8,124.9 L798.0,124.9 L797.2,124.9 L796.3,124.9 L795.5,124.9 L794.7,124.9 L793.9,124.9 L793.1,124.9 L792.3,124.9 L791.5,124.9 L790.6,124.9 L789.8,124.9 L789.0,124.9 L788.2,124.9 L787.4,124.9 L786.6,124.9 L785.8,124.9 L784.9,124.9 L784.1,124.9 L783.3,124.9 L782.5,124.9 L781.7,124.9 L780.9,124.9 L780.1,124.9 L779.3,124.9 L778.4,124.9 L777.6,124.9 L776.8,124.9 L776.0,124.9 L775.2,124.9 L774.4,124.9 L773.6,124.9 L772.7,124.9 L771.9,124.9 L771.1,124.9 L770.3,124.9 L769.5,124.9 L768.7,124.9 L767.9,124.9 L767.0,124.9 L766.2,124.9 L765.4,124.9 L764.6,124.9 L763.8,124.9 L763.0,124.9 L762.2,124.9 L761.3,124.9 L760.5,124.9 L759.7,124.9 L758.9,124.9 L758.1,124.9 L757.3,124.9 L756.5,124.9 L755.6,124.9 L754.8,124.9 L754.0,124.9 L753.2,124.9 L752.4,124.9 L751.6,124.9 L750.8,124.9 L750.0,124.9 L749.1,124.9 L748.3,124.9 L747.5,124.9 L746.7,124.9 L745.9,124.9 L745.1,124.9 L744.3,124.9 L743.4,124.9 L742.6,124.9 L741.8,124.9 L741.0,124.9 L740.2,124.9 L739.4,124.9 L738.6,124.9 L737.7,124.9 L736.9,124.9 L736.1,124.9 L735.3,124.9 L734.5,124.9 L733.7,124.9 L732.9,124.9 L732.0,124.9 L731.2,124.9 L730.4,124.9 L729.6,124.9 L728.8,124.9 L728.0,124.9 L727.2,124.9 L726.3,124.9 L725.5,124.9 L724.7,124.9 L723.9,124.9 L723.1,124.9 L722.3,124.9 L721.5,124.9 L720.7,124.9 L719.8,124.9 L719.0,124.9 L718.2,124.9 L717.4,124.9 L716.6,124.9 L715.8,124.9 L715.0,124.9 L714.1,124.9 L713.3,124.9 L712.5,124.9 L711.7,124.9 L710.9,124.9 L710.1,124.9 L709.3,124.9 L708.4,124.9 L707.6,124.9 L706.8,124.9 L706.0,124.9 L705.2,124.9 L704.4,124.9 L703.6,124.9 L702.7,124.9 L701.9,124.9 L701.1,124.9 L700.3,124.9 L699.5,124.9 L698.7,124.9 L697.9,124.9 L697.0,124.9 L696.2,124.9 L695.4,124.9 L694.6,124.9 L693.8,124.9 L693.0,124.9 L692.2,124.9 L691.3,124.9 L690.5,124.9 L689.7,124.9 L688.9,124.9 L688.1,124.9 L687.3,124.9 L686.5,124.9 L685.7,124.9 L684.8,124.9 L684.0,124.9 L683.2,124.9 L682.4,124.9 L681.6,124.9 L680.8,124.9 L680.0,124.9 L679.1,124.9 L678.3,124.9 L677.5,124.9 L676.7,124.9 L675.9,124.9 L675.1,124.9 L674.3,124.9 L673.4,124.9 L672.6,124.9 L671.8,124.9 L671.0,124.9 L670.2,124.9 L669.4,124.9 L668.6,124.9 L667.7,124.9 L666.9,124.9 L666.1,124.9 L665.3,124.9 L664.5,124.9 L663.7,124.9 L662.9,124.9 L662.0,124.9 L661.2,124.9 L660.4,124.9 L659.6,124.9 L658.8,124.9 L658.0,124.9 L657.2,124.9 L656.4,124.9 L655.5,124.9 L654.7,124.9 L653.9,124.9 L653.1,124.9 L652.3,124.9 L651.5,124.9 L650.7,124.9 L649.8,124.9 L649.0,124.9 L648.2,124.9 L647.4,124.9 L646.6,124.9 L645.8,124.9 L645.0,124.9 L644.1,124.9 L643.3,124.9 L642.5,124.9 L641.7,124.9 L640.9,124.9 L640.1,124.9 L639.3,124.9 L638.4,124.9 L637.6,124.9 L636.8,124.9 L636.0,124.9 L635.2,124.9 L634.4,124.9 L633.6,124.9 L632.7,124.9 L631.9,124.9 L631.1,124.9 L630.3,124.9 L629.5,124.9 L628.7,124.9 L627.9,124.9 L627.1,124.9 L626.2,124.9 L625.4,124.9 L624.6,124.9 L623.8,124.9 L623.0,124.9 L622.2,124.9 L621.4,124.9 L620.5,124.9 L619.7,124.9 L618.9,124.9 L618.1,124.9 L617.3,124.9 L616.5,124.9 L615.7,124.9 L614.8,124.9 L614.0,124.9 L613.2,124.9 L612.4,124.9 L611.6,124.9 L610.8,124.9 L610.0,124.9 L609.1,124.9"/>
<path d="M1053.8,76.0 L1053.4,76.0 L1053.0,76.0 L1052.6,76.0 L1052.1,76.0 L1051.7,76.0 L1051.3,76.0 L1050.9,76.0 L1050.4,76.0 L1050.0,76.0 L1049.6,76.0 L1049.2,76.0 L1048.8,76.0 L1048.3,76.0 L1047.9,76.0 L1047.5,76.0 L1047.1,76.0 L1046.7,76.0 L1046.2,76.0 L1045.8,76.0 L1045.4,76.0 L1045.0,76.0 L1044.6,76.0 L1044.1,76.0 L1043.7,76.0 L1043.3,76.0 L1042.9,76.0 L1042.4,76.0 L1042.0,76.0 L1041.6,76.0 L1041.2,76.0 L1040.8,76.0 L1040.3,76.0 L1039.9,76.0 L1039.5,76.0 L1039.1,76.0 L1038.7,76.0 L1038.2,76.0 L1037.8,76.0 L1037.4,76.0 L1037.0,76.0 L1036.5,76.0 L1036.1,76.0 L1035.7,76.0 L1035.3,76.0 L1034.9,76.0 L1034.4,76.0 L1034.0,76.0 L1033.6,76.0 L1033.2,76.0 L1032.8,76.0 L1032.3,76.0 L1031.9,76.0 L1031.5,76.0 L1031.1,76.0 L1030.6,76.0 L1030.2,76.0 L1029.8,76.0 L1029.4,76.0 L1029.0,76.0 L1028.5,76.0 L1028.1,76.0 L1027.7,76.0 L1027.3,76.0 L1026.9,76.0 L1026.4,76.0 L1026.0,76.0 L1025.6,76.0 L1025.2,76.0 L1024.7,76.0 L1024.3,76.0 L1023.9,76.0 L1023.5,76.0 L1023.1,76.0 L1022.6,76.0 L1022.2,76.0 L1021.8,76.0 L1021.4,76.0 L1021.0,76.0 L1020.5,76.0 L1020.1,76.0 L1019.7,76.0 L1019.3,76.0 L1018.9,76.0 L1018.4,76.0 L1018.0,76.0 L1017.6,76.0 L1017.2,76.0 L1016.7,76.0 L1016.3,76.0 L1015.9,76.0 L1015.5,76.0 L1015.1,76.0 L1014.6,76.0 L1014.2,76.0 L1013.8,76.0 L1013.4,76.0 L1013.0,76.0 L1012.5,76.0 L1012.1,76.0 L1011.7,76.0 L1011.3,76.0 L1010.8,76.0 L1010.4,76.0 L1010.0,76.0 L1009.6,76.0 L1009.2,76.0 L1008.7,76.0 L1008.3,76.0 L1007.9,76.0 L1007.5,76.0 L1007.1,76.0 L1006.6,76.0 L1006.2,76.0 L1005.8,76.0 L1005.4,76.0 L1004.9,76.0 L1004.5,76.0 L1004.1,76.0 L1003.7,76.0 L1003.3,76.0 L1002.8,76.0 L1002.4,76.0 L1002.0,76.0 L1001.6,76.0 L1001.2,76.0 L1000.7,76.0 L1000.3,76.0 L999.9,76.0 L999.5,76.0 L999.1,76.0 L998.6,76.0 L998.2,76.0 L997.8,76.0 L997.4,76.0 L996.9,76.0 L996.5,76.0 L996.1,76.0 L995.7,76.0 L995.3,76.0 L994.8,76.0 L994.4,76.0 L994.0,76.0 L993.6,76.0 L993.2,76.0 L992.7,76.0 L992.3,76.0 L991.9,76.0 L991.5,76.0 L991.0,76.0 L990.6,76.0 L990.2,76.0 L989.8,76.0 L989.4,76.0 L988.9,76.0 L988.5,76.0 L988.1,76.0 L987.7,76.0 L987.3,76.0 L986.8,76.0 L986.4,76.0 L986.0,76.0 L985.6,76.0 L985.1,76.0 L984.7,76.0 L984.3,76.0 L983.9,76.0 L983.5,76.0 L983.0,76.0 L982.6,76.0 L982.2,76.0 L981.8,76.0 L981.4,76.0 L980.9,76.0 L980.5,76.0 L980.1,76.0 L979.7,76.0 L979.2,76.0 L978.8,76.0 L978.4,76.0 L978.0,76.0 L977.6,76.0 L977.1,76.0 L976.7,76.0 L976.3,76.0 L975.9,76.0 L975.5,76.0 L975.0,76.0 L974.6,76.0 L974.2,76.0 L973.8,76.0 L973.4,76.0 L972.9,76.0 L972.5,76.0 L972.1,76.0 L971.7,76.0 L971.2,76.0 L970.8,76.0 L970.4,76.0 L970.0,76.0 L969.6,76.0 L969.1,76.0 L968.7,76.0 L968.3,76.0 L967.9,76.0 L967.5,76.0 L967.0,76.0 L966.6,76.0 L966.2,76.0 L965.8,76.0 L965.3,76.0 L964.9,76.0 L964.5,76.0 L964.1,76.0 L963.7,76.0 L963.2,76.0 L962.8,76.0 L962.4,76.0 L962.0,76.0 L961.6,76.0 L961.1,76.0 L960.7,76.0 L960.3,76.0 L959.9,76.0 L959.4,76.0 L959.0,76.0 L958.6,76.0 L958.2,76.0 L957.8,76.0 L957.3,76.0 L956.9,76.0 L956.5,76.0 L956.1,76.0 L955.7,76.0 L955.2,76.0 L954.8,76.0 L954.4,76.0 L954.0,76.0 L953.5,76.0 L953.1,76.0 L952.7,76.0 L952.3,76.0 L951.9,76.0 L951.4,76.0 L951.0,76.0 L950.6,76.0 L950.2,76.0 L949.8,76.0 L949.3,76.0 L948.9,76.0 L948.5,76.0 L948.1,76.0 L947.7,76.0 L947.2,76.0 L946.8,76.0 L946.4,76.0 L946.0,76.0 L945.5,76.0 L945.1,76.0 L944.7,76.0 L944.3,76.0 L943.9,76.0 L943.4,76.0 L943.0,76.0 L942.6,76.0 L942.2,76.0 L941.8,76.0 L941.3,76.0 L940.9,76.0 L940.5,76.0 L940.1,76.0 L939.6,76.0 L939.2,76.0 L938.8,76.0 L938.4,76.0 L938.0,76.0 L937.5,76.0 L937.1,76.0 L936.7,76.0 L936.3,76.0 L935.9,76.0 L935.4,76.0 L935.0,76.0 L934.6,76.0 L934.2,76.0 L933.7,76.0 L933.3,76.0 L932.9,76.0 L932.5,76.0 L932.1,76.0 L931.6,76.0 L931.2,76.0 L930.8,76.0 L930.4,76.0 L930.0,76.0 L929.5,76.0 L929.1,76.0 L928.7,76.0 L928.3,76.0 L927.8,76.0 L927.4,76.0 L927.0,76.0 L926.6,76.0 L926.2,76.0 L925.7,76.0 L925.3,76.0 L924.9,76.0 L924.5,76.0 L924.1,76.0 L923.6,76.0 L923.2,76.0 L922.8,76.0 L922.4,76.0 L922.0,76.0 L921.5,76.0 L921.1,76.0 L920.7,76.0 L920.3,76.0 L919.8,76.0 L919.4,76.0 L919.0,76.0 L918.6,76.0 L918.2,76.0 L917.7,76.0 L917.3,76.0 L916.9,76.0 L916.5,76.0 L916.1,76.0 L915.6,76.0 L915.2,76.0 L914.8,76.0 L914.4,76.0 L913.9,76.0 L913.5,76.0 L913.1,76.0 L912.7,76.0 L912.3,76.0 L911.8,76.0 L911.4,76.0 L911.0,76.0 L910.6,76.0 L910.2,76.0 L909.7,76.0 L909.3,76.0 L908.9,76.0 L908.5,76.0 L908.0,76.0 L907.6,76.0 L907.2,76.0 L906.8,76.0 L906.4,76.0 L905.9,76.0 L905.5,76.0 L905.1,76.0 L904.7,76.0 L904.3,76.0 L903.8,76.0 L903.4,76.0 L903.0,76.0 L902.6,76.0 L902.1,76.0 L901.7,76.0 L901.3,76.0 L900.9,76.0 L900.5,76.0 L900.0,76.0 L899.6,76.0 L899.2,76.0 L898.8,76.0 L898.4,76.0 L897.9,76.0 L897.5,76.0 L897.1,76.0 L896.7,76.0 L896.3,76.0 L895.8,76.0 L895.4,76.0 L895.0,76.0 L894.6,76.0 L894.1,76.0 L893.7,76.0 L893.3,76.0 L892.9,76.0 L892.5,76.0 L892.0,76.0 L891.6,76.0 L891.2,76.0 L890.8,76.0 L890.4,76.0 L889.9,76.0 L889.5,76.0 L889.1,76.0 L888.7,76.0 L888.2,76.0 L887.8,76.0 L887.4,76.0 L887.0,76.0 L886.6,76.0 L886.1,76.0 L885.7,76.0 L885.3,76.0 L884.9,76.0 L884.5,76.0 L884.0,76.0 L883.6,76.0 L883.2,76.0 L882.8,76.0 L882.3,76.0 L881.9,76.0 L881.5,76.0 L881.1,76.0 L880.7,76.0 L880.2,76.0 L879.8,76.0 L879.4,76.0 L879.0,76.0 L878.6,76.0 L878.1,76.0 L877.7,76.0 L877.3,76.0 L876.9,76.0 L876.5,76.0 L876.0,76.0 L875.6,76.0 L875.2,76.0 L874.8,76.0 L874.3,76.0 L873.9,76.0 L873.5,76.0 L873.1,76.0 L872.7,76.0 L872.2,76.0 L871.8,76.0 L871.4,76.0 L871.0,76.0 L870.6,76.0 L870.1,76.0 L869.7,76.0 L869.3,76.0 L868.9,76.0 L868.4,76.0 L868.0,76.0 L867.6,76.0 L867.2,76.0 L866.8,76.0 L866.3,76.0 L865.9,76.0 L865.5,76.0 L865.1,76.0 L864.7,76.0 L864.2,76.0 L863.8,76.0 L863.4,76.0 L863.0,76.0 L862.5,76.0 L862.1,76.0 L861.7,76.0 L861.3,76.0 L860.9,76.0 L860.4,76.0 L860.0,76.0 L859.6,76.0 L859.2,76.0 L858.8,76.0 L858.3,76.0 L857.9,76.0 L857.5,76.0 L857.1,76.0 L856.6,76.0 L856.2,76.0 L855.8,76.0 L855.4,76.0 L855.0,76.0 L854.5,76.0 L854.1,76.0 L853.7,76.0 L853.3,76.0 L852.9,76.0 L852.4,76.0 L852.0,76.0 L851.6,76.0 L851.2,76.0 L850.8,76.0 L850.3,76.0 L849.9,76.0 L849.5,76.0 L849.1,76.0 L848.6,76.0 L848.2,76.0 L847.8,76.0 L847.4,76.0 L847.0,76.0 L846.5,76.0 L846.1,76.0 L845.7,76.0 L845.3,76.0 L844.9,76.0 L844.4,76.0 L844.0,76.0 L843.6,76.0 L843.2,76.0 L842.7,76.0 L842.3,76.0 L841.9,76.0 L841.5,76.0 L841.1,76.0 L840.6,76.0 L840.2,76.0 L839.8,76.0 L839.4,76.0 L839.0,76.0 L838.5,76.0 L838.1,76.0 L837.7,76.0 L837.3,76.0 L836.8,76.0 L836.4,76.0 L836.0,76.0 L835.6,76.0 L835.2,76.0 L834.7,76.0 L834.3,76.0 L833.9,76.0 L833.5,76.0 L833.1,76.0 L832.6,76.0 L832.2,76.0 L831.8,76.0 L831.4,76.0 L830.9,76.0 L830.5,76.0 L830.1,76.0 L829.7,76.0 L829.3,76.0 L828.8,76.0 L828.4,76.0 L828.0,76.0 L827.6,76.0 L827.2,76.0 L826.7,76.0 L826.3,76.0 L825.9,76.0 L825.5,76.0 L825.1,76.0 L824.6,76.0 L824.2,76.0 L823.8,76.0 L823.4,76.0 L822.9,76.0 L822.5,76.0 L822.1,76.0 L821.7,76.0 L821.3,76.0 L820.8,76.0 L820.4,76.0 L820.0,76.0 L819.6,76.0 L819.2,76.0 L818.7,76.0 L818.3,76.0 L817.9,76.0 L817.5,76.0 L817.0,76.0 L816.6,76.0 L816.2,76.0 L815.8,76.0 L815.4,76.0 L814.9,76.0 L814.5,76.0 L814.1,76.0 L813.7,76.0 L813.3,76.0 L812.8,76.0 L812.4,76.0 L812.0,76.0 L811.6,76.0 L811.1,76.0 L810.7,76.0 L810.3,76.0 L809.9,76.0 L809.5,76.0 L809.0,76.0 L808.6,76.0 L808.2,76.0 L807.8,76.0 L807.4,76.0 L806.9,76.0 L806.5,76.0 L806.1,76.0 L805.7,76.0 L805.2,76.0 L804.8,76.0 L804.4,76.0 L804.0,76.0 L803.6,76.0 L803.1,76.0 L802.7,76.0 L802.3,76.0 L801.9,76.0 L801.5,76.0 L801.0,76.0 L800.6,76.0 L800.2,76.0 L799.8,76.0 L799.4,76.0 L798.9,76.0 L798.5,76.0 L798.1,76.0 L797.7,76.0 L797.2,76.0 L796.8,76.0 L796.4,76.0 L796.0,76.0 L795.6,76.0 L795.1,76.0 L794.7,76.0 L794.3,76.0 L793.9,76.0 L793.5,76.0 L793.0,76.0 L792.6,76.0 L792.2,76.0 L791.8,76.0 L791.3,76.0 L790.9,76.0 L790.5,76.0 L790.1,76.0 L789.7,76.0 L789.2,76.0 L788.8,76.0 L788.4,76.0 L788.0,76.0 L787.6,76.0 L787.1,76.0 L786.7,76.0 L786.3,76.0 L785.9,76.0 L785.4,76.0 L785.0,76.0 L784.6,76.0 L784.2,76.0 L783.8,76.0 L783.3,76.0 L782.9,76.0 L782.5,76.0 L782.1,76.0 L781.7,76.0 L781.2,76.0 L780.8,76.0 L780.4,76.0 L780.0,76.0 L779.6,76.0 L779.1,76.0 L778.7,76.0 L778.3,76.0 L777.9,76.0 L777.4,76.0 L777.0,76.0 L776.6,76.0 L776.2,76.0 L775.8,76.0 L775.3,76.0 L774.9,76.0 L774.5,76.0 L774.1,76.0 L773.7,76.0 L773.2,76.0 L772.8,76.0 L772.4,76.0 L772.0,76.0 L771.5,76.0 L771.1,76.0 L770.7,76.0 L770.3,76.0 L769.9,76.0 L769.4,76.0 L769.0,76.0 L768.6,76.0 L768.2,76.0 L767.8,76.0 L767.3,76.0 L766.9,76.0 L766.5,76.0 L766.1,76.0 L765.6,76.0 L765.2,76.0 L764.8,76.0 L764.4,76.0 L764.0,76.0 L763.5,76.0 L763.1,76.0 L762.7,76.0 L762.3,76.0 L761.9,76.0 L761.4,76.0 L761.0,76.0 L760.6,76.0 L760.2,76.0 L759.7,76.0 L759.3,76.0 L758.9,76.0 L758.5,76.0 L758.1,76.0 L757.6,76.0 L757.2,76.0 L756.8,76.0 L756.4,76.0 L756.0,76.0 L755.5,76.0 L755.1,76.0 L754.7,76.0 L754.3,76.0 L753.9,76.0 L753.4,76.0 L753.0,76.0 L752.6,76.0 L752.2,76.0 L751.7,76.0 L751.3,76.0 L750.9,76.0 L750.5,76.0"/>
</g>
<g font-family="Liberation Sans, sans-serif" font-size="10.3" fill="#8a8a8a" text-anchor="middle">
<text x="313.6" y="330.0" textLength="26.70" lengthAdjust="spacingAndGlyphs">+180</text><text x="330.6" y="326.6" font-size="7">°</text>
<text x="411.3" y="330.0" textLength="26.70" lengthAdjust="spacingAndGlyphs">+150</text><text x="428.3" y="326.6" font-size="7">°</text>
<text x="509.0" y="330.0" textLength="26.70" lengthAdjust="spacingAndGlyphs">+120</text><text x="525.9" y="326.6" font-size="7">°</text>
<text x="606.6" y="330.0" textLength="20.51" lengthAdjust="spacingAndGlyphs">+90</text><text x="620.5" y="326.6" font-size="7">°</text>
<text x="704.3" y="330.0" textLength="20.51" lengthAdjust="spacingAndGlyphs">+60</text><text x="718.2" y="326.6" font-size="7">°</text>
<text x="802.0" y="330.0" textLength="20.51" lengthAdjust="spacingAndGlyphs">+30</text><text x="815.8" y="326.6" font-size="7">°</text>
<text x="899.6" y="330.0" textLength="14.33" lengthAdjust="spacingAndGlyphs">+0</text><text x="910.4" y="326.6" font-size="7">°</text>
<text x="997.3" y="330.0" textLength="26.70" lengthAdjust="spacingAndGlyphs">+330</text><text x="1014.3" y="326.6" font-size="7">°</text>
<text x="1095.0" y="330.0" textLength="26.70" lengthAdjust="spacingAndGlyphs">+300</text><text x="1111.9" y="326.6" font-size="7">°</text>
<text x="1192.7" y="330.0" textLength="26.70" lengthAdjust="spacingAndGlyphs">+270</text><text x="1209.6" y="326.6" font-size="7">°</text>
<text x="1290.3" y="330.0" textLength="26.70" lengthAdjust="spacingAndGlyphs">+240</text><text x="1307.3" y="326.6" font-size="7">°</text>
<text x="1388.0" y="330.0" textLength="26.70" lengthAdjust="spacingAndGlyphs">+210</text><text x="1404.9" y="326.6" font-size="7">°</text>
<text x="1485.7" y="330.0" textLength="26.70" lengthAdjust="spacingAndGlyphs">+180</text><text x="1502.6" y="326.6" font-size="7">°</text>
<text x="899.6" y="25.2" textLength="20.51" lengthAdjust="spacingAndGlyphs">+90</text><text x="912.5" y="21.8" font-size="7">°</text>
<text x="899.6" y="122.9" textLength="20.51" lengthAdjust="spacingAndGlyphs">+60</text><text x="912.5" y="119.5" font-size="7">°</text>
<text x="899.6" y="220.5" textLength="20.51" lengthAdjust="spacingAndGlyphs">+30</text><text x="912.5" y="217.1" font-size="7">°</text>
<text x="899.6" y="427.9" textLength="20.51" lengthAdjust="spacingAndGlyphs">−30</text><text x="912.5" y="424.5" font-size="7">°</text>
<text x="899.6" y="525.5" textLength="20.51" lengthAdjust="spacingAndGlyphs">−60</text><text x="912.5" y="522.1" font-size="7">°</text>
<text x="899.6" y="623.2" textLength="20.51" lengthAdjust="spacingAndGlyphs">−90</text><text x="912.5" y="619.8" font-size="7">°</text>
</g>
<g stroke="#8c8c8c" stroke-width="1.5" stroke-linecap="round">
<line x1="616.9" y1="169.8" x2="639.1" y2="155.6"/>
<line x1="595.6" y1="152.0" x2="606.2" y2="148.4"/>
<line x1="985.6" y1="57.6" x2="1008.3" y2="70.0"/>
<line x1="1010.0" y1="64.2" x2="1023.3" y2="66.7"/>
<line x1="1078.3" y1="87.5" x2="1130.0" y2="104.2"/>
<line x1="1076.7" y1="109.2" x2="1086.7" y2="122.5"/>
<line x1="1105.0" y1="115.8" x2="1125.0" y2="126.7"/>
<line x1="1113.3" y1="107.5" x2="1120.8" y2="108.3"/>
<line x1="1048.3" y1="102.5" x2="1051.7" y2="107.5"/>
<line x1="1068.3" y1="101.7" x2="1071.7" y2="106.7"/>
<line x1="1048.3" y1="73.3" x2="1049.0" y2="77.5"/>
<line x1="821.4" y1="54.2" x2="844.0" y2="48.3"/>
<line x1="723.8" y1="104.4" x2="775.0" y2="71.5"/>
<line x1="737.6" y1="104.9" x2="764.2" y2="93.8"/>
<line x1="729.4" y1="120.3" x2="748.3" y2="112.8"/>
<line x1="724.4" y1="139.4" x2="728.9" y2="131.7"/>
<line x1="510.2" y1="180.4" x2="521.8" y2="178.7"/>
<line x1="785.7" y1="82.5" x2="797.3" y2="79.4"/>
<line x1="789.5" y1="84.9" x2="796.5" y2="82.9"/>
</g>
<g fill="none" stroke="#8a8a8a" stroke-width="1.1" stroke-dasharray="1.1 2.2">
<path d="M511.3,179.9 C507.9,180.8 498.3,183.4 491.0,185.3 C483.7,187.2 476.0,189.4 467.7,191.5 C459.4,193.6 447.0,196.5 441.3,197.8 C435.6,199.1 434.8,199.1 433.5,199.3"/>
<path d="M596.7,183.3 C594.0,186.4 587.6,192.4 580.6,201.9 C573.6,211.4 561.5,227.1 554.8,240.6 C548.1,254.1 543.0,270.2 540.3,282.6 C537.6,295.0 537.9,303.0 538.7,314.8 C539.5,326.6 541.4,340.6 545.2,353.5 C549.0,366.4 555.4,379.9 561.3,392.3 C567.2,404.7 575.8,418.9 580.6,427.7 C585.4,436.5 588.4,442.1 590.0,445.0"/>
<path d="M606.7,190.0 C604.0,192.0 596.8,193.5 590.3,201.9 C583.8,210.3 573.3,227.7 567.7,240.6 C562.1,253.5 558.4,267.6 556.5,279.4 C554.6,291.2 555.2,299.2 556.5,311.6 C557.8,324.0 559.9,339.5 564.5,353.5 C569.1,367.5 576.9,382.1 583.9,395.5 C590.9,408.9 601.8,426.4 606.5,434.2 C611.2,441.9 611.1,440.7 612.0,442.0"/>
<path d="M615.0,196.0 C612.5,197.5 605.7,197.2 600.0,205.2 C594.3,213.2 585.7,231.5 580.6,243.9 C575.5,256.3 571.5,268.1 569.4,279.4 C567.2,290.7 566.4,299.2 567.7,311.6 C569.0,324.0 572.5,339.5 577.4,353.5 C582.2,367.5 589.3,381.5 596.8,395.5 C604.3,409.5 618.3,430.4 622.6,437.4"/>
<path d="M625.0,200.0 C623.5,201.4 619.2,201.6 616.1,208.4 C613.0,215.2 608.9,229.8 606.5,240.6 C604.1,251.3 602.1,261.1 601.6,272.9 C601.1,284.7 601.3,298.2 603.2,311.6 C605.1,325.0 608.6,341.1 612.9,353.5 C617.2,365.9 622.0,373.4 629.0,385.8 C636.0,398.2 649.6,419.3 654.8,427.7 C660.0,436.1 659.1,434.6 660.0,436.0"/>
<path d="M655.0,180.0 C654.4,182.1 653.8,183.3 651.6,192.3 C649.4,201.3 644.0,219.1 641.9,234.2 C639.8,249.2 637.6,264.9 638.7,282.6 C639.8,300.3 643.6,323.4 648.4,340.6 C653.2,357.8 660.2,371.3 667.7,385.8 C675.2,400.3 688.1,419.2 693.5,427.7 C698.9,436.2 698.9,435.4 700.0,437.0"/>
<path d="M663.1,324.3 C664.1,326.7 666.2,334.0 668.9,338.8 C671.5,343.6 675.4,347.9 679.0,353.2 C682.6,358.5 686.9,364.7 690.5,370.5 C694.1,376.3 697.0,381.9 700.6,387.9 C704.2,393.9 707.4,398.7 712.2,406.6 C717.0,414.5 726.6,430.7 729.5,435.5"/>
<path d="M684.8,324.3 C687.0,328.4 693.2,340.9 697.8,348.9 C702.4,356.8 707.4,364.8 712.2,372.0 C717.0,379.2 721.8,385.5 726.6,392.2 C731.4,398.9 734.6,405.2 741.1,412.4 C747.6,419.6 761.5,431.6 765.6,435.5"/>
<path d="M720.9,325.8 C721.4,329.6 721.6,340.2 723.8,348.9 C726.0,357.6 729.8,368.2 733.9,377.8 C738.0,387.4 743.7,397.5 748.3,406.6 C752.9,415.7 759.1,428.3 761.3,432.6"/>
<path d="M605.0,318.0 C606.1,320.0 608.4,324.7 611.7,330.0 C615.0,335.3 620.3,343.6 625.0,350.0 C629.7,356.4 633.6,360.5 640.0,368.3 C646.4,376.1 655.5,387.5 663.3,396.7 C671.1,405.9 681.1,417.8 686.7,423.3 C692.3,428.9 695.0,428.9 696.7,430.0"/>
<path d="M560.0,330.0 C566.7,335.0 590.5,352.2 600.0,360.0 C609.5,367.8 611.2,371.4 616.7,376.7 C622.2,382.0 628.0,386.7 633.3,391.7 C638.6,396.7 642.7,402.0 648.3,406.7 C653.9,411.4 660.3,415.6 666.7,420.0 C673.1,424.4 683.4,431.1 686.7,433.3"/>
<path d="M575.0,355.0 C579.2,358.9 593.0,371.9 600.0,378.3 C607.0,384.7 611.2,388.3 616.7,393.3 C622.2,398.3 628.3,404.1 633.3,408.3 C638.3,412.5 643.1,415.5 646.7,418.3 C650.3,421.1 653.6,423.9 655.0,425.0"/>
<path d="M585.0,380.0 C587.5,382.2 595.0,389.1 600.0,393.3 C605.0,397.5 610.0,401.1 615.0,405.0 C620.0,408.9 625.8,413.5 630.0,416.7 C634.2,419.9 638.3,422.8 640.0,424.0"/>
<path d="M880.0,90.0 C884.7,100.0 899.3,130.0 908.0,150.0 C916.7,170.0 925.3,190.0 932.0,210.0 C938.7,230.0 944.7,250.0 948.0,270.0 C951.3,290.0 952.7,310.0 952.0,330.0 C951.3,350.0 946.7,376.7 944.0,390.0 C941.3,403.3 937.3,406.7 936.0,410.0"/>
<path d="M888.0,90.0 C895.0,101.7 918.0,140.0 930.0,160.0 C942.0,180.0 949.7,188.3 960.0,210.0 C970.3,231.7 984.0,263.3 992.0,290.0 C1000.0,316.7 1004.7,350.0 1008.0,370.0 C1011.3,390.0 1011.3,403.3 1012.0,410.0"/>
<path d="M1071.0,110.7 C1072.5,118.9 1077.6,144.0 1080.0,160.0 C1082.4,176.0 1083.8,190.0 1085.3,206.7 C1086.8,223.4 1088.6,244.6 1088.9,260.0 C1089.2,275.4 1089.2,287.3 1087.1,299.0 C1084.9,310.7 1079.8,320.5 1076.0,330.0 C1072.2,339.5 1069.5,342.2 1064.0,356.0 C1058.5,369.8 1046.2,403.4 1042.7,412.9"/>
<path d="M1053.3,121.3 C1056.9,135.5 1068.2,183.0 1074.7,206.7 C1081.2,230.4 1088.6,248.2 1092.4,263.6 C1096.2,279.0 1097.2,284.8 1097.8,299.0 C1098.4,313.2 1096.3,340.7 1096.0,349.0"/>
<path d="M872.0,140.0 C871.7,153.3 870.6,191.7 870.0,220.0 C869.4,248.3 868.2,288.3 868.4,310.0 C868.6,331.7 869.4,331.4 871.0,350.0 C872.6,368.6 876.7,409.7 877.8,421.6"/>
<path d="M755.0,205.0 C755.6,207.4 755.4,209.8 758.9,219.3 C762.4,228.8 770.0,246.9 776.0,262.0 C782.0,277.1 787.5,296.3 794.8,310.0 C802.1,323.7 812.1,333.8 820.0,344.4 C827.9,354.9 834.8,363.3 842.2,373.3 C849.6,383.3 858.5,395.9 864.4,404.4 C870.3,412.9 875.6,421.1 877.8,424.4"/>
</g>
<g fill="none" stroke-width="1.6" stroke-dasharray="1.6 2.1">
<path stroke="#66dd11" d="M444.4,244.4 C447.9,240.0 458.2,225.7 465.3,218.0 C472.4,210.3 480.2,204.2 487.1,198.2 C494.0,192.2 500.2,186.9 506.7,182.2 C513.2,177.5 519.8,173.8 526.2,169.8 C532.6,165.8 538.7,162.0 544.9,158.2 C551.1,154.3 557.7,150.2 563.6,146.7 C569.5,143.2 576.7,139.4 580.4,137.3 C584.1,135.2 584.9,134.7 585.8,134.2"/>
<path stroke="#66dd11" d="M468.0,238.7 C472.7,234.4 487.3,219.9 496.0,212.7 C504.7,205.5 514.4,199.1 520.0,195.3 C525.6,191.6 526.1,192.4 529.8,190.2 C533.5,188.0 538.1,184.9 542.2,182.2 C546.4,179.5 550.1,176.9 554.7,174.2 C559.3,171.5 565.5,168.6 569.8,166.2 C574.1,163.8 576.5,162.1 580.4,160.0 C584.2,157.9 588.6,156.0 592.9,153.8 C597.2,151.6 601.9,148.9 606.2,146.7 C610.5,144.5 614.6,142.5 618.7,140.4 C622.9,138.3 627.7,135.8 631.1,134.2 C634.5,132.6 636.4,131.8 638.9,130.7 C641.4,129.6 643.2,129.1 646.0,127.6 C648.8,126.1 652.5,123.4 655.8,121.8 C659.1,120.2 662.8,119.3 665.6,118.2 C668.4,117.1 670.3,116.2 672.7,115.1 C675.1,114.0 677.6,112.7 679.8,111.6 C682.0,110.5 683.9,109.4 686.0,108.4 C688.1,107.4 690.0,106.7 692.2,105.8 C694.4,104.9 696.9,104.0 699.3,103.1 C701.7,102.2 703.7,101.5 706.4,100.4 C709.1,99.3 712.6,97.7 715.3,96.4 C718.0,95.2 720.0,94.0 722.4,92.9 C724.8,91.8 727.2,90.8 729.6,89.8 C732.0,88.8 734.3,87.7 736.7,86.7 C739.1,85.7 741.4,84.6 743.8,83.6 C746.2,82.6 748.8,81.7 750.9,80.9 C753.0,80.2 754.1,79.9 756.2,79.1 C758.3,78.3 760.9,77.0 763.3,76.0 C765.7,75.0 768.0,74.3 770.4,73.3 C772.8,72.3 775.2,71.1 777.5,70.1 C779.8,69.1 781.8,68.3 784.1,67.4 C786.4,66.5 789.1,65.5 791.1,64.7 C793.1,63.9 795.4,63.0 796.2,62.7"/>
<path stroke="#22ee77" d="M823.2,210.0 C824.7,204.2 828.3,186.3 831.9,174.9 C835.5,163.5 841.5,150.6 844.9,141.7 C848.3,132.8 848.6,130.2 852.1,121.4 C855.6,112.7 862.0,97.9 865.8,89.2 C869.6,80.5 872.1,75.2 875.0,69.2 C877.9,63.2 880.9,58.2 883.3,53.3 C885.7,48.4 888.0,43.4 889.2,40.0 C890.5,36.6 891.1,34.1 890.8,32.9 C890.5,31.7 889.2,32.5 887.5,32.8 C885.8,33.1 882.8,34.1 880.5,34.7 C878.2,35.4 875.3,36.2 873.5,36.7 C871.7,37.2 870.2,37.3 869.6,37.4"/>
<path stroke="#22ee77" d="M943.3,40.0 C944.0,40.3 945.3,40.7 947.8,41.6 C950.2,42.5 955.2,44.2 958.0,45.3 C960.8,46.4 962.5,47.0 964.7,48.0 C966.9,49.0 969.0,50.4 971.3,51.3 C973.6,52.2 976.1,52.7 978.4,53.6 C980.7,54.5 982.8,55.8 985.1,56.7 C987.4,57.6 989.9,58.1 992.2,58.9 C994.5,59.7 996.3,60.5 998.9,61.6 C1001.5,62.7 1004.9,63.9 1008.0,65.2 C1011.1,66.5 1015.9,68.5 1017.5,69.2"/>
<path stroke="#22ee77" d="M847.8,208.2 C849.8,205.2 856.1,195.8 860.0,190.0 C863.9,184.2 866.7,178.5 870.9,173.5 C875.1,168.5 879.9,165.9 885.0,160.0 C890.1,154.1 897.0,143.9 901.7,138.3 C906.4,132.8 909.1,130.9 913.3,126.7 C917.5,122.5 922.2,117.2 926.7,113.3 C931.2,109.4 935.0,106.1 940.0,103.3 C945.0,100.5 951.2,97.8 956.7,96.7 C962.2,95.6 967.2,96.2 973.3,96.7 C979.4,97.2 986.6,98.5 993.3,100.0 C1000.0,101.5 1006.3,103.6 1013.3,105.8 C1020.2,108.0 1027.8,110.9 1035.0,113.3 C1042.2,115.7 1053.1,118.9 1056.7,120.0"/>
<path stroke="#ee82ee" d="M710.8,316.7 C710.8,315.0 710.6,310.6 710.8,306.7 C710.9,302.8 711.3,297.8 711.7,293.3 C712.1,288.9 712.5,285.0 713.3,280.0 C714.1,275.0 715.0,268.9 716.7,263.3 C718.4,257.8 720.8,252.2 723.3,246.7 C725.8,241.1 729.4,235.9 731.7,230.0 C734.0,224.1 735.2,216.4 737.0,211.0 C738.8,205.6 740.4,201.9 742.2,197.8 C744.0,193.7 745.8,189.5 747.6,186.2 C749.4,182.9 751.3,180.3 752.9,178.2 C754.5,176.1 754.0,177.2 757.3,173.8 C760.5,170.4 766.0,165.9 772.4,157.9 C778.8,149.9 786.8,136.9 795.5,126.1 C804.2,115.3 818.4,99.4 824.4,92.9 C830.4,86.4 828.6,90.0 831.5,87.2 C834.4,84.4 838.2,79.9 841.6,76.3 C845.0,72.7 849.5,68.5 852.1,65.8 C854.7,63.1 854.5,63.1 857.2,60.4 C859.9,57.7 864.9,53.2 868.1,49.5 C871.3,45.8 875.2,40.1 876.6,38.2"/>
<path stroke="#ff2a00" d="M710.8,246.7 C709.5,244.6 705.5,239.3 703.3,234.4 C701.1,229.5 699.2,221.3 697.8,217.3 C696.4,213.3 696.3,213.1 695.1,210.2 C693.9,207.2 692.2,203.0 690.7,199.6 C689.2,196.2 687.8,193.1 686.2,189.8 C684.6,186.5 682.8,183.2 680.9,180.0 C679.0,176.8 677.1,173.4 674.7,170.7 C672.3,168.0 669.7,165.7 666.7,163.6 C663.7,161.5 660.3,159.6 656.9,158.2 C653.5,156.8 649.8,156.0 646.2,155.3 C642.7,154.6 639.2,154.2 635.6,154.0 C632.0,153.8 628.6,153.8 624.9,153.8 C621.2,153.8 617.1,153.9 613.3,154.2 C609.4,154.5 606.2,155.1 601.8,155.6 C597.4,156.1 591.5,156.6 586.7,157.3 C582.0,158.0 577.3,158.8 573.3,159.6 C569.3,160.3 565.4,161.2 562.7,161.8 C560.0,162.4 557.9,162.9 556.9,163.1"/>
<path stroke="#ff2a00" d="M705.0,240.0 C702.9,236.2 695.4,222.7 692.4,217.3 C689.4,211.9 688.9,210.7 687.1,207.6 C685.3,204.5 683.7,201.5 681.8,198.7 C679.9,195.9 678.0,193.5 675.6,190.7 C673.2,187.9 670.4,184.5 667.6,181.8 C664.8,179.1 661.7,176.7 658.7,174.7 C655.7,172.7 653.1,171.1 649.8,169.8 C646.5,168.5 642.7,167.5 639.1,166.7 C635.5,165.9 632.7,165.5 628.4,165.1 C624.1,164.7 617.6,164.1 613.3,164.0 C609.0,163.9 605.7,164.2 602.7,164.4 C599.8,164.6 599.3,164.6 595.6,164.9 C591.9,165.2 585.5,165.5 580.4,166.2 C575.3,166.9 570.2,168.5 565.3,169.3 C560.4,170.1 553.8,170.7 551.1,171.1 C548.4,171.5 549.3,171.8 548.9,172.0"/>
<path stroke="#ff2a00" d="M716.7,246.7 C716.6,241.1 716.0,220.7 715.8,213.3 C715.6,205.9 715.4,207.0 715.6,202.2 C715.9,197.4 716.7,189.9 717.3,184.4 C717.9,178.9 718.4,173.7 719.1,169.3 C719.8,164.9 721.1,160.9 721.7,157.8 C722.3,154.7 722.4,153.0 722.8,150.6 C723.2,148.2 723.6,145.8 723.9,143.3 C724.2,140.8 724.6,138.2 724.7,135.8 C724.8,133.4 724.6,130.7 724.4,128.9 C724.2,127.1 724.1,126.6 723.3,125.0 C722.5,123.4 720.6,120.5 719.4,119.2 C718.2,117.9 717.8,117.7 716.1,116.9 C714.4,116.2 711.8,115.2 709.4,114.7 C707.0,114.2 704.9,114.1 701.7,113.9 C698.5,113.8 693.5,113.7 690.4,113.8 C687.3,113.9 685.7,114.4 683.3,114.7 C680.9,115.0 678.6,115.3 676.2,115.6 C673.8,115.9 671.5,116.0 669.1,116.4 C666.7,116.8 664.5,117.4 662.0,117.8 C659.5,118.2 656.5,118.3 654.0,118.7 C651.5,119.1 649.3,119.9 646.9,120.4 C644.5,120.9 642.2,121.3 639.8,121.8 C637.4,122.3 635.0,123.1 632.7,123.6 C630.4,124.1 628.7,124.2 625.8,124.9 C622.9,125.6 618.7,126.8 615.1,127.6 C611.5,128.4 608.0,129.0 604.4,129.8 C600.8,130.6 596.5,131.7 593.8,132.4 C591.1,133.1 589.0,133.7 588.0,134.0"/>
<path stroke="#ff2a00" d="M730.0,251.7 C730.8,248.1 733.7,236.0 735.0,230.0 C736.3,224.0 736.8,219.9 737.8,215.6 C738.8,211.3 740.0,208.0 741.3,204.0 C742.6,200.0 744.3,195.6 745.8,191.6 C747.3,187.6 748.7,184.2 750.2,180.0 C751.7,175.8 753.2,171.3 754.7,166.7 C756.2,162.1 757.8,156.0 759.1,152.4 C760.4,148.8 761.4,147.2 762.5,145.0 C763.6,142.8 764.8,141.1 766.0,139.1 C767.2,137.1 768.4,135.0 769.6,132.9 C770.8,130.8 771.9,128.8 773.1,126.7 C774.3,124.6 775.5,122.5 776.7,120.4 C777.9,118.3 779.0,116.3 780.2,114.2 C781.4,112.1 782.6,110.1 783.8,108.0 C785.0,105.9 786.4,103.6 787.3,101.8 C788.2,100.0 788.5,98.6 789.1,97.3 C789.7,96.0 790.6,95.2 791.1,94.2 C791.6,93.2 791.9,92.2 792.3,91.1 C792.7,90.0 793.7,89.7 793.4,87.6 C793.1,85.5 791.4,80.1 790.3,78.3 C789.2,76.5 788.5,77.3 786.8,77.0 C785.0,76.7 782.3,76.7 779.8,76.7 C777.3,76.7 774.5,76.8 772.0,77.1 C769.5,77.3 768.0,77.8 765.1,78.2 C762.2,78.6 758.1,78.9 754.4,79.6 C750.7,80.3 746.6,81.4 742.9,82.2 C739.2,83.0 735.8,83.7 732.2,84.4 C728.7,85.2 724.6,86.0 721.6,86.7 C718.6,87.4 716.2,88.0 714.4,88.4 C712.6,88.8 711.5,89.2 710.9,89.3"/>
<path stroke="#ff2a00" d="M1093.7,89.3 L1100.0,91.7"/>
<path stroke="#ff2a00" d="M741.7,239.2 C742.0,238.2 741.9,237.0 743.3,233.3 C744.7,229.7 748.3,221.6 750.2,217.3 C752.1,213.0 753.2,210.4 754.7,207.6 C756.2,204.8 756.8,203.9 759.1,200.4 C761.4,196.9 764.6,191.9 768.3,186.7 C772.0,181.5 773.0,180.0 781.1,169.4 C789.2,158.8 805.8,135.7 817.2,123.2 C828.6,110.7 842.2,100.7 849.4,94.2 C856.6,87.7 856.8,87.5 860.3,84.1 C863.8,80.7 867.3,77.1 870.4,74.0 C873.5,70.9 875.5,68.4 878.6,65.4 C881.7,62.4 885.5,59.2 889.1,56.1 C892.7,53.0 896.8,49.0 900.0,46.7 C903.2,44.4 905.2,43.0 908.3,42.5 C911.3,42.0 915.0,43.0 918.3,43.8 C921.6,44.5 925.7,45.9 928.3,47.0 C930.9,48.1 933.0,49.7 934.0,50.2"/>
<path stroke="#ff2a00" d="M738.0,240.0 C738.7,235.9 740.3,221.9 742.2,215.6 C744.1,209.3 747.2,205.9 749.3,202.2 C751.4,198.5 752.9,197.0 754.7,193.3 C756.5,189.6 756.8,186.1 760.0,180.0 C763.2,173.9 767.8,166.2 774.0,157.0 C780.2,147.8 789.2,135.5 797.0,125.0 C804.8,114.5 815.9,100.0 820.7,93.8 C825.6,87.6 824.6,89.9 826.1,88.0 C827.6,86.1 828.5,84.4 830.0,82.5 C831.5,80.6 833.7,78.5 835.4,76.7 C837.1,74.9 838.5,73.5 840.1,71.7 C841.7,69.9 843.2,67.7 844.8,65.8 C846.3,63.9 847.8,62.3 849.4,60.4 C851.0,58.5 853.1,56.3 854.1,54.2 C855.1,52.1 855.4,48.7 855.6,47.6"/>
<path stroke="#e619f5" d="M735.0,236.0 C735.2,232.3 735.4,219.0 736.0,213.8 C736.6,208.6 737.8,208.3 738.7,204.9 C739.6,201.5 740.4,197.2 741.3,193.3 C742.2,189.5 743.0,185.8 744.0,181.8 C745.0,177.8 746.4,173.3 747.6,169.3 C748.8,165.3 749.9,161.2 751.1,157.8 C752.3,154.4 753.2,152.2 754.7,148.9 C756.2,145.6 758.5,140.7 759.8,138.2 C761.1,135.7 761.5,135.6 762.4,133.8 C763.3,132.0 764.4,129.8 765.1,127.6 C765.9,125.4 766.4,122.8 766.9,120.4 C767.4,118.0 767.7,115.7 768.2,113.3 C768.7,110.9 769.7,108.6 770.0,106.2 C770.3,103.8 770.7,101.3 770.0,99.1 C769.3,96.9 767.9,94.2 766.0,92.9 C764.1,91.6 761.4,91.5 758.9,91.1 C756.4,90.7 753.4,90.7 750.9,90.7 C748.4,90.7 746.2,90.9 743.8,91.1 C741.4,91.3 739.1,91.5 736.7,91.8 C734.3,92.1 731.5,92.6 729.6,92.9 C727.8,93.2 726.8,93.4 725.6,93.6 C724.4,93.8 722.9,94.1 722.4,94.2"/>
<path stroke="#e619f5" d="M727.8,236.0 C727.4,232.9 725.6,224.4 725.3,217.3 C725.0,210.2 725.6,201.7 725.8,193.3 C725.9,184.9 726.1,172.5 726.2,166.7 C726.4,160.9 726.6,160.9 726.7,158.3 C726.8,155.7 726.9,153.6 726.9,151.1 C726.9,148.6 726.8,145.2 726.7,143.3 C726.6,141.4 726.5,141.1 726.1,139.4 C725.7,137.7 725.0,135.0 724.4,133.3 C723.8,131.6 723.6,130.6 722.8,129.4 C722.0,128.2 720.9,127.2 719.4,126.1 C717.9,124.9 716.0,123.5 713.9,122.5 C711.8,121.5 709.1,120.8 706.7,120.3 C704.3,119.8 701.4,119.8 699.4,119.7 C697.4,119.6 697.4,119.4 695.0,119.4 C692.6,119.4 688.5,119.3 685.1,119.6 C681.7,119.9 677.6,120.9 674.4,121.3 C671.1,121.7 668.7,121.8 665.6,122.2 C662.5,122.6 659.2,123.0 655.8,123.6 C652.4,124.2 648.6,125.1 645.1,125.8 C641.6,126.5 638.4,126.9 634.7,127.6 C631.0,128.3 626.8,129.3 623.1,130.2 C619.4,131.1 614.8,132.4 612.4,132.9 C610.0,133.4 609.5,133.2 608.9,133.3"/>
<path stroke="#e619f5" d="M732.2,236.0 C731.8,233.0 730.0,225.3 729.8,218.2 C729.5,211.1 730.9,201.2 730.7,193.3 C730.6,185.5 729.5,176.7 728.9,171.1 C728.3,165.5 727.6,162.6 727.1,160.0 C726.6,157.4 726.1,157.0 725.8,155.6 C725.4,154.2 725.3,152.8 725.0,151.7 C724.7,150.6 724.4,150.0 723.9,148.9 C723.4,147.8 722.9,146.2 722.2,145.0 C721.6,143.8 721.1,143.2 720.0,141.7 C718.9,140.2 717.5,137.7 715.6,136.1 C713.8,134.5 711.1,133.2 708.9,132.2 C706.7,131.2 704.5,130.6 702.2,130.0 C699.9,129.4 696.8,129.2 695.0,128.9 C693.2,128.6 693.7,128.5 691.3,128.4 C688.9,128.3 683.8,128.3 680.7,128.4 C677.6,128.5 674.9,128.7 672.7,128.9 C670.5,129.1 668.2,129.7 667.3,129.8"/>
<path stroke="#e619f5" d="M729.0,236.0 C728.8,232.9 728.3,222.9 728.0,217.3 C727.7,211.7 727.4,206.8 727.1,202.2 C726.8,197.6 726.7,193.4 726.2,189.8 C725.8,186.2 725.0,184.0 724.4,180.9 C723.8,177.8 723.3,174.2 722.7,171.1 C722.1,168.0 721.5,164.7 720.9,162.2 C720.3,159.7 719.8,157.7 719.4,156.1 C719.0,154.5 718.9,153.9 718.6,152.8 C718.3,151.7 717.7,150.0 717.5,149.4"/>
</g>
<g stroke-width="1.8" stroke-linecap="round">
<line stroke="#66dd11" x1="585.8" y1="134.2" x2="591.1" y2="131.6"/>
<line stroke="#66dd11" x1="1204.7" y1="128.8" x2="1210.4" y2="130.4"/>
<line stroke="#66dd11" x1="796.2" y1="62.7" x2="814.8" y2="54.5"/>
<line stroke="#66dd11" x1="967.8" y1="48.9" x2="984.9" y2="54.7"/>
<line stroke="#22ee77" x1="1017.5" y1="69.2" x2="1050.0" y2="82.0"/>
<line stroke="#22ee77" x1="1056.7" y1="120.0" x2="1061.7" y2="122.0"/>
<line stroke="#ee82ee" x1="943.3" y1="40.4" x2="961.1" y2="50.0"/>
<line stroke="#ff2a00" x1="556.9" y1="163.1" x2="547.6" y2="164.9"/>
<line stroke="#ff2a00" x1="548.9" y1="172.0" x2="510.7" y2="180.0"/>
<line stroke="#ff2a00" x1="1225.6" y1="136.0" x2="1250.0" y2="155.1"/>
<line stroke="#ff2a00" x1="1100.0" y1="91.7" x2="1132.5" y2="110.0"/>
<line stroke="#ff2a00" x1="934.0" y1="50.2" x2="947.3" y2="56.0"/>
<line stroke="#ff2a00" x1="848.6" y1="47.2" x2="828.4" y2="50.3"/>
<line stroke="#e619f5" x1="722.4" y1="94.2" x2="705.6" y2="97.8"/>
<line stroke="#e619f5" x1="608.9" y1="133.3" x2="577.8" y2="141.2"/>
<line stroke="#e619f5" x1="666.9" y1="129.8" x2="647.8" y2="132.0"/>
<line stroke="#e619f5" x1="717.5" y1="149.4" x2="715.0" y2="145.0"/>
</g>
<g fill="#ff6a50">
<rect x="1203.4" y="127.5" width="2.6" height="2.6"/>
<rect x="966.5" y="47.6" width="2.6" height="2.6"/>
<rect x="983.6" y="53.4" width="2.6" height="2.6"/>
<rect x="1048.7" y="80.7" width="2.6" height="2.6"/>
<rect x="1060.4" y="120.7" width="2.6" height="2.6"/>
<rect x="959.8" y="48.7" width="2.6" height="2.6"/>
<rect x="546.3" y="163.6" width="2.6" height="2.6"/>
<rect x="509.4" y="178.7" width="2.6" height="2.6"/>
<rect x="1248.7" y="153.8" width="2.6" height="2.6"/>
<rect x="1131.2" y="108.7" width="2.6" height="2.6"/>
<rect x="946.0" y="54.7" width="2.6" height="2.6"/>
<rect x="847.3" y="45.9" width="2.6" height="2.6"/>
<rect x="704.3" y="96.5" width="2.6" height="2.6"/>
<rect x="576.5" y="139.9" width="2.6" height="2.6"/>
<rect x="646.5" y="130.7" width="2.6" height="2.6"/>
<rect x="713.7" y="143.7" width="2.6" height="2.6"/>
</g>
<ellipse cx="0" cy="0" rx="41.0" ry="15.8" transform="translate(460.0,239.7) rotate(-31.0)" fill="none" stroke="#66dd11" stroke-width="2"/>
<ellipse cx="0" cy="0" rx="27.2" ry="21.3" transform="translate(836.1,211.2) rotate(-40.6)" fill="none" stroke="#22ee77" stroke-width="2"/>
<ellipse cx="0" cy="0" rx="27.7" ry="18.7" transform="translate(725.4,263.3) rotate(-35.0)" fill="none" stroke="#ff2a00" stroke-width="2"/>
<ellipse cx="0" cy="0" rx="30.7" ry="18.7" transform="translate(732.4,242.4) rotate(-40.0)" fill="none" stroke="#e619f5" stroke-width="2"/>
<ellipse cx="0" cy="0" rx="24.0" ry="24.0" transform="translate(720.3,315.0) rotate(0.0)" fill="none" stroke="#ee82ee" stroke-width="2"/>
<g stroke="#ff0000" stroke-width="1.5">
<path d="M440.9,244.4h7M444.4,240.9v7"/>
<path d="M465.0,238.5h7M468.5,235.0v7"/>
<path d="M818.6,212.5h7M822.1,209.0v7"/>
<path d="M841.1,216.1h7M844.6,212.6v7"/>
<path d="M707.3,246.7h7M710.8,243.2v7"/>
<path d="M719.3,268.9h7M722.8,265.4v7"/>
<path d="M739.0,239.0h7M742.5,235.5v7"/>
<path d="M712.5,242.0h7M716.0,238.5v7"/>
<path d="M707.3,316.7h7M710.8,313.2v7"/>
</g>
<g font-family="Liberation Sans, sans-serif" font-size="10.9" fill="#ffffff" text-anchor="middle">
<text x="458.4" y="242.5" textLength="20.59" lengthAdjust="spacingAndGlyphs">LEO</text>
<text x="836.0" y="214.7" textLength="22.95" lengthAdjust="spacingAndGlyphs">AND</text>
<text x="731.7" y="245.6" textLength="20.48" lengthAdjust="spacingAndGlyphs">NTA</text>
<text x="725.6" y="265.6" textLength="19.30" lengthAdjust="spacingAndGlyphs">STA</text>
<text x="720.0" y="317.5" textLength="22.03" lengthAdjust="spacingAndGlyphs">OER</text>
</g>
<g font-family="Liberation Mono, monospace" font-size="13.9" fill="#ffffff">
<text x="315" y="29.8" xml:space="preserve">UK00CV</text>
<text x="315" y="42.9" xml:space="preserve">Beg: 20251110 19:59:24 (sol = 228.32°)</text>
<text x="315" y="55.9" xml:space="preserve">End: 20251111 03:10:25 (sol = 228.62°)</text>
<text x="315" y="69.0" xml:space="preserve">--------------------------------------</text>
<text x="315" y="82.0" xml:space="preserve">...: 26</text>
<text x="315" y="95.1" xml:space="preserve">STA: 6</text>
<text x="315" y="108.2" xml:space="preserve">NTA: 4</text>
<text x="315" y="121.2" xml:space="preserve">AND: 2</text>
<text x="315" y="134.3" xml:space="preserve">LEO: 2</text>
<text x="315" y="147.3" xml:space="preserve">OER: 1</text>
</g>
<g stroke="#6a6a6a" stroke-width="1.8" stroke-dasharray="1.8 3.7">
<line x1="73.8" y1="641.5" x2="73.8" y2="842.5"/>
<line x1="218.0" y1="641.5" x2="218.0" y2="842.5"/>
<line x1="365.0" y1="641.5" x2="365.0" y2="842.5"/>
<line x1="505.0" y1="641.5" x2="505.0" y2="842.5"/>
<line x1="650.0" y1="641.5" x2="650.0" y2="842.5"/>
<line x1="796.6" y1="641.5" x2="796.6" y2="842.5"/>
<line x1="939.6" y1="641.5" x2="939.6" y2="842.5"/>
<line x1="1091.0" y1="641.5" x2="1091.0" y2="842.5"/>
<line x1="1239.0" y1="641.5" x2="1239.0" y2="842.5"/>
<line x1="1394.0" y1="641.5" x2="1394.0" y2="842.5"/>
<line x1="1548.0" y1="641.5" x2="1548.0" y2="842.5"/>
<line x1="1687.0" y1="641.5" x2="1687.0" y2="842.5"/>
</g>
<g font-family="Liberation Sans, sans-serif" font-size="31" fill="#555555">
<text transform="translate(149.50,642.00) rotate(-90)" text-anchor="end" textLength="54.00" lengthAdjust="spacingAndGlyphs">APR</text>
<text transform="translate(294.50,644.00) rotate(-90)" text-anchor="end" textLength="58.00" lengthAdjust="spacingAndGlyphs">MAY</text>
<text transform="translate(437.30,642.00) rotate(-90)" text-anchor="end" textLength="48.00" lengthAdjust="spacingAndGlyphs">JUN</text>
<text transform="translate(577.50,641.20) rotate(-90)" text-anchor="end" textLength="44.60" lengthAdjust="spacingAndGlyphs">JUL</text>
<text transform="translate(724.80,642.40) rotate(-90)" text-anchor="end" textLength="57.40" lengthAdjust="spacingAndGlyphs">AUG</text>
<text transform="translate(872.80,644.00) rotate(-90)" text-anchor="end" textLength="50.00" lengthAdjust="spacingAndGlyphs">SEP</text>
<text transform="translate(1017.40,643.40) rotate(-90)" text-anchor="end" textLength="56.60" lengthAdjust="spacingAndGlyphs">OCT</text>
<text transform="translate(1170.40,645.20) rotate(-90)" text-anchor="end" textLength="58.00" lengthAdjust="spacingAndGlyphs">NOV</text>
<text transform="translate(1318.80,645.20) rotate(-90)" text-anchor="end" textLength="55.00" lengthAdjust="spacingAndGlyphs">DEC</text>
<text transform="translate(1470.50,641.40) rotate(-90)" text-anchor="end" textLength="47.20" lengthAdjust="spacingAndGlyphs">JAN</text>
<text transform="translate(1628.60,645.80) rotate(-90)" text-anchor="end" textLength="49.80" lengthAdjust="spacingAndGlyphs">FEB</text>
<text transform="translate(1766.80,644.80) rotate(-90)" text-anchor="end" textLength="60.80" lengthAdjust="spacingAndGlyphs">MAR</text>
</g>
<g>
<rect x="106.0" y="832.0" width="23.0" height="4.0" fill="#ee82ee"/>
<rect x="165.0" y="832.0" width="180.0" height="4.0" fill="#ee82ee"/>
<rect x="366.0" y="832.0" width="259.0" height="4.0" fill="#ee82ee"/>
<rect x="635.0" y="832.0" width="151.0" height="4.0" fill="#ee82ee"/>
<rect x="807.0" y="832.0" width="92.0" height="4.0" fill="#ee82ee"/>
<rect x="920.0" y="832.0" width="53.0" height="4.0" fill="#ee82ee"/>
<rect x="984.0" y="832.0" width="82.0" height="4.0" fill="#ee82ee"/>
<rect x="1082.0" y="832.0" width="121.0" height="4.0" fill="#ee82ee"/>
<rect x="1244.0" y="832.0" width="82.0" height="4.0" fill="#ee82ee"/>
<rect x="1337.0" y="832.0" width="18.0" height="4.0" fill="#ee82ee"/>
<rect x="1381.0" y="832.0" width="63.0" height="4.0" fill="#ee82ee"/>
<rect x="1459.0" y="832.0" width="53.0" height="4.0" fill="#ee82ee"/>
<rect x="1523.0" y="832.0" width="24.0" height="4.0" fill="#ee82ee"/>
<rect x="1724.0" y="832.0" width="24.0" height="4.0" fill="#ee82ee"/>
<rect x="1758.0" y="832.0" width="24.0" height="4.0" fill="#ee82ee"/>
<rect x="165.0" y="816.0" width="23.0" height="4.0" fill="#e31cf5"/>
<rect x="223.0" y="816.0" width="63.0" height="4.0" fill="#e31cf5"/>
<rect x="312.0" y="816.0" width="28.0" height="4.0" fill="#e31cf5"/>
<rect x="366.0" y="816.0" width="126.0" height="4.0" fill="#e31cf5"/>
<rect x="508.0" y="816.0" width="146.0" height="4.0" fill="#e31cf5"/>
<rect x="704.0" y="816.0" width="33.0" height="4.0" fill="#e31cf5"/>
<rect x="773.0" y="816.0" width="72.0" height="4.0" fill="#e31cf5"/>
<rect x="871.0" y="816.0" width="117.0" height="4.0" fill="#e31cf5"/>
<rect x="1003.0" y="816.0" width="14.0" height="4.0" fill="#e31cf5"/>
<rect x="1062.0" y="816.0" width="151.0" height="4.0" fill="#e31cf5"/>
<rect x="1244.0" y="816.0" width="23.0" height="4.0" fill="#e31cf5"/>
<rect x="1293.0" y="816.0" width="23.0" height="4.0" fill="#e31cf5"/>
<rect x="1342.0" y="816.0" width="23.0" height="4.0" fill="#e31cf5"/>
<rect x="1386.0" y="816.0" width="43.0" height="4.0" fill="#e31cf5"/>
<rect x="1459.0" y="816.0" width="24.0" height="4.0" fill="#e31cf5"/>
<rect x="1548.0" y="816.0" width="23.0" height="4.0" fill="#e31cf5"/>
<rect x="165.0" y="800.0" width="23.0" height="4.0" fill="#ff2200"/>
<rect x="258.0" y="800.0" width="229.0" height="4.0" fill="#ff2200"/>
<rect x="508.0" y="800.0" width="107.0" height="4.0" fill="#ff2200"/>
<rect x="626.0" y="800.0" width="92.0" height="4.0" fill="#ff2200"/>
<rect x="729.0" y="800.0" width="97.0" height="4.0" fill="#ff2200"/>
<rect x="949.0" y="800.0" width="200.0" height="4.0" fill="#ff2200"/>
<rect x="1160.0" y="800.0" width="88.0" height="4.0" fill="#ff2200"/>
<rect x="1258.0" y="800.0" width="186.0" height="4.0" fill="#ff2200"/>
<rect x="1459.0" y="800.0" width="24.0" height="4.0" fill="#ff2200"/>
<rect x="1552.0" y="800.0" width="24.0" height="4.0" fill="#ff2200"/>
<rect x="194.0" y="783.2" width="24.0" height="4.0" fill="#ffaa11"/>
<rect x="321.0" y="783.2" width="186.0" height="4.0" fill="#ffaa11"/>
<rect x="518.0" y="783.2" width="23.0" height="4.0" fill="#ffaa11"/>
<rect x="557.0" y="783.2" width="126.0" height="4.0" fill="#ffaa11"/>
<rect x="807.0" y="783.2" width="24.0" height="4.0" fill="#ffaa11"/>
<rect x="954.0" y="783.2" width="19.0" height="4.0" fill="#ffaa11"/>
<rect x="988.0" y="783.2" width="137.0" height="4.0" fill="#ffaa11"/>
<rect x="1155.0" y="783.2" width="63.0" height="4.0" fill="#ffaa11"/>
<rect x="1244.0" y="783.2" width="23.0" height="4.0" fill="#ffaa11"/>
<rect x="1317.0" y="783.2" width="24.0" height="4.0" fill="#ffaa11"/>
<rect x="1396.0" y="783.2" width="23.0" height="4.0" fill="#ffaa11"/>
<rect x="1464.0" y="783.2" width="186.0" height="4.0" fill="#ffaa11"/>
<rect x="341.0" y="767.0" width="29.0" height="4.0" fill="#ffee00"/>
<rect x="410.0" y="767.0" width="38.0" height="4.0" fill="#ffee00"/>
<rect x="469.0" y="767.0" width="23.0" height="4.0" fill="#ffee00"/>
<rect x="527.0" y="767.0" width="19.0" height="4.0" fill="#ffee00"/>
<rect x="562.0" y="767.0" width="28.0" height="4.0" fill="#ffee00"/>
<rect x="616.0" y="767.0" width="33.0" height="4.0" fill="#ffee00"/>
<rect x="959.0" y="767.0" width="29.0" height="4.0" fill="#ffee00"/>
<rect x="1062.0" y="767.0" width="24.0" height="4.0" fill="#ffee00"/>
<rect x="1101.0" y="767.0" width="24.0" height="4.0" fill="#ffee00"/>
<rect x="1160.0" y="767.0" width="34.0" height="4.0" fill="#ffee00"/>
<rect x="1248.0" y="767.0" width="24.0" height="4.0" fill="#ffee00"/>
<rect x="1425.0" y="767.0" width="87.0" height="4.0" fill="#ffee00"/>
<rect x="420.0" y="750.5" width="23.0" height="4.0" fill="#99ee22"/>
<rect x="532.0" y="750.5" width="24.0" height="4.0" fill="#99ee22"/>
<rect x="567.0" y="750.5" width="23.0" height="4.0" fill="#99ee22"/>
<rect x="621.0" y="750.5" width="121.0" height="4.0" fill="#99ee22"/>
<rect x="969.0" y="750.5" width="166.0" height="4.0" fill="#99ee22"/>
<rect x="1185.0" y="750.5" width="161.0" height="4.0" fill="#99ee22"/>
<rect x="1469.0" y="750.5" width="24.0" height="4.0" fill="#99ee22"/>
<rect x="429.0" y="734.0" width="24.0" height="4.0" fill="#55cc00"/>
<rect x="576.0" y="734.0" width="157.0" height="4.0" fill="#55cc00"/>
<rect x="993.0" y="734.0" width="112.0" height="4.0" fill="#55cc00"/>
<rect x="1116.0" y="734.0" width="107.0" height="4.0" fill="#55cc00"/>
<rect x="1263.0" y="734.0" width="29.0" height="4.0" fill="#55cc00"/>
<rect x="1489.0" y="734.0" width="23.0" height="4.0" fill="#55cc00"/>
<rect x="591.0" y="718.0" width="24.0" height="4.0" fill="#00ee77"/>
<rect x="655.0" y="718.0" width="117.0" height="4.0" fill="#00ee77"/>
<rect x="1072.0" y="718.0" width="171.0" height="4.0" fill="#00ee77"/>
<rect x="1263.0" y="718.0" width="24.0" height="4.0" fill="#00ee77"/>
<rect x="596.0" y="701.5" width="137.0" height="4.0" fill="#00ddff"/>
<rect x="1091.0" y="701.5" width="29.0" height="4.0" fill="#00ddff"/>
<rect x="1199.0" y="701.5" width="24.0" height="4.0" fill="#00ddff"/>
<rect x="1273.0" y="701.5" width="53.0" height="4.0" fill="#00ddff"/>
<rect x="1111.0" y="685.0" width="24.0" height="4.0" fill="#0000cc"/>
</g>
<g stroke="#ffffff" stroke-width="2">
<path d="M113.0,834.0h8M117.0,830.0v8"/>
<path d="M240.8,834.0h8M244.8,830.0v8"/>
<path d="M510.6,834.0h8M514.6,830.0v8"/>
<path d="M707.0,834.0h8M711.0,830.0v8"/>
<path d="M832.6,834.0h8M836.6,830.0v8"/>
<path d="M961.6,834.0h8M965.6,830.0v8"/>
<path d="M985.6,834.0h8M989.6,830.0v8"/>
<path d="M1115.6,834.0h8M1119.6,830.0v8"/>
<path d="M1294.6,834.0h8M1298.6,830.0v8"/>
<path d="M1342.0,834.0h8M1346.0,830.0v8"/>
<path d="M1413.0,834.0h8M1417.0,830.0v8"/>
<path d="M1481.6,834.0h8M1485.6,830.0v8"/>
<path d="M1530.6,834.0h8M1534.6,830.0v8"/>
<path d="M1732.0,834.0h8M1736.0,830.0v8"/>
<path d="M1766.0,834.0h8M1770.0,830.0v8"/>
<path d="M171.8,818.0h8M175.8,814.0v8"/>
<path d="M255.7,818.0h8M259.7,814.0v8"/>
<path d="M323.0,818.0h8M327.0,814.0v8"/>
<path d="M437.0,818.0h8M441.0,814.0v8"/>
<path d="M599.0,818.0h8M603.0,814.0v8"/>
<path d="M717.0,818.0h8M721.0,814.0v8"/>
<path d="M792.6,818.0h8M796.6,814.0v8"/>
<path d="M938.6,818.0h8M942.6,814.0v8"/>
<path d="M1006.0,818.0h8M1010.0,814.0v8"/>
<path d="M1152.6,818.0h8M1156.6,814.0v8"/>
<path d="M1250.6,818.0h8M1254.6,814.0v8"/>
<path d="M1299.6,818.0h8M1303.6,814.0v8"/>
<path d="M1349.0,818.0h8M1353.0,814.0v8"/>
<path d="M1403.0,818.0h8M1407.0,814.0v8"/>
<path d="M1467.0,818.0h8M1471.0,814.0v8"/>
<path d="M1554.6,818.0h8M1558.6,814.0v8"/>
<path d="M173.8,802.0h8M177.8,798.0v8"/>
<path d="M377.6,802.0h8M381.6,798.0v8"/>
<path d="M545.0,802.0h8M549.0,798.0v8"/>
<path d="M682.0,802.0h8M686.0,798.0v8"/>
<path d="M741.0,802.0h8M745.0,798.0v8"/>
<path d="M1074.6,802.0h8M1078.6,798.0v8"/>
<path d="M1216.6,802.0h8M1220.6,798.0v8"/>
<path d="M1304.6,802.0h8M1308.6,798.0v8"/>
<path d="M1467.0,802.0h8M1471.0,798.0v8"/>
<path d="M1560.0,802.0h8M1564.0,798.0v8"/>
<path d="M201.9,785.2h8M205.9,781.2v8"/>
<path d="M399.6,785.2h8M403.6,781.2v8"/>
<path d="M524.6,785.2h8M528.6,781.2v8"/>
<path d="M639.0,785.2h8M643.0,781.2v8"/>
<path d="M815.0,785.2h8M819.0,781.2v8"/>
<path d="M959.0,785.2h8M963.0,781.2v8"/>
<path d="M1040.0,785.2h8M1044.0,781.2v8"/>
<path d="M1187.6,785.2h8M1191.6,781.2v8"/>
<path d="M1250.6,785.2h8M1254.6,781.2v8"/>
<path d="M1325.0,785.2h8M1329.0,781.2v8"/>
<path d="M1403.0,785.2h8M1407.0,781.2v8"/>
<path d="M1545.6,785.2h8M1549.6,781.2v8"/>
<path d="M355.6,769.0h8M359.6,765.0v8"/>
<path d="M425.6,769.0h8M429.6,765.0v8"/>
<path d="M476.0,769.0h8M480.0,765.0v8"/>
<path d="M535.0,769.0h8M539.0,765.0v8"/>
<path d="M570.6,769.0h8M574.6,765.0v8"/>
<path d="M631.0,769.0h8M635.0,765.0v8"/>
<path d="M974.0,769.0h8M978.0,765.0v8"/>
<path d="M1069.6,769.0h8M1073.6,765.0v8"/>
<path d="M1109.0,769.0h8M1113.0,765.0v8"/>
<path d="M1177.6,769.0h8M1181.6,765.0v8"/>
<path d="M1256.0,769.0h8M1260.0,765.0v8"/>
<path d="M1467.0,769.0h8M1471.0,765.0v8"/>
<path d="M426.6,752.5h8M430.6,748.5v8"/>
<path d="M540.0,752.5h8M544.0,748.5v8"/>
<path d="M574.0,752.5h8M578.0,748.5v8"/>
<path d="M704.0,752.5h8M708.0,748.5v8"/>
<path d="M1093.6,752.5h8M1097.6,748.5v8"/>
<path d="M1270.6,752.5h8M1274.6,748.5v8"/>
<path d="M1477.0,752.5h8M1481.0,748.5v8"/>
<path d="M437.0,736.0h8M441.0,732.0v8"/>
<path d="M631.0,736.0h8M635.0,732.0v8"/>
<path d="M1038.6,736.0h8M1042.6,732.0v8"/>
<path d="M1167.6,736.0h8M1171.6,732.0v8"/>
<path d="M1274.6,736.0h8M1278.6,732.0v8"/>
<path d="M1497.0,736.0h8M1501.0,732.0v8"/>
<path d="M599.0,720.0h8M603.0,716.0v8"/>
<path d="M727.0,720.0h8M731.0,716.0v8"/>
<path d="M1187.6,720.0h8M1191.6,716.0v8"/>
<path d="M1271.0,720.0h8M1275.0,716.0v8"/>
<path d="M687.0,703.5h8M691.0,699.5v8"/>
<path d="M1102.0,703.5h8M1106.0,699.5v8"/>
<path d="M1207.0,703.5h8M1211.0,699.5v8"/>
<path d="M1299.6,703.5h8M1303.6,699.5v8"/>
<path d="M1119.0,687.0h8M1123.0,683.0v8"/>
</g>
<g font-family="Liberation Sans, sans-serif" font-size="11.2" fill="#ffffff" text-anchor="middle">
<text x="117.3" y="831.1" textLength="21.36" lengthAdjust="spacingAndGlyphs">KSE</text>
<text x="254.8" y="831.1" textLength="20.54" lengthAdjust="spacingAndGlyphs">ETA</text>
<text x="494.5" y="831.1" textLength="23.68" lengthAdjust="spacingAndGlyphs">NZC</text>
<text x="710.7" y="831.1" textLength="24.27" lengthAdjust="spacingAndGlyphs">NDA</text>
<text x="852.9" y="831.1" textLength="20.77" lengthAdjust="spacingAndGlyphs">SPE</text>
<text x="945.4" y="831.1" textLength="23.87" lengthAdjust="spacingAndGlyphs">ARD</text>
<text x="1024.7" y="831.1" textLength="22.65" lengthAdjust="spacingAndGlyphs">EGE</text>
<text x="1142.4" y="831.1" textLength="21.83" lengthAdjust="spacingAndGlyphs">NTA</text>
<text x="1283.9" y="831.1" textLength="26.64" lengthAdjust="spacingAndGlyphs">MON</text>
<text x="1343.4" y="831.1" textLength="22.90" lengthAdjust="spacingAndGlyphs">URS</text>
<text x="1411.9" y="831.1" textLength="22.74" lengthAdjust="spacingAndGlyphs">AHY</text>
<text x="1485.7" y="831.1" textLength="26.33" lengthAdjust="spacingAndGlyphs">GUM</text>
<text x="1535.7" y="831.1" textLength="23.89" lengthAdjust="spacingAndGlyphs">OHY</text>
<text x="1736.0" y="831.1" textLength="22.99" lengthAdjust="spacingAndGlyphs">XHE</text>
<text x="1769.4" y="831.1" textLength="17.90" lengthAdjust="spacingAndGlyphs">EVI</text>
<text x="175.5" y="815.1" textLength="22.11" lengthAdjust="spacingAndGlyphs">AVB</text>
<text x="255.0" y="815.1" textLength="18.52" lengthAdjust="spacingAndGlyphs">ELY</text>
<text x="323.8" y="815.1" textLength="24.94" lengthAdjust="spacingAndGlyphs">CAM</text>
<text x="432.0" y="815.1" textLength="22.71" lengthAdjust="spacingAndGlyphs">SSG</text>
<text x="578.7" y="815.1" textLength="22.06" lengthAdjust="spacingAndGlyphs">PCA</text>
<text x="720.5" y="815.1" textLength="24.29" lengthAdjust="spacingAndGlyphs">AUD</text>
<text x="808.0" y="815.1" textLength="23.45" lengthAdjust="spacingAndGlyphs">AUR</text>
<text x="931.0" y="815.1" textLength="23.22" lengthAdjust="spacingAndGlyphs">DSX</text>
<text x="1009.9" y="815.1" textLength="24.63" lengthAdjust="spacingAndGlyphs">OCU</text>
<text x="1137.2" y="815.1" textLength="23.48" lengthAdjust="spacingAndGlyphs">OER</text>
<text x="1254.7" y="815.1" textLength="24.40" lengthAdjust="spacingAndGlyphs">DKD</text>
<text x="1304.2" y="815.1" textLength="23.21" lengthAdjust="spacingAndGlyphs">DSV</text>
<text x="1353.2" y="815.1" textLength="19.10" lengthAdjust="spacingAndGlyphs">ALY</text>
<text x="1407.7" y="815.1" textLength="16.49" lengthAdjust="spacingAndGlyphs">JLE</text>
<text x="1471.7" y="815.1" textLength="22.57" lengthAdjust="spacingAndGlyphs">SCC</text>
<text x="1559.2" y="815.1" textLength="21.01" lengthAdjust="spacingAndGlyphs">FEV</text>
<text x="176.3" y="799.1" textLength="19.22" lengthAdjust="spacingAndGlyphs">LYR</text>
<text x="373.0" y="799.1" textLength="20.62" lengthAdjust="spacingAndGlyphs">JMC</text>
<text x="558.7" y="799.1" textLength="17.00" lengthAdjust="spacingAndGlyphs">JPE</text>
<text x="671.4" y="799.1" textLength="21.72" lengthAdjust="spacingAndGlyphs">PAU</text>
<text x="774.2" y="799.1" textLength="19.19" lengthAdjust="spacingAndGlyphs">NIA</text>
<text x="1049.9" y="799.1" textLength="20.58" lengthAdjust="spacingAndGlyphs">STA</text>
<text x="1205.4" y="799.1" textLength="25.80" lengthAdjust="spacingAndGlyphs">NOO</text>
<text x="1353.4" y="799.1" textLength="26.09" lengthAdjust="spacingAndGlyphs">COM</text>
<text x="1470.4" y="799.1" textLength="23.83" lengthAdjust="spacingAndGlyphs">NCC</text>
<text x="1563.4" y="799.1" textLength="21.97" lengthAdjust="spacingAndGlyphs">FED</text>
<text x="205.3" y="782.3" textLength="19.23" lengthAdjust="spacingAndGlyphs">HVI</text>
<text x="412.0" y="782.3" textLength="18.60" lengthAdjust="spacingAndGlyphs">ARI</text>
<text x="529.8" y="782.3" textLength="22.42" lengthAdjust="spacingAndGlyphs">SZC</text>
<text x="617.7" y="782.3" textLength="22.06" lengthAdjust="spacingAndGlyphs">CAP</text>
<text x="818.2" y="782.3" textLength="23.46" lengthAdjust="spacingAndGlyphs">NUE</text>
<text x="961.2" y="782.3" textLength="23.29" lengthAdjust="spacingAndGlyphs">OCT</text>
<text x="1059.2" y="782.3" textLength="19.74" lengthAdjust="spacingAndGlyphs">ORI</text>
<text x="1186.4" y="782.3" textLength="25.93" lengthAdjust="spacingAndGlyphs">AMO</text>
<text x="1255.2" y="782.3" textLength="23.01" lengthAdjust="spacingAndGlyphs">DPC</text>
<text x="1328.7" y="782.3" textLength="18.49" lengthAdjust="spacingAndGlyphs">XVI</text>
<text x="1407.7" y="782.3" textLength="24.48" lengthAdjust="spacingAndGlyphs">QUA</text>
<text x="1559.5" y="782.3" textLength="23.82" lengthAdjust="spacingAndGlyphs">AAN</text>
<text x="353.1" y="766.1" textLength="21.88" lengthAdjust="spacingAndGlyphs">TAH</text>
<text x="431.7" y="766.1" textLength="17.90" lengthAdjust="spacingAndGlyphs">JEA</text>
<text x="480.4" y="766.1" textLength="13.25" lengthAdjust="spacingAndGlyphs">JIP</text>
<text x="538.9" y="766.1" textLength="20.45" lengthAdjust="spacingAndGlyphs">PPS</text>
<text x="578.9" y="766.1" textLength="22.42" lengthAdjust="spacingAndGlyphs">ZCS</text>
<text x="632.9" y="766.1" textLength="24.88" lengthAdjust="spacingAndGlyphs">GDR</text>
<text x="970.2" y="766.1" textLength="23.42" lengthAdjust="spacingAndGlyphs">DRA</text>
<text x="1073.2" y="766.1" textLength="23.35" lengthAdjust="spacingAndGlyphs">LUM</text>
<text x="1112.9" y="766.1" textLength="22.55" lengthAdjust="spacingAndGlyphs">RPU</text>
<text x="1176.4" y="766.1" textLength="22.74" lengthAdjust="spacingAndGlyphs">THA</text>
<text x="1259.4" y="766.1" textLength="21.88" lengthAdjust="spacingAndGlyphs">PSU</text>
<text x="1470.7" y="766.1" textLength="22.18" lengthAdjust="spacingAndGlyphs">XCB</text>
<text x="431.5" y="749.6" textLength="18.20" lengthAdjust="spacingAndGlyphs">JRC</text>
<text x="544.3" y="749.6" textLength="23.67" lengthAdjust="spacingAndGlyphs">CAN</text>
<text x="578.2" y="749.6" textLength="21.28" lengthAdjust="spacingAndGlyphs">FAN</text>
<text x="681.2" y="749.6" textLength="21.44" lengthAdjust="spacingAndGlyphs">PER</text>
<text x="1049.2" y="749.6" textLength="21.28" lengthAdjust="spacingAndGlyphs">CTA</text>
<text x="1264.4" y="749.6" textLength="23.70" lengthAdjust="spacingAndGlyphs">HYD</text>
<text x="1481.2" y="749.6" textLength="25.33" lengthAdjust="spacingAndGlyphs">XUM</text>
<text x="441.7" y="733.1" textLength="24.22" lengthAdjust="spacingAndGlyphs">COR</text>
<text x="657.2" y="733.1" textLength="23.01" lengthAdjust="spacingAndGlyphs">SDA</text>
<text x="1048.9" y="733.1" textLength="19.05" lengthAdjust="spacingAndGlyphs">LMI</text>
<text x="1166.4" y="733.1" textLength="21.95" lengthAdjust="spacingAndGlyphs">LEO</text>
<text x="1274.7" y="733.1" textLength="22.16" lengthAdjust="spacingAndGlyphs">EHY</text>
<text x="1499.7" y="733.1" textLength="22.38" lengthAdjust="spacingAndGlyphs">ECV</text>
<text x="602.9" y="717.1" textLength="18.49" lengthAdjust="spacingAndGlyphs">JXA</text>
<text x="715.0" y="717.1" textLength="23.04" lengthAdjust="spacingAndGlyphs">KCG</text>
<text x="1156.7" y="717.1" textLength="24.47" lengthAdjust="spacingAndGlyphs">AND</text>
<text x="1274.7" y="717.1" textLength="24.51" lengthAdjust="spacingAndGlyphs">DAD</text>
<text x="666.4" y="700.6" textLength="18.02" lengthAdjust="spacingAndGlyphs">ERI</text>
<text x="1108.4" y="700.6" textLength="21.80" lengthAdjust="spacingAndGlyphs">SLD</text>
<text x="1211.4" y="700.6" textLength="23.52" lengthAdjust="spacingAndGlyphs">ORS</text>
<text x="1298.9" y="700.6" textLength="25.21" lengthAdjust="spacingAndGlyphs">GEM</text>
<text x="1122.9" y="684.1" textLength="24.70" lengthAdjust="spacingAndGlyphs">KUM</text>
</g>
<g stroke="#ff0000" stroke-width="1.3" stroke-dasharray="5 2" stroke-dashoffset="-4.5">
<line x1="1139.5" y1="641.5" x2="1139.5" y2="842.5"/>
<line x1="1141.5" y1="641.5" x2="1141.5" y2="842.5"/>
</g>
<rect x="19.5" y="641.5" width="1766.0" height="201.0" fill="none" stroke="#ffffff" stroke-width="1.2"/>
<g stroke="#ffffff" stroke-width="1.3">
<line x1="19.70" y1="842.5" x2="19.70" y2="847.5"/>
<line x1="264.95" y1="842.5" x2="264.95" y2="847.5"/>
<line x1="510.20" y1="842.5" x2="510.20" y2="847.5"/>
<line x1="755.45" y1="842.5" x2="755.45" y2="847.5"/>
<line x1="1000.70" y1="842.5" x2="1000.70" y2="847.5"/>
<line x1="1245.95" y1="842.5" x2="1245.95" y2="847.5"/>
<line x1="1491.20" y1="842.5" x2="1491.20" y2="847.5"/>
<line x1="1736.45" y1="842.5" x2="1736.45" y2="847.5"/>
</g>
<g font-family="Liberation Sans, sans-serif" font-size="14" fill="#ffffff" text-anchor="middle">
<text x="19.70" y="862" textLength="8.84" lengthAdjust="spacingAndGlyphs">0</text>
<text x="264.95" y="862" textLength="17.67" lengthAdjust="spacingAndGlyphs">50</text>
<text x="510.20" y="862" textLength="26.51" lengthAdjust="spacingAndGlyphs">100</text>
<text x="755.45" y="862" textLength="26.51" lengthAdjust="spacingAndGlyphs">150</text>
<text x="1000.70" y="862" textLength="26.51" lengthAdjust="spacingAndGlyphs">200</text>
<text x="1245.95" y="862" textLength="26.51" lengthAdjust="spacingAndGlyphs">250</text>
<text x="1491.20" y="862" textLength="26.51" lengthAdjust="spacingAndGlyphs">300</text>
<text x="1736.45" y="862" textLength="26.51" lengthAdjust="spacingAndGlyphs">350</text>
<text x="902.4" y="882" textLength="146.7" lengthAdjust="spacingAndGlyphs">Solar longitude (deg)</text>
</g>
</svg></body></html>
